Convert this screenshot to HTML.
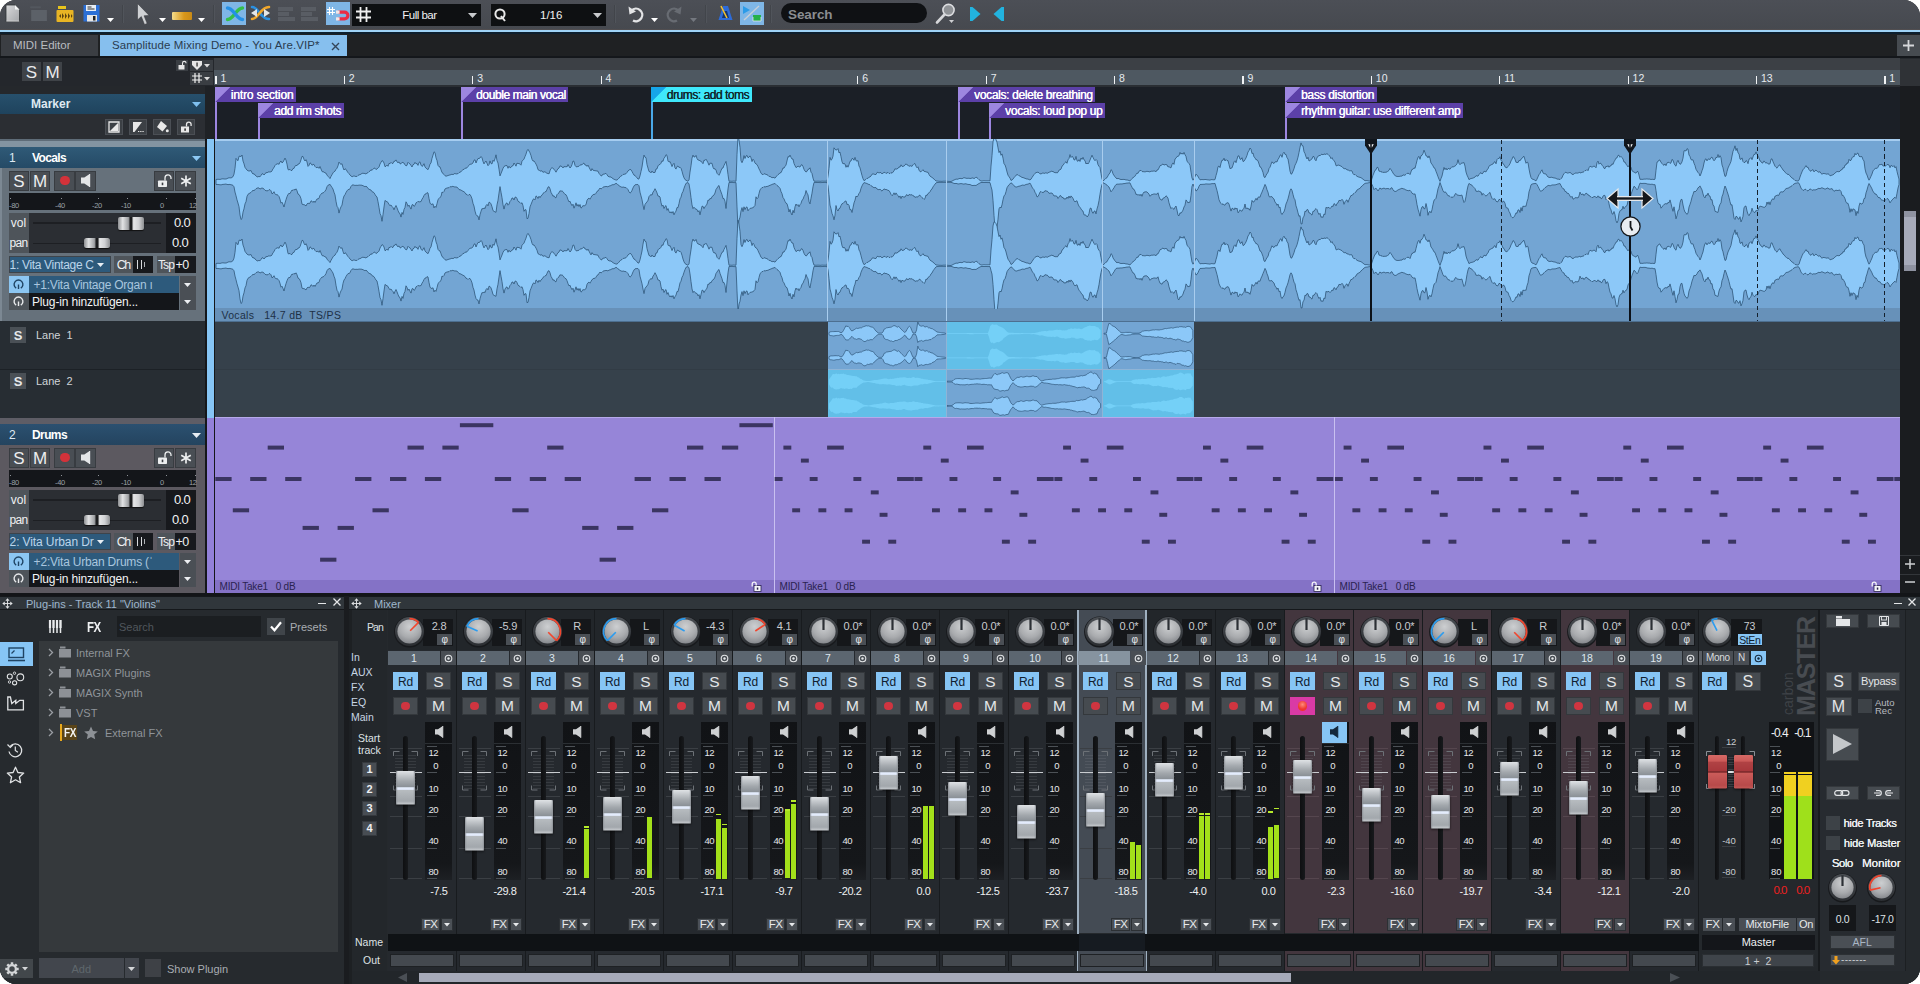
<!DOCTYPE html>
<html lang="en"><head><meta charset="utf-8"><title>Samplitude Mixing Demo - You Are.VIP</title>
<style>
html,body{margin:0;padding:0;background:#fff;}
body{width:1920px;height:984px;overflow:hidden;font-family:"Liberation Sans",sans-serif;}
#app{position:absolute;left:0;top:0;width:1920px;height:984px;overflow:hidden;background:#25292d;border-radius:16px;}
#app div,#app svg{position:absolute;box-sizing:border-box;}
#app svg{overflow:visible;}
.t{white-space:nowrap;line-height:1;}
.b{font-weight:bold;}
.btn{background:#464b51;box-shadow:inset 0 0 0 1px #33373c;}
.mk{font-size:12px;color:#fff;white-space:nowrap;line-height:15px;height:15px;padding:0 4px 0 16px;}

</style></head>
<body>
<div id="app">
<div style="left:0px;top:0px;width:1920px;height:30px;background:linear-gradient(#4c4f56,#46494f);"></div>
<div style="left:0px;top:28.8px;width:1920px;height:1.2px;background:#514e50;"></div>
<div style="left:0px;top:30px;width:1920px;height:2px;background:#9fd3f6;"></div>
<div style="left:0px;top:32px;width:1920px;height:2px;background:#0d1f2e;"></div>
<div style="left:0px;top:34px;width:1920px;height:23px;background:#1f2123;"></div>
<div style="left:0px;top:55.8px;width:1920px;height:2.4px;background:#14171b;"></div>
<svg style="left:6px;top:5px;" width="13.5" height="16.5" viewBox="0 0 13.5 16.5"><defs><linearGradient id="dg" x1="0" y1="0" x2="1" y2="1"><stop offset="0" stop-color="#d9dadc"/><stop offset="1" stop-color="#a4a6a9"/></linearGradient></defs><path d="M0 0h9l4.500 4.500v12H0z" fill="url(#dg)" stroke="#2f3236" stroke-width="0.8"/><path d="M9 0v4.500h4.500z" fill="#f4f5f6"/><path d="M0.300 16.200h12.900" stroke="#e8e9ea" stroke-width="0.700"/></svg>
<svg style="left:30px;top:5px;" width="18" height="17" viewBox="0 0 18 17"><rect x="0" y="1.300" width="11" height="2" rx="1" fill="#53575e"/><rect x="1.200" y="5" width="15.700" height="11" fill="#5c6168"/></svg>
<svg style="left:56px;top:5px;" width="19" height="18" viewBox="0 0 19 18"><rect x="2" y="1" width="8" height="3" fill="#e8c41c"/><rect x="0.5" y="5" width="17" height="12" rx="1" fill="#e9b524"/><path d="M3 11l2-2v4zM6 8v6l2-3zM9 8l2 3-2 3zM12 8v6l2-3zM15 9v4l1.5-2z" fill="#5a4310"/></svg>
<svg style="left:83px;top:4px;" width="17" height="18" viewBox="0 0 17 18"><path d="M0.5 1h16v16.5h-16z" fill="#2b6fd6"/><rect x="3" y="1" width="10" height="6" fill="#e8eef5"/><rect x="4.5" y="2.5" width="4" height="1" fill="#333"/><rect x="4.5" y="4.5" width="7" height="1" fill="#333"/><rect x="4" y="11" width="10" height="6.5" fill="#e6e6e6"/><rect x="10" y="12" width="2.5" height="4.5" fill="#222"/></svg>
<svg style="left:106.5px;top:18px;" width="7" height="4" viewBox="0 0 7 4"><path d="M0 0h7l-3.5 4z" fill="#fff"/></svg>
<div style="left:122px;top:5px;width:2px;height:18px;background:linear-gradient(90deg,#3a3d42,#585c63);"></div>
<svg style="left:136.5px;top:2.5px;" width="13" height="22" viewBox="0 0 13 22"><path d="M0.500 0.500v16.500l3.800-3.400 3.200 8 2.700-1.100-3.100-7.700 5-.400z" fill="#cfd1d4" stroke="#3a3d42" stroke-width="0.600"/></svg>
<svg style="left:158.5px;top:18px;" width="7" height="4" viewBox="0 0 7 4"><path d="M0 0h7l-3.5 4z" fill="#fff"/></svg>
<div style="left:172px;top:12px;width:20px;height:7.5px;background:linear-gradient(90deg,#f5dc8a,#d8971b 60%,#c98a15);border-radius:1px;"></div>
<svg style="left:197.5px;top:18px;" width="7" height="4" viewBox="0 0 7 4"><path d="M0 0h7l-3.5 4z" fill="#fff"/></svg>
<div style="left:213px;top:5px;width:2px;height:18px;background:linear-gradient(90deg,#3a3d42,#585c63);"></div>
<div style="left:222px;top:2px;width:24px;height:23px;background:#7fb6e6;"></div>
<svg style="left:225.5px;top:5.5px;" width="18" height="16" viewBox="0 0 18 16"><path d="M1.500 13.500C7.500 13.500 10.500 2 16.500 2" fill="none" stroke="#35c04a" stroke-width="3.400" stroke-linecap="round"/><path d="M1.500 2C7.500 2 10.500 13.500 16.500 13.500" fill="none" stroke="#2490e6" stroke-width="3.400" stroke-linecap="round"/></svg>
<svg style="left:251px;top:5px;" width="20" height="17" viewBox="0 0 20 17"><path d="M1 2C8 2 9 14 18 14" fill="none" stroke="#2a8fe0" stroke-width="2.6" stroke-linecap="round"/><path d="M1 14C8 14 9 2 18 2" fill="none" stroke="#f0a62a" stroke-width="2.6" stroke-linecap="round"/><path d="M0 8l6-4v8zM19 8l-6-4v8z" fill="#e4e6e8"/></svg>
<div style="left:278px;top:7px;width:15px;height:3.5px;background:#595d64;"></div>
<div style="left:278px;top:12px;width:10.5px;height:3.5px;background:#595d64;"></div>
<div style="left:278px;top:17px;width:16.5px;height:3.5px;background:#595d64;"></div>
<div style="left:301px;top:7px;width:15px;height:3.5px;background:#595d64;"></div>
<div style="left:301px;top:12px;width:10.5px;height:3.5px;background:#595d64;"></div>
<div style="left:301px;top:17px;width:16.5px;height:3.5px;background:#595d64;"></div>
<div style="left:326px;top:2px;width:24px;height:23px;background:#7fb6e6;"></div>
<svg style="left:327px;top:6px;" width="23" height="16" viewBox="0 0 23 16"><path d="M0 3.500h8M0 6.500h8M2.500 1v8M5.500 1v8" stroke="#ffffff" stroke-width="1.100" fill="none"/><path d="M11 4.500h6.500a5 5 0 0 1 0 10H11v-3.200h6.500a1.800 1.800 0 0 0 0-3.600H11z" fill="#ea2d45"/><rect x="9" y="4.500" width="3.600" height="3.200" fill="#f0e6e8"/><rect x="9" y="11.300" width="3.600" height="3.200" fill="#f0e6e8"/></svg>
<div style="left:352px;top:4px;width:129px;height:22px;background:#0e1012;"></div>
<svg style="left:356px;top:7px;" width="15" height="15" viewBox="0 0 15 15"><path d="M0 4.5h15M0 10.5h15M4.5 0v15M10.5 0v15" stroke="#f0f0f0" stroke-width="1.8"/></svg>
<div class="t" style="left:402.3px;top:9.5px;font-size:11.5px;color:#f2f2f2;letter-spacing:-0.51px;">Full bar</div>
<svg style="left:468px;top:13px;" width="9" height="5" viewBox="0 0 9 5"><path d="M0 0h9l-4.5 5z" fill="#c9cbce"/></svg>
<div style="left:491px;top:4px;width:115px;height:22px;background:#0e1012;"></div>
<svg style="left:494px;top:8px;" width="13" height="14" viewBox="0 0 13 14"><circle cx="6" cy="6" r="4.6" fill="none" stroke="#e8e8e8" stroke-width="2"/><path d="M7 8l4 5" stroke="#e8e8e8" stroke-width="2"/></svg>
<div class="t" style="left:540px;top:9.5px;font-size:11.5px;color:#f2f2f2;">1/16</div>
<svg style="left:593px;top:13px;" width="9" height="5" viewBox="0 0 9 5"><path d="M0 0h9l-4.5 5z" fill="#c9cbce"/></svg>
<div style="left:614px;top:5px;width:2px;height:18px;background:linear-gradient(90deg,#3a3d42,#585c63);"></div>
<svg style="left:628px;top:5px;" width="17" height="18" viewBox="0 0 17 18"><path d="M3.5 5.5A6.3 6.3 0 1 1 5 15.5" fill="none" stroke="#e3e4e6" stroke-width="2.4"/><path d="M0.5 1.5l1 8 6.5-3z" fill="#e3e4e6"/></svg>
<svg style="left:650.5px;top:18px;" width="7" height="4" viewBox="0 0 7 4"><path d="M0 0h7l-3.5 4z" fill="#fff"/></svg>
<svg style="left:665px;top:5px;" width="17" height="18" viewBox="0 0 17 18"><path d="M13.5 5.5A6.3 6.3 0 1 0 12 15.5" fill="none" stroke="#686c73" stroke-width="2.4"/><path d="M16.5 1.5l-1 8-6.5-3z" fill="#686c73"/></svg>
<svg style="left:690px;top:18px;" width="7" height="4" viewBox="0 0 7 4"><path d="M0 0h7l-3.5 4z" fill="#74787f"/></svg>
<div style="left:705px;top:5px;width:2px;height:18px;background:linear-gradient(90deg,#3a3d42,#585c63);"></div>
<svg style="left:718px;top:5px;" width="15" height="16" viewBox="0 0 15 16"><path d="M5 1h5l4.5 14h-14z" fill="#2d6bd8"/><path d="M6 6h3l2 7h-7z" fill="#17366e"/><path d="M3 1l6 12" stroke="#f2c230" stroke-width="1.6"/></svg>
<div style="left:740px;top:2px;width:24px;height:23px;background:#7fb6e6;"></div>
<svg style="left:742px;top:5px;" width="21" height="17" viewBox="0 0 21 17"><path d="M1 1l7 4-7 4z" fill="#2b9be8"/><path d="M2 15L17 1" stroke="#c9cfd6" stroke-width="1.3"/><rect x="11" y="10" width="8" height="6" fill="#25b04a"/><path d="M11 12v4h8v-4" fill="none" stroke="#dfe4ea" stroke-width="0.8"/></svg>
<div style="left:770px;top:5px;width:2px;height:18px;background:linear-gradient(90deg,#3a3d42,#585c63);"></div>
<div style="left:781px;top:3px;width:146px;height:20px;background:#0f1114;border-radius:10px;"></div>
<div class="t b" style="left:788px;top:8.3px;font-size:13.5px;color:#8a8d90;letter-spacing:-0.09px;">Search</div>
<svg style="left:935px;top:3px;" width="22" height="22" viewBox="0 0 22 22"><circle cx="13.5" cy="7" r="5.6" fill="#8f9296" stroke="#dcdde0" stroke-width="1.6"/><path d="M9.5 11.5L2 19.5" stroke="#d6d7da" stroke-width="2.6" stroke-linecap="round"/><path d="M14 17h5l-2.5 3z" fill="#cfd0d3"/></svg>
<svg style="left:969px;top:7px;" width="12" height="14" viewBox="0 0 12 14"><path d="M1 0h2.5l8 7-8 7H1z" fill="#22b3df"/></svg>
<svg style="left:993px;top:7px;" width="12" height="14" viewBox="0 0 12 14"><path d="M11 0H8.5l-8 7 8 7H11z" fill="#22b3df"/></svg>
<div style="left:1px;top:35.3px;width:97px;height:20.5px;background:#3b3e43;"></div>
<div class="t" style="left:13px;top:40.3px;font-size:11.5px;color:#b9bcc0;">MIDI Editor</div>
<div style="left:100px;top:35.3px;width:247px;height:20.5px;background:#86bfee;"></div>
<div class="t" style="left:112px;top:40.3px;font-size:11.5px;color:#2a3c50;letter-spacing:0.10px;">Samplitude Mixing Demo - You Are.VIP*</div>
<svg style="left:331px;top:42px;" width="9" height="9" viewBox="0 0 9 9"><path d="M1 1l7 7M8 1l-7 7" stroke="#34465a" stroke-width="1.4"/></svg>
<div style="left:1897px;top:35px;width:23px;height:21px;background:#464b50;"></div>
<svg style="left:1903px;top:40px;" width="11" height="11" viewBox="0 0 11 11"><path d="M0 5.5h11M5.5 0v11" stroke="#d5d7da" stroke-width="1.8"/></svg>
<div style="left:0px;top:58px;width:214px;height:28px;background:#24272c;"></div>
<div style="left:214px;top:58px;width:1686px;height:12px;background:#3c4045;"></div>
<div style="left:214px;top:70px;width:1686px;height:15.5px;background:#4e5861;"></div>
<div style="left:214px;top:85px;width:1686px;height:1.5px;background:#2a2e33;"></div>
<div style="left:1900px;top:59px;width:20px;height:537px;background:#1a1c1f;"></div>
<div style="left:1900px;top:59px;width:20px;height:27px;background:#2f3236;"></div>
<div style="left:22px;top:62px;width:19px;height:19px;background:#3f4348;"></div>
<div class="t" style="left:22px;top:64px;font-size:17px;color:#e9eaec;width:19px;text-align:center;">S</div>
<div style="left:43px;top:62px;width:19px;height:19px;background:#3f4348;"></div>
<div class="t" style="left:43px;top:64px;font-size:17px;color:#e9eaec;width:19px;text-align:center;">M</div>
<div style="left:176px;top:60px;width:12px;height:11px;background:#3a3e43;"></div>
<svg style="left:178px;top:61px;" width="9" height="9" viewBox="0 0 9 9"><rect x="0.5" y="4" width="6" height="4.5" fill="#e6e6e6"/><path d="M4.5 4V2.2a1.8 1.8 0 0 1 3.6 0" fill="none" stroke="#e6e6e6" stroke-width="1.1"/></svg>
<div style="left:190px;top:60px;width:23px;height:11px;background:#3a3e43;"></div>
<svg style="left:192px;top:61px;" width="10" height="9" viewBox="0 0 10 9"><path d="M0 0h10v4l-5 5-5-5z" fill="#e6e6e6"/><rect x="4.4" y="1.5" width="1.3" height="4" fill="#333"/></svg>
<svg style="left:204px;top:64px;" width="6" height="3.5" viewBox="0 0 6 3.5"><path d="M0 0h6l-3.0 3.5z" fill="#dcdcdc"/></svg>
<div style="left:190px;top:72px;width:23px;height:13px;background:#3a3e43;"></div>
<svg style="left:192px;top:73px;" width="10" height="10" viewBox="0 0 10 10"><path d="M0 3h10M0 7h10M3 0v10M7 0v10" stroke="#f0f0f0" stroke-width="1.2"/></svg>
<svg style="left:204px;top:77px;" width="6" height="3.5" viewBox="0 0 6 3.5"><path d="M0 0h6l-3.0 3.5z" fill="#dcdcdc"/></svg>
<div style="left:215.4px;top:76px;width:1.2px;height:8px;background:#f0f2f4;"></div>
<div class="t" style="left:220.4px;top:73.3px;font-size:10.5px;color:#e6eaee;">1</div>
<div style="left:343.78px;top:76px;width:1.2px;height:8px;background:#f0f2f4;"></div>
<div class="t" style="left:348.78px;top:73.3px;font-size:10.5px;color:#e6eaee;">2</div>
<div style="left:472.16px;top:76px;width:1.2px;height:8px;background:#f0f2f4;"></div>
<div class="t" style="left:477.16px;top:73.3px;font-size:10.5px;color:#e6eaee;">3</div>
<div style="left:600.54px;top:76px;width:1.2px;height:8px;background:#f0f2f4;"></div>
<div class="t" style="left:605.54px;top:73.3px;font-size:10.5px;color:#e6eaee;">4</div>
<div style="left:728.92px;top:76px;width:1.2px;height:8px;background:#f0f2f4;"></div>
<div class="t" style="left:733.92px;top:73.3px;font-size:10.5px;color:#e6eaee;">5</div>
<div style="left:857.3px;top:76px;width:1.2px;height:8px;background:#f0f2f4;"></div>
<div class="t" style="left:862.3px;top:73.3px;font-size:10.5px;color:#e6eaee;">6</div>
<div style="left:985.68px;top:76px;width:1.2px;height:8px;background:#f0f2f4;"></div>
<div class="t" style="left:990.68px;top:73.3px;font-size:10.5px;color:#e6eaee;">7</div>
<div style="left:1114.06px;top:76px;width:1.2px;height:8px;background:#f0f2f4;"></div>
<div class="t" style="left:1119.06px;top:73.3px;font-size:10.5px;color:#e6eaee;">8</div>
<div style="left:1242.44px;top:76px;width:1.2px;height:8px;background:#f0f2f4;"></div>
<div class="t" style="left:1247.44px;top:73.3px;font-size:10.5px;color:#e6eaee;">9</div>
<div style="left:1370.82px;top:76px;width:1.2px;height:8px;background:#f0f2f4;"></div>
<div class="t" style="left:1375.82px;top:73.3px;font-size:10.5px;color:#e6eaee;">10</div>
<div style="left:1499.2px;top:76px;width:1.2px;height:8px;background:#f0f2f4;"></div>
<div class="t" style="left:1504.2px;top:73.3px;font-size:10.5px;color:#e6eaee;">11</div>
<div style="left:1627.58px;top:76px;width:1.2px;height:8px;background:#f0f2f4;"></div>
<div class="t" style="left:1632.58px;top:73.3px;font-size:10.5px;color:#e6eaee;">12</div>
<div style="left:1755.96px;top:76px;width:1.2px;height:8px;background:#f0f2f4;"></div>
<div class="t" style="left:1760.96px;top:73.3px;font-size:10.5px;color:#e6eaee;">13</div>
<div style="left:1884.34px;top:76px;width:1.2px;height:8px;background:#f0f2f4;"></div>
<div class="t" style="left:1889.34px;top:73.3px;font-size:10.5px;color:#e6eaee;">1</div>
<div style="left:214px;top:86.5px;width:1686px;height:52.5px;background:#1b1f26;"></div>
<div style="left:215px;top:87px;width:1.6px;height:52px;background:#9d86e0;"></div>
<div style="left:215px;top:87px;width:81px;height:15px;background:linear-gradient(135deg,#9d86e0 0,#9d86e0 10.5px,#5c40a8 11px);"></div>
<div class="t" style="left:230.7px;top:88.6px;font-size:12px;color:#fff;letter-spacing:-0.16px;text-shadow:0.35px 0 0 #fff;">intro section</div>
<div style="left:258px;top:103px;width:1.6px;height:36px;background:#9d86e0;"></div>
<div style="left:258px;top:103px;width:85.7px;height:15px;background:linear-gradient(135deg,#9d86e0 0,#9d86e0 10.5px,#5c40a8 11px);"></div>
<div class="t" style="left:274px;top:104.6px;font-size:12px;color:#fff;letter-spacing:-0.39px;text-shadow:0.35px 0 0 #fff;">add rim shots</div>
<div style="left:461px;top:87px;width:1.6px;height:52px;background:#9d86e0;"></div>
<div style="left:461px;top:87px;width:107.4px;height:15px;background:linear-gradient(135deg,#9d86e0 0,#9d86e0 10.5px,#5c40a8 11px);"></div>
<div class="t" style="left:476px;top:88.6px;font-size:12px;color:#fff;letter-spacing:-0.41px;text-shadow:0.35px 0 0 #fff;">double main vocal</div>
<div style="left:651px;top:87px;width:1.6px;height:52px;background:#4aa8e8;"></div>
<div style="left:651px;top:87px;width:100.7px;height:15px;background:linear-gradient(135deg,#16a5e8 0,#16a5e8 10.5px,#3fe8fb 11px);"></div>
<div class="t" style="left:666.7px;top:88.6px;font-size:12px;color:#10262c;letter-spacing:-0.47px;text-shadow:0.35px 0 0 #10262c;">drums: add toms</div>
<div style="left:958px;top:87px;width:1.6px;height:52px;background:#9d86e0;"></div>
<div style="left:958px;top:87px;width:137.4px;height:15px;background:linear-gradient(135deg,#9d86e0 0,#9d86e0 10.5px,#5c40a8 11px);"></div>
<div class="t" style="left:974px;top:88.6px;font-size:12px;color:#fff;letter-spacing:-0.34px;text-shadow:0.35px 0 0 #fff;">vocals: delete breathing</div>
<div style="left:989px;top:103px;width:1.6px;height:36px;background:#9d86e0;"></div>
<div style="left:989px;top:103px;width:116px;height:15px;background:linear-gradient(135deg,#9d86e0 0,#9d86e0 10.5px,#5c40a8 11px);"></div>
<div class="t" style="left:1005px;top:104.6px;font-size:12px;color:#fff;letter-spacing:-0.32px;text-shadow:0.35px 0 0 #fff;">vocals: loud pop up</div>
<div style="left:1285px;top:87px;width:1.6px;height:52px;background:#9d86e0;"></div>
<div style="left:1285px;top:87px;width:91.6px;height:15px;background:linear-gradient(135deg,#9d86e0 0,#9d86e0 10.5px,#5c40a8 11px);"></div>
<div class="t" style="left:1300.9px;top:88.6px;font-size:12px;color:#fff;letter-spacing:-0.29px;text-shadow:0.35px 0 0 #fff;">bass distortion</div>
<div style="left:1285px;top:103px;width:1.6px;height:36px;background:#9d86e0;"></div>
<div style="left:1285px;top:103px;width:178px;height:15px;background:linear-gradient(135deg,#9d86e0 0,#9d86e0 10.5px,#5c40a8 11px);"></div>
<div class="t" style="left:1300.9px;top:104.6px;font-size:12px;color:#fff;letter-spacing:-0.31px;text-shadow:0.35px 0 0 #fff;">rhythm guitar: use different amp</div>
<div style="left:0px;top:86px;width:205px;height:8px;background:#25282c;"></div>
<div style="left:205px;top:86px;width:9px;height:53px;background:#1f2226;"></div>
<div style="left:0px;top:94px;width:205px;height:20px;background:linear-gradient(#27506c,#1f435d);"></div>
<div class="t b" style="left:31px;top:98px;font-size:12px;color:#dfe9f2;">Marker</div>
<svg style="left:192px;top:102px;" width="9" height="5" viewBox="0 0 9 5"><path d="M0 0h9l-4.5 5z" fill="#7fc0ef"/></svg>
<div style="left:0px;top:114px;width:205px;height:25px;background:#2b2e33;"></div>
<div style="left:105px;top:119px;width:18px;height:16px;background:#3c4045;box-shadow:inset 0 0 0 1px #4b4f55;"></div>
<div style="left:129px;top:119px;width:18px;height:16px;background:#3c4045;box-shadow:inset 0 0 0 1px #4b4f55;"></div>
<div style="left:153px;top:119px;width:18px;height:16px;background:#3c4045;box-shadow:inset 0 0 0 1px #4b4f55;"></div>
<div style="left:177px;top:119px;width:18px;height:16px;background:#3c4045;box-shadow:inset 0 0 0 1px #4b4f55;"></div>
<svg style="left:108px;top:121px;" width="12" height="12" viewBox="0 0 12 12"><path d="M1 1h10v10H1z" fill="none" stroke="#e8e8e8" stroke-width="1.3"/><path d="M10 2v8H2z" fill="#e8e8e8"/></svg>
<svg style="left:132px;top:121px;" width="13" height="12" viewBox="0 0 13 12"><path d="M1 1h9L2.5 11H1z" fill="#e8e8e8"/><path d="M6 10.5h1.3M8.2 10.5h1.3M10.4 10.5h1.3" stroke="#e8e8e8" stroke-width="1.2"/></svg>
<svg style="left:156px;top:120px;" width="13" height="13" viewBox="0 0 13 13"><path d="M5 1l6 5-4.5 5.5L1 7z" fill="#e8e8e8"/><circle cx="11.3" cy="10.8" r="1.5" fill="#e8e8e8"/></svg>
<svg style="left:180px;top:121px;" width="12" height="12" viewBox="0 0 12 12"><rect x="1" y="5.5" width="8" height="6" fill="#e8e8e8"/><path d="M6.5 5.5V3.4a2.3 2.3 0 0 1 4.6 0V5" fill="none" stroke="#e8e8e8" stroke-width="1.3"/><rect x="4.3" y="7.4" width="1.6" height="2.4" fill="#333"/></svg>
<div style="left:0px;top:139px;width:205px;height:8.5px;background:#8394a1;"></div>
<div style="left:0px;top:139px;width:205px;height:1.5px;background:#5e6c78;"></div>
<div style="left:0px;top:168px;width:205px;height:153px;background:#66717b;"></div>
<div style="left:0px;top:147px;width:205px;height:21px;background:linear-gradient(#2f5a77,#254a66);"></div>
<div class="t" style="left:9px;top:152px;font-size:12px;color:#dfe9f2;">1</div>
<div class="t b" style="left:32px;top:152px;font-size:12px;color:#ffffff;letter-spacing:-0.63px;">Vocals</div>
<svg style="left:192px;top:156px;" width="9" height="5" viewBox="0 0 9 5"><path d="M0 0h9l-4.5 5z" fill="#8cc8f4"/></svg>
<div style="left:9px;top:170.5px;width:20.3px;height:20px;background:#494e54;box-shadow:inset 0 0 0 1px #383c41;"></div>
<div style="left:29.8px;top:170.5px;width:20.6px;height:20px;background:#494e54;box-shadow:inset 0 0 0 1px #383c41;"></div>
<div style="left:54.2px;top:170.5px;width:20.5px;height:20px;background:#494e54;box-shadow:inset 0 0 0 1px #383c41;"></div>
<div style="left:75.4px;top:170.5px;width:20.8px;height:20px;background:#494e54;box-shadow:inset 0 0 0 1px #383c41;"></div>
<div style="left:154px;top:170.5px;width:20.2px;height:20px;background:#494e54;box-shadow:inset 0 0 0 1px #383c41;"></div>
<div style="left:174.8px;top:170.5px;width:20.8px;height:20px;background:#494e54;box-shadow:inset 0 0 0 1px #383c41;"></div>
<div class="t" style="left:9px;top:172.5px;font-size:17px;color:#ecedef;width:20px;text-align:center;">S</div>
<div class="t" style="left:30px;top:172.5px;font-size:17px;color:#ecedef;width:20px;text-align:center;">M</div>
<div style="left:60px;top:175.7px;width:9.6px;height:9.6px;background:#d3323a;border-radius:50%;"></div>
<svg style="left:80.5px;top:174px;" width="10" height="13" viewBox="0 0 10 13"><path d="M0 3.5h3.3L8.6 0v13.0L3.3 9.5H0z" fill="#e4e6e8"/><path d="M8.6 0v13.0" stroke="#e4e6e8" stroke-width="1.2"/></svg>
<svg style="left:156.5px;top:174px;" width="16" height="14" viewBox="0 0 16 14"><rect x="1" y="6.5" width="9" height="6.5" rx="0.8" fill="#eceeef"/><path d="M8 6.5V4a3 3 0 0 1 6-.2V5" fill="none" stroke="#eceeef" stroke-width="1.3"/><rect x="4.7" y="8.6" width="1.6" height="2.6" fill="#3a3e43"/></svg>
<svg style="left:179.5px;top:175px;" width="12" height="12" viewBox="0 0 12 12"><path d="M6 0.5v11M1.2 3.2l9.6 5.6M10.8 3.2L1.2 8.8" stroke="#eceeef" stroke-width="1.7"/></svg>
<div style="left:9px;top:193px;width:187px;height:17px;background:#14161a;"></div>
<div style="left:10px;top:197.5px;width:1px;height:1.5px;background:#8e9297;"></div>
<div class="t" style="left:9px;top:201.5px;font-size:7.5px;color:#9ea2a8;letter-spacing:-0.3px;">-80</div>
<div style="left:61px;top:197.5px;width:1px;height:1.5px;background:#8e9297;"></div>
<div class="t" style="left:55px;top:201.5px;font-size:7.5px;color:#9ea2a8;letter-spacing:-0.3px;">-40</div>
<div style="left:98px;top:197.5px;width:1px;height:1.5px;background:#8e9297;"></div>
<div class="t" style="left:92px;top:201.5px;font-size:7.5px;color:#9ea2a8;letter-spacing:-0.3px;">-20</div>
<div style="left:127px;top:197.5px;width:1px;height:1.5px;background:#8e9297;"></div>
<div class="t" style="left:121px;top:201.5px;font-size:7.5px;color:#9ea2a8;letter-spacing:-0.3px;">-10</div>
<div style="left:166px;top:197.5px;width:1px;height:1.5px;background:#8e9297;"></div>
<div class="t" style="left:160px;top:201.5px;font-size:7.5px;color:#9ea2a8;letter-spacing:-0.3px;">0</div>
<div style="left:195px;top:197.5px;width:1px;height:1.5px;background:#8e9297;"></div>
<div class="t" style="left:189px;top:201.5px;font-size:7.5px;color:#9ea2a8;letter-spacing:-0.3px;">12</div>
<div style="left:9px;top:213px;width:187px;height:40px;background:#2b2e33;"></div>
<div style="left:9px;top:213px;width:19.5px;height:19.5px;background:#4e545a;"></div>
<div style="left:9px;top:233px;width:19.5px;height:20px;background:#4e545a;"></div>
<div style="left:166px;top:213px;width:30px;height:40px;background:#17191d;"></div>
<div class="t" style="left:10.8px;top:216.5px;font-size:12px;color:#f0f1f2;letter-spacing:0.02px;">vol</div>
<div class="t" style="left:9.4px;top:236.5px;font-size:12px;color:#f0f1f2;letter-spacing:-0.61px;">pan</div>
<div style="left:33px;top:222px;width:128px;height:1.5px;background:#1d1f23;"></div>
<div style="left:33px;top:242.5px;width:128px;height:1.5px;background:#1d1f23;"></div>
<div style="left:118px;top:217px;width:26px;height:12.5px;background:linear-gradient(90deg,#8d8f92,#e2e3e4 18%,#9fa1a4 40%,#1c1d1f 47%,#1c1d1f 52%,#e6e7e8 60%,#d0d1d3 80%,#8d8f92);border-radius:2px;box-shadow:0 1px 1px #111;"></div>
<div style="left:84px;top:238px;width:26px;height:9.5px;background:linear-gradient(90deg,#8d8f92,#e2e3e4 18%,#9fa1a4 40%,#1c1d1f 47%,#1c1d1f 53%,#e6e7e8 60%,#d0d1d3 80%,#8d8f92);border-radius:2.5px;box-shadow:0 1px 1px #111;"></div>
<div class="t" style="left:174px;top:215.5px;font-size:13px;color:#f2f3f4;letter-spacing:-0.69px;">0.0</div>
<div class="t" style="left:172px;top:235.5px;font-size:13px;color:#f2f3f4;letter-spacing:-0.69px;">0.0</div>
<div style="left:9px;top:256px;width:101.5px;height:17px;background:#2d5a7c;box-shadow:inset 0 0 0 1px #3d444b;"></div>
<div class="t" style="left:9.6px;top:259px;font-size:12px;color:#bcd5ea;letter-spacing:-0.33px;">1: Vita Vintage C</div>
<svg style="left:97px;top:263px;" width="7" height="4" viewBox="0 0 7 4"><path d="M0 0h7l-3.5 4z" fill="#e8eef4"/></svg>
<div style="left:114px;top:256px;width:19px;height:17px;background:#4e545a;"></div>
<div style="left:133px;top:256px;width:20px;height:17px;background:#17191d;"></div>
<div class="t" style="left:116.7px;top:258.5px;font-size:12.5px;color:#eef0f2;letter-spacing:-1.34px;">Ch</div>
<div style="left:137px;top:260px;width:1.3px;height:9px;background:#d8dadd;"></div>
<div style="left:140.5px;top:260px;width:1.3px;height:9px;background:#d8dadd;"></div>
<div style="left:144px;top:262px;width:1.2px;height:5px;background:#b0b3b7;"></div>
<div style="left:157px;top:256px;width:18px;height:17px;background:#4e545a;"></div>
<div style="left:175px;top:256px;width:21px;height:17px;background:#17191d;"></div>
<div class="t" style="left:158px;top:258.5px;font-size:12px;color:#eef0f2;letter-spacing:-0.89px;">Tsp</div>
<div class="t" style="left:175.6px;top:259px;font-size:12.5px;color:#eef0f2;letter-spacing:-0.73px;">+0</div>
<div style="left:9px;top:276px;width:19.5px;height:16.5px;background:#8cc6f2;"></div>
<div style="left:28.5px;top:276px;width:150px;height:16.5px;background:#2d5a7c;"></div>
<div style="left:180px;top:276px;width:16px;height:16.5px;background:#4a4f55;"></div>
<div style="left:9px;top:293px;width:19.5px;height:16.5px;background:#4e545a;"></div>
<div style="left:28.5px;top:293px;width:150px;height:16.5px;background:#14161a;"></div>
<div style="left:180px;top:293px;width:16px;height:16.5px;background:#4a4f55;"></div>
<svg style="left:13px;top:279px;" width="11" height="11" viewBox="0 0 11 11"><path d="M3.2 9.2A4.4 4.4 0 1 1 7.8 9.2" fill="none" stroke="#1f4464" stroke-width="1.4"/><path d="M5.5 5.5v4.5" stroke="#1f4464" stroke-width="1.4"/></svg>
<svg style="left:184px;top:282.5px;" width="7" height="4" viewBox="0 0 7 4"><path d="M0 0h7l-3.5 4z" fill="#eceff2"/></svg>
<svg style="left:13px;top:296px;" width="11" height="11" viewBox="0 0 11 11"><path d="M3.2 9.2A4.4 4.4 0 1 1 7.8 9.2" fill="none" stroke="#e8eaec" stroke-width="1.4"/><path d="M5.5 5.5v4.5" stroke="#e8eaec" stroke-width="1.4"/></svg>
<svg style="left:184px;top:299.5px;" width="7" height="4" viewBox="0 0 7 4"><path d="M0 0h7l-3.5 4z" fill="#eceff2"/></svg>
<div class="t" style="left:33.6px;top:278.5px;font-size:12px;color:#a9c6df;letter-spacing:-0.25px;">+1:Vita Vintage Organ ı</div>
<div class="t" style="left:32px;top:295.5px;font-size:12px;color:#f2f3f4;letter-spacing:-0.16px;">Plug-in hinzufügen...</div>
<div style="left:0px;top:168px;width:2px;height:153px;background:#7c8893;"></div>
<div style="left:0px;top:321px;width:205px;height:96.5px;background:#272d33;"></div>
<div style="left:0px;top:369px;width:205px;height:1px;background:#1c2126;"></div>
<div style="left:10px;top:327px;width:16px;height:15.5px;background:#4a5056;"></div>
<div class="t b" style="left:10px;top:329px;font-size:13px;color:#e6e8ea;width:16px;text-align:center;">S</div>
<div class="t" style="left:36px;top:330px;font-size:11px;color:#d0d4d8;">Lane&nbsp;&nbsp;1</div>
<div style="left:10px;top:373px;width:16px;height:15.5px;background:#4a5056;"></div>
<div class="t b" style="left:10px;top:375px;font-size:13px;color:#e6e8ea;width:16px;text-align:center;">S</div>
<div class="t" style="left:36px;top:376px;font-size:11px;color:#d0d4d8;">Lane&nbsp;&nbsp;2</div>
<div style="left:205px;top:139px;width:1.5px;height:457px;background:#15171a;"></div>
<div style="left:206.5px;top:139px;width:7px;height:278.5px;background:#86c5f5;"></div>
<div style="left:213.5px;top:139px;width:1.5px;height:457px;background:#15171a;"></div>
<div style="left:206.5px;top:417.5px;width:7px;height:176px;background:#9381d9;"></div>
<div style="left:0px;top:417.5px;width:205px;height:7px;background:#5e5d66;"></div>
<div style="left:0px;top:445px;width:205px;height:153px;background:#5c5960;"></div>
<div style="left:0px;top:424px;width:205px;height:21px;background:linear-gradient(#2b5070,#24445f);"></div>
<div class="t" style="left:9px;top:429px;font-size:12px;color:#dfe9f2;">2</div>
<div class="t b" style="left:32px;top:429px;font-size:12px;color:#ffffff;letter-spacing:-0.60px;">Drums</div>
<svg style="left:192px;top:433px;" width="9" height="5" viewBox="0 0 9 5"><path d="M0 0h9l-4.5 5z" fill="#e6ecf2"/></svg>
<div style="left:9px;top:447.5px;width:20.3px;height:20px;background:#494e54;box-shadow:inset 0 0 0 1px #383c41;"></div>
<div style="left:29.8px;top:447.5px;width:20.6px;height:20px;background:#494e54;box-shadow:inset 0 0 0 1px #383c41;"></div>
<div style="left:54.2px;top:447.5px;width:20.5px;height:20px;background:#494e54;box-shadow:inset 0 0 0 1px #383c41;"></div>
<div style="left:75.4px;top:447.5px;width:20.8px;height:20px;background:#494e54;box-shadow:inset 0 0 0 1px #383c41;"></div>
<div style="left:154px;top:447.5px;width:20.2px;height:20px;background:#494e54;box-shadow:inset 0 0 0 1px #383c41;"></div>
<div style="left:174.8px;top:447.5px;width:20.8px;height:20px;background:#494e54;box-shadow:inset 0 0 0 1px #383c41;"></div>
<div class="t" style="left:9px;top:449.5px;font-size:17px;color:#ecedef;width:20px;text-align:center;">S</div>
<div class="t" style="left:30px;top:449.5px;font-size:17px;color:#ecedef;width:20px;text-align:center;">M</div>
<div style="left:60px;top:452.7px;width:9.6px;height:9.6px;background:#d3323a;border-radius:50%;"></div>
<svg style="left:80.5px;top:451px;" width="10" height="13" viewBox="0 0 10 13"><path d="M0 3.5h3.3L8.6 0v13.0L3.3 9.5H0z" fill="#e4e6e8"/><path d="M8.6 0v13.0" stroke="#e4e6e8" stroke-width="1.2"/></svg>
<svg style="left:156.5px;top:451px;" width="16" height="14" viewBox="0 0 16 14"><rect x="1" y="6.5" width="9" height="6.5" rx="0.8" fill="#eceeef"/><path d="M8 6.5V4a3 3 0 0 1 6-.2V5" fill="none" stroke="#eceeef" stroke-width="1.3"/><rect x="4.7" y="8.6" width="1.6" height="2.6" fill="#3a3e43"/></svg>
<svg style="left:179.5px;top:452px;" width="12" height="12" viewBox="0 0 12 12"><path d="M6 0.5v11M1.2 3.2l9.6 5.6M10.8 3.2L1.2 8.8" stroke="#eceeef" stroke-width="1.7"/></svg>
<div style="left:9px;top:470px;width:187px;height:17px;background:#14161a;"></div>
<div style="left:10px;top:474.5px;width:1px;height:1.5px;background:#8e9297;"></div>
<div class="t" style="left:9px;top:478.5px;font-size:7.5px;color:#9ea2a8;letter-spacing:-0.3px;">-80</div>
<div style="left:61px;top:474.5px;width:1px;height:1.5px;background:#8e9297;"></div>
<div class="t" style="left:55px;top:478.5px;font-size:7.5px;color:#9ea2a8;letter-spacing:-0.3px;">-40</div>
<div style="left:98px;top:474.5px;width:1px;height:1.5px;background:#8e9297;"></div>
<div class="t" style="left:92px;top:478.5px;font-size:7.5px;color:#9ea2a8;letter-spacing:-0.3px;">-20</div>
<div style="left:127px;top:474.5px;width:1px;height:1.5px;background:#8e9297;"></div>
<div class="t" style="left:121px;top:478.5px;font-size:7.5px;color:#9ea2a8;letter-spacing:-0.3px;">-10</div>
<div style="left:166px;top:474.5px;width:1px;height:1.5px;background:#8e9297;"></div>
<div class="t" style="left:160px;top:478.5px;font-size:7.5px;color:#9ea2a8;letter-spacing:-0.3px;">0</div>
<div style="left:195px;top:474.5px;width:1px;height:1.5px;background:#8e9297;"></div>
<div class="t" style="left:189px;top:478.5px;font-size:7.5px;color:#9ea2a8;letter-spacing:-0.3px;">12</div>
<div style="left:9px;top:490px;width:187px;height:40px;background:#2b2e33;"></div>
<div style="left:9px;top:490px;width:19.5px;height:19.5px;background:#4e545a;"></div>
<div style="left:9px;top:510px;width:19.5px;height:20px;background:#4e545a;"></div>
<div style="left:166px;top:490px;width:30px;height:40px;background:#17191d;"></div>
<div class="t" style="left:10.8px;top:493.5px;font-size:12px;color:#f0f1f2;letter-spacing:0.02px;">vol</div>
<div class="t" style="left:9.4px;top:513.5px;font-size:12px;color:#f0f1f2;letter-spacing:-0.61px;">pan</div>
<div style="left:33px;top:499px;width:128px;height:1.5px;background:#1d1f23;"></div>
<div style="left:33px;top:519.5px;width:128px;height:1.5px;background:#1d1f23;"></div>
<div style="left:118px;top:494px;width:26px;height:12.5px;background:linear-gradient(90deg,#8d8f92,#e2e3e4 18%,#9fa1a4 40%,#1c1d1f 47%,#1c1d1f 52%,#e6e7e8 60%,#d0d1d3 80%,#8d8f92);border-radius:2px;box-shadow:0 1px 1px #111;"></div>
<div style="left:84px;top:515px;width:26px;height:9.5px;background:linear-gradient(90deg,#8d8f92,#e2e3e4 18%,#9fa1a4 40%,#1c1d1f 47%,#1c1d1f 53%,#e6e7e8 60%,#d0d1d3 80%,#8d8f92);border-radius:2.5px;box-shadow:0 1px 1px #111;"></div>
<div class="t" style="left:174px;top:492.5px;font-size:13px;color:#f2f3f4;letter-spacing:-0.69px;">0.0</div>
<div class="t" style="left:172px;top:512.5px;font-size:13px;color:#f2f3f4;letter-spacing:-0.69px;">0.0</div>
<div style="left:9px;top:533px;width:101.5px;height:17px;background:#2d5a7c;box-shadow:inset 0 0 0 1px #3d444b;"></div>
<div class="t" style="left:9.6px;top:536px;font-size:12px;color:#bcd5ea;letter-spacing:-0.11px;">2: Vita Urban Dr</div>
<svg style="left:97px;top:540px;" width="7" height="4" viewBox="0 0 7 4"><path d="M0 0h7l-3.5 4z" fill="#e8eef4"/></svg>
<div style="left:114px;top:533px;width:19px;height:17px;background:#4e545a;"></div>
<div style="left:133px;top:533px;width:20px;height:17px;background:#17191d;"></div>
<div class="t" style="left:116.7px;top:535.5px;font-size:12.5px;color:#eef0f2;letter-spacing:-1.34px;">Ch</div>
<div style="left:137px;top:537px;width:1.3px;height:9px;background:#d8dadd;"></div>
<div style="left:140.5px;top:537px;width:1.3px;height:9px;background:#d8dadd;"></div>
<div style="left:144px;top:539px;width:1.2px;height:5px;background:#b0b3b7;"></div>
<div style="left:157px;top:533px;width:18px;height:17px;background:#4e545a;"></div>
<div style="left:175px;top:533px;width:21px;height:17px;background:#17191d;"></div>
<div class="t" style="left:158px;top:535.5px;font-size:12px;color:#eef0f2;letter-spacing:-0.89px;">Tsp</div>
<div class="t" style="left:175.6px;top:536px;font-size:12.5px;color:#eef0f2;letter-spacing:-0.73px;">+0</div>
<div style="left:9px;top:553px;width:19.5px;height:16.5px;background:#8cc6f2;"></div>
<div style="left:28.5px;top:553px;width:150px;height:16.5px;background:#2d5a7c;"></div>
<div style="left:180px;top:553px;width:16px;height:16.5px;background:#4a4f55;"></div>
<div style="left:9px;top:570px;width:19.5px;height:16.5px;background:#4e545a;"></div>
<div style="left:28.5px;top:570px;width:150px;height:16.5px;background:#14161a;"></div>
<div style="left:180px;top:570px;width:16px;height:16.5px;background:#4a4f55;"></div>
<svg style="left:13px;top:556px;" width="11" height="11" viewBox="0 0 11 11"><path d="M3.2 9.2A4.4 4.4 0 1 1 7.8 9.2" fill="none" stroke="#1f4464" stroke-width="1.4"/><path d="M5.5 5.5v4.5" stroke="#1f4464" stroke-width="1.4"/></svg>
<svg style="left:184px;top:559.5px;" width="7" height="4" viewBox="0 0 7 4"><path d="M0 0h7l-3.5 4z" fill="#eceff2"/></svg>
<svg style="left:13px;top:573px;" width="11" height="11" viewBox="0 0 11 11"><path d="M3.2 9.2A4.4 4.4 0 1 1 7.8 9.2" fill="none" stroke="#e8eaec" stroke-width="1.4"/><path d="M5.5 5.5v4.5" stroke="#e8eaec" stroke-width="1.4"/></svg>
<svg style="left:184px;top:576.5px;" width="7" height="4" viewBox="0 0 7 4"><path d="M0 0h7l-3.5 4z" fill="#eceff2"/></svg>
<div class="t" style="left:33.6px;top:555.5px;font-size:12px;color:#a9c6df;letter-spacing:-0.20px;">+2:Vita Urban Drums (ˈ</div>
<div class="t" style="left:32px;top:572.5px;font-size:12px;color:#f2f3f4;letter-spacing:-0.16px;">Plug-in hinzufügen...</div>
<div style="left:0px;top:593px;width:1920px;height:3px;background:#131518;"></div>
<div style="left:215px;top:139px;width:1685px;height:182px;background:#73a5d3;"></div>
<div style="left:215px;top:139px;width:1685px;height:1.5px;background:#a6cdf0;"></div>
<div style="left:215px;top:308px;width:1685px;height:13px;background:#6791b9;"></div>
<div style="left:215px;top:320.5px;width:1685px;height:1px;background:#4d6f90;"></div>
<svg style="left:215px;top:139px;overflow:hidden;" width="1685" height="170" viewBox="0 0 1685 170"><path d="M1.0 40.5 2.0 40.3 3.0 40.3 4.0 40.3 5.0 40.4 6.0 40.2 7.0 39.8 8.0 39.9 9.0 39.9 10.0 40.1 11.0 39.9 12.0 39.8 13.0 38.9 14.0 39.0 15.0 38.6 16.0 39.1 17.0 38.3 18.0 37.7 19.0 35.1 20.0 29.4 21.0 19.4 22.0 20.8 23.0 21.7 24.0 17.3 25.0 17.2 26.0 17.6 27.0 16.0 28.0 22.0 29.0 24.8 30.0 28.4 31.0 29.8 32.0 31.1 33.0 31.8 34.0 32.0 35.0 31.9 36.0 31.5 37.0 33.8 38.0 35.1 39.0 34.6 40.0 36.2 41.0 36.6 42.0 38.0 43.0 37.8 44.0 37.4 45.0 37.8 46.0 36.4 47.0 34.8 48.0 34.8 49.0 36.0 50.0 35.0 51.0 33.4 52.0 34.0 53.0 32.9 54.0 33.1 55.0 32.8 56.0 33.0 57.0 31.9 58.0 29.6 59.0 28.7 60.0 26.5 61.0 25.3 62.0 25.1 63.0 24.5 64.0 25.4 65.0 22.9 66.0 22.0 67.0 23.9 68.0 23.1 69.0 21.2 70.0 19.1 71.0 21.1 72.0 25.2 73.0 30.6 74.0 30.9 75.0 30.3 76.0 31.6 77.0 31.4 78.0 29.5 79.0 29.4 80.0 27.1 81.0 26.3 82.0 26.7 83.0 25.0 84.0 25.1 85.0 23.6 86.0 20.7 87.0 17.4 88.0 17.5 89.0 20.4 90.0 22.0 91.0 20.7 92.0 23.0 93.0 27.4 94.0 26.4 95.0 23.9 96.0 24.5 97.0 26.3 98.0 25.4 99.0 25.5 100.0 27.5 101.0 28.5 102.0 28.6 103.0 28.1 104.0 29.4 105.0 27.5 106.0 30.0 107.0 32.5 108.0 32.9 109.0 32.9 110.0 34.0 111.0 34.1 112.0 36.1 113.0 37.3 114.0 38.3 115.0 39.6 116.0 37.4 117.0 35.7 118.0 33.9 119.0 32.7 120.0 32.2 121.0 30.3 122.0 29.2 123.0 26.8 124.0 23.1 125.0 24.6 126.0 25.4 127.0 24.7 128.0 28.6 129.0 31.0 130.0 29.8 131.0 30.3 132.0 32.1 133.0 33.6 134.0 34.6 135.0 36.0 136.0 37.0 137.0 37.7 138.0 37.5 139.0 36.6 140.0 37.5 141.0 37.3 142.0 37.5 143.0 36.5 144.0 35.8 145.0 35.7 146.0 35.1 147.0 34.4 148.0 34.2 149.0 34.5 150.0 34.4 151.0 35.1 152.0 34.0 153.0 33.7 154.0 32.7 155.0 32.1 156.0 30.7 157.0 31.4 158.0 30.2 159.0 29.1 160.0 29.2 161.0 30.6 162.0 29.8 163.0 29.1 164.0 28.1 165.0 25.0 166.0 23.3 167.0 21.6 168.0 22.1 169.0 24.0 170.0 27.7 171.0 27.2 172.0 26.1 173.0 27.3 174.0 24.4 175.0 24.7 176.0 23.4 177.0 24.4 178.0 24.4 179.0 22.2 180.0 22.3 181.0 20.9 182.0 22.9 183.0 23.8 184.0 22.9 185.0 24.8 186.0 24.8 187.0 23.3 188.0 23.6 189.0 24.0 190.0 25.9 191.0 26.9 192.0 26.4 193.0 23.3 194.0 24.3 195.0 24.9 196.0 26.4 197.0 28.0 198.0 25.7 199.0 25.3 200.0 23.3 201.0 24.8 202.0 24.5 203.0 26.4 204.0 23.5 205.0 22.8 206.0 26.1 207.0 27.4 208.0 26.7 209.0 24.7 210.0 27.9 211.0 29.2 212.0 29.9 213.0 30.7 214.0 28.5 215.0 25.2 216.0 23.9 217.0 19.4 218.0 16.1 219.0 12.8 220.0 13.6 221.0 18.8 222.0 21.5 223.0 26.4 224.0 27.7 225.0 27.9 226.0 30.7 227.0 33.6 228.0 34.2 229.0 35.7 230.0 36.7 231.0 37.2 232.0 36.9 233.0 36.5 234.0 36.2 235.0 35.9 236.0 35.7 237.0 35.1 238.0 35.8 239.0 34.9 240.0 34.4 241.0 35.1 242.0 34.7 243.0 34.7 244.0 33.7 245.0 33.1 246.0 32.8 247.0 31.7 248.0 30.4 249.0 30.5 250.0 29.2 251.0 29.2 252.0 28.8 253.0 27.6 254.0 26.2 255.0 25.1 256.0 25.3 257.0 24.8 258.0 23.9 259.0 21.2 260.0 20.8 261.0 24.0 262.0 21.6 263.0 19.5 264.0 19.5 265.0 19.0 266.0 17.5 267.0 18.8 268.0 22.5 269.0 24.9 270.0 23.2 271.0 22.0 272.0 24.3 273.0 26.7 274.0 25.6 275.0 21.9 276.0 24.5 277.0 24.9 278.0 21.2 279.0 22.4 280.0 19.7 281.0 15.8 282.0 21.6 283.0 24.1 284.0 30.2 285.0 36.9 286.0 34.5 287.0 32.0 288.0 29.4 289.0 27.5 290.0 26.9 291.0 26.5 292.0 26.6 293.0 29.3 294.0 27.2 295.0 28.8 296.0 28.4 297.0 26.9 298.0 26.8 299.0 24.0 300.0 25.4 301.0 27.2 302.0 24.0 303.0 24.7 304.0 24.3 305.0 25.2 306.0 26.2 307.0 22.2 308.0 21.1 309.0 20.1 310.0 17.5 311.0 15.1 312.0 11.8 313.0 10.4 314.0 12.0 315.0 13.8 316.0 16.6 317.0 20.3 318.0 22.1 319.0 21.9 320.0 23.4 321.0 25.1 322.0 27.2 323.0 30.7 324.0 31.1 325.0 32.2 326.0 31.8 327.0 31.9 328.0 33.4 329.0 32.8 330.0 32.9 331.0 33.5 332.0 34.4 333.0 34.4 334.0 34.9 335.0 31.7 336.0 29.5 337.0 28.6 338.0 29.3 339.0 30.2 340.0 31.6 341.0 33.2 342.0 31.3 343.0 29.7 344.0 29.1 345.0 26.8 346.0 27.3 347.0 27.5 348.0 29.0 349.0 27.4 350.0 28.0 351.0 27.5 352.0 27.9 353.0 25.5 354.0 27.3 355.0 29.0 356.0 27.9 357.0 25.6 358.0 22.0 359.0 22.3 360.0 26.4 361.0 27.7 362.0 27.9 363.0 27.4 364.0 27.3 365.0 26.2 366.0 25.7 367.0 25.9 368.0 24.5 369.0 24.1 370.0 26.1 371.0 26.0 372.0 27.4 373.0 26.1 374.0 28.2 375.0 30.2 376.0 31.9 377.0 29.6 378.0 31.2 379.0 31.5 380.0 31.7 381.0 31.8 382.0 32.0 383.0 32.2 384.0 34.4 385.0 35.6 386.0 36.9 387.0 36.7 388.0 35.0 389.0 35.3 390.0 34.7 391.0 34.4 392.0 35.7 393.0 37.3 394.0 37.7 395.0 38.1 396.0 37.9 397.0 39.0 398.0 39.6 399.0 40.3 400.0 40.6 401.0 41.1 402.0 41.0 403.0 40.2 404.0 39.1 405.0 37.9 406.0 36.9 407.0 36.6 408.0 35.5 409.0 35.3 410.0 35.1 411.0 34.7 412.0 33.5 413.0 31.9 414.0 31.2 415.0 30.3 416.0 30.8 417.0 32.5 418.0 34.4 419.0 36.2 420.0 36.4 421.0 37.8 422.0 38.8 423.0 40.1 424.0 39.9 425.0 36.8 426.0 32.5 427.0 28.0 428.0 21.2 429.0 16.1 430.0 18.2 431.0 18.7 432.0 25.6 433.0 29.1 434.0 32.5 435.0 32.8 436.0 33.9 437.0 32.0 438.0 33.5 439.0 33.5 440.0 33.5 441.0 30.0 442.0 29.9 443.0 26.9 444.0 25.7 445.0 25.5 446.0 24.2 447.0 21.8 448.0 22.4 449.0 19.2 450.0 18.0 451.0 15.7 452.0 16.4 453.0 22.1 454.0 23.1 455.0 22.5 456.0 24.9 457.0 27.6 458.0 25.4 459.0 24.3 460.0 28.9 461.0 30.1 462.0 27.5 463.0 27.0 464.0 28.5 465.0 28.2 466.0 29.3 467.0 32.3 468.0 36.0 469.0 38.8 470.0 40.6 471.0 41.2 472.0 41.8 473.0 42.3 474.0 41.0 475.0 33.1 476.0 26.8 477.0 19.2 478.0 16.1 479.0 18.0 480.0 17.9 481.0 16.4 482.0 19.5 483.0 21.1 484.0 21.0 485.0 22.0 486.0 22.1 487.0 23.5 488.0 24.7 489.0 21.2 490.0 21.4 491.0 20.2 492.0 21.9 493.0 23.8 494.0 26.2 495.0 24.1 496.0 24.3 497.0 24.3 498.0 28.3 499.0 30.1 500.0 29.6 501.0 31.1 502.0 34.3 503.0 35.3 504.0 36.3 505.0 34.2 506.0 31.6 507.0 29.3 508.0 29.0 509.0 26.4 510.0 24.4 511.0 22.4 512.0 27.8 513.0 35.6 514.0 42.3 515.0 42.2 516.0 42.2 517.0 42.3 518.0 42.1 519.0 42.1 520.0 42.2 521.0 42.2 522.0 15.4 523.0 -2.9 524.0 1.0 525.0 8.4 526.0 21.8 527.0 23.7 528.0 21.4 529.0 16.6 530.0 19.5 531.0 17.0 532.0 16.4 533.0 18.7 534.0 18.2 535.0 16.9 536.0 18.8 537.0 22.6 538.0 20.2 539.0 21.5 540.0 24.1 541.0 24.9 542.0 25.6 543.0 27.6 544.0 29.9 545.0 31.8 546.0 34.3 547.0 35.1 548.0 35.8 549.0 34.7 550.0 35.0 551.0 35.4 552.0 35.7 553.0 36.3 554.0 37.5 555.0 37.3 556.0 38.1 557.0 38.7 558.0 38.5 559.0 38.5 560.0 39.2 561.0 37.9 562.0 36.7 563.0 35.7 564.0 35.0 565.0 33.8 566.0 33.7 567.0 31.6 568.0 28.9 569.0 29.2 570.0 27.4 571.0 26.1 572.0 21.9 573.0 17.6 574.0 18.1 575.0 16.1 576.0 18.3 577.0 20.1 578.0 20.0 579.0 24.5 580.0 26.7 581.0 28.6 582.0 28.0 583.0 27.0 584.0 27.7 585.0 28.1 586.0 26.1 587.0 25.7 588.0 27.5 589.0 30.3 590.0 32.1 591.0 33.0 592.0 32.4 593.0 30.4 594.0 30.1 595.0 28.8 596.0 33.2 597.0 34.5 598.0 39.1 599.0 42.2 600.0 42.2 601.0 42.3 602.0 42.2 603.0 42.2 604.0 42.2 605.0 42.3 606.0 42.3 607.0 42.1 608.0 42.2 609.0 42.2 610.0 42.2 611.0 42.2 612.0 42.2 613.0 37.4 614.0 29.4 615.0 18.4 616.0 21.2 617.0 20.3 618.0 17.1 619.0 8.8 620.0 10.3 621.0 11.0 622.0 10.8 623.0 9.6 624.0 13.9 625.0 13.1 626.0 17.7 627.0 22.7 628.0 24.9 629.0 24.4 630.0 25.0 631.0 28.3 632.0 26.4 633.0 28.2 634.0 25.6 635.0 22.3 636.0 22.0 637.0 19.5 638.0 19.7 639.0 21.3 640.0 18.4 641.0 21.7 642.0 22.1 643.0 21.6 644.0 27.0 645.0 28.8 646.0 32.7 647.0 36.5 648.0 39.7 649.0 41.7 650.0 41.0 651.0 40.3 652.0 39.3 653.0 39.4 654.0 38.1 655.0 38.0 656.0 37.0 657.0 35.2 658.0 34.9 659.0 35.1 660.0 35.5 661.0 35.5 662.0 33.5 663.0 33.3 664.0 34.1 665.0 33.4 666.0 33.7 667.0 35.0 668.0 34.0 669.0 33.5 670.0 33.3 671.0 34.5 672.0 33.9 673.0 33.4 674.0 34.4 675.0 34.5 676.0 33.5 677.0 34.3 678.0 33.1 679.0 31.9 680.0 29.6 681.0 30.4 682.0 29.7 683.0 29.5 684.0 27.8 685.0 28.2 686.0 25.8 687.0 27.4 688.0 27.4 689.0 27.0 690.0 26.1 691.0 24.8 692.0 25.9 693.0 26.1 694.0 27.4 695.0 26.7 696.0 26.9 697.0 27.4 698.0 25.8 699.0 24.8 700.0 24.6 701.0 27.2 702.0 28.8 703.0 27.8 704.0 31.1 705.0 32.6 706.0 32.8 707.0 31.8 708.0 30.7 709.0 32.3 710.0 32.5 711.0 32.8 712.0 33.2 713.0 33.3 714.0 35.5 715.0 37.1 716.0 37.8 717.0 38.4 718.0 39.2 719.0 40.0 720.0 41.2 721.0 41.9 722.0 42.1 723.0 42.1 724.0 42.3 725.0 42.3 726.0 42.3 727.0 42.4 728.0 42.2 729.0 42.2 730.0 42.2 731.0 42.1 732.0 42.2 733.0 42.4 734.0 42.4 735.0 42.5 736.0 42.5 737.0 42.1 738.0 41.5 739.0 41.0 740.0 40.6 741.0 40.1 742.0 40.2 743.0 40.2 744.0 39.5 745.0 39.5 746.0 39.4 747.0 39.8 748.0 39.1 749.0 38.7 750.0 38.9 751.0 39.2 752.0 39.4 753.0 39.2 754.0 39.3 755.0 39.4 756.0 39.5 757.0 38.9 758.0 39.0 759.0 39.5 760.0 39.1 761.0 38.1 762.0 38.7 763.0 39.6 764.0 40.7 765.0 41.4 766.0 42.0 767.0 42.0 768.0 41.9 769.0 41.7 770.0 41.9 771.0 41.8 772.0 41.9 773.0 41.8 774.0 41.8 775.0 41.9 776.0 27.1 777.0 16.6 778.0 2.9 779.0 -1.2 780.0 -0.7 781.0 0.6 782.0 3.3 783.0 8.8 784.0 13.6 785.0 12.0 786.0 16.3 787.0 14.9 788.0 19.1 789.0 24.8 790.0 25.9 791.0 28.9 792.0 32.9 793.0 36.2 794.0 37.7 795.0 39.1 796.0 41.4 797.0 41.1 798.0 40.0 799.0 38.7 800.0 37.6 801.0 36.2 802.0 35.7 803.0 35.8 804.0 36.8 805.0 37.0 806.0 37.8 807.0 38.4 808.0 38.6 809.0 38.9 810.0 39.4 811.0 39.7 812.0 40.1 813.0 39.9 814.0 40.7 815.0 40.9 816.0 40.2 817.0 38.5 818.0 37.0 819.0 35.6 820.0 34.3 821.0 33.7 822.0 33.3 823.0 33.2 824.0 33.8 825.0 34.9 826.0 34.8 827.0 34.5 828.0 33.7 829.0 34.5 830.0 34.1 831.0 33.7 832.0 34.3 833.0 34.0 834.0 33.1 835.0 33.1 836.0 32.4 837.0 32.1 838.0 32.9 839.0 32.9 840.0 34.0 841.0 33.4 842.0 34.0 843.0 33.3 844.0 31.1 845.0 30.8 846.0 30.1 847.0 27.1 848.0 26.4 849.0 24.8 850.0 23.5 851.0 22.7 852.0 24.3 853.0 20.8 854.0 19.5 855.0 15.6 856.0 18.5 857.0 17.3 858.0 18.2 859.0 20.9 860.0 20.9 861.0 17.4 862.0 21.8 863.0 22.3 864.0 20.6 865.0 22.5 866.0 19.0 867.0 20.4 868.0 18.3 869.0 20.9 870.0 21.6 871.0 25.0 872.0 24.0 873.0 25.0 874.0 23.5 875.0 21.0 876.0 18.6 877.0 16.2 878.0 18.4 879.0 20.4 880.0 21.7 881.0 20.5 882.0 21.5 883.0 25.7 884.0 27.3 885.0 28.6 886.0 34.6 887.0 39.9 888.0 42.0 889.0 41.1 890.0 40.3 891.0 39.1 892.0 38.7 893.0 36.8 894.0 35.0 895.0 34.0 896.0 30.7 897.0 31.6 898.0 34.8 899.0 36.7 900.0 37.5 901.0 39.1 902.0 39.8 903.0 39.3 904.0 39.8 905.0 40.2 906.0 40.6 907.0 40.4 908.0 40.5 909.0 40.3 910.0 40.7 911.0 40.9 912.0 41.0 913.0 41.1 914.0 41.6 915.0 41.9 916.0 40.8 917.0 39.5 918.0 38.6 919.0 38.1 920.0 37.1 921.0 35.5 922.0 34.0 923.0 34.4 924.0 32.2 925.0 31.7 926.0 31.3 927.0 32.4 928.0 32.8 929.0 32.6 930.0 33.0 931.0 32.5 932.0 32.3 933.0 32.5 934.0 32.6 935.0 33.0 936.0 32.1 937.0 32.3 938.0 32.1 939.0 32.0 940.0 32.0 941.0 32.8 942.0 31.0 943.0 30.9 944.0 29.0 945.0 26.7 946.0 26.4 947.0 25.8 948.0 24.9 949.0 26.2 950.0 25.4 951.0 25.7 952.0 25.8 953.0 28.0 954.0 27.6 955.0 28.5 956.0 28.8 957.0 25.5 958.0 23.9 959.0 25.4 960.0 20.0 961.0 19.2 962.0 17.5 963.0 17.3 964.0 16.7 965.0 13.4 966.0 15.2 967.0 14.0 968.0 15.3 969.0 13.4 970.0 15.7 971.0 17.5 972.0 22.1 973.0 23.5 974.0 24.5 975.0 26.2 976.0 33.2 977.0 39.0 978.0 41.2 979.0 39.6 980.0 37.8 981.0 35.1 982.0 36.4 983.0 37.2 984.0 39.3 985.0 40.8 986.0 40.7 987.0 40.5 988.0 40.7 989.0 40.6 990.0 40.5 991.0 40.5 992.0 40.8 993.0 40.8 994.0 41.0 995.0 41.1 996.0 40.7 997.0 40.6 998.0 40.8 999.0 40.8 1000.0 40.6 1001.0 36.6 1002.0 33.1 1003.0 27.7 1004.0 27.0 1005.0 28.6 1006.0 24.2 1007.0 21.2 1008.0 21.3 1009.0 19.2 1010.0 22.0 1011.0 20.5 1012.0 21.6 1013.0 21.6 1014.0 25.6 1015.0 29.7 1016.0 29.2 1017.0 28.9 1018.0 26.1 1019.0 22.8 1020.0 21.8 1021.0 23.7 1022.0 20.2 1023.0 16.9 1024.0 16.9 1025.0 20.2 1026.0 20.3 1027.0 18.7 1028.0 22.5 1029.0 22.2 1030.0 20.7 1031.0 18.9 1032.0 16.4 1033.0 13.0 1034.0 11.6 1035.0 9.0 1036.0 10.2 1037.0 14.6 1038.0 14.0 1039.0 17.9 1040.0 18.9 1041.0 20.8 1042.0 20.7 1043.0 22.0 1044.0 24.9 1045.0 28.0 1046.0 28.4 1047.0 30.8 1048.0 33.5 1049.0 37.9 1050.0 38.6 1051.0 36.5 1052.0 34.4 1053.0 33.6 1054.0 29.5 1055.0 28.2 1056.0 25.4 1057.0 22.8 1058.0 24.0 1059.0 24.5 1060.0 22.9 1061.0 22.7 1062.0 22.9 1063.0 20.4 1064.0 18.9 1065.0 16.3 1066.0 15.8 1067.0 18.3 1068.0 14.5 1069.0 13.2 1070.0 15.4 1071.0 15.4 1072.0 18.7 1073.0 20.0 1074.0 25.8 1075.0 32.1 1076.0 35.2 1077.0 34.7 1078.0 32.2 1079.0 29.7 1080.0 26.2 1081.0 24.3 1082.0 21.8 1083.0 18.2 1084.0 13.5 1085.0 8.4 1086.0 3.9 1087.0 6.6 1088.0 6.8 1089.0 12.7 1090.0 14.6 1091.0 17.8 1092.0 20.0 1093.0 18.2 1094.0 22.0 1095.0 21.5 1096.0 20.6 1097.0 19.9 1098.0 17.4 1099.0 17.7 1100.0 20.8 1101.0 21.8 1102.0 18.3 1103.0 17.8 1104.0 16.2 1105.0 16.9 1106.0 15.6 1107.0 15.1 1108.0 16.0 1109.0 14.8 1110.0 15.5 1111.0 15.2 1112.0 14.6 1113.0 15.4 1114.0 16.6 1115.0 17.3 1116.0 19.7 1117.0 18.6 1118.0 20.7 1119.0 21.7 1120.0 23.1 1121.0 26.7 1122.0 26.8 1123.0 25.9 1124.0 26.3 1125.0 26.6 1126.0 27.2 1127.0 27.7 1128.0 28.9 1129.0 29.6 1130.0 29.8 1131.0 29.6 1132.0 31.1 1133.0 30.7 1134.0 31.6 1135.0 32.0 1136.0 31.5 1137.0 32.0 1138.0 34.7 1139.0 35.8 1140.0 35.4 1141.0 36.4 1142.0 37.3 1143.0 37.8 1144.0 38.1 1145.0 38.4 1146.0 38.7 1147.0 39.4 1148.0 40.2 1149.0 41.0 1150.0 41.7 1151.0 41.6 1152.0 41.6 1153.0 41.8 1154.0 42.0 1155.0 42.1 1156.0 42.2 1157.0 39.5 1158.0 36.2 1159.0 33.8 1160.0 31.3 1161.0 30.8 1162.0 28.3 1163.0 28.5 1164.0 32.2 1165.0 32.1 1166.0 33.2 1167.0 32.5 1168.0 33.8 1169.0 32.9 1170.0 33.7 1171.0 32.8 1172.0 33.2 1173.0 32.1 1174.0 31.3 1175.0 29.4 1176.0 30.7 1177.0 32.2 1178.0 34.0 1179.0 35.6 1180.0 36.4 1181.0 37.3 1182.0 37.3 1183.0 37.6 1184.0 37.3 1185.0 37.4 1186.0 36.9 1187.0 37.2 1188.0 35.8 1189.0 36.2 1190.0 36.2 1191.0 35.3 1192.0 34.3 1193.0 34.4 1194.0 34.4 1195.0 35.6 1196.0 32.8 1197.0 30.3 1198.0 30.3 1199.0 28.8 1200.0 29.4 1201.0 25.6 1202.0 21.5 1203.0 18.2 1204.0 17.4 1205.0 20.3 1206.0 16.7 1207.0 16.3 1208.0 14.5 1209.0 11.2 1210.0 13.7 1211.0 16.9 1212.0 17.0 1213.0 18.9 1214.0 16.9 1215.0 19.5 1216.0 24.2 1217.0 25.1 1218.0 26.9 1219.0 28.9 1220.0 29.4 1221.0 32.4 1222.0 34.9 1223.0 37.7 1224.0 40.2 1225.0 42.4 1226.0 39.5 1227.0 37.0 1228.0 32.6 1229.0 28.4 1230.0 30.7 1231.0 29.1 1232.0 31.0 1233.0 29.5 1234.0 29.5 1235.0 30.3 1236.0 28.8 1237.0 27.6 1238.0 28.2 1239.0 27.4 1240.0 27.1 1241.0 26.2 1242.0 24.7 1243.0 20.7 1244.0 24.4 1245.0 25.7 1246.0 24.4 1247.0 24.0 1248.0 24.0 1249.0 23.5 1250.0 27.1 1251.0 33.0 1252.0 36.1 1253.0 38.2 1254.0 40.7 1255.0 39.9 1256.0 39.5 1257.0 39.3 1258.0 39.1 1259.0 38.6 1260.0 38.1 1261.0 36.7 1262.0 36.9 1263.0 37.2 1264.0 35.6 1265.0 34.2 1266.0 33.7 1267.0 35.0 1268.0 34.1 1269.0 32.2 1270.0 32.6 1271.0 32.9 1272.0 30.9 1273.0 29.9 1274.0 27.2 1275.0 26.4 1276.0 26.0 1277.0 25.3 1278.0 25.1 1279.0 23.2 1280.0 22.7 1281.0 24.8 1282.0 20.6 1283.0 19.4 1284.0 19.7 1285.0 17.7 1286.0 21.2 1287.0 22.4 1288.0 25.0 1289.0 25.5 1290.0 27.9 1291.0 28.5 1292.0 28.8 1293.0 27.4 1294.0 26.3 1295.0 24.7 1296.0 21.9 1297.0 20.2 1298.0 17.6 1299.0 18.2 1300.0 20.3 1301.0 23.4 1302.0 23.3 1303.0 23.7 1304.0 21.4 1305.0 21.9 1306.0 20.0 1307.0 19.5 1308.0 17.9 1309.0 17.3 1310.0 20.9 1311.0 24.3 1312.0 23.0 1313.0 23.6 1314.0 29.9 1315.0 34.9 1316.0 38.6 1317.0 40.0 1318.0 40.3 1319.0 40.6 1320.0 41.3 1321.0 41.9 1322.0 40.1 1323.0 37.8 1324.0 35.6 1325.0 34.4 1326.0 32.1 1327.0 30.8 1328.0 33.9 1329.0 34.7 1330.0 34.8 1331.0 35.0 1332.0 36.8 1333.0 38.0 1334.0 38.3 1335.0 38.6 1336.0 38.2 1337.0 38.3 1338.0 38.8 1339.0 38.9 1340.0 39.1 1341.0 39.3 1342.0 40.1 1343.0 40.1 1344.0 40.2 1345.0 40.6 1346.0 39.5 1347.0 38.8 1348.0 36.2 1349.0 34.7 1350.0 33.5 1351.0 33.2 1352.0 34.1 1353.0 34.0 1354.0 33.8 1355.0 33.4 1356.0 34.0 1357.0 35.4 1358.0 35.4 1359.0 35.1 1360.0 34.1 1361.0 34.0 1362.0 34.1 1363.0 34.1 1364.0 33.5 1365.0 33.3 1366.0 34.2 1367.0 33.0 1368.0 33.4 1369.0 32.5 1370.0 31.5 1371.0 31.6 1372.0 30.6 1373.0 31.7 1374.0 28.8 1375.0 27.2 1376.0 27.7 1377.0 28.2 1378.0 27.6 1379.0 27.0 1380.0 27.6 1381.0 28.8 1382.0 23.7 1383.0 22.1 1384.0 25.2 1385.0 24.2 1386.0 24.4 1387.0 26.2 1388.0 27.2 1389.0 29.3 1390.0 29.6 1391.0 27.2 1392.0 27.9 1393.0 26.6 1394.0 28.3 1395.0 26.9 1396.0 26.9 1397.0 24.8 1398.0 25.5 1399.0 22.8 1400.0 21.1 1401.0 19.1 1402.0 18.9 1403.0 16.4 1404.0 16.3 1405.0 18.3 1406.0 17.3 1407.0 18.6 1408.0 20.0 1409.0 23.1 1410.0 23.0 1411.0 25.1 1412.0 26.4 1413.0 27.9 1414.0 26.4 1415.0 26.9 1416.0 28.2 1417.0 31.7 1418.0 32.5 1419.0 33.1 1420.0 33.6 1421.0 34.2 1422.0 32.5 1423.0 32.6 1424.0 36.0 1425.0 40.4 1426.0 40.2 1427.0 40.4 1428.0 40.3 1429.0 40.1 1430.0 40.1 1431.0 40.1 1432.0 39.8 1433.0 40.2 1434.0 40.0 1435.0 40.2 1436.0 40.5 1437.0 40.3 1438.0 40.3 1439.0 40.6 1440.0 40.2 1441.0 31.3 1442.0 23.1 1443.0 22.7 1444.0 21.0 1445.0 21.1 1446.0 23.5 1447.0 24.3 1448.0 25.7 1449.0 26.3 1450.0 24.9 1451.0 26.7 1452.0 23.8 1453.0 23.5 1454.0 23.2 1455.0 24.4 1456.0 23.9 1457.0 20.4 1458.0 21.2 1459.0 24.3 1460.0 26.3 1461.0 27.2 1462.0 23.0 1463.0 21.3 1464.0 23.9 1465.0 25.3 1466.0 24.8 1467.0 22.8 1468.0 19.1 1469.0 11.8 1470.0 11.6 1471.0 12.0 1472.0 9.7 1473.0 10.1 1474.0 16.0 1475.0 17.5 1476.0 20.6 1477.0 21.0 1478.0 20.8 1479.0 24.2 1480.0 26.6 1481.0 30.3 1482.0 31.9 1483.0 33.5 1484.0 34.5 1485.0 37.0 1486.0 34.8 1487.0 31.7 1488.0 28.9 1489.0 24.0 1490.0 20.5 1491.0 19.8 1492.0 21.9 1493.0 20.1 1494.0 19.9 1495.0 20.6 1496.0 18.6 1497.0 18.1 1498.0 20.2 1499.0 21.8 1500.0 20.8 1501.0 18.3 1502.0 18.8 1503.0 15.5 1504.0 18.6 1505.0 16.7 1506.0 18.7 1507.0 25.9 1508.0 28.8 1509.0 33.5 1510.0 37.5 1511.0 36.9 1512.0 32.5 1513.0 29.0 1514.0 26.8 1515.0 24.8 1516.0 22.3 1517.0 17.0 1518.0 12.3 1519.0 10.0 1520.0 6.8 1521.0 11.6 1522.0 9.3 1523.0 13.9 1524.0 14.8 1525.0 20.1 1526.0 20.4 1527.0 18.9 1528.0 22.6 1529.0 23.6 1530.0 23.4 1531.0 21.6 1532.0 22.1 1533.0 24.7 1534.0 20.1 1535.0 19.7 1536.0 18.5 1537.0 20.7 1538.0 17.9 1539.0 15.3 1540.0 15.5 1541.0 12.9 1542.0 15.3 1543.0 17.0 1544.0 19.0 1545.0 22.0 1546.0 22.4 1547.0 24.1 1548.0 23.8 1549.0 21.9 1550.0 23.4 1551.0 24.2 1552.0 23.5 1553.0 24.9 1554.0 25.1 1555.0 24.8 1556.0 20.2 1557.0 19.8 1558.0 22.7 1559.0 24.9 1560.0 27.2 1561.0 28.3 1562.0 29.2 1563.0 27.3 1564.0 26.4 1565.0 25.8 1566.0 28.3 1567.0 29.1 1568.0 31.1 1569.0 31.8 1570.0 33.1 1571.0 34.2 1572.0 35.2 1573.0 35.2 1574.0 35.7 1575.0 36.9 1576.0 38.1 1577.0 39.0 1578.0 39.6 1579.0 40.4 1580.0 41.5 1581.0 41.7 1582.0 41.9 1583.0 42.1 1584.0 41.3 1585.0 38.0 1586.0 35.3 1587.0 32.8 1588.0 30.7 1589.0 29.7 1590.0 28.1 1591.0 26.6 1592.0 28.4 1593.0 28.2 1594.0 30.7 1595.0 31.8 1596.0 32.3 1597.0 31.0 1598.0 30.6 1599.0 32.9 1600.0 31.8 1601.0 31.0 1602.0 32.1 1603.0 33.1 1604.0 33.1 1605.0 32.7 1606.0 34.4 1607.0 35.3 1608.0 34.4 1609.0 34.6 1610.0 34.6 1611.0 35.0 1612.0 35.2 1613.0 34.7 1614.0 35.4 1615.0 36.8 1616.0 36.5 1617.0 36.1 1618.0 35.8 1619.0 35.1 1620.0 34.0 1621.0 33.2 1622.0 32.5 1623.0 32.6 1624.0 32.8 1625.0 32.2 1626.0 30.8 1627.0 30.8 1628.0 28.6 1629.0 29.1 1630.0 26.0 1631.0 26.0 1632.0 23.9 1633.0 24.3 1634.0 20.3 1635.0 21.7 1636.0 21.3 1637.0 18.9 1638.0 17.5 1639.0 17.9 1640.0 14.4 1641.0 15.9 1642.0 14.4 1643.0 14.1 1644.0 17.1 1645.0 17.9 1646.0 17.5 1647.0 17.7 1648.0 20.6 1649.0 22.0 1650.0 29.8 1651.0 34.0 1652.0 36.0 1653.0 39.0 1654.0 41.2 1655.0 39.5 1656.0 37.2 1657.0 35.0 1658.0 31.9 1659.0 30.6 1660.0 29.7 1661.0 29.0 1662.0 29.5 1663.0 28.2 1664.0 25.8 1665.0 25.5 1666.0 25.7 1667.0 25.1 1668.0 27.1 1669.0 26.8 1670.0 27.1 1671.0 26.7 1672.0 25.6 1673.0 25.5 1674.0 26.0 1675.0 28.7 1676.0 26.4 1677.0 26.9 1678.0 27.7 1679.0 26.6 1680.0 28.9 1681.0 27.7 1682.0 32.5 1683.0 36.5 1684.0 40.0 L1684.0 45.5 1683.0 49.1 1682.0 54.3 1681.0 59.4 1680.0 58.3 1679.0 58.9 1678.0 60.0 1677.0 61.0 1676.0 62.3 1675.0 63.9 1674.0 61.5 1673.0 59.8 1672.0 59.5 1671.0 60.5 1670.0 61.3 1669.0 62.1 1668.0 61.2 1667.0 61.2 1666.0 60.6 1665.0 58.7 1664.0 58.8 1663.0 58.2 1662.0 56.4 1661.0 54.9 1660.0 55.2 1659.0 53.4 1658.0 52.6 1657.0 49.9 1656.0 48.0 1655.0 46.2 1654.0 44.5 1653.0 47.2 1652.0 51.0 1651.0 53.9 1650.0 59.3 1649.0 59.6 1648.0 63.8 1647.0 65.0 1646.0 65.0 1645.0 63.9 1644.0 67.2 1643.0 74.4 1642.0 72.3 1641.0 76.6 1640.0 70.8 1639.0 70.6 1638.0 69.7 1637.0 72.5 1636.0 69.7 1635.0 73.3 1634.0 67.7 1633.0 64.3 1632.0 64.2 1631.0 63.3 1630.0 59.7 1629.0 57.8 1628.0 56.2 1627.0 56.4 1626.0 52.4 1625.0 51.2 1624.0 51.0 1623.0 51.7 1622.0 51.3 1621.0 51.3 1620.0 51.5 1619.0 52.4 1618.0 51.1 1617.0 49.5 1616.0 50.0 1615.0 50.0 1614.0 50.2 1613.0 48.9 1612.0 49.2 1611.0 49.8 1610.0 50.2 1609.0 49.6 1608.0 49.3 1607.0 48.7 1606.0 49.1 1605.0 49.7 1604.0 49.3 1603.0 49.5 1602.0 50.4 1601.0 50.6 1600.0 51.1 1599.0 50.7 1598.0 51.0 1597.0 51.4 1596.0 50.2 1595.0 50.0 1594.0 50.8 1593.0 52.0 1592.0 51.5 1591.0 50.5 1590.0 50.1 1589.0 51.2 1588.0 51.4 1587.0 50.3 1586.0 49.1 1585.0 46.5 1584.0 44.2 1583.0 43.7 1582.0 44.0 1581.0 44.2 1580.0 44.3 1579.0 45.1 1578.0 45.7 1577.0 46.7 1576.0 47.6 1575.0 47.9 1574.0 48.6 1573.0 49.3 1572.0 49.2 1571.0 49.7 1570.0 50.6 1569.0 52.0 1568.0 53.1 1567.0 52.8 1566.0 52.9 1565.0 53.4 1564.0 56.1 1563.0 56.5 1562.0 55.9 1561.0 57.0 1560.0 57.1 1559.0 60.5 1558.0 59.8 1557.0 60.3 1556.0 62.4 1555.0 65.7 1554.0 62.8 1553.0 65.3 1552.0 63.0 1551.0 67.0 1550.0 68.0 1549.0 68.5 1548.0 67.9 1547.0 67.8 1546.0 67.3 1545.0 67.3 1544.0 68.2 1543.0 71.6 1542.0 71.9 1541.0 71.4 1540.0 73.4 1539.0 73.4 1538.0 72.2 1537.0 69.2 1536.0 73.7 1535.0 74.5 1534.0 76.7 1533.0 75.2 1532.0 72.0 1531.0 67.1 1530.0 67.2 1529.0 68.9 1528.0 77.4 1527.0 80.6 1526.0 82.9 1525.0 77.7 1524.0 80.2 1523.0 79.8 1522.0 77.7 1521.0 77.3 1520.0 80.5 1519.0 79.2 1518.0 72.1 1517.0 65.7 1516.0 66.1 1515.0 62.7 1514.0 58.5 1513.0 55.1 1512.0 52.2 1511.0 49.1 1510.0 47.0 1509.0 50.5 1508.0 55.1 1507.0 57.6 1506.0 63.9 1505.0 65.4 1504.0 68.1 1503.0 73.4 1502.0 73.2 1501.0 72.6 1500.0 72.3 1499.0 66.9 1498.0 66.2 1497.0 60.6 1496.0 61.0 1495.0 57.1 1494.0 56.8 1493.0 54.1 1492.0 56.6 1491.0 55.9 1490.0 58.9 1489.0 57.8 1488.0 54.9 1487.0 50.9 1486.0 49.0 1485.0 46.9 1484.0 48.2 1483.0 48.8 1482.0 50.9 1481.0 52.1 1480.0 52.9 1479.0 52.3 1478.0 55.4 1477.0 58.2 1476.0 62.3 1475.0 65.4 1474.0 68.1 1473.0 74.0 1472.0 75.4 1471.0 74.0 1470.0 73.2 1469.0 70.3 1468.0 66.0 1467.0 60.4 1466.0 60.5 1465.0 63.8 1464.0 71.0 1463.0 71.5 1462.0 76.6 1461.0 79.8 1460.0 73.5 1459.0 67.8 1458.0 72.3 1457.0 68.9 1456.0 64.5 1455.0 60.9 1454.0 63.9 1453.0 63.3 1452.0 65.2 1451.0 64.4 1450.0 65.0 1449.0 65.4 1448.0 66.6 1447.0 68.0 1446.0 69.2 1445.0 65.2 1444.0 65.4 1443.0 63.7 1442.0 59.1 1441.0 51.6 1440.0 45.6 1439.0 45.8 1438.0 45.5 1437.0 45.1 1436.0 45.4 1435.0 45.3 1434.0 45.1 1433.0 45.1 1432.0 44.9 1431.0 44.5 1430.0 44.4 1429.0 44.4 1428.0 44.4 1427.0 44.5 1426.0 44.4 1425.0 44.1 1424.0 46.7 1423.0 49.6 1422.0 50.8 1421.0 49.4 1420.0 48.0 1419.0 47.2 1418.0 49.9 1417.0 52.4 1416.0 55.7 1415.0 58.9 1414.0 60.4 1413.0 61.9 1412.0 66.5 1411.0 67.1 1410.0 68.2 1409.0 69.9 1408.0 67.2 1407.0 70.8 1406.0 70.8 1405.0 71.9 1404.0 74.5 1403.0 81.6 1402.0 83.9 1401.0 81.7 1400.0 75.8 1399.0 72.5 1398.0 75.2 1397.0 74.8 1396.0 70.8 1395.0 69.1 1394.0 64.8 1393.0 59.5 1392.0 58.7 1391.0 60.7 1390.0 56.5 1389.0 56.3 1388.0 57.1 1387.0 59.5 1386.0 59.7 1385.0 57.8 1384.0 58.6 1383.0 56.8 1382.0 58.6 1381.0 58.3 1380.0 57.5 1379.0 57.5 1378.0 58.3 1377.0 58.7 1376.0 57.7 1375.0 57.7 1374.0 56.0 1373.0 56.1 1372.0 54.5 1371.0 54.3 1370.0 55.1 1369.0 56.6 1368.0 54.8 1367.0 55.6 1366.0 55.4 1365.0 53.1 1364.0 57.0 1363.0 59.0 1362.0 58.6 1361.0 58.9 1360.0 58.6 1359.0 59.9 1358.0 60.1 1357.0 57.3 1356.0 58.3 1355.0 57.1 1354.0 55.2 1353.0 54.0 1352.0 54.4 1351.0 52.4 1350.0 52.5 1349.0 49.9 1348.0 49.8 1347.0 48.4 1346.0 46.6 1345.0 44.5 1344.0 44.8 1343.0 44.9 1342.0 45.3 1341.0 45.7 1340.0 45.9 1339.0 45.9 1338.0 46.0 1337.0 45.9 1336.0 46.5 1335.0 46.9 1334.0 46.4 1333.0 46.5 1332.0 47.3 1331.0 48.1 1330.0 48.7 1329.0 49.7 1328.0 51.2 1327.0 51.5 1326.0 52.4 1325.0 51.7 1324.0 49.4 1323.0 47.4 1322.0 45.6 1321.0 44.3 1320.0 44.6 1319.0 44.5 1318.0 44.9 1317.0 45.0 1316.0 45.8 1315.0 49.8 1314.0 52.8 1313.0 59.7 1312.0 62.7 1311.0 67.4 1310.0 66.9 1309.0 67.8 1308.0 66.9 1307.0 72.1 1306.0 68.5 1305.0 73.5 1304.0 70.9 1303.0 70.9 1302.0 74.3 1301.0 73.8 1300.0 76.2 1299.0 77.9 1298.0 78.9 1297.0 78.4 1296.0 77.3 1295.0 74.1 1294.0 72.4 1293.0 69.3 1292.0 68.9 1291.0 68.5 1290.0 64.3 1289.0 62.3 1288.0 62.2 1287.0 63.6 1286.0 61.8 1285.0 60.6 1284.0 60.4 1283.0 62.7 1282.0 62.8 1281.0 62.2 1280.0 59.9 1279.0 59.8 1278.0 60.5 1277.0 59.3 1276.0 56.9 1275.0 53.4 1274.0 54.2 1273.0 55.4 1272.0 56.2 1271.0 57.1 1270.0 56.4 1269.0 55.3 1268.0 54.3 1267.0 56.2 1266.0 52.9 1265.0 53.0 1264.0 51.7 1263.0 52.6 1262.0 52.1 1261.0 52.3 1260.0 49.6 1259.0 48.6 1258.0 47.6 1257.0 46.2 1256.0 45.8 1255.0 45.2 1254.0 44.4 1253.0 47.0 1252.0 51.6 1251.0 57.7 1250.0 62.3 1249.0 63.5 1248.0 60.4 1247.0 56.2 1246.0 56.2 1245.0 56.7 1244.0 56.2 1243.0 56.3 1242.0 55.9 1241.0 54.4 1240.0 55.2 1239.0 57.3 1238.0 58.5 1237.0 57.8 1236.0 58.5 1235.0 57.5 1234.0 56.7 1233.0 56.8 1232.0 55.1 1231.0 53.4 1230.0 52.9 1229.0 53.4 1228.0 51.8 1227.0 49.0 1226.0 46.2 1225.0 43.5 1224.0 47.1 1223.0 49.8 1222.0 54.9 1221.0 59.3 1220.0 60.5 1219.0 61.2 1218.0 65.5 1217.0 70.7 1216.0 73.9 1215.0 72.3 1214.0 73.1 1213.0 76.3 1212.0 68.8 1211.0 64.5 1210.0 69.6 1209.0 69.8 1208.0 67.5 1207.0 67.9 1206.0 70.6 1205.0 77.2 1204.0 73.5 1203.0 70.2 1202.0 65.6 1201.0 59.6 1200.0 54.8 1199.0 55.3 1198.0 54.8 1197.0 54.2 1196.0 52.4 1195.0 51.3 1194.0 51.6 1193.0 51.8 1192.0 51.2 1191.0 51.1 1190.0 50.4 1189.0 49.8 1188.0 49.9 1187.0 49.1 1186.0 49.7 1185.0 50.0 1184.0 50.5 1183.0 50.9 1182.0 51.6 1181.0 52.5 1180.0 52.3 1179.0 52.1 1178.0 50.8 1177.0 48.8 1176.0 48.9 1175.0 50.5 1174.0 49.5 1173.0 49.9 1172.0 49.2 1171.0 50.1 1170.0 49.6 1169.0 49.1 1168.0 49.4 1167.0 49.8 1166.0 50.1 1165.0 48.9 1164.0 50.4 1163.0 52.0 1162.0 50.3 1161.0 49.4 1160.0 49.5 1159.0 50.7 1158.0 47.7 1157.0 45.6 1156.0 43.5 1155.0 43.6 1154.0 43.7 1153.0 43.9 1152.0 44.1 1151.0 44.1 1150.0 44.4 1149.0 45.1 1148.0 46.0 1147.0 47.2 1146.0 47.8 1145.0 49.4 1144.0 49.7 1143.0 50.5 1142.0 50.9 1141.0 53.0 1140.0 53.5 1139.0 54.5 1138.0 55.1 1137.0 56.6 1136.0 56.4 1135.0 58.5 1134.0 60.6 1133.0 63.3 1132.0 60.9 1131.0 61.4 1130.0 62.9 1129.0 65.3 1128.0 61.6 1127.0 60.3 1126.0 61.6 1125.0 61.7 1124.0 61.3 1123.0 63.9 1122.0 64.4 1121.0 66.8 1120.0 65.2 1119.0 64.6 1118.0 67.6 1117.0 66.9 1116.0 68.5 1115.0 69.6 1114.0 68.4 1113.0 68.6 1112.0 69.0 1111.0 68.3 1110.0 75.7 1109.0 74.9 1108.0 78.5 1107.0 77.7 1106.0 78.3 1105.0 74.3 1104.0 75.5 1103.0 73.6 1102.0 70.6 1101.0 69.6 1100.0 70.5 1099.0 72.4 1098.0 72.2 1097.0 76.1 1096.0 75.3 1095.0 73.9 1094.0 74.0 1093.0 70.8 1092.0 70.5 1091.0 72.6 1090.0 72.1 1089.0 77.5 1088.0 78.4 1087.0 85.0 1086.0 84.8 1085.0 76.6 1084.0 77.4 1083.0 73.8 1082.0 69.8 1081.0 66.8 1080.0 60.8 1079.0 59.2 1078.0 55.4 1077.0 51.4 1076.0 49.8 1075.0 51.7 1074.0 55.9 1073.0 59.8 1072.0 62.7 1071.0 65.0 1070.0 69.4 1069.0 72.9 1068.0 73.7 1067.0 75.5 1066.0 74.0 1065.0 68.0 1064.0 68.7 1063.0 65.0 1062.0 66.3 1061.0 64.1 1060.0 63.1 1059.0 60.0 1058.0 59.2 1057.0 57.7 1056.0 57.6 1055.0 58.0 1054.0 57.5 1053.0 53.2 1052.0 50.8 1051.0 47.3 1050.0 45.4 1049.0 48.1 1048.0 50.5 1047.0 53.1 1046.0 55.2 1045.0 58.3 1044.0 57.9 1043.0 58.3 1042.0 61.1 1041.0 59.3 1040.0 61.1 1039.0 62.9 1038.0 63.0 1037.0 61.4 1036.0 67.4 1035.0 71.3 1034.0 69.6 1033.0 70.1 1032.0 68.8 1031.0 69.8 1030.0 65.0 1029.0 69.2 1028.0 70.2 1027.0 72.2 1026.0 71.9 1025.0 70.8 1024.0 72.9 1023.0 73.8 1022.0 69.1 1021.0 70.1 1020.0 68.8 1019.0 70.9 1018.0 69.4 1017.0 69.3 1016.0 72.1 1015.0 68.6 1014.0 65.1 1013.0 63.5 1012.0 64.2 1011.0 64.3 1010.0 66.2 1009.0 66.0 1008.0 64.7 1007.0 65.6 1006.0 64.5 1005.0 63.0 1004.0 60.7 1003.0 55.8 1002.0 51.5 1001.0 48.0 1000.0 44.4 999.0 44.6 998.0 44.7 997.0 44.6 996.0 44.9 995.0 45.0 994.0 45.1 993.0 45.0 992.0 45.0 991.0 44.9 990.0 45.1 989.0 45.4 988.0 45.2 987.0 45.5 986.0 45.3 985.0 45.6 984.0 47.3 983.0 49.7 982.0 51.3 981.0 52.0 980.0 49.7 979.0 47.4 978.0 45.0 977.0 47.3 976.0 56.3 975.0 63.3 974.0 63.1 973.0 64.0 972.0 62.2 971.0 60.9 970.0 66.2 969.0 68.0 968.0 71.1 967.0 72.9 966.0 74.3 965.0 73.7 964.0 76.8 963.0 76.2 962.0 71.1 961.0 67.0 960.0 68.2 959.0 70.4 958.0 69.6 957.0 68.6 956.0 69.6 955.0 67.0 954.0 63.8 953.0 59.3 952.0 57.6 951.0 56.8 950.0 58.3 949.0 58.9 948.0 59.2 947.0 61.3 946.0 60.5 945.0 60.2 944.0 57.5 943.0 53.8 942.0 55.4 941.0 54.9 940.0 55.3 939.0 54.7 938.0 55.5 937.0 55.4 936.0 56.1 935.0 57.3 934.0 55.2 933.0 53.9 932.0 53.1 931.0 52.6 930.0 53.1 929.0 53.0 928.0 54.5 927.0 57.3 926.0 55.2 925.0 56.8 924.0 55.3 923.0 56.4 922.0 55.1 921.0 55.5 920.0 52.3 919.0 50.3 918.0 50.0 917.0 48.2 916.0 46.2 915.0 43.9 914.0 43.9 913.0 44.0 912.0 44.1 911.0 44.2 910.0 44.5 909.0 44.6 908.0 44.7 907.0 45.0 906.0 44.9 905.0 45.0 904.0 45.1 903.0 45.2 902.0 45.1 901.0 45.6 900.0 46.9 899.0 48.8 898.0 50.2 897.0 51.7 896.0 52.8 895.0 50.3 894.0 48.0 893.0 47.3 892.0 46.1 891.0 45.4 890.0 44.7 889.0 44.3 888.0 43.7 887.0 45.5 886.0 49.5 885.0 55.2 884.0 61.7 883.0 66.6 882.0 69.9 881.0 74.9 880.0 71.9 879.0 72.3 878.0 74.3 877.0 72.6 876.0 69.0 875.0 69.4 874.0 74.6 873.0 77.1 872.0 77.9 871.0 76.2 870.0 75.9 869.0 75.9 868.0 72.1 867.0 71.5 866.0 69.9 865.0 68.3 864.0 67.2 863.0 65.0 862.0 61.8 861.0 62.1 860.0 63.0 859.0 61.7 858.0 59.4 857.0 58.0 856.0 56.9 855.0 59.0 854.0 57.0 853.0 59.4 852.0 58.0 851.0 60.1 850.0 59.5 849.0 60.2 848.0 58.3 847.0 58.6 846.0 56.9 845.0 56.5 844.0 58.1 843.0 59.5 842.0 57.3 841.0 57.0 840.0 56.8 839.0 57.0 838.0 55.3 837.0 54.0 836.0 54.1 835.0 54.1 834.0 54.4 833.0 52.8 832.0 52.0 831.0 52.1 830.0 51.6 829.0 53.2 828.0 53.3 827.0 53.5 826.0 52.4 825.0 53.1 824.0 55.6 823.0 57.5 822.0 57.9 821.0 54.9 820.0 53.3 819.0 50.7 818.0 49.6 817.0 48.1 816.0 45.9 815.0 44.1 814.0 44.7 813.0 45.1 812.0 45.3 811.0 45.4 810.0 46.0 809.0 46.4 808.0 46.0 807.0 46.2 806.0 46.6 805.0 47.1 804.0 47.1 803.0 47.5 802.0 47.9 801.0 48.1 800.0 47.6 799.0 46.8 798.0 45.6 797.0 44.3 796.0 43.9 795.0 44.8 794.0 45.7 793.0 47.1 792.0 48.7 791.0 52.7 790.0 55.8 789.0 56.9 788.0 60.7 787.0 65.8 786.0 69.0 785.0 68.1 784.0 69.8 783.0 80.2 782.0 88.5 781.0 96.7 780.0 89.2 779.0 76.6 778.0 61.4 777.0 51.1 776.0 47.5 775.0 43.6 774.0 43.5 773.0 43.6 772.0 43.5 771.0 43.5 770.0 43.5 769.0 43.5 768.0 43.5 767.0 43.5 766.0 43.5 765.0 44.0 764.0 44.5 763.0 45.1 762.0 45.8 761.0 46.5 760.0 46.4 759.0 46.4 758.0 46.5 757.0 46.5 756.0 46.0 755.0 45.5 754.0 45.5 753.0 45.4 752.0 45.2 751.0 44.8 750.0 44.8 749.0 45.1 748.0 45.0 747.0 44.7 746.0 44.6 745.0 44.7 744.0 44.9 743.0 45.0 742.0 44.6 741.0 44.4 740.0 44.6 739.0 44.4 738.0 44.0 737.0 43.6 736.0 43.4 735.0 43.4 734.0 43.4 733.0 43.4 732.0 43.4 731.0 43.4 730.0 43.4 729.0 43.4 728.0 43.4 727.0 43.4 726.0 43.4 725.0 43.4 724.0 43.4 723.0 43.5 722.0 43.5 721.0 43.9 720.0 45.1 719.0 46.5 718.0 47.9 717.0 50.0 716.0 50.8 715.0 52.9 714.0 53.9 713.0 54.5 712.0 56.5 711.0 56.0 710.0 59.6 709.0 60.4 708.0 59.3 707.0 58.7 706.0 57.6 705.0 56.2 704.0 56.4 703.0 57.9 702.0 58.0 701.0 57.8 700.0 58.5 699.0 56.9 698.0 56.9 697.0 55.6 696.0 56.1 695.0 55.7 694.0 55.5 693.0 57.0 692.0 55.6 691.0 56.2 690.0 58.1 689.0 57.9 688.0 58.0 687.0 57.1 686.0 59.6 685.0 56.9 684.0 58.4 683.0 56.7 682.0 55.4 681.0 53.9 680.0 55.8 679.0 53.8 678.0 55.8 677.0 56.7 676.0 55.4 675.0 53.1 674.0 51.6 673.0 51.4 672.0 50.8 671.0 50.4 670.0 50.6 669.0 49.8 668.0 51.0 667.0 52.1 666.0 51.3 665.0 50.0 664.0 50.9 663.0 50.3 662.0 50.1 661.0 48.6 660.0 48.5 659.0 48.7 658.0 48.1 657.0 47.3 656.0 46.7 655.0 45.7 654.0 45.5 653.0 45.1 652.0 44.5 651.0 44.2 650.0 43.9 649.0 43.6 648.0 45.0 647.0 46.9 646.0 49.3 645.0 53.1 644.0 54.4 643.0 56.7 642.0 58.0 641.0 57.0 640.0 61.2 639.0 63.9 638.0 68.7 637.0 73.5 636.0 70.5 635.0 70.8 634.0 66.3 633.0 65.1 632.0 65.6 631.0 61.9 630.0 62.4 629.0 63.2 628.0 64.5 627.0 64.7 626.0 66.5 625.0 69.2 624.0 69.6 623.0 72.0 622.0 70.6 621.0 66.5 620.0 76.3 619.0 80.8 618.0 76.9 617.0 74.4 616.0 69.7 615.0 66.1 614.0 55.5 613.0 46.8 612.0 43.4 611.0 43.5 610.0 43.4 609.0 43.5 608.0 43.5 607.0 43.5 606.0 43.6 605.0 43.6 604.0 43.5 603.0 43.5 602.0 43.5 601.0 43.5 600.0 43.4 599.0 43.5 598.0 47.8 597.0 54.2 596.0 59.3 595.0 64.9 594.0 62.7 593.0 55.9 592.0 54.1 591.0 51.5 590.0 56.0 589.0 57.5 588.0 60.4 587.0 61.2 586.0 64.4 585.0 65.7 584.0 67.8 583.0 65.6 582.0 66.6 581.0 65.0 580.0 67.8 579.0 73.8 578.0 71.3 577.0 76.0 576.0 74.0 575.0 70.3 574.0 73.0 573.0 68.2 572.0 64.7 571.0 64.2 570.0 62.4 569.0 59.9 568.0 58.6 567.0 54.7 566.0 52.6 565.0 49.3 564.0 48.2 563.0 47.1 562.0 46.5 561.0 45.5 560.0 44.4 559.0 44.8 558.0 45.1 557.0 45.4 556.0 46.0 555.0 46.2 554.0 46.8 553.0 47.2 552.0 47.5 551.0 47.5 550.0 48.2 549.0 47.5 548.0 48.5 547.0 48.5 546.0 49.6 545.0 50.9 544.0 54.5 543.0 58.8 542.0 59.8 541.0 57.8 540.0 66.4 539.0 67.8 538.0 68.6 537.0 69.0 536.0 69.2 535.0 69.4 534.0 70.4 533.0 71.8 532.0 67.9 531.0 68.4 530.0 70.6 529.0 67.8 528.0 72.6 527.0 68.6 526.0 72.0 525.0 78.2 524.0 81.2 523.0 89.0 522.0 67.9 521.0 43.6 520.0 43.6 519.0 43.6 518.0 43.5 517.0 43.4 516.0 43.5 515.0 43.5 514.0 43.5 513.0 49.9 512.0 59.1 511.0 69.5 510.0 62.4 509.0 59.5 508.0 59.6 507.0 55.7 506.0 53.0 505.0 50.3 504.0 46.5 503.0 47.3 502.0 49.1 501.0 50.4 500.0 54.0 499.0 56.0 498.0 56.9 497.0 57.6 496.0 59.9 495.0 59.4 494.0 61.4 493.0 61.0 492.0 65.1 491.0 66.5 490.0 67.8 489.0 69.6 488.0 67.3 487.0 67.2 486.0 71.5 485.0 75.8 484.0 71.6 483.0 72.9 482.0 70.5 481.0 70.2 480.0 69.6 479.0 68.2 478.0 69.6 477.0 65.9 476.0 58.6 475.0 50.9 474.0 45.0 473.0 43.5 472.0 43.9 471.0 44.3 470.0 46.6 469.0 49.3 468.0 52.5 467.0 54.3 466.0 58.2 465.0 59.9 464.0 64.6 463.0 68.6 462.0 68.5 461.0 72.1 460.0 73.7 459.0 75.8 458.0 72.5 457.0 74.2 456.0 72.7 455.0 74.0 454.0 72.3 453.0 69.5 452.0 71.3 451.0 66.6 450.0 67.4 449.0 69.5 448.0 66.1 447.0 67.2 446.0 63.5 445.0 58.0 444.0 57.0 443.0 57.1 442.0 53.9 441.0 51.6 440.0 49.7 439.0 51.8 438.0 53.1 437.0 56.1 436.0 55.6 435.0 56.3 434.0 57.6 433.0 61.3 432.0 62.9 431.0 64.0 430.0 65.5 429.0 70.6 428.0 66.1 427.0 60.7 426.0 56.9 425.0 53.2 424.0 46.8 423.0 45.6 422.0 45.5 421.0 45.7 420.0 45.8 419.0 47.0 418.0 48.9 417.0 51.4 416.0 53.3 415.0 54.1 414.0 52.8 413.0 50.6 412.0 49.5 411.0 48.5 410.0 48.7 409.0 48.1 408.0 48.1 407.0 48.3 406.0 47.9 405.0 47.4 404.0 46.6 403.0 45.9 402.0 44.8 401.0 44.4 400.0 44.9 399.0 45.7 398.0 45.7 397.0 45.8 396.0 46.5 395.0 46.9 394.0 47.0 393.0 47.9 392.0 47.6 391.0 47.4 390.0 47.7 389.0 47.8 388.0 48.2 387.0 49.3 386.0 50.0 385.0 49.0 384.0 50.4 383.0 52.0 382.0 52.4 381.0 54.2 380.0 55.5 379.0 55.0 378.0 56.0 377.0 56.6 376.0 58.4 375.0 60.2 374.0 59.1 373.0 59.8 372.0 61.3 371.0 65.7 370.0 66.3 369.0 67.2 368.0 66.4 367.0 68.3 366.0 69.1 365.0 65.5 364.0 67.6 363.0 65.4 362.0 67.1 361.0 63.8 360.0 66.8 359.0 69.2 358.0 65.2 357.0 66.6 356.0 64.9 355.0 62.2 354.0 62.9 353.0 60.6 352.0 57.7 351.0 55.7 350.0 55.4 349.0 54.1 348.0 52.7 347.0 51.8 346.0 52.3 345.0 51.7 344.0 53.9 343.0 54.6 342.0 55.6 341.0 58.8 340.0 58.5 339.0 56.7 338.0 57.3 337.0 55.1 336.0 53.4 335.0 49.8 334.0 47.7 333.0 48.1 332.0 50.4 331.0 52.7 330.0 52.7 329.0 53.8 328.0 54.4 327.0 56.2 326.0 56.9 325.0 58.7 324.0 57.2 323.0 59.5 322.0 57.7 321.0 56.9 320.0 60.9 319.0 59.9 318.0 60.4 317.0 62.9 316.0 65.4 315.0 67.9 314.0 74.6 313.0 79.3 312.0 79.7 311.0 70.8 310.0 70.7 309.0 72.3 308.0 66.7 307.0 63.7 306.0 64.6 305.0 63.5 304.0 62.9 303.0 62.2 302.0 59.6 301.0 58.1 300.0 58.2 299.0 61.0 298.0 59.1 297.0 59.0 296.0 61.3 295.0 62.4 294.0 65.2 293.0 66.2 292.0 63.9 291.0 64.4 290.0 66.1 289.0 70.1 288.0 65.8 287.0 58.7 286.0 53.2 285.0 47.6 284.0 54.1 283.0 61.3 282.0 65.8 281.0 73.3 280.0 72.9 279.0 72.3 278.0 71.6 277.0 67.8 276.0 64.9 275.0 63.5 274.0 63.2 273.0 66.9 272.0 65.4 271.0 66.6 270.0 69.7 269.0 68.8 268.0 70.0 267.0 69.5 266.0 72.3 265.0 75.7 264.0 80.9 263.0 77.1 262.0 76.9 261.0 75.5 260.0 72.1 259.0 67.1 258.0 64.4 257.0 59.8 256.0 57.2 255.0 55.5 254.0 55.5 253.0 56.5 252.0 55.4 251.0 55.3 250.0 53.6 249.0 52.8 248.0 52.2 247.0 51.8 246.0 51.0 245.0 50.8 244.0 50.5 243.0 49.1 242.0 48.1 241.0 48.0 240.0 47.9 239.0 47.9 238.0 47.3 237.0 47.5 236.0 48.0 235.0 47.6 234.0 48.6 233.0 48.9 232.0 48.9 231.0 49.5 230.0 49.9 229.0 52.5 228.0 53.6 227.0 53.0 226.0 57.5 225.0 58.3 224.0 59.3 223.0 60.8 222.0 64.7 221.0 68.4 220.0 67.2 219.0 68.9 218.0 64.8 217.0 65.3 216.0 65.4 215.0 64.0 214.0 59.4 213.0 54.0 212.0 53.6 211.0 54.9 210.0 55.1 209.0 56.5 208.0 58.7 207.0 60.2 206.0 62.6 205.0 62.7 204.0 63.0 203.0 62.3 202.0 63.4 201.0 63.8 200.0 66.5 199.0 67.4 198.0 65.6 197.0 65.8 196.0 70.1 195.0 68.2 194.0 66.1 193.0 67.3 192.0 64.5 191.0 62.8 190.0 68.4 189.0 70.4 188.0 75.4 187.0 73.4 186.0 78.1 185.0 74.6 184.0 73.9 183.0 71.5 182.0 68.8 181.0 66.5 180.0 68.3 179.0 70.8 178.0 68.6 177.0 67.5 176.0 66.0 175.0 66.5 174.0 65.7 173.0 63.4 172.0 62.8 171.0 62.2 170.0 61.4 169.0 68.0 168.0 75.6 167.0 82.3 166.0 76.7 165.0 74.5 164.0 68.3 163.0 62.7 162.0 58.0 161.0 57.1 160.0 55.4 159.0 53.7 158.0 53.0 157.0 52.7 156.0 51.0 155.0 50.7 154.0 50.2 153.0 49.5 152.0 47.9 151.0 47.2 150.0 47.7 149.0 47.2 148.0 46.7 147.0 46.3 146.0 46.1 145.0 46.2 144.0 46.0 143.0 46.4 142.0 46.3 141.0 46.3 140.0 46.4 139.0 46.2 138.0 45.8 137.0 46.2 136.0 47.4 135.0 49.8 134.0 50.5 133.0 50.6 132.0 51.9 131.0 53.5 130.0 55.7 129.0 57.0 128.0 60.4 127.0 66.1 126.0 67.8 125.0 70.2 124.0 74.1 123.0 68.7 122.0 67.3 121.0 62.3 120.0 55.9 119.0 53.3 118.0 50.1 117.0 48.4 116.0 47.0 115.0 45.3 114.0 45.9 113.0 46.2 112.0 47.7 111.0 50.6 110.0 52.2 109.0 53.2 108.0 54.0 107.0 54.0 106.0 55.2 105.0 56.3 104.0 59.3 103.0 59.9 102.0 59.9 101.0 61.7 100.0 63.5 99.0 62.0 98.0 63.5 97.0 62.2 96.0 61.8 95.0 64.2 94.0 64.5 93.0 64.2 92.0 64.9 91.0 67.0 90.0 66.1 89.0 65.6 88.0 65.6 87.0 65.1 86.0 59.7 85.0 57.1 84.0 55.5 83.0 55.1 82.0 51.8 81.0 49.8 80.0 51.1 79.0 50.3 78.0 51.5 77.0 51.0 76.0 52.7 75.0 54.6 74.0 54.4 73.0 55.3 72.0 57.7 71.0 60.7 70.0 64.0 69.0 68.0 68.0 65.4 67.0 63.2 66.0 64.2 65.0 60.3 64.0 57.5 63.0 56.3 62.0 55.5 61.0 55.9 60.0 54.9 59.0 52.7 58.0 54.2 57.0 54.8 56.0 51.8 55.0 50.7 54.0 50.7 53.0 51.8 52.0 51.7 51.0 51.8 50.0 51.2 49.0 50.1 48.0 49.2 47.0 49.1 46.0 49.3 45.0 50.1 44.0 49.0 43.0 48.8 42.0 49.2 41.0 49.7 40.0 50.8 39.0 51.7 38.0 51.3 37.0 52.2 36.0 53.4 35.0 54.0 34.0 54.6 33.0 55.3 32.0 57.4 31.0 62.7 30.0 64.9 29.0 69.8 28.0 73.2 27.0 79.6 26.0 80.5 25.0 75.9 24.0 67.7 23.0 64.1 22.0 60.8 21.0 56.7 20.0 53.1 19.0 47.8 18.0 46.4 17.0 45.9 16.0 45.8 15.0 45.4 14.0 45.5 13.0 45.6 12.0 45.4 11.0 45.1 10.0 45.1 9.0 45.4 8.0 45.3 7.0 45.6 6.0 45.9 5.0 45.7 4.0 45.7 3.0 45.4 2.0 45.5 1.0 45.5Z" fill="#8cc8f8" stroke="#2e5578" stroke-width="0.8" stroke-linejoin="round"/><path d="M1.0 124.5 2.0 124.3 3.0 124.3 4.0 124.3 5.0 124.4 6.0 124.2 7.0 123.8 8.0 123.9 9.0 123.9 10.0 124.1 11.0 123.9 12.0 123.8 13.0 122.9 14.0 123.0 15.0 122.6 16.0 123.1 17.0 122.3 18.0 121.7 19.0 119.1 20.0 113.4 21.0 103.4 22.0 104.8 23.0 105.7 24.0 101.3 25.0 101.2 26.0 101.6 27.0 100.0 28.0 106.0 29.0 108.8 30.0 112.4 31.0 113.8 32.0 115.1 33.0 115.8 34.0 116.0 35.0 115.9 36.0 115.5 37.0 117.8 38.0 119.1 39.0 118.6 40.0 120.2 41.0 120.6 42.0 122.0 43.0 121.8 44.0 121.4 45.0 121.8 46.0 120.4 47.0 118.8 48.0 118.8 49.0 120.0 50.0 119.0 51.0 117.4 52.0 118.0 53.0 116.9 54.0 117.1 55.0 116.8 56.0 117.0 57.0 115.9 58.0 113.6 59.0 112.7 60.0 110.5 61.0 109.3 62.0 109.1 63.0 108.5 64.0 109.4 65.0 106.9 66.0 106.0 67.0 107.9 68.0 107.1 69.0 105.2 70.0 103.1 71.0 105.1 72.0 109.2 73.0 114.6 74.0 114.9 75.0 114.3 76.0 115.6 77.0 115.4 78.0 113.5 79.0 113.4 80.0 111.1 81.0 110.3 82.0 110.7 83.0 109.0 84.0 109.1 85.0 107.6 86.0 104.7 87.0 101.4 88.0 101.5 89.0 104.4 90.0 106.0 91.0 104.7 92.0 107.0 93.0 111.4 94.0 110.4 95.0 107.9 96.0 108.5 97.0 110.3 98.0 109.4 99.0 109.5 100.0 111.5 101.0 112.5 102.0 112.6 103.0 112.1 104.0 113.4 105.0 111.5 106.0 114.0 107.0 116.5 108.0 116.9 109.0 116.9 110.0 118.0 111.0 118.1 112.0 120.1 113.0 121.3 114.0 122.3 115.0 123.6 116.0 121.4 117.0 119.7 118.0 117.9 119.0 116.7 120.0 116.2 121.0 114.3 122.0 113.2 123.0 110.8 124.0 107.1 125.0 108.6 126.0 109.4 127.0 108.7 128.0 112.6 129.0 115.0 130.0 113.8 131.0 114.3 132.0 116.1 133.0 117.6 134.0 118.6 135.0 120.0 136.0 121.0 137.0 121.7 138.0 121.5 139.0 120.6 140.0 121.5 141.0 121.3 142.0 121.5 143.0 120.5 144.0 119.8 145.0 119.7 146.0 119.1 147.0 118.4 148.0 118.2 149.0 118.5 150.0 118.4 151.0 119.1 152.0 118.0 153.0 117.7 154.0 116.7 155.0 116.1 156.0 114.7 157.0 115.4 158.0 114.2 159.0 113.1 160.0 113.2 161.0 114.6 162.0 113.8 163.0 113.1 164.0 112.1 165.0 109.0 166.0 107.3 167.0 105.6 168.0 106.1 169.0 108.0 170.0 111.7 171.0 111.2 172.0 110.1 173.0 111.3 174.0 108.4 175.0 108.7 176.0 107.4 177.0 108.4 178.0 108.4 179.0 106.2 180.0 106.3 181.0 104.9 182.0 106.9 183.0 107.8 184.0 106.9 185.0 108.8 186.0 108.8 187.0 107.3 188.0 107.6 189.0 108.0 190.0 109.9 191.0 110.9 192.0 110.4 193.0 107.3 194.0 108.3 195.0 108.9 196.0 110.4 197.0 112.0 198.0 109.7 199.0 109.3 200.0 107.3 201.0 108.8 202.0 108.5 203.0 110.4 204.0 107.5 205.0 106.8 206.0 110.1 207.0 111.4 208.0 110.7 209.0 108.7 210.0 111.9 211.0 113.2 212.0 113.9 213.0 114.7 214.0 112.5 215.0 109.2 216.0 107.9 217.0 103.4 218.0 100.1 219.0 96.8 220.0 97.6 221.0 102.8 222.0 105.5 223.0 110.4 224.0 111.7 225.0 111.9 226.0 114.7 227.0 117.6 228.0 118.2 229.0 119.7 230.0 120.7 231.0 121.2 232.0 120.9 233.0 120.5 234.0 120.2 235.0 119.9 236.0 119.7 237.0 119.1 238.0 119.8 239.0 118.9 240.0 118.4 241.0 119.1 242.0 118.7 243.0 118.7 244.0 117.7 245.0 117.1 246.0 116.8 247.0 115.7 248.0 114.4 249.0 114.5 250.0 113.2 251.0 113.2 252.0 112.8 253.0 111.6 254.0 110.2 255.0 109.1 256.0 109.3 257.0 108.8 258.0 107.9 259.0 105.2 260.0 104.8 261.0 108.0 262.0 105.6 263.0 103.5 264.0 103.5 265.0 103.0 266.0 101.5 267.0 102.8 268.0 106.5 269.0 108.9 270.0 107.2 271.0 106.0 272.0 108.3 273.0 110.7 274.0 109.6 275.0 105.9 276.0 108.5 277.0 108.9 278.0 105.2 279.0 106.4 280.0 103.7 281.0 99.8 282.0 105.6 283.0 108.1 284.0 114.2 285.0 120.9 286.0 118.5 287.0 116.0 288.0 113.4 289.0 111.5 290.0 110.9 291.0 110.5 292.0 110.6 293.0 113.3 294.0 111.2 295.0 112.8 296.0 112.4 297.0 110.9 298.0 110.8 299.0 108.0 300.0 109.4 301.0 111.2 302.0 108.0 303.0 108.7 304.0 108.3 305.0 109.2 306.0 110.2 307.0 106.2 308.0 105.1 309.0 104.1 310.0 101.5 311.0 99.1 312.0 95.8 313.0 94.4 314.0 96.0 315.0 97.8 316.0 100.6 317.0 104.3 318.0 106.1 319.0 105.9 320.0 107.4 321.0 109.1 322.0 111.2 323.0 114.7 324.0 115.1 325.0 116.2 326.0 115.8 327.0 115.9 328.0 117.4 329.0 116.8 330.0 116.9 331.0 117.5 332.0 118.4 333.0 118.4 334.0 118.9 335.0 115.7 336.0 113.5 337.0 112.6 338.0 113.3 339.0 114.2 340.0 115.6 341.0 117.2 342.0 115.3 343.0 113.7 344.0 113.1 345.0 110.8 346.0 111.3 347.0 111.5 348.0 113.0 349.0 111.4 350.0 112.0 351.0 111.5 352.0 111.9 353.0 109.5 354.0 111.3 355.0 113.0 356.0 111.9 357.0 109.6 358.0 106.0 359.0 106.3 360.0 110.4 361.0 111.7 362.0 111.9 363.0 111.4 364.0 111.3 365.0 110.2 366.0 109.7 367.0 109.9 368.0 108.5 369.0 108.1 370.0 110.1 371.0 110.0 372.0 111.4 373.0 110.1 374.0 112.2 375.0 114.2 376.0 115.9 377.0 113.6 378.0 115.2 379.0 115.5 380.0 115.7 381.0 115.8 382.0 116.0 383.0 116.2 384.0 118.4 385.0 119.6 386.0 120.9 387.0 120.7 388.0 119.0 389.0 119.3 390.0 118.7 391.0 118.4 392.0 119.7 393.0 121.3 394.0 121.7 395.0 122.1 396.0 121.9 397.0 123.0 398.0 123.6 399.0 124.3 400.0 124.6 401.0 125.1 402.0 125.0 403.0 124.2 404.0 123.1 405.0 121.9 406.0 120.9 407.0 120.6 408.0 119.5 409.0 119.3 410.0 119.1 411.0 118.7 412.0 117.5 413.0 115.9 414.0 115.2 415.0 114.3 416.0 114.8 417.0 116.5 418.0 118.4 419.0 120.2 420.0 120.4 421.0 121.8 422.0 122.8 423.0 124.1 424.0 123.9 425.0 120.8 426.0 116.5 427.0 112.0 428.0 105.2 429.0 100.1 430.0 102.2 431.0 102.7 432.0 109.6 433.0 113.1 434.0 116.5 435.0 116.8 436.0 117.9 437.0 116.0 438.0 117.5 439.0 117.5 440.0 117.5 441.0 114.0 442.0 113.9 443.0 110.9 444.0 109.7 445.0 109.5 446.0 108.2 447.0 105.8 448.0 106.4 449.0 103.2 450.0 102.0 451.0 99.7 452.0 100.4 453.0 106.1 454.0 107.1 455.0 106.5 456.0 108.9 457.0 111.6 458.0 109.4 459.0 108.3 460.0 112.9 461.0 114.1 462.0 111.5 463.0 111.0 464.0 112.5 465.0 112.2 466.0 113.3 467.0 116.3 468.0 120.0 469.0 122.8 470.0 124.6 471.0 125.2 472.0 125.8 473.0 126.3 474.0 125.0 475.0 117.1 476.0 110.8 477.0 103.2 478.0 100.1 479.0 102.0 480.0 101.9 481.0 100.4 482.0 103.5 483.0 105.1 484.0 105.0 485.0 106.0 486.0 106.1 487.0 107.5 488.0 108.7 489.0 105.2 490.0 105.4 491.0 104.2 492.0 105.9 493.0 107.8 494.0 110.2 495.0 108.1 496.0 108.3 497.0 108.3 498.0 112.3 499.0 114.1 500.0 113.6 501.0 115.1 502.0 118.3 503.0 119.3 504.0 120.3 505.0 118.2 506.0 115.6 507.0 113.3 508.0 113.0 509.0 110.4 510.0 108.4 511.0 106.4 512.0 111.8 513.0 119.6 514.0 126.3 515.0 126.2 516.0 126.2 517.0 126.3 518.0 126.1 519.0 126.1 520.0 126.2 521.0 126.2 522.0 99.4 523.0 81.1 524.0 85.0 525.0 92.4 526.0 105.8 527.0 107.7 528.0 105.4 529.0 100.6 530.0 103.5 531.0 101.0 532.0 100.4 533.0 102.7 534.0 102.2 535.0 100.9 536.0 102.8 537.0 106.6 538.0 104.2 539.0 105.5 540.0 108.1 541.0 108.9 542.0 109.6 543.0 111.6 544.0 113.9 545.0 115.8 546.0 118.3 547.0 119.1 548.0 119.8 549.0 118.7 550.0 119.0 551.0 119.4 552.0 119.7 553.0 120.3 554.0 121.5 555.0 121.3 556.0 122.1 557.0 122.7 558.0 122.5 559.0 122.5 560.0 123.2 561.0 121.9 562.0 120.7 563.0 119.7 564.0 119.0 565.0 117.8 566.0 117.7 567.0 115.6 568.0 112.9 569.0 113.2 570.0 111.4 571.0 110.1 572.0 105.9 573.0 101.6 574.0 102.1 575.0 100.1 576.0 102.3 577.0 104.1 578.0 104.0 579.0 108.5 580.0 110.7 581.0 112.6 582.0 112.0 583.0 111.0 584.0 111.7 585.0 112.1 586.0 110.1 587.0 109.7 588.0 111.5 589.0 114.3 590.0 116.1 591.0 117.0 592.0 116.4 593.0 114.4 594.0 114.1 595.0 112.8 596.0 117.2 597.0 118.5 598.0 123.1 599.0 126.2 600.0 126.2 601.0 126.3 602.0 126.2 603.0 126.2 604.0 126.2 605.0 126.3 606.0 126.3 607.0 126.1 608.0 126.2 609.0 126.2 610.0 126.2 611.0 126.2 612.0 126.2 613.0 121.4 614.0 113.4 615.0 102.4 616.0 105.2 617.0 104.3 618.0 101.1 619.0 92.8 620.0 94.3 621.0 95.0 622.0 94.8 623.0 93.6 624.0 97.9 625.0 97.1 626.0 101.7 627.0 106.7 628.0 108.9 629.0 108.4 630.0 109.0 631.0 112.3 632.0 110.4 633.0 112.2 634.0 109.6 635.0 106.3 636.0 106.0 637.0 103.5 638.0 103.7 639.0 105.3 640.0 102.4 641.0 105.7 642.0 106.1 643.0 105.6 644.0 111.0 645.0 112.8 646.0 116.7 647.0 120.5 648.0 123.7 649.0 125.7 650.0 125.0 651.0 124.3 652.0 123.3 653.0 123.4 654.0 122.1 655.0 122.0 656.0 121.0 657.0 119.2 658.0 118.9 659.0 119.1 660.0 119.5 661.0 119.5 662.0 117.5 663.0 117.3 664.0 118.1 665.0 117.4 666.0 117.7 667.0 119.0 668.0 118.0 669.0 117.5 670.0 117.3 671.0 118.5 672.0 117.9 673.0 117.4 674.0 118.4 675.0 118.5 676.0 117.5 677.0 118.3 678.0 117.1 679.0 115.9 680.0 113.6 681.0 114.4 682.0 113.7 683.0 113.5 684.0 111.8 685.0 112.2 686.0 109.8 687.0 111.4 688.0 111.4 689.0 111.0 690.0 110.1 691.0 108.8 692.0 109.9 693.0 110.1 694.0 111.4 695.0 110.7 696.0 110.9 697.0 111.4 698.0 109.8 699.0 108.8 700.0 108.6 701.0 111.2 702.0 112.8 703.0 111.8 704.0 115.1 705.0 116.6 706.0 116.8 707.0 115.8 708.0 114.7 709.0 116.3 710.0 116.5 711.0 116.8 712.0 117.2 713.0 117.3 714.0 119.5 715.0 121.1 716.0 121.8 717.0 122.4 718.0 123.2 719.0 124.0 720.0 125.2 721.0 125.9 722.0 126.1 723.0 126.1 724.0 126.3 725.0 126.3 726.0 126.3 727.0 126.4 728.0 126.2 729.0 126.2 730.0 126.2 731.0 126.1 732.0 126.2 733.0 126.4 734.0 126.4 735.0 126.5 736.0 126.5 737.0 126.1 738.0 125.5 739.0 125.0 740.0 124.6 741.0 124.1 742.0 124.2 743.0 124.2 744.0 123.5 745.0 123.5 746.0 123.4 747.0 123.8 748.0 123.1 749.0 122.7 750.0 122.9 751.0 123.2 752.0 123.4 753.0 123.2 754.0 123.3 755.0 123.4 756.0 123.5 757.0 122.9 758.0 123.0 759.0 123.5 760.0 123.1 761.0 122.1 762.0 122.7 763.0 123.6 764.0 124.7 765.0 125.4 766.0 126.0 767.0 126.0 768.0 125.9 769.0 125.7 770.0 125.9 771.0 125.8 772.0 125.9 773.0 125.8 774.0 125.8 775.0 125.9 776.0 111.1 777.0 100.6 778.0 86.9 779.0 82.8 780.0 83.3 781.0 84.6 782.0 87.3 783.0 92.8 784.0 97.6 785.0 96.0 786.0 100.3 787.0 98.9 788.0 103.1 789.0 108.8 790.0 109.9 791.0 112.9 792.0 116.9 793.0 120.2 794.0 121.7 795.0 123.1 796.0 125.4 797.0 125.1 798.0 124.0 799.0 122.7 800.0 121.6 801.0 120.2 802.0 119.7 803.0 119.8 804.0 120.8 805.0 121.0 806.0 121.8 807.0 122.4 808.0 122.6 809.0 122.9 810.0 123.4 811.0 123.7 812.0 124.1 813.0 123.9 814.0 124.7 815.0 124.9 816.0 124.2 817.0 122.5 818.0 121.0 819.0 119.6 820.0 118.3 821.0 117.7 822.0 117.3 823.0 117.2 824.0 117.8 825.0 118.9 826.0 118.8 827.0 118.5 828.0 117.7 829.0 118.5 830.0 118.1 831.0 117.7 832.0 118.3 833.0 118.0 834.0 117.1 835.0 117.1 836.0 116.4 837.0 116.1 838.0 116.9 839.0 116.9 840.0 118.0 841.0 117.4 842.0 118.0 843.0 117.3 844.0 115.1 845.0 114.8 846.0 114.1 847.0 111.1 848.0 110.4 849.0 108.8 850.0 107.5 851.0 106.7 852.0 108.3 853.0 104.8 854.0 103.5 855.0 99.6 856.0 102.5 857.0 101.3 858.0 102.2 859.0 104.9 860.0 104.9 861.0 101.4 862.0 105.8 863.0 106.3 864.0 104.6 865.0 106.5 866.0 103.0 867.0 104.4 868.0 102.3 869.0 104.9 870.0 105.6 871.0 109.0 872.0 108.0 873.0 109.0 874.0 107.5 875.0 105.0 876.0 102.6 877.0 100.2 878.0 102.4 879.0 104.4 880.0 105.7 881.0 104.5 882.0 105.5 883.0 109.7 884.0 111.3 885.0 112.6 886.0 118.6 887.0 123.9 888.0 126.0 889.0 125.1 890.0 124.3 891.0 123.1 892.0 122.7 893.0 120.8 894.0 119.0 895.0 118.0 896.0 114.7 897.0 115.6 898.0 118.8 899.0 120.7 900.0 121.5 901.0 123.1 902.0 123.8 903.0 123.3 904.0 123.8 905.0 124.2 906.0 124.6 907.0 124.4 908.0 124.5 909.0 124.3 910.0 124.7 911.0 124.9 912.0 125.0 913.0 125.1 914.0 125.6 915.0 125.9 916.0 124.8 917.0 123.5 918.0 122.6 919.0 122.1 920.0 121.1 921.0 119.5 922.0 118.0 923.0 118.4 924.0 116.2 925.0 115.7 926.0 115.3 927.0 116.4 928.0 116.8 929.0 116.6 930.0 117.0 931.0 116.5 932.0 116.3 933.0 116.5 934.0 116.6 935.0 117.0 936.0 116.1 937.0 116.3 938.0 116.1 939.0 116.0 940.0 116.0 941.0 116.8 942.0 115.0 943.0 114.9 944.0 113.0 945.0 110.7 946.0 110.4 947.0 109.8 948.0 108.9 949.0 110.2 950.0 109.4 951.0 109.7 952.0 109.8 953.0 112.0 954.0 111.6 955.0 112.5 956.0 112.8 957.0 109.5 958.0 107.9 959.0 109.4 960.0 104.0 961.0 103.2 962.0 101.5 963.0 101.3 964.0 100.7 965.0 97.4 966.0 99.2 967.0 98.0 968.0 99.3 969.0 97.4 970.0 99.7 971.0 101.5 972.0 106.1 973.0 107.5 974.0 108.5 975.0 110.2 976.0 117.2 977.0 123.0 978.0 125.2 979.0 123.6 980.0 121.8 981.0 119.1 982.0 120.4 983.0 121.2 984.0 123.3 985.0 124.8 986.0 124.7 987.0 124.5 988.0 124.7 989.0 124.6 990.0 124.5 991.0 124.5 992.0 124.8 993.0 124.8 994.0 125.0 995.0 125.1 996.0 124.7 997.0 124.6 998.0 124.8 999.0 124.8 1000.0 124.6 1001.0 120.6 1002.0 117.1 1003.0 111.7 1004.0 111.0 1005.0 112.6 1006.0 108.2 1007.0 105.2 1008.0 105.3 1009.0 103.2 1010.0 106.0 1011.0 104.5 1012.0 105.6 1013.0 105.6 1014.0 109.6 1015.0 113.7 1016.0 113.2 1017.0 112.9 1018.0 110.1 1019.0 106.8 1020.0 105.8 1021.0 107.7 1022.0 104.2 1023.0 100.9 1024.0 100.9 1025.0 104.2 1026.0 104.3 1027.0 102.7 1028.0 106.5 1029.0 106.2 1030.0 104.7 1031.0 102.9 1032.0 100.4 1033.0 97.0 1034.0 95.6 1035.0 93.0 1036.0 94.2 1037.0 98.6 1038.0 98.0 1039.0 101.9 1040.0 102.9 1041.0 104.8 1042.0 104.7 1043.0 106.0 1044.0 108.9 1045.0 112.0 1046.0 112.4 1047.0 114.8 1048.0 117.5 1049.0 121.9 1050.0 122.6 1051.0 120.5 1052.0 118.4 1053.0 117.6 1054.0 113.5 1055.0 112.2 1056.0 109.4 1057.0 106.8 1058.0 108.0 1059.0 108.5 1060.0 106.9 1061.0 106.7 1062.0 106.9 1063.0 104.4 1064.0 102.9 1065.0 100.3 1066.0 99.8 1067.0 102.3 1068.0 98.5 1069.0 97.2 1070.0 99.4 1071.0 99.4 1072.0 102.7 1073.0 104.0 1074.0 109.8 1075.0 116.1 1076.0 119.2 1077.0 118.7 1078.0 116.2 1079.0 113.7 1080.0 110.2 1081.0 108.3 1082.0 105.8 1083.0 102.2 1084.0 97.5 1085.0 92.4 1086.0 87.9 1087.0 90.6 1088.0 90.8 1089.0 96.7 1090.0 98.6 1091.0 101.8 1092.0 104.0 1093.0 102.2 1094.0 106.0 1095.0 105.5 1096.0 104.6 1097.0 103.9 1098.0 101.4 1099.0 101.7 1100.0 104.8 1101.0 105.8 1102.0 102.3 1103.0 101.8 1104.0 100.2 1105.0 100.9 1106.0 99.6 1107.0 99.1 1108.0 100.0 1109.0 98.8 1110.0 99.5 1111.0 99.2 1112.0 98.6 1113.0 99.4 1114.0 100.6 1115.0 101.3 1116.0 103.7 1117.0 102.6 1118.0 104.7 1119.0 105.7 1120.0 107.1 1121.0 110.7 1122.0 110.8 1123.0 109.9 1124.0 110.3 1125.0 110.6 1126.0 111.2 1127.0 111.7 1128.0 112.9 1129.0 113.6 1130.0 113.8 1131.0 113.6 1132.0 115.1 1133.0 114.7 1134.0 115.6 1135.0 116.0 1136.0 115.5 1137.0 116.0 1138.0 118.7 1139.0 119.8 1140.0 119.4 1141.0 120.4 1142.0 121.3 1143.0 121.8 1144.0 122.1 1145.0 122.4 1146.0 122.7 1147.0 123.4 1148.0 124.2 1149.0 125.0 1150.0 125.7 1151.0 125.6 1152.0 125.6 1153.0 125.8 1154.0 126.0 1155.0 126.1 1156.0 126.2 1157.0 123.5 1158.0 120.2 1159.0 117.8 1160.0 115.3 1161.0 114.8 1162.0 112.3 1163.0 112.5 1164.0 116.2 1165.0 116.1 1166.0 117.2 1167.0 116.5 1168.0 117.8 1169.0 116.9 1170.0 117.7 1171.0 116.8 1172.0 117.2 1173.0 116.1 1174.0 115.3 1175.0 113.4 1176.0 114.7 1177.0 116.2 1178.0 118.0 1179.0 119.6 1180.0 120.4 1181.0 121.3 1182.0 121.3 1183.0 121.6 1184.0 121.3 1185.0 121.4 1186.0 120.9 1187.0 121.2 1188.0 119.8 1189.0 120.2 1190.0 120.2 1191.0 119.3 1192.0 118.3 1193.0 118.4 1194.0 118.4 1195.0 119.6 1196.0 116.8 1197.0 114.3 1198.0 114.3 1199.0 112.8 1200.0 113.4 1201.0 109.6 1202.0 105.5 1203.0 102.2 1204.0 101.4 1205.0 104.3 1206.0 100.7 1207.0 100.3 1208.0 98.5 1209.0 95.2 1210.0 97.7 1211.0 100.9 1212.0 101.0 1213.0 102.9 1214.0 100.9 1215.0 103.5 1216.0 108.2 1217.0 109.1 1218.0 110.9 1219.0 112.9 1220.0 113.4 1221.0 116.4 1222.0 118.9 1223.0 121.7 1224.0 124.2 1225.0 126.4 1226.0 123.5 1227.0 121.0 1228.0 116.6 1229.0 112.4 1230.0 114.7 1231.0 113.1 1232.0 115.0 1233.0 113.5 1234.0 113.5 1235.0 114.3 1236.0 112.8 1237.0 111.6 1238.0 112.2 1239.0 111.4 1240.0 111.1 1241.0 110.2 1242.0 108.7 1243.0 104.7 1244.0 108.4 1245.0 109.7 1246.0 108.4 1247.0 108.0 1248.0 108.0 1249.0 107.5 1250.0 111.1 1251.0 117.0 1252.0 120.1 1253.0 122.2 1254.0 124.7 1255.0 123.9 1256.0 123.5 1257.0 123.3 1258.0 123.1 1259.0 122.6 1260.0 122.1 1261.0 120.7 1262.0 120.9 1263.0 121.2 1264.0 119.6 1265.0 118.2 1266.0 117.7 1267.0 119.0 1268.0 118.1 1269.0 116.2 1270.0 116.6 1271.0 116.9 1272.0 114.9 1273.0 113.9 1274.0 111.2 1275.0 110.4 1276.0 110.0 1277.0 109.3 1278.0 109.1 1279.0 107.2 1280.0 106.7 1281.0 108.8 1282.0 104.6 1283.0 103.4 1284.0 103.7 1285.0 101.7 1286.0 105.2 1287.0 106.4 1288.0 109.0 1289.0 109.5 1290.0 111.9 1291.0 112.5 1292.0 112.8 1293.0 111.4 1294.0 110.3 1295.0 108.7 1296.0 105.9 1297.0 104.2 1298.0 101.6 1299.0 102.2 1300.0 104.3 1301.0 107.4 1302.0 107.3 1303.0 107.7 1304.0 105.4 1305.0 105.9 1306.0 104.0 1307.0 103.5 1308.0 101.9 1309.0 101.3 1310.0 104.9 1311.0 108.3 1312.0 107.0 1313.0 107.6 1314.0 113.9 1315.0 118.9 1316.0 122.6 1317.0 124.0 1318.0 124.3 1319.0 124.6 1320.0 125.3 1321.0 125.9 1322.0 124.1 1323.0 121.8 1324.0 119.6 1325.0 118.4 1326.0 116.1 1327.0 114.8 1328.0 117.9 1329.0 118.7 1330.0 118.8 1331.0 119.0 1332.0 120.8 1333.0 122.0 1334.0 122.3 1335.0 122.6 1336.0 122.2 1337.0 122.3 1338.0 122.8 1339.0 122.9 1340.0 123.1 1341.0 123.3 1342.0 124.1 1343.0 124.1 1344.0 124.2 1345.0 124.6 1346.0 123.5 1347.0 122.8 1348.0 120.2 1349.0 118.7 1350.0 117.5 1351.0 117.2 1352.0 118.1 1353.0 118.0 1354.0 117.8 1355.0 117.4 1356.0 118.0 1357.0 119.4 1358.0 119.4 1359.0 119.1 1360.0 118.1 1361.0 118.0 1362.0 118.1 1363.0 118.1 1364.0 117.5 1365.0 117.3 1366.0 118.2 1367.0 117.0 1368.0 117.4 1369.0 116.5 1370.0 115.5 1371.0 115.6 1372.0 114.6 1373.0 115.7 1374.0 112.8 1375.0 111.2 1376.0 111.7 1377.0 112.2 1378.0 111.6 1379.0 111.0 1380.0 111.6 1381.0 112.8 1382.0 107.7 1383.0 106.1 1384.0 109.2 1385.0 108.2 1386.0 108.4 1387.0 110.2 1388.0 111.2 1389.0 113.3 1390.0 113.6 1391.0 111.2 1392.0 111.9 1393.0 110.6 1394.0 112.3 1395.0 110.9 1396.0 110.9 1397.0 108.8 1398.0 109.5 1399.0 106.8 1400.0 105.1 1401.0 103.1 1402.0 102.9 1403.0 100.4 1404.0 100.3 1405.0 102.3 1406.0 101.3 1407.0 102.6 1408.0 104.0 1409.0 107.1 1410.0 107.0 1411.0 109.1 1412.0 110.4 1413.0 111.9 1414.0 110.4 1415.0 110.9 1416.0 112.2 1417.0 115.7 1418.0 116.5 1419.0 117.1 1420.0 117.6 1421.0 118.2 1422.0 116.5 1423.0 116.6 1424.0 120.0 1425.0 124.4 1426.0 124.2 1427.0 124.4 1428.0 124.3 1429.0 124.1 1430.0 124.1 1431.0 124.1 1432.0 123.8 1433.0 124.2 1434.0 124.0 1435.0 124.2 1436.0 124.5 1437.0 124.3 1438.0 124.3 1439.0 124.6 1440.0 124.2 1441.0 115.3 1442.0 107.1 1443.0 106.7 1444.0 105.0 1445.0 105.1 1446.0 107.5 1447.0 108.3 1448.0 109.7 1449.0 110.3 1450.0 108.9 1451.0 110.7 1452.0 107.8 1453.0 107.5 1454.0 107.2 1455.0 108.4 1456.0 107.9 1457.0 104.4 1458.0 105.2 1459.0 108.3 1460.0 110.3 1461.0 111.2 1462.0 107.0 1463.0 105.3 1464.0 107.9 1465.0 109.3 1466.0 108.8 1467.0 106.8 1468.0 103.1 1469.0 95.8 1470.0 95.6 1471.0 96.0 1472.0 93.7 1473.0 94.1 1474.0 100.0 1475.0 101.5 1476.0 104.6 1477.0 105.0 1478.0 104.8 1479.0 108.2 1480.0 110.6 1481.0 114.3 1482.0 115.9 1483.0 117.5 1484.0 118.5 1485.0 121.0 1486.0 118.8 1487.0 115.7 1488.0 112.9 1489.0 108.0 1490.0 104.5 1491.0 103.8 1492.0 105.9 1493.0 104.1 1494.0 103.9 1495.0 104.6 1496.0 102.6 1497.0 102.1 1498.0 104.2 1499.0 105.8 1500.0 104.8 1501.0 102.3 1502.0 102.8 1503.0 99.5 1504.0 102.6 1505.0 100.7 1506.0 102.7 1507.0 109.9 1508.0 112.8 1509.0 117.5 1510.0 121.5 1511.0 120.9 1512.0 116.5 1513.0 113.0 1514.0 110.8 1515.0 108.8 1516.0 106.3 1517.0 101.0 1518.0 96.3 1519.0 94.0 1520.0 90.8 1521.0 95.6 1522.0 93.3 1523.0 97.9 1524.0 98.8 1525.0 104.1 1526.0 104.4 1527.0 102.9 1528.0 106.6 1529.0 107.6 1530.0 107.4 1531.0 105.6 1532.0 106.1 1533.0 108.7 1534.0 104.1 1535.0 103.7 1536.0 102.5 1537.0 104.7 1538.0 101.9 1539.0 99.3 1540.0 99.5 1541.0 96.9 1542.0 99.3 1543.0 101.0 1544.0 103.0 1545.0 106.0 1546.0 106.4 1547.0 108.1 1548.0 107.8 1549.0 105.9 1550.0 107.4 1551.0 108.2 1552.0 107.5 1553.0 108.9 1554.0 109.1 1555.0 108.8 1556.0 104.2 1557.0 103.8 1558.0 106.7 1559.0 108.9 1560.0 111.2 1561.0 112.3 1562.0 113.2 1563.0 111.3 1564.0 110.4 1565.0 109.8 1566.0 112.3 1567.0 113.1 1568.0 115.1 1569.0 115.8 1570.0 117.1 1571.0 118.2 1572.0 119.2 1573.0 119.2 1574.0 119.7 1575.0 120.9 1576.0 122.1 1577.0 123.0 1578.0 123.6 1579.0 124.4 1580.0 125.5 1581.0 125.7 1582.0 125.9 1583.0 126.1 1584.0 125.3 1585.0 122.0 1586.0 119.3 1587.0 116.8 1588.0 114.7 1589.0 113.7 1590.0 112.1 1591.0 110.6 1592.0 112.4 1593.0 112.2 1594.0 114.7 1595.0 115.8 1596.0 116.3 1597.0 115.0 1598.0 114.6 1599.0 116.9 1600.0 115.8 1601.0 115.0 1602.0 116.1 1603.0 117.1 1604.0 117.1 1605.0 116.7 1606.0 118.4 1607.0 119.3 1608.0 118.4 1609.0 118.6 1610.0 118.6 1611.0 119.0 1612.0 119.2 1613.0 118.7 1614.0 119.4 1615.0 120.8 1616.0 120.5 1617.0 120.1 1618.0 119.8 1619.0 119.1 1620.0 118.0 1621.0 117.2 1622.0 116.5 1623.0 116.6 1624.0 116.8 1625.0 116.2 1626.0 114.8 1627.0 114.8 1628.0 112.6 1629.0 113.1 1630.0 110.0 1631.0 110.0 1632.0 107.9 1633.0 108.3 1634.0 104.3 1635.0 105.7 1636.0 105.3 1637.0 102.9 1638.0 101.5 1639.0 101.9 1640.0 98.4 1641.0 99.9 1642.0 98.4 1643.0 98.1 1644.0 101.1 1645.0 101.9 1646.0 101.5 1647.0 101.7 1648.0 104.6 1649.0 106.0 1650.0 113.8 1651.0 118.0 1652.0 120.0 1653.0 123.0 1654.0 125.2 1655.0 123.5 1656.0 121.2 1657.0 119.0 1658.0 115.9 1659.0 114.6 1660.0 113.7 1661.0 113.0 1662.0 113.5 1663.0 112.2 1664.0 109.8 1665.0 109.5 1666.0 109.7 1667.0 109.1 1668.0 111.1 1669.0 110.8 1670.0 111.1 1671.0 110.7 1672.0 109.6 1673.0 109.5 1674.0 110.0 1675.0 112.7 1676.0 110.4 1677.0 110.9 1678.0 111.7 1679.0 110.6 1680.0 112.9 1681.0 111.7 1682.0 116.5 1683.0 120.5 1684.0 124.0 L1684.0 129.5 1683.0 133.1 1682.0 138.3 1681.0 143.4 1680.0 142.3 1679.0 142.9 1678.0 144.0 1677.0 145.0 1676.0 146.3 1675.0 147.9 1674.0 145.5 1673.0 143.8 1672.0 143.5 1671.0 144.5 1670.0 145.3 1669.0 146.1 1668.0 145.2 1667.0 145.2 1666.0 144.6 1665.0 142.7 1664.0 142.8 1663.0 142.2 1662.0 140.4 1661.0 138.9 1660.0 139.2 1659.0 137.4 1658.0 136.6 1657.0 133.9 1656.0 132.0 1655.0 130.2 1654.0 128.5 1653.0 131.2 1652.0 135.0 1651.0 137.9 1650.0 143.3 1649.0 143.6 1648.0 147.8 1647.0 149.0 1646.0 149.0 1645.0 147.9 1644.0 151.2 1643.0 158.4 1642.0 156.3 1641.0 160.6 1640.0 154.8 1639.0 154.6 1638.0 153.7 1637.0 156.5 1636.0 153.7 1635.0 157.3 1634.0 151.7 1633.0 148.3 1632.0 148.2 1631.0 147.3 1630.0 143.7 1629.0 141.8 1628.0 140.2 1627.0 140.4 1626.0 136.4 1625.0 135.2 1624.0 135.0 1623.0 135.7 1622.0 135.3 1621.0 135.3 1620.0 135.5 1619.0 136.4 1618.0 135.1 1617.0 133.5 1616.0 134.0 1615.0 134.0 1614.0 134.2 1613.0 132.9 1612.0 133.2 1611.0 133.8 1610.0 134.2 1609.0 133.6 1608.0 133.3 1607.0 132.7 1606.0 133.1 1605.0 133.7 1604.0 133.3 1603.0 133.5 1602.0 134.4 1601.0 134.6 1600.0 135.1 1599.0 134.7 1598.0 135.0 1597.0 135.4 1596.0 134.2 1595.0 134.0 1594.0 134.8 1593.0 136.0 1592.0 135.5 1591.0 134.5 1590.0 134.1 1589.0 135.2 1588.0 135.4 1587.0 134.3 1586.0 133.1 1585.0 130.5 1584.0 128.2 1583.0 127.7 1582.0 128.0 1581.0 128.2 1580.0 128.3 1579.0 129.1 1578.0 129.7 1577.0 130.7 1576.0 131.6 1575.0 131.9 1574.0 132.6 1573.0 133.3 1572.0 133.2 1571.0 133.7 1570.0 134.6 1569.0 136.0 1568.0 137.1 1567.0 136.8 1566.0 136.9 1565.0 137.4 1564.0 140.1 1563.0 140.5 1562.0 139.9 1561.0 141.0 1560.0 141.1 1559.0 144.5 1558.0 143.8 1557.0 144.3 1556.0 146.4 1555.0 149.7 1554.0 146.8 1553.0 149.3 1552.0 147.0 1551.0 151.0 1550.0 152.0 1549.0 152.5 1548.0 151.9 1547.0 151.8 1546.0 151.3 1545.0 151.3 1544.0 152.2 1543.0 155.6 1542.0 155.9 1541.0 155.4 1540.0 157.4 1539.0 157.4 1538.0 156.2 1537.0 153.2 1536.0 157.7 1535.0 158.5 1534.0 160.7 1533.0 159.2 1532.0 156.0 1531.0 151.1 1530.0 151.2 1529.0 152.9 1528.0 161.4 1527.0 164.6 1526.0 166.9 1525.0 161.7 1524.0 164.2 1523.0 163.8 1522.0 161.7 1521.0 161.3 1520.0 164.5 1519.0 163.2 1518.0 156.1 1517.0 149.7 1516.0 150.1 1515.0 146.7 1514.0 142.5 1513.0 139.1 1512.0 136.2 1511.0 133.1 1510.0 131.0 1509.0 134.5 1508.0 139.1 1507.0 141.6 1506.0 147.9 1505.0 149.4 1504.0 152.1 1503.0 157.4 1502.0 157.2 1501.0 156.6 1500.0 156.3 1499.0 150.9 1498.0 150.2 1497.0 144.6 1496.0 145.0 1495.0 141.1 1494.0 140.8 1493.0 138.1 1492.0 140.6 1491.0 139.9 1490.0 142.9 1489.0 141.8 1488.0 138.9 1487.0 134.9 1486.0 133.0 1485.0 130.9 1484.0 132.2 1483.0 132.8 1482.0 134.9 1481.0 136.1 1480.0 136.9 1479.0 136.3 1478.0 139.4 1477.0 142.2 1476.0 146.3 1475.0 149.4 1474.0 152.1 1473.0 158.0 1472.0 159.4 1471.0 158.0 1470.0 157.2 1469.0 154.3 1468.0 150.0 1467.0 144.4 1466.0 144.5 1465.0 147.8 1464.0 155.0 1463.0 155.5 1462.0 160.6 1461.0 163.8 1460.0 157.5 1459.0 151.8 1458.0 156.3 1457.0 152.9 1456.0 148.5 1455.0 144.9 1454.0 147.9 1453.0 147.3 1452.0 149.2 1451.0 148.4 1450.0 149.0 1449.0 149.4 1448.0 150.6 1447.0 152.0 1446.0 153.2 1445.0 149.2 1444.0 149.4 1443.0 147.7 1442.0 143.1 1441.0 135.6 1440.0 129.6 1439.0 129.8 1438.0 129.5 1437.0 129.1 1436.0 129.4 1435.0 129.3 1434.0 129.1 1433.0 129.1 1432.0 128.9 1431.0 128.5 1430.0 128.4 1429.0 128.4 1428.0 128.4 1427.0 128.5 1426.0 128.4 1425.0 128.1 1424.0 130.7 1423.0 133.6 1422.0 134.8 1421.0 133.4 1420.0 132.0 1419.0 131.2 1418.0 133.9 1417.0 136.4 1416.0 139.7 1415.0 142.9 1414.0 144.4 1413.0 145.9 1412.0 150.5 1411.0 151.1 1410.0 152.2 1409.0 153.9 1408.0 151.2 1407.0 154.8 1406.0 154.8 1405.0 155.9 1404.0 158.5 1403.0 165.6 1402.0 167.9 1401.0 165.7 1400.0 159.8 1399.0 156.5 1398.0 159.2 1397.0 158.8 1396.0 154.8 1395.0 153.1 1394.0 148.8 1393.0 143.5 1392.0 142.7 1391.0 144.7 1390.0 140.5 1389.0 140.3 1388.0 141.1 1387.0 143.5 1386.0 143.7 1385.0 141.8 1384.0 142.6 1383.0 140.8 1382.0 142.6 1381.0 142.3 1380.0 141.5 1379.0 141.5 1378.0 142.3 1377.0 142.7 1376.0 141.7 1375.0 141.7 1374.0 140.0 1373.0 140.1 1372.0 138.5 1371.0 138.3 1370.0 139.1 1369.0 140.6 1368.0 138.8 1367.0 139.6 1366.0 139.4 1365.0 137.1 1364.0 141.0 1363.0 143.0 1362.0 142.6 1361.0 142.9 1360.0 142.6 1359.0 143.9 1358.0 144.1 1357.0 141.3 1356.0 142.3 1355.0 141.1 1354.0 139.2 1353.0 138.0 1352.0 138.4 1351.0 136.4 1350.0 136.5 1349.0 133.9 1348.0 133.8 1347.0 132.4 1346.0 130.6 1345.0 128.5 1344.0 128.8 1343.0 128.9 1342.0 129.3 1341.0 129.7 1340.0 129.9 1339.0 129.9 1338.0 130.0 1337.0 129.9 1336.0 130.5 1335.0 130.9 1334.0 130.4 1333.0 130.5 1332.0 131.3 1331.0 132.1 1330.0 132.7 1329.0 133.7 1328.0 135.2 1327.0 135.5 1326.0 136.4 1325.0 135.7 1324.0 133.4 1323.0 131.4 1322.0 129.6 1321.0 128.3 1320.0 128.6 1319.0 128.5 1318.0 128.9 1317.0 129.0 1316.0 129.8 1315.0 133.8 1314.0 136.8 1313.0 143.7 1312.0 146.7 1311.0 151.4 1310.0 150.9 1309.0 151.8 1308.0 150.9 1307.0 156.1 1306.0 152.5 1305.0 157.5 1304.0 154.9 1303.0 154.9 1302.0 158.3 1301.0 157.8 1300.0 160.2 1299.0 161.9 1298.0 162.9 1297.0 162.4 1296.0 161.3 1295.0 158.1 1294.0 156.4 1293.0 153.3 1292.0 152.9 1291.0 152.5 1290.0 148.3 1289.0 146.3 1288.0 146.2 1287.0 147.6 1286.0 145.8 1285.0 144.6 1284.0 144.4 1283.0 146.7 1282.0 146.8 1281.0 146.2 1280.0 143.9 1279.0 143.8 1278.0 144.5 1277.0 143.3 1276.0 140.9 1275.0 137.4 1274.0 138.2 1273.0 139.4 1272.0 140.2 1271.0 141.1 1270.0 140.4 1269.0 139.3 1268.0 138.3 1267.0 140.2 1266.0 136.9 1265.0 137.0 1264.0 135.7 1263.0 136.6 1262.0 136.1 1261.0 136.3 1260.0 133.6 1259.0 132.6 1258.0 131.6 1257.0 130.2 1256.0 129.8 1255.0 129.2 1254.0 128.4 1253.0 131.0 1252.0 135.6 1251.0 141.7 1250.0 146.3 1249.0 147.5 1248.0 144.4 1247.0 140.2 1246.0 140.2 1245.0 140.7 1244.0 140.2 1243.0 140.3 1242.0 139.9 1241.0 138.4 1240.0 139.2 1239.0 141.3 1238.0 142.5 1237.0 141.8 1236.0 142.5 1235.0 141.5 1234.0 140.7 1233.0 140.8 1232.0 139.1 1231.0 137.4 1230.0 136.9 1229.0 137.4 1228.0 135.8 1227.0 133.0 1226.0 130.2 1225.0 127.5 1224.0 131.1 1223.0 133.8 1222.0 138.9 1221.0 143.3 1220.0 144.5 1219.0 145.2 1218.0 149.5 1217.0 154.7 1216.0 157.9 1215.0 156.3 1214.0 157.1 1213.0 160.3 1212.0 152.8 1211.0 148.5 1210.0 153.6 1209.0 153.8 1208.0 151.5 1207.0 151.9 1206.0 154.6 1205.0 161.2 1204.0 157.5 1203.0 154.2 1202.0 149.6 1201.0 143.6 1200.0 138.8 1199.0 139.3 1198.0 138.8 1197.0 138.2 1196.0 136.4 1195.0 135.3 1194.0 135.6 1193.0 135.8 1192.0 135.2 1191.0 135.1 1190.0 134.4 1189.0 133.8 1188.0 133.9 1187.0 133.1 1186.0 133.7 1185.0 134.0 1184.0 134.5 1183.0 134.9 1182.0 135.6 1181.0 136.5 1180.0 136.3 1179.0 136.1 1178.0 134.8 1177.0 132.8 1176.0 132.9 1175.0 134.5 1174.0 133.5 1173.0 133.9 1172.0 133.2 1171.0 134.1 1170.0 133.6 1169.0 133.1 1168.0 133.4 1167.0 133.8 1166.0 134.1 1165.0 132.9 1164.0 134.4 1163.0 136.0 1162.0 134.3 1161.0 133.4 1160.0 133.5 1159.0 134.7 1158.0 131.7 1157.0 129.6 1156.0 127.5 1155.0 127.6 1154.0 127.7 1153.0 127.9 1152.0 128.1 1151.0 128.1 1150.0 128.4 1149.0 129.1 1148.0 130.0 1147.0 131.2 1146.0 131.8 1145.0 133.4 1144.0 133.7 1143.0 134.5 1142.0 134.9 1141.0 137.0 1140.0 137.5 1139.0 138.5 1138.0 139.1 1137.0 140.6 1136.0 140.4 1135.0 142.5 1134.0 144.6 1133.0 147.3 1132.0 144.9 1131.0 145.4 1130.0 146.9 1129.0 149.3 1128.0 145.6 1127.0 144.3 1126.0 145.6 1125.0 145.7 1124.0 145.3 1123.0 147.9 1122.0 148.4 1121.0 150.8 1120.0 149.2 1119.0 148.6 1118.0 151.6 1117.0 150.9 1116.0 152.5 1115.0 153.6 1114.0 152.4 1113.0 152.6 1112.0 153.0 1111.0 152.3 1110.0 159.7 1109.0 158.9 1108.0 162.5 1107.0 161.7 1106.0 162.3 1105.0 158.3 1104.0 159.5 1103.0 157.6 1102.0 154.6 1101.0 153.6 1100.0 154.5 1099.0 156.4 1098.0 156.2 1097.0 160.1 1096.0 159.3 1095.0 157.9 1094.0 158.0 1093.0 154.8 1092.0 154.5 1091.0 156.6 1090.0 156.1 1089.0 161.5 1088.0 162.4 1087.0 169.0 1086.0 168.8 1085.0 160.6 1084.0 161.4 1083.0 157.8 1082.0 153.8 1081.0 150.8 1080.0 144.8 1079.0 143.2 1078.0 139.4 1077.0 135.4 1076.0 133.8 1075.0 135.7 1074.0 139.9 1073.0 143.8 1072.0 146.7 1071.0 149.0 1070.0 153.4 1069.0 156.9 1068.0 157.7 1067.0 159.5 1066.0 158.0 1065.0 152.0 1064.0 152.7 1063.0 149.0 1062.0 150.3 1061.0 148.1 1060.0 147.1 1059.0 144.0 1058.0 143.2 1057.0 141.7 1056.0 141.6 1055.0 142.0 1054.0 141.5 1053.0 137.2 1052.0 134.8 1051.0 131.3 1050.0 129.4 1049.0 132.1 1048.0 134.5 1047.0 137.1 1046.0 139.2 1045.0 142.3 1044.0 141.9 1043.0 142.3 1042.0 145.1 1041.0 143.3 1040.0 145.1 1039.0 146.9 1038.0 147.0 1037.0 145.4 1036.0 151.4 1035.0 155.3 1034.0 153.6 1033.0 154.1 1032.0 152.8 1031.0 153.8 1030.0 149.0 1029.0 153.2 1028.0 154.2 1027.0 156.2 1026.0 155.9 1025.0 154.8 1024.0 156.9 1023.0 157.8 1022.0 153.1 1021.0 154.1 1020.0 152.8 1019.0 154.9 1018.0 153.4 1017.0 153.3 1016.0 156.1 1015.0 152.6 1014.0 149.1 1013.0 147.5 1012.0 148.2 1011.0 148.3 1010.0 150.2 1009.0 150.0 1008.0 148.7 1007.0 149.6 1006.0 148.5 1005.0 147.0 1004.0 144.7 1003.0 139.8 1002.0 135.5 1001.0 132.0 1000.0 128.4 999.0 128.6 998.0 128.7 997.0 128.6 996.0 128.9 995.0 129.0 994.0 129.1 993.0 129.0 992.0 129.0 991.0 128.9 990.0 129.1 989.0 129.4 988.0 129.2 987.0 129.5 986.0 129.3 985.0 129.6 984.0 131.3 983.0 133.7 982.0 135.3 981.0 136.0 980.0 133.7 979.0 131.4 978.0 129.0 977.0 131.3 976.0 140.3 975.0 147.3 974.0 147.1 973.0 148.0 972.0 146.2 971.0 144.9 970.0 150.2 969.0 152.0 968.0 155.1 967.0 156.9 966.0 158.3 965.0 157.7 964.0 160.8 963.0 160.2 962.0 155.1 961.0 151.0 960.0 152.2 959.0 154.4 958.0 153.6 957.0 152.6 956.0 153.6 955.0 151.0 954.0 147.8 953.0 143.3 952.0 141.6 951.0 140.8 950.0 142.3 949.0 142.9 948.0 143.2 947.0 145.3 946.0 144.5 945.0 144.2 944.0 141.5 943.0 137.8 942.0 139.4 941.0 138.9 940.0 139.3 939.0 138.7 938.0 139.5 937.0 139.4 936.0 140.1 935.0 141.3 934.0 139.2 933.0 137.9 932.0 137.1 931.0 136.6 930.0 137.1 929.0 137.0 928.0 138.5 927.0 141.3 926.0 139.2 925.0 140.8 924.0 139.3 923.0 140.4 922.0 139.1 921.0 139.5 920.0 136.3 919.0 134.3 918.0 134.0 917.0 132.2 916.0 130.2 915.0 127.9 914.0 127.9 913.0 128.0 912.0 128.1 911.0 128.2 910.0 128.5 909.0 128.6 908.0 128.7 907.0 129.0 906.0 128.9 905.0 129.0 904.0 129.1 903.0 129.2 902.0 129.1 901.0 129.6 900.0 130.9 899.0 132.8 898.0 134.2 897.0 135.7 896.0 136.8 895.0 134.3 894.0 132.0 893.0 131.3 892.0 130.1 891.0 129.4 890.0 128.7 889.0 128.3 888.0 127.7 887.0 129.5 886.0 133.5 885.0 139.2 884.0 145.7 883.0 150.6 882.0 153.9 881.0 158.9 880.0 155.9 879.0 156.3 878.0 158.3 877.0 156.6 876.0 153.0 875.0 153.4 874.0 158.6 873.0 161.1 872.0 161.9 871.0 160.2 870.0 159.9 869.0 159.9 868.0 156.1 867.0 155.5 866.0 153.9 865.0 152.3 864.0 151.2 863.0 149.0 862.0 145.8 861.0 146.1 860.0 147.0 859.0 145.7 858.0 143.4 857.0 142.0 856.0 140.9 855.0 143.0 854.0 141.0 853.0 143.4 852.0 142.0 851.0 144.1 850.0 143.5 849.0 144.2 848.0 142.3 847.0 142.6 846.0 140.9 845.0 140.5 844.0 142.1 843.0 143.5 842.0 141.3 841.0 141.0 840.0 140.8 839.0 141.0 838.0 139.3 837.0 138.0 836.0 138.1 835.0 138.1 834.0 138.4 833.0 136.8 832.0 136.0 831.0 136.1 830.0 135.6 829.0 137.2 828.0 137.3 827.0 137.5 826.0 136.4 825.0 137.1 824.0 139.6 823.0 141.5 822.0 141.9 821.0 138.9 820.0 137.3 819.0 134.7 818.0 133.6 817.0 132.1 816.0 129.9 815.0 128.1 814.0 128.7 813.0 129.1 812.0 129.3 811.0 129.4 810.0 130.0 809.0 130.4 808.0 130.0 807.0 130.2 806.0 130.6 805.0 131.1 804.0 131.1 803.0 131.5 802.0 131.9 801.0 132.1 800.0 131.6 799.0 130.8 798.0 129.6 797.0 128.3 796.0 127.9 795.0 128.8 794.0 129.7 793.0 131.1 792.0 132.7 791.0 136.7 790.0 139.8 789.0 140.9 788.0 144.7 787.0 149.8 786.0 153.0 785.0 152.1 784.0 153.8 783.0 164.2 782.0 172.5 781.0 180.7 780.0 173.2 779.0 160.6 778.0 145.4 777.0 135.1 776.0 131.5 775.0 127.6 774.0 127.5 773.0 127.6 772.0 127.5 771.0 127.5 770.0 127.5 769.0 127.5 768.0 127.5 767.0 127.5 766.0 127.5 765.0 128.0 764.0 128.5 763.0 129.1 762.0 129.8 761.0 130.5 760.0 130.4 759.0 130.4 758.0 130.5 757.0 130.5 756.0 130.0 755.0 129.5 754.0 129.5 753.0 129.4 752.0 129.2 751.0 128.8 750.0 128.8 749.0 129.1 748.0 129.0 747.0 128.7 746.0 128.6 745.0 128.7 744.0 128.9 743.0 129.0 742.0 128.6 741.0 128.4 740.0 128.6 739.0 128.4 738.0 128.0 737.0 127.6 736.0 127.4 735.0 127.4 734.0 127.4 733.0 127.4 732.0 127.4 731.0 127.4 730.0 127.4 729.0 127.4 728.0 127.4 727.0 127.4 726.0 127.4 725.0 127.4 724.0 127.4 723.0 127.5 722.0 127.5 721.0 127.9 720.0 129.1 719.0 130.5 718.0 131.9 717.0 134.0 716.0 134.8 715.0 136.9 714.0 137.9 713.0 138.5 712.0 140.5 711.0 140.0 710.0 143.6 709.0 144.4 708.0 143.3 707.0 142.7 706.0 141.6 705.0 140.2 704.0 140.4 703.0 141.9 702.0 142.0 701.0 141.8 700.0 142.5 699.0 140.9 698.0 140.9 697.0 139.6 696.0 140.1 695.0 139.7 694.0 139.5 693.0 141.0 692.0 139.6 691.0 140.2 690.0 142.1 689.0 141.9 688.0 142.0 687.0 141.1 686.0 143.6 685.0 140.9 684.0 142.4 683.0 140.7 682.0 139.4 681.0 137.9 680.0 139.8 679.0 137.8 678.0 139.8 677.0 140.7 676.0 139.4 675.0 137.1 674.0 135.6 673.0 135.4 672.0 134.8 671.0 134.4 670.0 134.6 669.0 133.8 668.0 135.0 667.0 136.1 666.0 135.3 665.0 134.0 664.0 134.9 663.0 134.3 662.0 134.1 661.0 132.6 660.0 132.5 659.0 132.7 658.0 132.1 657.0 131.3 656.0 130.7 655.0 129.7 654.0 129.5 653.0 129.1 652.0 128.5 651.0 128.2 650.0 127.9 649.0 127.6 648.0 129.0 647.0 130.9 646.0 133.3 645.0 137.1 644.0 138.4 643.0 140.7 642.0 142.0 641.0 141.0 640.0 145.2 639.0 147.9 638.0 152.7 637.0 157.5 636.0 154.5 635.0 154.8 634.0 150.3 633.0 149.1 632.0 149.6 631.0 145.9 630.0 146.4 629.0 147.2 628.0 148.5 627.0 148.7 626.0 150.5 625.0 153.2 624.0 153.6 623.0 156.0 622.0 154.6 621.0 150.5 620.0 160.3 619.0 164.8 618.0 160.9 617.0 158.4 616.0 153.7 615.0 150.1 614.0 139.5 613.0 130.8 612.0 127.4 611.0 127.5 610.0 127.4 609.0 127.5 608.0 127.5 607.0 127.5 606.0 127.6 605.0 127.6 604.0 127.5 603.0 127.5 602.0 127.5 601.0 127.5 600.0 127.4 599.0 127.5 598.0 131.8 597.0 138.2 596.0 143.3 595.0 148.9 594.0 146.7 593.0 139.9 592.0 138.1 591.0 135.5 590.0 140.0 589.0 141.5 588.0 144.4 587.0 145.2 586.0 148.4 585.0 149.7 584.0 151.8 583.0 149.6 582.0 150.6 581.0 149.0 580.0 151.8 579.0 157.8 578.0 155.3 577.0 160.0 576.0 158.0 575.0 154.3 574.0 157.0 573.0 152.2 572.0 148.7 571.0 148.2 570.0 146.4 569.0 143.9 568.0 142.6 567.0 138.7 566.0 136.6 565.0 133.3 564.0 132.2 563.0 131.1 562.0 130.5 561.0 129.5 560.0 128.4 559.0 128.8 558.0 129.1 557.0 129.4 556.0 130.0 555.0 130.2 554.0 130.8 553.0 131.2 552.0 131.5 551.0 131.5 550.0 132.2 549.0 131.5 548.0 132.5 547.0 132.5 546.0 133.6 545.0 134.9 544.0 138.5 543.0 142.8 542.0 143.8 541.0 141.8 540.0 150.4 539.0 151.8 538.0 152.6 537.0 153.0 536.0 153.2 535.0 153.4 534.0 154.4 533.0 155.8 532.0 151.9 531.0 152.4 530.0 154.6 529.0 151.8 528.0 156.6 527.0 152.6 526.0 156.0 525.0 162.2 524.0 165.2 523.0 173.0 522.0 151.9 521.0 127.6 520.0 127.6 519.0 127.6 518.0 127.5 517.0 127.4 516.0 127.5 515.0 127.5 514.0 127.5 513.0 133.9 512.0 143.1 511.0 153.5 510.0 146.4 509.0 143.5 508.0 143.6 507.0 139.7 506.0 137.0 505.0 134.3 504.0 130.5 503.0 131.3 502.0 133.1 501.0 134.4 500.0 138.0 499.0 140.0 498.0 140.9 497.0 141.6 496.0 143.9 495.0 143.4 494.0 145.4 493.0 145.0 492.0 149.1 491.0 150.5 490.0 151.8 489.0 153.6 488.0 151.3 487.0 151.2 486.0 155.5 485.0 159.8 484.0 155.6 483.0 156.9 482.0 154.5 481.0 154.2 480.0 153.6 479.0 152.2 478.0 153.6 477.0 149.9 476.0 142.6 475.0 134.9 474.0 129.0 473.0 127.5 472.0 127.9 471.0 128.3 470.0 130.6 469.0 133.3 468.0 136.5 467.0 138.3 466.0 142.2 465.0 143.9 464.0 148.6 463.0 152.6 462.0 152.5 461.0 156.1 460.0 157.7 459.0 159.8 458.0 156.5 457.0 158.2 456.0 156.7 455.0 158.0 454.0 156.3 453.0 153.5 452.0 155.3 451.0 150.6 450.0 151.4 449.0 153.5 448.0 150.1 447.0 151.2 446.0 147.5 445.0 142.0 444.0 141.0 443.0 141.1 442.0 137.9 441.0 135.6 440.0 133.7 439.0 135.8 438.0 137.1 437.0 140.1 436.0 139.6 435.0 140.3 434.0 141.6 433.0 145.3 432.0 146.9 431.0 148.0 430.0 149.5 429.0 154.6 428.0 150.1 427.0 144.7 426.0 140.9 425.0 137.2 424.0 130.8 423.0 129.6 422.0 129.5 421.0 129.7 420.0 129.8 419.0 131.0 418.0 132.9 417.0 135.4 416.0 137.3 415.0 138.1 414.0 136.8 413.0 134.6 412.0 133.5 411.0 132.5 410.0 132.7 409.0 132.1 408.0 132.1 407.0 132.3 406.0 131.9 405.0 131.4 404.0 130.6 403.0 129.9 402.0 128.8 401.0 128.4 400.0 128.9 399.0 129.7 398.0 129.7 397.0 129.8 396.0 130.5 395.0 130.9 394.0 131.0 393.0 131.9 392.0 131.6 391.0 131.4 390.0 131.7 389.0 131.8 388.0 132.2 387.0 133.3 386.0 134.0 385.0 133.0 384.0 134.4 383.0 136.0 382.0 136.4 381.0 138.2 380.0 139.5 379.0 139.0 378.0 140.0 377.0 140.6 376.0 142.4 375.0 144.2 374.0 143.1 373.0 143.8 372.0 145.3 371.0 149.7 370.0 150.3 369.0 151.2 368.0 150.4 367.0 152.3 366.0 153.1 365.0 149.5 364.0 151.6 363.0 149.4 362.0 151.1 361.0 147.8 360.0 150.8 359.0 153.2 358.0 149.2 357.0 150.6 356.0 148.9 355.0 146.2 354.0 146.9 353.0 144.6 352.0 141.7 351.0 139.7 350.0 139.4 349.0 138.1 348.0 136.7 347.0 135.8 346.0 136.3 345.0 135.7 344.0 137.9 343.0 138.6 342.0 139.6 341.0 142.8 340.0 142.5 339.0 140.7 338.0 141.3 337.0 139.1 336.0 137.4 335.0 133.8 334.0 131.7 333.0 132.1 332.0 134.4 331.0 136.7 330.0 136.7 329.0 137.8 328.0 138.4 327.0 140.2 326.0 140.9 325.0 142.7 324.0 141.2 323.0 143.5 322.0 141.7 321.0 140.9 320.0 144.9 319.0 143.9 318.0 144.4 317.0 146.9 316.0 149.4 315.0 151.9 314.0 158.6 313.0 163.3 312.0 163.7 311.0 154.8 310.0 154.7 309.0 156.3 308.0 150.7 307.0 147.7 306.0 148.6 305.0 147.5 304.0 146.9 303.0 146.2 302.0 143.6 301.0 142.1 300.0 142.2 299.0 145.0 298.0 143.1 297.0 143.0 296.0 145.3 295.0 146.4 294.0 149.2 293.0 150.2 292.0 147.9 291.0 148.4 290.0 150.1 289.0 154.1 288.0 149.8 287.0 142.7 286.0 137.2 285.0 131.6 284.0 138.1 283.0 145.3 282.0 149.8 281.0 157.3 280.0 156.9 279.0 156.3 278.0 155.6 277.0 151.8 276.0 148.9 275.0 147.5 274.0 147.2 273.0 150.9 272.0 149.4 271.0 150.6 270.0 153.7 269.0 152.8 268.0 154.0 267.0 153.5 266.0 156.3 265.0 159.7 264.0 164.9 263.0 161.1 262.0 160.9 261.0 159.5 260.0 156.1 259.0 151.1 258.0 148.4 257.0 143.8 256.0 141.2 255.0 139.5 254.0 139.5 253.0 140.5 252.0 139.4 251.0 139.3 250.0 137.6 249.0 136.8 248.0 136.2 247.0 135.8 246.0 135.0 245.0 134.8 244.0 134.5 243.0 133.1 242.0 132.1 241.0 132.0 240.0 131.9 239.0 131.9 238.0 131.3 237.0 131.5 236.0 132.0 235.0 131.6 234.0 132.6 233.0 132.9 232.0 132.9 231.0 133.5 230.0 133.9 229.0 136.5 228.0 137.6 227.0 137.0 226.0 141.5 225.0 142.3 224.0 143.3 223.0 144.8 222.0 148.7 221.0 152.4 220.0 151.2 219.0 152.9 218.0 148.8 217.0 149.3 216.0 149.4 215.0 148.0 214.0 143.4 213.0 138.0 212.0 137.6 211.0 138.9 210.0 139.1 209.0 140.5 208.0 142.7 207.0 144.2 206.0 146.6 205.0 146.7 204.0 147.0 203.0 146.3 202.0 147.4 201.0 147.8 200.0 150.5 199.0 151.4 198.0 149.6 197.0 149.8 196.0 154.1 195.0 152.2 194.0 150.1 193.0 151.3 192.0 148.5 191.0 146.8 190.0 152.4 189.0 154.4 188.0 159.4 187.0 157.4 186.0 162.1 185.0 158.6 184.0 157.9 183.0 155.5 182.0 152.8 181.0 150.5 180.0 152.3 179.0 154.8 178.0 152.6 177.0 151.5 176.0 150.0 175.0 150.5 174.0 149.7 173.0 147.4 172.0 146.8 171.0 146.2 170.0 145.4 169.0 152.0 168.0 159.6 167.0 166.3 166.0 160.7 165.0 158.5 164.0 152.3 163.0 146.7 162.0 142.0 161.0 141.1 160.0 139.4 159.0 137.7 158.0 137.0 157.0 136.7 156.0 135.0 155.0 134.7 154.0 134.2 153.0 133.5 152.0 131.9 151.0 131.2 150.0 131.7 149.0 131.2 148.0 130.7 147.0 130.3 146.0 130.1 145.0 130.2 144.0 130.0 143.0 130.4 142.0 130.3 141.0 130.3 140.0 130.4 139.0 130.2 138.0 129.8 137.0 130.2 136.0 131.4 135.0 133.8 134.0 134.5 133.0 134.6 132.0 135.9 131.0 137.5 130.0 139.7 129.0 141.0 128.0 144.4 127.0 150.1 126.0 151.8 125.0 154.2 124.0 158.1 123.0 152.7 122.0 151.3 121.0 146.3 120.0 139.9 119.0 137.3 118.0 134.1 117.0 132.4 116.0 131.0 115.0 129.3 114.0 129.9 113.0 130.2 112.0 131.7 111.0 134.6 110.0 136.2 109.0 137.2 108.0 138.0 107.0 138.0 106.0 139.2 105.0 140.3 104.0 143.3 103.0 143.9 102.0 143.9 101.0 145.7 100.0 147.5 99.0 146.0 98.0 147.5 97.0 146.2 96.0 145.8 95.0 148.2 94.0 148.5 93.0 148.2 92.0 148.9 91.0 151.0 90.0 150.1 89.0 149.6 88.0 149.6 87.0 149.1 86.0 143.7 85.0 141.1 84.0 139.5 83.0 139.1 82.0 135.8 81.0 133.8 80.0 135.1 79.0 134.3 78.0 135.5 77.0 135.0 76.0 136.7 75.0 138.6 74.0 138.4 73.0 139.3 72.0 141.7 71.0 144.7 70.0 148.0 69.0 152.0 68.0 149.4 67.0 147.2 66.0 148.2 65.0 144.3 64.0 141.5 63.0 140.3 62.0 139.5 61.0 139.9 60.0 138.9 59.0 136.7 58.0 138.2 57.0 138.8 56.0 135.8 55.0 134.7 54.0 134.7 53.0 135.8 52.0 135.7 51.0 135.8 50.0 135.2 49.0 134.1 48.0 133.2 47.0 133.1 46.0 133.3 45.0 134.1 44.0 133.0 43.0 132.8 42.0 133.2 41.0 133.7 40.0 134.8 39.0 135.7 38.0 135.3 37.0 136.2 36.0 137.4 35.0 138.0 34.0 138.6 33.0 139.3 32.0 141.4 31.0 146.7 30.0 148.9 29.0 153.8 28.0 157.2 27.0 163.6 26.0 164.5 25.0 159.9 24.0 151.7 23.0 148.1 22.0 144.8 21.0 140.7 20.0 137.1 19.0 131.8 18.0 130.4 17.0 129.9 16.0 129.8 15.0 129.4 14.0 129.5 13.0 129.6 12.0 129.4 11.0 129.1 10.0 129.1 9.0 129.4 8.0 129.3 7.0 129.6 6.0 129.9 5.0 129.7 4.0 129.7 3.0 129.4 2.0 129.5 1.0 129.5Z" fill="#8cc8f8" stroke="#2e5578" stroke-width="0.8" stroke-linejoin="round"/></svg>
<div class="t" style="left:221.4px;top:309.5px;font-size:10.5px;color:#1d3046;letter-spacing:0.34px;">Vocals&nbsp;&nbsp;&nbsp;14.7 dB&nbsp;&nbsp;TS/PS</div>
<div style="left:827px;top:139px;width:1.2px;height:182px;background:#a9cdee;"></div>
<div style="left:945.5px;top:139px;width:1.2px;height:182px;background:#a9cdee;"></div>
<div style="left:1102px;top:139px;width:1.2px;height:182px;background:#a9cdee;"></div>
<div style="left:1193.5px;top:139px;width:1.2px;height:182px;background:#a9cdee;"></div>
<div style="left:215px;top:321.5px;width:1685px;height:96px;background:#36414b;"></div>
<div style="left:215px;top:369px;width:1685px;height:1px;background:#323c45;"></div>
<div style="left:827.5px;top:321.5px;width:118.5px;height:47.5px;background:#73a5d3;"></div>
<svg style="left:827.5px;top:321.5px;overflow:hidden;" width="118.5" height="47.5" viewBox="0 0 118.5 47.5"><path d="M1.0 10.5 2.2 9.9 3.4 9.7 4.6 9.6 5.8 9.6 7.0 9.5 8.2 9.5 9.4 9.5 10.6 9.5 11.8 10.2 13.0 10.8 14.2 10.3 15.4 8.6 16.6 6.3 17.8 3.9 19.0 4.4 20.2 4.4 21.4 5.6 22.6 7.7 23.8 9.0 25.0 8.4 26.2 7.7 27.4 6.9 28.6 6.2 29.8 6.5 31.0 6.1 32.2 5.8 33.4 5.9 34.6 5.0 35.8 4.6 37.0 4.2 38.2 3.7 39.4 4.0 40.6 3.9 41.8 4.4 43.0 5.0 44.2 5.1 45.4 5.6 46.6 7.4 47.8 8.9 49.0 9.9 50.2 11.0 51.4 11.1 52.6 11.1 53.8 11.1 55.0 9.9 56.2 7.1 57.4 6.7 58.6 5.8 59.8 5.7 61.0 5.4 62.2 5.3 63.4 5.1 64.6 4.3 65.8 3.7 67.0 3.7 68.2 4.5 69.4 5.2 70.6 4.5 71.8 5.6 73.0 7.1 74.2 8.2 75.4 9.4 76.6 10.4 77.8 9.7 79.0 7.5 80.2 5.4 81.4 4.3 82.6 5.3 83.8 8.5 85.0 11.1 86.2 11.0 87.4 11.0 88.6 7.9 89.8 -0.2 91.0 2.9 92.2 3.8 93.4 4.2 94.6 3.9 95.8 4.0 97.0 5.2 98.2 4.5 99.4 4.8 100.6 5.9 101.8 5.8 103.0 6.6 104.2 6.6 105.4 7.5 106.6 8.2 107.8 9.1 109.0 10.0 110.2 10.2 111.4 10.4 112.6 10.6 113.8 10.8 115.0 10.9 116.2 11.0 117.4 11.2 L117.4 12.2 116.2 12.4 115.0 12.5 113.8 12.6 112.6 12.7 111.4 12.7 110.2 12.8 109.0 12.9 107.8 14.1 106.6 15.3 105.4 15.8 104.2 16.4 103.0 17.6 101.8 17.6 100.6 18.0 99.4 18.3 98.2 18.2 97.0 18.4 95.8 19.1 94.6 19.1 93.4 18.4 92.2 19.0 91.0 19.0 89.8 20.5 88.6 14.8 87.4 12.1 86.2 12.2 85.0 12.1 83.8 14.6 82.6 16.7 81.4 17.3 80.2 16.9 79.0 16.0 77.8 14.0 76.6 13.1 75.4 14.5 74.2 15.6 73.0 16.5 71.8 17.3 70.6 17.5 69.4 18.3 68.2 18.5 67.0 18.5 65.8 19.5 64.6 19.5 63.4 18.9 62.2 19.0 61.0 18.4 59.8 17.7 58.6 17.6 57.4 17.2 56.2 16.3 55.0 13.4 53.8 12.2 52.6 12.3 51.4 12.3 50.2 12.4 49.0 13.3 47.8 14.4 46.6 15.4 45.4 16.9 44.2 17.9 43.0 17.5 41.8 17.9 40.6 18.3 39.4 18.1 38.2 19.0 37.0 19.6 35.8 19.4 34.6 18.5 33.4 17.3 32.2 17.0 31.0 16.6 29.8 16.8 28.6 17.4 27.4 16.9 26.2 16.7 25.0 15.6 23.8 14.3 22.6 15.8 21.4 17.1 20.2 18.0 19.0 17.9 17.8 17.9 16.6 16.2 15.4 14.4 14.2 12.8 13.0 12.4 11.8 13.0 10.6 13.4 9.4 13.4 8.2 13.5 7.0 13.7 5.8 14.0 4.6 13.8 3.4 13.6 2.2 13.5 1.0 12.7Z" fill="#8cc8f8" stroke="#2e5578" stroke-width="0.7"/><path d="M1.0 34.7 2.2 34.1 3.4 33.9 4.6 33.9 5.8 33.8 7.0 33.7 8.2 33.7 9.4 33.8 10.6 33.7 11.8 34.4 13.0 35.0 14.2 34.5 15.4 32.8 16.6 30.5 17.8 28.1 19.0 28.6 20.2 28.6 21.4 29.8 22.6 31.9 23.8 33.2 25.0 32.6 26.2 31.9 27.4 31.1 28.6 30.4 29.8 30.8 31.0 30.3 32.2 30.1 33.4 30.1 34.6 29.2 35.8 28.8 37.0 28.4 38.2 27.9 39.4 28.2 40.6 28.1 41.8 28.6 43.0 29.2 44.2 29.4 45.4 29.8 46.6 31.6 47.8 33.1 49.0 34.1 50.2 35.2 51.4 35.4 52.6 35.4 53.8 35.3 55.0 34.2 56.2 31.3 57.4 30.9 58.6 30.0 59.8 29.9 61.0 29.6 62.2 29.5 63.4 29.3 64.6 28.5 65.8 27.9 67.0 27.9 68.2 28.7 69.4 29.4 70.6 28.8 71.8 29.8 73.0 31.3 74.2 32.5 75.4 33.7 76.6 34.6 77.8 33.9 79.0 31.7 80.2 29.7 81.4 28.5 82.6 29.5 83.8 32.7 85.0 35.3 86.2 35.3 87.4 35.3 88.6 32.1 89.8 24.1 91.0 27.1 92.2 28.0 93.4 28.4 94.6 28.1 95.8 28.3 97.0 29.4 98.2 28.7 99.4 29.0 100.6 30.1 101.8 30.0 103.0 30.8 104.2 30.9 105.4 31.7 106.6 32.4 107.8 33.3 109.0 34.3 110.2 34.5 111.4 34.6 112.6 34.8 113.8 35.0 115.0 35.1 116.2 35.2 117.4 35.4 L117.4 36.5 116.2 36.6 115.0 36.7 113.8 36.8 112.6 36.9 111.4 36.9 110.2 37.0 109.0 37.1 107.8 38.4 106.6 39.5 105.4 40.1 104.2 40.6 103.0 41.8 101.8 41.8 100.6 42.3 99.4 42.6 98.2 42.4 97.0 42.7 95.8 43.3 94.6 43.3 93.4 42.7 92.2 43.2 91.0 43.3 89.8 44.7 88.6 39.1 87.4 36.4 86.2 36.4 85.0 36.4 83.8 38.9 82.6 40.9 81.4 41.5 80.2 41.1 79.0 40.2 77.8 38.3 76.6 37.3 75.4 38.7 74.2 39.9 73.0 40.7 71.8 41.6 70.6 41.7 69.4 42.5 68.2 42.8 67.0 42.7 65.8 43.7 64.6 43.7 63.4 43.2 62.2 43.2 61.0 42.6 59.8 42.0 58.6 41.8 57.4 41.4 56.2 40.6 55.0 37.6 53.8 36.4 52.6 36.5 51.4 36.5 50.2 36.7 49.0 37.5 47.8 38.6 46.6 39.6 45.4 41.1 44.2 42.1 43.0 41.7 41.8 42.1 40.6 42.5 39.4 42.3 38.2 43.2 37.0 43.9 35.8 43.6 34.6 42.7 33.4 41.5 32.2 41.2 31.0 40.9 29.8 41.0 28.6 41.6 27.4 41.1 26.2 40.9 25.0 39.9 23.8 38.5 22.6 40.0 21.4 41.3 20.2 42.2 19.0 42.1 17.8 42.1 16.6 40.4 15.4 38.6 14.2 37.1 13.0 36.6 11.8 37.2 10.6 37.6 9.4 37.6 8.2 37.7 7.0 38.0 5.8 38.2 4.6 38.0 3.4 37.8 2.2 37.7 1.0 36.9Z" fill="#8cc8f8" stroke="#2e5578" stroke-width="0.7"/></svg>
<div style="left:946px;top:321.5px;width:156.5px;height:47.5px;background:#62bfe8;"></div>
<svg style="left:946px;top:321.5px;overflow:hidden;" width="156.5" height="47.5" viewBox="0 0 156.5 47.5"><path d="M1.0 11.2 2.2 11.2 3.4 11.2 4.6 11.2 5.8 11.2 7.0 11.2 8.2 11.2 9.4 11.2 10.6 11.2 11.8 11.2 13.0 11.2 14.2 11.2 15.4 11.2 16.6 11.2 17.8 11.2 19.0 11.2 20.2 11.2 21.4 11.1 22.6 11.1 23.8 11.1 25.0 11.1 26.2 11.1 27.4 11.2 28.6 11.2 29.8 11.2 31.0 11.2 32.2 11.2 33.4 11.2 34.6 11.2 35.8 11.2 37.0 11.2 38.2 11.2 39.4 11.2 40.6 11.2 41.8 11.2 43.0 8.3 44.2 4.1 45.4 2.7 46.6 2.2 47.8 2.7 49.0 2.7 50.2 2.4 51.4 3.0 52.6 3.9 53.8 4.6 55.0 5.0 56.2 5.5 57.4 6.3 58.6 7.3 59.8 8.6 61.0 9.8 62.2 10.5 63.4 10.8 64.6 10.8 65.8 10.8 67.0 10.8 68.2 10.9 69.4 11.0 70.6 11.1 71.8 11.1 73.0 11.1 74.2 11.2 75.4 11.1 76.6 11.1 77.8 11.2 79.0 11.2 80.2 11.2 81.4 11.2 82.6 11.2 83.8 11.2 85.0 11.2 86.2 11.1 87.4 11.1 88.6 10.9 89.8 10.7 91.0 10.4 92.2 10.3 93.4 9.8 94.6 9.7 95.8 9.2 97.0 9.2 98.2 9.1 99.4 9.0 100.6 9.2 101.8 8.9 103.0 8.6 104.2 8.4 105.4 8.6 106.6 8.4 107.8 8.2 109.0 8.0 110.2 7.8 111.4 7.8 112.6 8.0 113.8 7.8 115.0 8.1 116.2 8.4 117.4 8.2 118.6 8.6 119.8 8.2 121.0 8.3 122.2 7.3 123.4 7.2 124.6 6.6 125.8 6.6 127.0 7.0 128.2 6.4 129.4 6.6 130.6 6.7 131.8 6.7 133.0 6.4 134.2 7.1 135.4 7.3 136.6 6.8 137.8 6.0 139.0 5.2 140.2 4.9 141.4 4.3 142.6 3.9 143.8 3.5 145.0 4.0 146.2 4.0 147.4 4.0 148.6 3.9 149.8 4.6 151.0 5.3 152.2 5.2 153.4 7.1 154.6 8.1 L154.6 15.2 153.4 16.5 152.2 17.7 151.0 18.3 149.8 18.1 148.6 17.8 147.4 18.2 146.2 18.2 145.0 19.1 143.8 18.6 142.6 18.5 141.4 18.5 140.2 18.0 139.0 17.9 137.8 17.0 136.6 16.3 135.4 16.3 134.2 16.1 133.0 16.6 131.8 16.7 130.6 16.7 129.4 16.5 128.2 15.7 127.0 15.7 125.8 15.6 124.6 15.9 123.4 16.2 122.2 16.3 121.0 16.6 119.8 16.7 118.6 16.6 117.4 16.1 116.2 16.2 115.0 16.0 113.8 15.8 112.6 14.9 111.4 14.5 110.2 14.6 109.0 15.2 107.8 14.7 106.6 14.7 105.4 15.0 104.2 14.7 103.0 14.8 101.8 14.7 100.6 14.5 99.4 14.2 98.2 13.9 97.0 13.6 95.8 13.3 94.6 13.5 93.4 13.4 92.2 13.0 91.0 12.8 89.8 12.6 88.6 12.3 87.4 12.1 86.2 12.2 85.0 12.2 83.8 12.1 82.6 12.1 81.4 12.1 80.2 12.1 79.0 12.1 77.8 12.1 76.6 12.1 75.4 12.1 74.2 12.2 73.0 12.2 71.8 12.2 70.6 12.3 69.4 12.3 68.2 12.3 67.0 12.4 65.8 12.3 64.6 12.4 63.4 12.5 62.2 12.9 61.0 13.8 59.8 14.8 58.6 15.6 57.4 16.4 56.2 18.2 55.0 18.8 53.8 19.8 52.6 20.2 51.4 20.0 50.2 20.2 49.0 21.1 47.8 21.5 46.6 20.6 45.4 20.9 44.2 19.4 43.0 15.0 41.8 12.0 40.6 12.0 39.4 12.1 38.2 12.1 37.0 12.1 35.8 12.1 34.6 12.1 33.4 12.0 32.2 12.0 31.0 12.0 29.8 12.1 28.6 12.1 27.4 12.2 26.2 12.3 25.0 12.2 23.8 12.2 22.6 12.1 21.4 12.1 20.2 12.1 19.0 12.0 17.8 12.0 16.6 12.0 15.4 12.0 14.2 12.0 13.0 12.0 11.8 12.0 10.6 12.0 9.4 12.0 8.2 12.0 7.0 12.0 5.8 12.0 4.6 12.0 3.4 12.0 2.2 12.0 1.0 12.0Z" fill="#74d0f7"/><path d="M1.0 35.5 2.2 35.5 3.4 35.5 4.6 35.5 5.8 35.5 7.0 35.5 8.2 35.5 9.4 35.5 10.6 35.5 11.8 35.5 13.0 35.5 14.2 35.5 15.4 35.5 16.6 35.5 17.8 35.5 19.0 35.5 20.2 35.4 21.4 35.3 22.6 35.3 23.8 35.3 25.0 35.4 26.2 35.4 27.4 35.4 28.6 35.4 29.8 35.4 31.0 35.5 32.2 35.5 33.4 35.5 34.6 35.4 35.8 35.4 37.0 35.4 38.2 35.4 39.4 35.4 40.6 35.4 41.8 35.4 43.0 32.5 44.2 28.3 45.4 27.0 46.6 26.5 47.8 26.9 49.0 26.9 50.2 26.6 51.4 27.3 52.6 28.1 53.8 28.8 55.0 29.2 56.2 29.7 57.4 30.5 58.6 31.5 59.8 32.8 61.0 34.1 62.2 34.7 63.4 35.0 64.6 35.0 65.8 35.0 67.0 35.1 68.2 35.1 69.4 35.2 70.6 35.3 71.8 35.3 73.0 35.3 74.2 35.4 75.4 35.3 76.6 35.4 77.8 35.4 79.0 35.5 80.2 35.5 81.4 35.5 82.6 35.4 83.8 35.4 85.0 35.4 86.2 35.3 87.4 35.3 88.6 35.2 89.8 34.9 91.0 34.6 92.2 34.5 93.4 34.0 94.6 33.9 95.8 33.4 97.0 33.4 98.2 33.3 99.4 33.2 100.6 33.4 101.8 33.2 103.0 32.8 104.2 32.7 105.4 32.8 106.6 32.6 107.8 32.4 109.0 32.2 110.2 32.0 111.4 32.1 112.6 32.2 113.8 32.0 115.0 32.3 116.2 32.6 117.4 32.4 118.6 32.8 119.8 32.4 121.0 32.5 122.2 31.5 123.4 31.4 124.6 30.8 125.8 30.8 127.0 31.3 128.2 30.6 129.4 30.8 130.6 30.9 131.8 30.9 133.0 30.6 134.2 31.3 135.4 31.5 136.6 31.0 137.8 30.3 139.0 29.5 140.2 29.1 141.4 28.6 142.6 28.2 143.8 27.7 145.0 28.2 146.2 28.2 147.4 28.2 148.6 28.1 149.8 28.9 151.0 29.6 152.2 29.5 153.4 31.3 154.6 32.3 L154.6 39.4 153.4 40.8 152.2 41.9 151.0 42.5 149.8 42.4 148.6 42.0 147.4 42.4 146.2 42.4 145.0 43.3 143.8 42.8 142.6 42.7 141.4 42.7 140.2 42.2 139.0 42.1 137.8 41.3 136.6 40.5 135.4 40.6 134.2 40.3 133.0 40.8 131.8 40.9 130.6 40.9 129.4 40.7 128.2 39.9 127.0 40.0 125.8 39.9 124.6 40.1 123.4 40.4 122.2 40.5 121.0 40.8 119.8 40.9 118.6 40.8 117.4 40.3 116.2 40.4 115.0 40.2 113.8 40.0 112.6 39.1 111.4 38.7 110.2 38.8 109.0 39.4 107.8 38.9 106.6 38.9 105.4 39.3 104.2 39.0 103.0 39.0 101.8 38.9 100.6 38.7 99.4 38.5 98.2 38.1 97.0 37.8 95.8 37.5 94.6 37.7 93.4 37.6 92.2 37.2 91.0 37.0 89.8 36.8 88.6 36.6 87.4 36.4 86.2 36.4 85.0 36.4 83.8 36.4 82.6 36.3 81.4 36.3 80.2 36.3 79.0 36.3 77.8 36.3 76.6 36.3 75.4 36.3 74.2 36.4 73.0 36.4 71.8 36.5 70.6 36.5 69.4 36.5 68.2 36.5 67.0 36.6 65.8 36.6 64.6 36.7 63.4 36.8 62.2 37.2 61.0 38.0 59.8 39.0 58.6 39.9 57.4 40.6 56.2 42.5 55.0 43.0 53.8 44.0 52.6 44.4 51.4 44.2 50.2 44.4 49.0 45.3 47.8 45.8 46.6 44.8 45.4 45.1 44.2 43.6 43.0 39.2 41.8 36.3 40.6 36.3 39.4 36.3 38.2 36.3 37.0 36.3 35.8 36.3 34.6 36.3 33.4 36.3 32.2 36.3 31.0 36.3 29.8 36.3 28.6 36.3 27.4 36.4 26.2 36.5 25.0 36.5 23.8 36.4 22.6 36.4 21.4 36.4 20.2 36.3 19.0 36.3 17.8 36.3 16.6 36.3 15.4 36.3 14.2 36.3 13.0 36.3 11.8 36.3 10.6 36.3 9.4 36.3 8.2 36.3 7.0 36.3 5.8 36.3 4.6 36.3 3.4 36.3 2.2 36.3 1.0 36.3Z" fill="#74d0f7"/></svg>
<div style="left:1102.5px;top:321.5px;width:91.5px;height:47.5px;background:#73a5d3;"></div>
<svg style="left:1102.5px;top:321.5px;overflow:hidden;" width="91.5" height="47.5" viewBox="0 0 91.5 47.5"><path d="M1.0 11.2 2.2 11.2 3.4 11.1 4.6 6.0 5.8 1.5 7.0 1.6 8.2 2.5 9.4 3.9 10.6 4.4 11.8 4.9 13.0 5.9 14.2 7.2 15.4 8.2 16.6 9.4 17.8 10.5 19.0 10.8 20.2 10.7 21.4 10.6 22.6 10.4 23.8 10.4 25.0 10.4 26.2 10.4 27.4 10.4 28.6 10.9 29.8 11.2 31.0 11.2 32.2 11.2 33.4 11.2 34.6 11.2 35.8 11.2 37.0 10.9 38.2 10.2 39.4 9.2 40.6 9.1 41.8 8.7 43.0 8.7 44.2 8.6 45.4 8.8 46.6 8.7 47.8 8.3 49.0 8.1 50.2 7.9 51.4 8.0 52.6 7.7 53.8 7.8 55.0 7.9 56.2 8.0 57.4 7.7 58.6 7.6 59.8 7.3 61.0 6.9 62.2 6.5 63.4 6.7 64.6 6.4 65.8 6.2 67.0 6.1 68.2 5.7 69.4 6.1 70.6 6.0 71.8 5.5 73.0 5.3 74.2 5.1 75.4 5.3 76.6 4.7 77.8 4.7 79.0 4.7 80.2 5.1 81.4 5.0 82.6 5.4 83.8 4.7 85.0 4.3 86.2 4.5 87.4 4.8 88.6 6.6 89.8 8.4 L89.8 15.6 88.6 17.8 87.4 19.5 86.2 19.9 85.0 20.4 83.8 20.0 82.6 19.5 81.4 19.6 80.2 18.9 79.0 19.1 77.8 18.0 76.6 17.5 75.4 17.2 74.2 17.1 73.0 18.2 71.8 17.5 70.6 17.5 69.4 16.9 68.2 16.5 67.0 16.1 65.8 16.6 64.6 16.5 63.4 15.8 62.2 16.0 61.0 16.5 59.8 15.7 58.6 15.5 57.4 15.3 56.2 15.3 55.0 14.7 53.8 15.4 52.6 15.3 51.4 15.2 50.2 14.8 49.0 15.0 47.8 14.6 46.6 14.4 45.4 14.5 44.2 14.5 43.0 14.4 41.8 14.3 40.6 14.1 39.4 14.0 38.2 13.2 37.0 12.3 35.8 12.0 34.6 12.0 33.4 12.0 32.2 12.0 31.0 12.1 29.8 12.2 28.6 12.5 27.4 12.8 26.2 12.9 25.0 13.0 23.8 13.2 22.6 13.3 21.4 13.1 20.2 12.8 19.0 12.5 17.8 12.7 16.6 13.7 15.4 14.4 14.2 15.9 13.0 16.7 11.8 18.0 10.6 19.0 9.4 19.8 8.2 21.1 7.0 21.8 5.8 22.6 4.6 17.2 3.4 12.2 2.2 12.1 1.0 12.1Z" fill="#8cc8f8" stroke="#2e5578" stroke-width="0.7"/><path d="M1.0 35.5 2.2 35.4 3.4 35.3 4.6 30.2 5.8 25.7 7.0 25.9 8.2 26.7 9.4 28.1 10.6 28.6 11.8 29.1 13.0 30.1 14.2 31.4 15.4 32.4 16.6 33.6 17.8 34.8 19.0 35.1 20.2 34.9 21.4 34.8 22.6 34.6 23.8 34.7 25.0 34.6 26.2 34.6 27.4 34.7 28.6 35.1 29.8 35.4 31.0 35.5 32.2 35.5 33.4 35.5 34.6 35.5 35.8 35.5 37.0 35.1 38.2 34.4 39.4 33.4 40.6 33.3 41.8 32.9 43.0 32.9 44.2 32.8 45.4 33.1 46.6 32.9 47.8 32.6 49.0 32.3 50.2 32.1 51.4 32.2 52.6 31.9 53.8 32.0 55.0 32.1 56.2 32.3 57.4 31.9 58.6 31.8 59.8 31.5 61.0 31.1 62.2 30.8 63.4 30.9 64.6 30.6 65.8 30.4 67.0 30.3 68.2 29.9 69.4 30.3 70.6 30.2 71.8 29.7 73.0 29.6 74.2 29.4 75.4 29.5 76.6 28.9 77.8 28.9 79.0 28.9 80.2 29.3 81.4 29.3 82.6 29.7 83.8 28.9 85.0 28.5 86.2 28.7 87.4 29.0 88.6 30.8 89.8 32.6 L89.8 39.8 88.6 42.1 87.4 43.7 86.2 44.1 85.0 44.6 83.8 44.2 82.6 43.7 81.4 43.9 80.2 43.1 79.0 43.3 77.8 42.2 76.6 41.7 75.4 41.5 74.2 41.3 73.0 42.5 71.8 41.8 70.6 41.7 69.4 41.1 68.2 40.7 67.0 40.3 65.8 40.8 64.6 40.7 63.4 40.0 62.2 40.2 61.0 40.7 59.8 39.9 58.6 39.8 57.4 39.5 56.2 39.6 55.0 38.9 53.8 39.6 52.6 39.5 51.4 39.5 50.2 39.0 49.0 39.2 47.8 38.8 46.6 38.6 45.4 38.7 44.2 38.7 43.0 38.6 41.8 38.6 40.6 38.3 39.4 38.2 38.2 37.4 37.0 36.5 35.8 36.3 34.6 36.3 33.4 36.3 32.2 36.3 31.0 36.3 29.8 36.4 28.6 36.7 27.4 37.0 26.2 37.1 25.0 37.2 23.8 37.5 22.6 37.6 21.4 37.4 20.2 37.0 19.0 36.7 17.8 36.9 16.6 38.0 15.4 38.7 14.2 40.1 13.0 41.0 11.8 42.3 10.6 43.2 9.4 44.0 8.2 45.3 7.0 46.0 5.8 46.8 4.6 41.4 3.4 36.4 2.2 36.4 1.0 36.4Z" fill="#8cc8f8" stroke="#2e5578" stroke-width="0.7"/></svg>
<div style="left:827.5px;top:369.5px;width:118.5px;height:47.5px;background:#62bfe8;"></div>
<svg style="left:827.5px;top:369.5px;overflow:hidden;" width="118.5" height="47.5" viewBox="0 0 118.5 47.5"><path d="M1.0 9.4 2.2 7.8 3.4 6.3 4.6 4.2 5.8 4.1 7.0 4.2 8.2 3.3 9.4 4.2 10.6 3.8 11.8 4.2 13.0 3.8 14.2 3.9 15.4 3.5 16.6 4.2 17.8 4.2 19.0 5.0 20.2 4.9 21.4 5.2 22.6 5.5 23.8 5.7 25.0 5.9 26.2 6.0 27.4 6.2 28.6 6.3 29.8 7.2 31.0 7.5 32.2 8.7 33.4 9.1 34.6 10.0 35.8 10.6 37.0 10.8 38.2 10.9 39.4 11.0 40.6 11.1 41.8 11.0 43.0 10.7 44.2 10.4 45.4 10.2 46.6 10.0 47.8 10.0 49.0 9.9 50.2 9.8 51.4 9.5 52.6 9.3 53.8 9.1 55.0 8.7 56.2 8.5 57.4 8.4 58.6 8.6 59.8 9.0 61.0 9.2 62.2 8.8 63.4 8.9 64.6 8.8 65.8 8.8 67.0 8.3 68.2 8.2 69.4 7.8 70.6 7.9 71.8 7.6 73.0 7.5 74.2 7.6 75.4 7.3 76.6 7.3 77.8 7.5 79.0 7.9 80.2 8.1 81.4 7.8 82.6 7.9 83.8 7.8 85.0 7.1 86.2 7.3 87.4 7.9 88.6 7.7 89.8 7.8 91.0 8.1 92.2 8.3 93.4 8.7 94.6 8.8 95.8 9.2 97.0 9.2 98.2 9.5 99.4 9.5 100.6 9.9 101.8 9.9 103.0 10.3 104.2 10.5 105.4 10.8 106.6 11.1 107.8 11.2 109.0 11.2 110.2 11.2 111.4 11.2 112.6 11.2 113.8 11.2 115.0 11.2 116.2 11.2 117.4 11.2 L117.4 12.0 116.2 12.0 115.0 12.0 113.8 12.0 112.6 12.0 111.4 12.1 110.2 12.1 109.0 12.1 107.8 12.1 106.6 12.1 105.4 12.3 104.2 12.6 103.0 13.0 101.8 13.3 100.6 13.6 99.4 14.0 98.2 13.9 97.0 13.7 95.8 14.1 94.6 14.5 93.4 14.3 92.2 14.5 91.0 14.9 89.8 15.5 88.6 15.4 87.4 15.6 86.2 15.6 85.0 15.7 83.8 16.2 82.6 16.3 81.4 16.1 80.2 16.0 79.0 15.7 77.8 15.6 76.6 14.8 75.4 14.9 74.2 15.3 73.0 15.9 71.8 15.6 70.6 15.7 69.4 15.7 68.2 15.9 67.0 15.3 65.8 15.1 64.6 15.1 63.4 14.8 62.2 14.4 61.0 14.2 59.8 14.6 58.6 14.6 57.4 14.2 56.2 14.3 55.0 14.1 53.8 14.3 52.6 14.3 51.4 14.2 50.2 13.8 49.0 13.7 47.8 13.4 46.6 13.1 45.4 12.9 44.2 12.8 43.0 12.6 41.8 12.3 40.6 12.1 39.4 12.1 38.2 12.2 37.0 12.4 35.8 12.5 34.6 13.0 33.4 13.8 32.2 14.6 31.0 15.6 29.8 16.2 28.6 17.7 27.4 17.8 26.2 17.8 25.0 17.8 23.8 19.1 22.6 18.8 21.4 19.0 20.2 19.0 19.0 18.6 17.8 18.6 16.6 19.1 15.4 18.5 14.2 18.5 13.0 18.0 11.8 18.7 10.6 19.2 9.4 19.3 8.2 19.5 7.0 19.3 5.8 18.7 4.6 17.6 3.4 17.7 2.2 16.5 1.0 14.2Z" fill="#74d0f7"/><path d="M1.0 33.6 2.2 32.0 3.4 30.5 4.6 28.5 5.8 28.3 7.0 28.5 8.2 27.5 9.4 28.4 10.6 28.0 11.8 28.4 13.0 28.0 14.2 28.1 15.4 27.8 16.6 28.4 17.8 28.4 19.0 29.2 20.2 29.2 21.4 29.5 22.6 29.7 23.8 29.9 25.0 30.1 26.2 30.3 27.4 30.4 28.6 30.5 29.8 31.4 31.0 31.7 32.2 32.9 33.4 33.3 34.6 34.2 35.8 34.8 37.0 35.0 38.2 35.1 39.4 35.2 40.6 35.4 41.8 35.2 43.0 35.0 44.2 34.7 45.4 34.4 46.6 34.2 47.8 34.2 49.0 34.1 50.2 34.0 51.4 33.8 52.6 33.5 53.8 33.4 55.0 32.9 56.2 32.7 57.4 32.6 58.6 32.9 59.8 33.2 61.0 33.4 62.2 33.0 63.4 33.1 64.6 33.0 65.8 33.0 67.0 32.5 68.2 32.4 69.4 32.0 70.6 32.1 71.8 31.8 73.0 31.7 74.2 31.8 75.4 31.5 76.6 31.6 77.8 31.7 79.0 32.2 80.2 32.3 81.4 32.1 82.6 32.1 83.8 32.1 85.0 31.3 86.2 31.6 87.4 32.1 88.6 31.9 89.8 32.1 91.0 32.4 92.2 32.5 93.4 32.9 94.6 33.0 95.8 33.4 97.0 33.5 98.2 33.7 99.4 33.8 100.6 34.1 101.8 34.2 103.0 34.6 104.2 34.7 105.4 35.0 106.6 35.3 107.8 35.4 109.0 35.4 110.2 35.5 111.4 35.5 112.6 35.5 113.8 35.5 115.0 35.5 116.2 35.5 117.4 35.5 L117.4 36.3 116.2 36.3 115.0 36.3 113.8 36.3 112.6 36.3 111.4 36.3 110.2 36.4 109.0 36.3 107.8 36.4 106.6 36.3 105.4 36.6 104.2 36.8 103.0 37.2 101.8 37.6 100.6 37.8 99.4 38.2 98.2 38.1 97.0 37.9 95.8 38.4 94.6 38.7 93.4 38.5 92.2 38.7 91.0 39.1 89.8 39.7 88.6 39.7 87.4 39.8 86.2 39.9 85.0 39.9 83.8 40.4 82.6 40.5 81.4 40.3 80.2 40.2 79.0 39.9 77.8 39.8 76.6 39.0 75.4 39.1 74.2 39.5 73.0 40.1 71.8 39.8 70.6 39.9 69.4 39.9 68.2 40.1 67.0 39.5 65.8 39.3 64.6 39.3 63.4 39.0 62.2 38.7 61.0 38.4 59.8 38.8 58.6 38.8 57.4 38.4 56.2 38.5 55.0 38.3 53.8 38.5 52.6 38.5 51.4 38.4 50.2 38.1 49.0 37.9 47.8 37.6 46.6 37.3 45.4 37.2 44.2 37.0 43.0 36.8 41.8 36.5 40.6 36.3 39.4 36.4 38.2 36.5 37.0 36.6 35.8 36.7 34.6 37.2 33.4 38.0 32.2 38.8 31.0 39.8 29.8 40.5 28.6 41.9 27.4 42.0 26.2 42.0 25.0 42.0 23.8 43.3 22.6 43.0 21.4 43.2 20.2 43.2 19.0 42.8 17.8 42.9 16.6 43.3 15.4 42.7 14.2 42.7 13.0 42.2 11.8 42.9 10.6 43.4 9.4 43.6 8.2 43.7 7.0 43.5 5.8 43.0 4.6 41.8 3.4 41.9 2.2 40.7 1.0 38.4Z" fill="#74d0f7"/></svg>
<div style="left:946px;top:369.5px;width:156.5px;height:47.5px;background:#73a5d3;"></div>
<svg style="left:946px;top:369.5px;overflow:hidden;" width="156.5" height="47.5" viewBox="0 0 156.5 47.5"><path d="M1.0 11.2 2.2 11.2 3.4 11.2 4.6 11.2 5.8 11.2 7.0 10.7 8.2 9.5 9.4 8.9 10.6 8.7 11.8 8.6 13.0 8.6 14.2 8.6 15.4 8.8 16.6 9.0 17.8 8.8 19.0 8.5 20.2 8.5 21.4 8.7 22.6 8.8 23.8 9.2 25.0 9.3 26.2 9.3 27.4 9.2 28.6 9.1 29.8 8.9 31.0 8.9 32.2 8.9 33.4 9.1 34.6 9.1 35.8 8.8 37.0 8.7 38.2 8.6 39.4 8.5 40.6 8.5 41.8 8.3 43.0 8.1 44.2 8.1 45.4 8.3 46.6 6.2 47.8 4.5 49.0 3.3 50.2 4.3 51.4 4.7 52.6 4.1 53.8 3.9 55.0 3.3 56.2 2.6 57.4 3.2 58.6 3.3 59.8 2.8 61.0 2.6 62.2 3.1 63.4 5.5 64.6 8.1 65.8 9.8 67.0 10.9 68.2 9.9 69.4 8.8 70.6 7.9 71.8 7.2 73.0 7.5 74.2 6.8 75.4 6.6 76.6 7.1 77.8 7.1 79.0 6.8 80.2 6.3 81.4 6.3 82.6 6.7 83.8 6.7 85.0 6.6 86.2 6.0 87.4 5.9 88.6 6.4 89.8 6.5 91.0 6.5 92.2 7.9 93.4 9.4 94.6 10.4 95.8 11.0 97.0 10.6 98.2 10.2 99.4 9.9 100.6 9.7 101.8 9.6 103.0 9.4 104.2 9.4 105.4 9.4 106.6 9.1 107.8 9.1 109.0 9.1 110.2 8.9 111.4 8.7 112.6 8.6 113.8 8.2 115.0 7.9 116.2 7.8 117.4 7.9 118.6 7.8 119.8 8.1 121.0 7.9 122.2 7.7 123.4 7.6 124.6 7.3 125.8 7.2 127.0 7.1 128.2 7.2 129.4 6.9 130.6 6.2 131.8 6.4 133.0 6.3 134.2 5.9 135.4 5.6 136.6 5.9 137.8 5.5 139.0 5.3 140.2 4.9 141.4 3.8 142.6 3.3 143.8 2.4 145.0 1.9 146.2 2.6 147.4 3.9 148.6 3.1 149.8 3.8 151.0 4.3 152.2 6.6 153.4 8.3 154.6 9.6 L154.6 13.5 153.4 14.3 152.2 16.5 151.0 19.6 149.8 19.8 148.6 20.2 147.4 20.4 146.2 20.2 145.0 20.0 143.8 18.8 142.6 18.2 141.4 18.2 140.2 18.1 139.0 17.2 137.8 16.9 136.6 17.1 135.4 17.2 134.2 17.5 133.0 17.3 131.8 17.8 130.6 17.5 129.4 17.0 128.2 16.6 127.0 16.5 125.8 16.0 124.6 15.8 123.4 15.3 122.2 15.4 121.0 15.1 119.8 15.0 118.6 14.6 117.4 14.8 116.2 15.0 115.0 14.8 113.8 14.7 112.6 14.8 111.4 14.5 110.2 14.6 109.0 14.7 107.8 14.4 106.6 14.3 105.4 14.1 104.2 13.8 103.0 13.6 101.8 13.3 100.6 13.2 99.4 13.0 98.2 13.0 97.0 12.7 95.8 12.3 94.6 13.0 93.4 14.3 92.2 15.3 91.0 16.4 89.8 17.0 88.6 17.0 87.4 16.3 86.2 16.3 85.0 16.1 83.8 16.3 82.6 16.6 81.4 16.7 80.2 16.7 79.0 16.4 77.8 16.7 76.6 16.9 75.4 17.0 74.2 17.0 73.0 16.7 71.8 16.6 70.6 15.5 69.4 15.2 68.2 13.8 67.0 12.6 65.8 14.1 64.6 15.4 63.4 17.9 62.2 20.3 61.0 20.2 59.8 20.5 58.6 20.9 57.4 20.5 56.2 20.6 55.0 21.0 53.8 21.1 52.6 20.1 51.4 19.6 50.2 19.5 49.0 19.2 47.8 18.8 46.6 17.0 45.4 14.7 44.2 14.9 43.0 14.7 41.8 14.9 40.6 14.5 39.4 14.5 38.2 14.3 37.0 14.3 35.8 14.5 34.6 14.2 33.4 14.0 32.2 14.0 31.0 13.8 29.8 14.0 28.6 14.0 27.4 14.3 26.2 14.3 25.0 14.4 23.8 14.6 22.6 14.8 21.4 14.4 20.2 14.6 19.0 14.9 17.8 14.8 16.6 14.8 15.4 14.7 14.2 14.8 13.0 14.6 11.8 14.3 10.6 14.1 9.4 14.3 8.2 13.8 7.0 12.6 5.8 12.0 4.6 12.0 3.4 12.0 2.2 12.0 1.0 12.0Z" fill="#8cc8f8" stroke="#2e5578" stroke-width="0.7"/><path d="M1.0 35.5 2.2 35.5 3.4 35.5 4.6 35.5 5.8 35.5 7.0 34.9 8.2 33.7 9.4 33.1 10.6 32.9 11.8 32.8 13.0 32.8 14.2 32.8 15.4 33.0 16.6 33.2 17.8 33.0 19.0 32.7 20.2 32.8 21.4 32.9 22.6 33.0 23.8 33.4 25.0 33.5 26.2 33.5 27.4 33.4 28.6 33.3 29.8 33.1 31.0 33.1 32.2 33.1 33.4 33.3 34.6 33.3 35.8 33.1 37.0 32.9 38.2 32.9 39.4 32.7 40.6 32.7 41.8 32.5 43.0 32.4 44.2 32.4 45.4 32.5 46.6 30.5 47.8 28.7 49.0 27.5 50.2 28.5 51.4 28.9 52.6 28.3 53.8 28.1 55.0 27.5 56.2 26.8 57.4 27.5 58.6 27.5 59.8 27.1 61.0 26.8 62.2 27.3 63.4 29.7 64.6 32.4 65.8 34.0 67.0 35.1 68.2 34.2 69.4 33.0 70.6 32.1 71.8 31.5 73.0 31.7 74.2 31.0 75.4 30.8 76.6 31.3 77.8 31.4 79.0 31.0 80.2 30.5 81.4 30.6 82.6 30.9 83.8 30.9 85.0 30.8 86.2 30.2 87.4 30.1 88.6 30.6 89.8 30.7 91.0 30.8 92.2 32.2 93.4 33.6 94.6 34.6 95.8 35.3 97.0 34.8 98.2 34.5 99.4 34.2 100.6 34.0 101.8 33.8 103.0 33.6 104.2 33.6 105.4 33.6 106.6 33.3 107.8 33.3 109.0 33.3 110.2 33.2 111.4 32.9 112.6 32.8 113.8 32.5 115.0 32.1 116.2 32.0 117.4 32.1 118.6 32.0 119.8 32.3 121.0 32.1 122.2 31.9 123.4 31.8 124.6 31.5 125.8 31.4 127.0 31.3 128.2 31.4 129.4 31.2 130.6 30.4 131.8 30.7 133.0 30.5 134.2 30.2 135.4 29.8 136.6 30.1 137.8 29.7 139.0 29.5 140.2 29.1 141.4 28.0 142.6 27.5 143.8 26.7 145.0 26.1 146.2 26.9 147.4 28.1 148.6 27.3 149.8 28.0 151.0 28.5 152.2 30.8 153.4 32.5 154.6 33.8 L154.6 37.7 153.4 38.5 152.2 40.7 151.0 43.8 149.8 44.0 148.6 44.4 147.4 44.6 146.2 44.4 145.0 44.3 143.8 43.0 142.6 42.4 141.4 42.5 140.2 42.3 139.0 41.5 137.8 41.1 136.6 41.3 135.4 41.5 134.2 41.7 133.0 41.5 131.8 42.0 130.6 41.7 129.4 41.2 128.2 40.9 127.0 40.8 125.8 40.2 124.6 40.1 123.4 39.6 122.2 39.6 121.0 39.4 119.8 39.2 118.6 38.9 117.4 39.0 116.2 39.2 115.0 39.0 113.8 38.9 112.6 39.0 111.4 38.7 110.2 38.8 109.0 39.0 107.8 38.6 106.6 38.5 105.4 38.4 104.2 38.0 103.0 37.8 101.8 37.6 100.6 37.4 99.4 37.2 98.2 37.3 97.0 37.0 95.8 36.5 94.6 37.3 93.4 38.5 92.2 39.5 91.0 40.6 89.8 41.2 88.6 41.2 87.4 40.5 86.2 40.5 85.0 40.3 83.8 40.5 82.6 40.9 81.4 41.0 80.2 40.9 79.0 40.7 77.8 40.9 76.6 41.2 75.4 41.3 74.2 41.2 73.0 41.0 71.8 40.8 70.6 39.7 69.4 39.4 68.2 38.0 67.0 36.8 65.8 38.3 64.6 39.7 63.4 42.1 62.2 44.5 61.0 44.4 59.8 44.7 58.6 45.2 57.4 44.8 56.2 44.9 55.0 45.3 53.8 45.3 52.6 44.3 51.4 43.8 50.2 43.8 49.0 43.5 47.8 43.0 46.6 41.2 45.4 38.9 44.2 39.1 43.0 38.9 41.8 39.1 40.6 38.7 39.4 38.7 38.2 38.6 37.0 38.5 35.8 38.7 34.6 38.4 33.4 38.2 32.2 38.3 31.0 38.1 29.8 38.2 28.6 38.2 27.4 38.6 26.2 38.5 25.0 38.6 23.8 38.8 22.6 39.0 21.4 38.7 20.2 38.9 19.0 39.1 17.8 39.0 16.6 39.0 15.4 38.9 14.2 39.1 13.0 38.8 11.8 38.6 10.6 38.3 9.4 38.5 8.2 38.0 7.0 36.9 5.8 36.3 4.6 36.3 3.4 36.3 2.2 36.3 1.0 36.3Z" fill="#8cc8f8" stroke="#2e5578" stroke-width="0.7"/></svg>
<div style="left:1102.5px;top:369.5px;width:91.5px;height:47.5px;background:#62bfe8;"></div>
<svg style="left:1102.5px;top:369.5px;overflow:hidden;" width="91.5" height="47.5" viewBox="0 0 91.5 47.5"><path d="M1.0 11.2 2.2 11.1 3.4 10.5 4.6 9.7 5.8 9.2 7.0 9.4 8.2 9.7 9.4 10.2 10.6 10.7 11.8 11.0 13.0 11.2 14.2 11.2 15.4 11.2 16.6 11.2 17.8 11.2 19.0 11.2 20.2 11.2 21.4 11.2 22.6 11.2 23.8 11.2 25.0 11.2 26.2 11.2 27.4 11.2 28.6 10.7 29.8 10.1 31.0 9.7 32.2 9.4 33.4 9.3 34.6 9.4 35.8 9.1 37.0 9.2 38.2 9.0 39.4 8.8 40.6 9.0 41.8 9.0 43.0 8.9 44.2 8.4 45.4 8.3 46.6 8.3 47.8 8.3 49.0 7.8 50.2 7.9 51.4 7.9 52.6 7.9 53.8 7.8 55.0 7.3 56.2 7.3 57.4 7.7 58.6 7.1 59.8 6.6 61.0 6.2 62.2 6.7 63.4 6.7 64.6 6.3 65.8 6.2 67.0 5.8 68.2 5.6 69.4 5.6 70.6 4.9 71.8 4.6 73.0 4.5 74.2 4.1 75.4 3.7 76.6 2.7 77.8 2.6 79.0 2.9 80.2 3.8 81.4 4.5 82.6 3.6 83.8 3.6 85.0 3.2 86.2 3.5 87.4 3.2 88.6 5.7 89.8 7.3 L89.8 15.6 88.6 17.0 87.4 18.5 86.2 19.0 85.0 19.0 83.8 19.0 82.6 20.2 81.4 19.8 80.2 19.5 79.0 19.7 77.8 20.2 76.6 20.0 75.4 19.3 74.2 19.9 73.0 19.7 71.8 19.5 70.6 18.6 69.4 17.7 68.2 18.1 67.0 17.8 65.8 17.9 64.6 17.2 63.4 17.3 62.2 16.9 61.0 17.0 59.8 17.2 58.6 16.6 57.4 16.2 56.2 15.9 55.0 15.5 53.8 16.0 52.6 16.0 51.4 16.0 50.2 16.2 49.0 15.7 47.8 15.2 46.6 14.8 45.4 14.3 44.2 14.6 43.0 14.5 41.8 14.5 40.6 14.1 39.4 14.1 38.2 14.2 37.0 14.4 35.8 14.1 34.6 13.9 33.4 13.7 32.2 14.0 31.0 14.1 29.8 13.5 28.6 12.6 27.4 12.0 26.2 12.0 25.0 12.0 23.8 12.0 22.6 12.0 21.4 12.0 20.2 12.0 19.0 12.0 17.8 12.0 16.6 12.0 15.4 12.0 14.2 12.0 13.0 12.2 11.8 12.5 10.6 13.0 9.4 13.5 8.2 14.1 7.0 14.4 5.8 14.2 4.6 13.4 3.4 12.9 2.2 12.2 1.0 12.0Z" fill="#74d0f7"/><path d="M1.0 35.5 2.2 35.3 3.4 34.7 4.6 33.9 5.8 33.4 7.0 33.6 8.2 33.9 9.4 34.4 10.6 34.9 11.8 35.2 13.0 35.4 14.2 35.5 15.4 35.5 16.6 35.5 17.8 35.5 19.0 35.5 20.2 35.5 21.4 35.5 22.6 35.5 23.8 35.5 25.0 35.5 26.2 35.5 27.4 35.5 28.6 34.9 29.8 34.3 31.0 33.9 32.2 33.7 33.4 33.5 34.6 33.6 35.8 33.3 37.0 33.4 38.2 33.2 39.4 33.0 40.6 33.2 41.8 33.2 43.0 33.1 44.2 32.6 45.4 32.5 46.6 32.6 47.8 32.5 49.0 32.0 50.2 32.1 51.4 32.1 52.6 32.1 53.8 32.1 55.0 31.5 56.2 31.6 57.4 31.9 58.6 31.3 59.8 30.8 61.0 30.4 62.2 30.9 63.4 30.9 64.6 30.5 65.8 30.5 67.0 30.0 68.2 29.8 69.4 29.8 70.6 29.2 71.8 28.8 73.0 28.7 74.2 28.3 75.4 28.0 76.6 26.9 77.8 26.9 79.0 27.1 80.2 28.1 81.4 28.7 82.6 27.8 83.8 27.9 85.0 27.4 86.2 27.7 87.4 27.4 88.6 29.9 89.8 31.5 L89.8 39.9 88.6 41.2 87.4 42.7 86.2 43.3 85.0 43.2 83.8 43.3 82.6 44.4 81.4 44.1 80.2 43.7 79.0 44.0 77.8 44.4 76.6 44.2 75.4 43.6 74.2 44.1 73.0 43.9 71.8 43.7 70.6 42.8 69.4 41.9 68.2 42.3 67.0 42.1 65.8 42.1 64.6 41.5 63.4 41.5 62.2 41.1 61.0 41.2 59.8 41.4 58.6 40.8 57.4 40.4 56.2 40.1 55.0 39.7 53.8 40.2 52.6 40.2 51.4 40.3 50.2 40.5 49.0 39.9 47.8 39.4 46.6 39.0 45.4 38.6 44.2 38.8 43.0 38.7 41.8 38.7 40.6 38.3 39.4 38.3 38.2 38.4 37.0 38.6 35.8 38.3 34.6 38.2 33.4 37.9 32.2 38.2 31.0 38.3 29.8 37.7 28.6 36.9 27.4 36.3 26.2 36.3 25.0 36.3 23.8 36.3 22.6 36.3 21.4 36.3 20.2 36.3 19.0 36.3 17.8 36.3 16.6 36.3 15.4 36.3 14.2 36.3 13.0 36.4 11.8 36.7 10.6 37.2 9.4 37.7 8.2 38.3 7.0 38.6 5.8 38.4 4.6 37.7 3.4 37.1 2.2 36.4 1.0 36.3Z" fill="#74d0f7"/></svg>
<div style="left:827.5px;top:369px;width:366.5px;height:1px;background:#8fb4d6;"></div>
<div style="left:945.5px;top:321.5px;width:1px;height:95.5px;background:#8fb4d6;"></div>
<div style="left:1102px;top:321.5px;width:1px;height:95.5px;background:#8fb4d6;"></div>
<div style="left:1370.1px;top:146px;width:1.8px;height:175px;background:#0c1118;"></div>
<svg style="left:1364px;top:139px;" width="14" height="16" viewBox="0 0 14 16"><path d="M1 0h12v6.5L7 15.5 1 6.5z" fill="#11161d"/><path d="M4.2 5.2h2v3.6zM7.8 5.2h2l-2 3.6z" fill="#f2f4f6"/></svg>
<div style="left:1629.1px;top:146px;width:1.8px;height:175px;background:#0c1118;"></div>
<svg style="left:1623px;top:139px;" width="14" height="16" viewBox="0 0 14 16"><path d="M1 0h12v6.5L7 15.5 1 6.5z" fill="#11161d"/><path d="M4.2 5.2h2v3.6zM7.8 5.2h2l-2 3.6z" fill="#f2f4f6"/></svg>
<div style="left:1500.5px;top:140px;width:1.1px;height:181px;background:repeating-linear-gradient(#14202c 0,#14202c 4.2px,transparent 4.2px,transparent 7.2px);"></div>
<div style="left:1757px;top:140px;width:1.1px;height:181px;background:repeating-linear-gradient(#14202c 0,#14202c 4.2px,transparent 4.2px,transparent 7.2px);"></div>
<div style="left:1884px;top:140px;width:1.1px;height:181px;background:repeating-linear-gradient(#14202c 0,#14202c 4.2px,transparent 4.2px,transparent 7.2px);"></div>
<svg style="left:1606px;top:188px;" width="48" height="21" viewBox="0 0 48 21"><path d="M1 10.5L12 1v19zM47 10.5L36 1v19z" fill="#15181c" stroke="#e6e8ea" stroke-width="1.2"/><path d="M11 10.5h26" stroke="#e6e8ea" stroke-width="5"/><path d="M10 10.5h28" stroke="#15181c" stroke-width="2.4"/></svg>
<svg style="left:1619.5px;top:215.5px;" width="21" height="21" viewBox="0 0 21 21"><circle cx="10.5" cy="10.5" r="9.6" fill="#e9edf2" stroke="#15181c" stroke-width="1.3"/><path d="M10.5 5v6l2 3.5" fill="none" stroke="#15181c" stroke-width="1.8"/></svg>
<div style="left:215px;top:417px;width:1685px;height:176px;background:#9685d8;"></div>
<div style="left:215px;top:417px;width:1685px;height:1.2px;background:#b6a9ea;"></div>
<div style="left:215px;top:580px;width:1685px;height:13px;background:#8472c6;"></div>
<div style="left:774px;top:417px;width:1.2px;height:176px;background:#c9c0f0;"></div>
<div style="left:1334px;top:417px;width:1.2px;height:176px;background:#c9c0f0;"></div>
<svg style="left:215px;top:417px;" width="1685" height="176" viewBox="0 0 1685 176"><g fill="#3b3562"><rect x="0.3" y="60.0" width="16.3" height="4"/><rect x="35.2" y="60.0" width="16.3" height="4"/><rect x="70.2" y="60.0" width="16.3" height="4"/><rect x="140.1" y="60.0" width="16.3" height="4"/><rect x="175.0" y="60.0" width="16.3" height="4"/><rect x="209.9" y="60.0" width="16.3" height="4"/><rect x="279.8" y="60.0" width="16.3" height="4"/><rect x="314.8" y="60.0" width="16.3" height="4"/><rect x="349.7" y="60.0" width="16.3" height="4"/><rect x="419.6" y="60.0" width="16.3" height="4"/><rect x="454.5" y="60.0" width="16.3" height="4"/><rect x="489.5" y="60.0" width="16.3" height="4"/><rect x="52.7" y="28.6" width="16.3" height="4"/><rect x="192.5" y="28.6" width="16.3" height="4"/><rect x="227.4" y="28.6" width="16.3" height="4"/><rect x="332.2" y="28.6" width="16.3" height="4"/><rect x="472.0" y="28.6" width="16.3" height="4"/><rect x="506.9" y="28.6" width="16.3" height="4"/><rect x="17.8" y="91.3" width="16.3" height="4"/><rect x="157.5" y="91.3" width="16.3" height="4"/><rect x="297.3" y="91.3" width="16.3" height="4"/><rect x="437.0" y="91.3" width="16.3" height="4"/><rect x="87.6" y="108.9" width="16.3" height="4"/><rect x="122.6" y="108.9" width="16.3" height="4"/><rect x="367.2" y="108.9" width="16.3" height="4"/><rect x="402.1" y="108.9" width="16.3" height="4"/><rect x="105.1" y="140.7" width="16.3" height="4"/><rect x="384.6" y="140.7" width="16.3" height="4"/><rect x="244.9" y="6.2" width="33.4" height="4"/><rect x="524.4" y="6.2" width="33.4" height="4"/><rect x="568.4" y="28.6" width="7.9" height="4"/><rect x="612.1" y="28.6" width="16.7" height="4"/><rect x="585.9" y="41.6" width="7.9" height="4"/><rect x="559.7" y="60.0" width="7.9" height="4"/><rect x="594.7" y="60.0" width="7.9" height="4"/><rect x="638.4" y="60.0" width="7.9" height="4"/><rect x="682.1" y="60.0" width="16.7" height="4"/><rect x="655.8" y="73.4" width="7.9" height="4"/><rect x="577.2" y="91.3" width="7.9" height="4"/><rect x="603.4" y="91.3" width="7.9" height="4"/><rect x="629.6" y="91.3" width="7.9" height="4"/><rect x="664.6" y="95.8" width="7.9" height="4"/><rect x="647.1" y="122.7" width="7.9" height="4"/><rect x="673.3" y="122.7" width="7.9" height="4"/><rect x="708.3" y="28.6" width="7.9" height="4"/><rect x="752.0" y="28.6" width="16.7" height="4"/><rect x="725.8" y="41.6" width="7.9" height="4"/><rect x="699.5" y="60.0" width="7.9" height="4"/><rect x="734.5" y="60.0" width="7.9" height="4"/><rect x="778.2" y="60.0" width="7.9" height="4"/><rect x="821.9" y="60.0" width="16.7" height="4"/><rect x="795.7" y="73.4" width="7.9" height="4"/><rect x="717.0" y="91.3" width="7.9" height="4"/><rect x="743.2" y="91.3" width="7.9" height="4"/><rect x="769.5" y="91.3" width="7.9" height="4"/><rect x="804.4" y="95.8" width="7.9" height="4"/><rect x="786.9" y="122.7" width="7.9" height="4"/><rect x="813.2" y="122.7" width="7.9" height="4"/><rect x="848.1" y="28.6" width="7.9" height="4"/><rect x="891.8" y="28.6" width="16.7" height="4"/><rect x="865.6" y="41.6" width="7.9" height="4"/><rect x="839.4" y="60.0" width="7.9" height="4"/><rect x="874.3" y="60.0" width="7.9" height="4"/><rect x="918.0" y="60.0" width="7.9" height="4"/><rect x="961.7" y="60.0" width="16.7" height="4"/><rect x="935.5" y="73.4" width="7.9" height="4"/><rect x="856.9" y="91.3" width="7.9" height="4"/><rect x="883.1" y="91.3" width="7.9" height="4"/><rect x="909.3" y="91.3" width="7.9" height="4"/><rect x="944.3" y="95.8" width="7.9" height="4"/><rect x="926.8" y="122.7" width="7.9" height="4"/><rect x="953.0" y="122.7" width="7.9" height="4"/><rect x="988.0" y="28.6" width="7.9" height="4"/><rect x="1031.7" y="28.6" width="16.7" height="4"/><rect x="1005.4" y="41.6" width="7.9" height="4"/><rect x="979.2" y="60.0" width="7.9" height="4"/><rect x="1014.2" y="60.0" width="7.9" height="4"/><rect x="1057.9" y="60.0" width="7.9" height="4"/><rect x="1101.6" y="60.0" width="16.7" height="4"/><rect x="1075.4" y="73.4" width="7.9" height="4"/><rect x="996.7" y="91.3" width="7.9" height="4"/><rect x="1022.9" y="91.3" width="7.9" height="4"/><rect x="1049.1" y="91.3" width="7.9" height="4"/><rect x="1084.1" y="95.8" width="7.9" height="4"/><rect x="1066.6" y="122.7" width="7.9" height="4"/><rect x="1092.8" y="122.7" width="7.9" height="4"/><rect x="1128.6" y="28.6" width="7.9" height="4"/><rect x="1172.3" y="28.6" width="16.7" height="4"/><rect x="1146.1" y="41.6" width="7.9" height="4"/><rect x="1119.9" y="60.0" width="7.9" height="4"/><rect x="1154.9" y="60.0" width="7.9" height="4"/><rect x="1198.6" y="60.0" width="7.9" height="4"/><rect x="1242.3" y="60.0" width="16.7" height="4"/><rect x="1216.0" y="73.4" width="7.9" height="4"/><rect x="1137.4" y="91.3" width="7.9" height="4"/><rect x="1163.6" y="91.3" width="7.9" height="4"/><rect x="1189.8" y="91.3" width="7.9" height="4"/><rect x="1224.8" y="95.8" width="7.9" height="4"/><rect x="1207.3" y="122.7" width="7.9" height="4"/><rect x="1233.5" y="122.7" width="7.9" height="4"/><rect x="1268.5" y="28.6" width="7.9" height="4"/><rect x="1312.2" y="28.6" width="16.7" height="4"/><rect x="1286.0" y="41.6" width="7.9" height="4"/><rect x="1259.7" y="60.0" width="7.9" height="4"/><rect x="1294.7" y="60.0" width="7.9" height="4"/><rect x="1338.4" y="60.0" width="7.9" height="4"/><rect x="1382.1" y="60.0" width="16.7" height="4"/><rect x="1355.9" y="73.4" width="7.9" height="4"/><rect x="1277.2" y="91.3" width="7.9" height="4"/><rect x="1303.4" y="91.3" width="7.9" height="4"/><rect x="1329.7" y="91.3" width="7.9" height="4"/><rect x="1364.6" y="95.8" width="7.9" height="4"/><rect x="1347.1" y="122.7" width="7.9" height="4"/><rect x="1373.4" y="122.7" width="7.9" height="4"/><rect x="1408.3" y="28.6" width="7.9" height="4"/><rect x="1452.0" y="28.6" width="16.7" height="4"/><rect x="1425.8" y="41.6" width="7.9" height="4"/><rect x="1399.6" y="60.0" width="7.9" height="4"/><rect x="1434.5" y="60.0" width="7.9" height="4"/><rect x="1478.2" y="60.0" width="7.9" height="4"/><rect x="1521.9" y="60.0" width="16.7" height="4"/><rect x="1495.7" y="73.4" width="7.9" height="4"/><rect x="1417.1" y="91.3" width="7.9" height="4"/><rect x="1443.3" y="91.3" width="7.9" height="4"/><rect x="1469.5" y="91.3" width="7.9" height="4"/><rect x="1504.5" y="95.8" width="7.9" height="4"/><rect x="1487.0" y="122.7" width="7.9" height="4"/><rect x="1513.2" y="122.7" width="7.9" height="4"/><rect x="1548.2" y="28.6" width="7.9" height="4"/><rect x="1591.9" y="28.6" width="16.7" height="4"/><rect x="1565.6" y="41.6" width="7.9" height="4"/><rect x="1539.4" y="60.0" width="7.9" height="4"/><rect x="1574.4" y="60.0" width="7.9" height="4"/><rect x="1618.1" y="60.0" width="7.9" height="4"/><rect x="1661.8" y="60.0" width="16.7" height="4"/><rect x="1635.6" y="73.4" width="7.9" height="4"/><rect x="1556.9" y="91.3" width="7.9" height="4"/><rect x="1583.1" y="91.3" width="7.9" height="4"/><rect x="1609.3" y="91.3" width="7.9" height="4"/><rect x="1644.3" y="95.8" width="7.9" height="4"/><rect x="1626.8" y="122.7" width="7.9" height="4"/><rect x="1653.0" y="122.7" width="7.9" height="4"/><rect x="1679.3" y="60.0" width="5.7" height="4"/></g></svg>
<div class="t" style="left:219.5px;top:581.5px;font-size:10px;color:#2a2350;letter-spacing:-0.2px;">MIDI Take1&nbsp;&nbsp;&nbsp;0 dB</div>
<div class="t" style="left:779.5px;top:581.5px;font-size:10px;color:#2a2350;letter-spacing:-0.2px;">MIDI Take1&nbsp;&nbsp;&nbsp;0 dB</div>
<div class="t" style="left:1339.5px;top:581.5px;font-size:10px;color:#2a2350;letter-spacing:-0.2px;">MIDI Take1&nbsp;&nbsp;&nbsp;0 dB</div>
<svg style="left:750.5px;top:581px;" width="11" height="11" viewBox="0 0 11 11"><rect x="3" y="4.5" width="7" height="6" fill="#f4f4f8" stroke="#2a2350" stroke-width="0.8"/><path d="M1.2 5.5V3.2a2 2 0 0 1 4 0v1.3" fill="none" stroke="#f4f4f8" stroke-width="1.3"/><rect x="5.8" y="6.5" width="1.5" height="2.2" fill="#2a2350"/></svg>
<svg style="left:1310.5px;top:581px;" width="11" height="11" viewBox="0 0 11 11"><rect x="3" y="4.5" width="7" height="6" fill="#f4f4f8" stroke="#2a2350" stroke-width="0.8"/><path d="M1.2 5.5V3.2a2 2 0 0 1 4 0v1.3" fill="none" stroke="#f4f4f8" stroke-width="1.3"/><rect x="5.8" y="6.5" width="1.5" height="2.2" fill="#2a2350"/></svg>
<svg style="left:1871px;top:581px;" width="11" height="11" viewBox="0 0 11 11"><rect x="3" y="4.5" width="7" height="6" fill="#f4f4f8" stroke="#2a2350" stroke-width="0.8"/><path d="M1.2 5.5V3.2a2 2 0 0 1 4 0v1.3" fill="none" stroke="#f4f4f8" stroke-width="1.3"/><rect x="5.8" y="6.5" width="1.5" height="2.2" fill="#2a2350"/></svg>
<div style="left:1904px;top:211px;width:12px;height:60px;background:#a6aab9;border-radius:1.5px;"></div>
<div style="left:1904px;top:211px;width:12px;height:6px;background:#8e92a0;"></div>
<div style="left:1904px;top:265px;width:12px;height:6px;background:#8e92a0;"></div>
<div style="left:1900px;top:555px;width:20px;height:1px;background:#33363a;"></div>
<div style="left:1900px;top:574px;width:20px;height:1px;background:#33363a;"></div>
<svg style="left:1905px;top:559px;" width="10" height="10" viewBox="0 0 10 10"><path d="M0 5h10M5 0v10" stroke="#cfd1d4" stroke-width="1.5"/></svg>
<svg style="left:1905px;top:577px;" width="10" height="10" viewBox="0 0 10 10"><path d="M0 5h10" stroke="#cfd1d4" stroke-width="1.5"/></svg>
<div style="left:0px;top:596px;width:1920px;height:388px;background:#24282c;"></div>
<div style="left:0px;top:596px;width:343.5px;height:13.5px;background:#30363b;box-shadow:inset 0 -1px 0 #15181b, inset 0 1px 0 #15181b;"></div>
<div style="left:343.5px;top:596px;width:5.5px;height:388px;background:#1a1c1f;"></div>
<svg style="left:2px;top:597.5px;" width="11" height="11" viewBox="0 0 11 11"><path d="M5.5 0.3L7.6 2.8H3.4zM5.5 10.7L7.6 8.2H3.4zM0.3 5.5L2.8 3.4v4.2zM10.7 5.5L8.2 3.4v4.2z" fill="#e4e6e8"/><path d="M5.5 2.5v6M2.5 5.5h6" stroke="#e4e6e8" stroke-width="0.9"/></svg>
<div class="t" style="left:26px;top:598.5px;font-size:11px;color:#9fb6cd;">Plug-ins - Track 11 "Violins"</div>
<div style="left:318px;top:602.5px;width:8px;height:1.8px;background:#e4e6e8;"></div>
<svg style="left:333px;top:598px;" width="8" height="8" viewBox="0 0 8 8"><path d="M0.5 0.5l7 7M7.5 0.5l-7 7" stroke="#e4e6e8" stroke-width="1.3"/></svg>
<div style="left:0px;top:610px;width:343.5px;height:374px;background:#262a2e;"></div>
<svg style="left:49px;top:620px;" width="14" height="13" viewBox="0 0 14 13"><path d="M1 0v13M4.5 0v13M8 0v13M11.5 0v13" stroke="#e8eaec" stroke-width="1.5"/><path d="M1 0v8M4.5 0v8M8 0v8M11.5 0v8" stroke="#e8eaec" stroke-width="2.2"/></svg>
<div class="t b" style="left:87px;top:619.5px;font-size:14px;color:#eef0f2;letter-spacing:-0.5px;transform:scaleX(0.82);transform-origin:0 0;">FX</div>
<div style="left:117px;top:616px;width:143.5px;height:20.5px;background:#1b1e21;"></div>
<div class="t" style="left:119px;top:621.5px;font-size:11px;color:#50565c;">Search</div>
<div style="left:267px;top:618px;width:17.5px;height:16.5px;background:#40454a;"></div>
<svg style="left:270px;top:621px;" width="12" height="11" viewBox="0 0 12 11"><path d="M1 5.5l3.5 3.8L11 1.2" fill="none" stroke="#fff" stroke-width="2.2"/></svg>
<div class="t" style="left:290px;top:621.5px;font-size:11px;color:#a9adb2;">Presets</div>
<div style="left:0px;top:642px;width:33px;height:23.8px;background:#86c5f5;"></div>
<svg style="left:8px;top:647px;" width="18" height="15" viewBox="0 0 18 15"><rect x="1" y="1" width="14.5" height="9.5" fill="none" stroke="#1f4464" stroke-width="1.4"/><path d="M0 13.5h17" stroke="#1f4464" stroke-width="1.6"/><path d="M3.5 6.5l3-3" stroke="#1f4464" stroke-width="1.2"/></svg>
<svg style="left:6px;top:671px;" width="20" height="17" viewBox="0 0 20 17"><circle cx="3.800" cy="5.500" r="2.500" fill="none" stroke="#e0e2e4" stroke-width="1.100"/><circle cx="14.300" cy="6.300" r="3.400" fill="none" stroke="#e0e2e4" stroke-width="1.100"/><circle cx="8.500" cy="2.200" r="1.200" fill="none" stroke="#e0e2e4" stroke-width="0.900"/><circle cx="3.500" cy="11" r="1.200" fill="none" stroke="#e0e2e4" stroke-width="0.900"/><circle cx="8.600" cy="11.800" r="2.100" fill="none" stroke="#e0e2e4" stroke-width="1.100"/></svg>
<svg style="left:7px;top:695.5px;" width="18" height="15" viewBox="0 0 18 15"><path d="M0.800 13.800V1l2.600 0 1.400 6.500 4-3.200v3.200l4-3.200 3.600 0v9.500z" fill="none" stroke="#e0e2e4" stroke-width="1.300" stroke-linejoin="miter"/></svg>
<svg style="left:7px;top:742px;" width="17" height="16" viewBox="0 0 17 16"><path d="M3.2 4.5A6.4 6.4 0 1 1 2 9.5" fill="none" stroke="#e0e2e4" stroke-width="1.3"/><path d="M0.5 2.5l2.8 3 2.7-2.6" fill="none" stroke="#e0e2e4" stroke-width="1.2"/><path d="M8.3 4.5v4l2.6 1.8" fill="none" stroke="#e0e2e4" stroke-width="1.2"/></svg>
<svg style="left:6px;top:766px;" width="19" height="18" viewBox="0 0 19 18"><path d="M9.5 1.2l2.4 5.3 5.8.6-4.3 3.9 1.2 5.7-5.1-2.9-5.1 2.9 1.2-5.7L1.3 7.1l5.8-.6z" fill="none" stroke="#e0e2e4" stroke-width="1.3" stroke-linejoin="round"/></svg>
<div style="left:39px;top:641px;width:299px;height:311px;background:#35393c;"></div>
<svg style="left:47.5px;top:647.5px;" width="6" height="9" viewBox="0 0 6 9"><path d="M1 1l3.5 3.5L1 8" fill="none" stroke="#9a9ea3" stroke-width="1.3"/></svg>
<svg style="left:58.5px;top:645.5px;" width="12" height="12" viewBox="0 0 12 12"><rect x="1" y="0.5" width="5.5" height="2" fill="#8d9196"/><rect x="0" y="3" width="12" height="8.5" fill="#8d9196"/></svg>
<div class="t" style="left:76px;top:648px;font-size:11px;color:#8f9499;">Internal FX</div>
<svg style="left:47.5px;top:667.5px;" width="6" height="9" viewBox="0 0 6 9"><path d="M1 1l3.5 3.5L1 8" fill="none" stroke="#9a9ea3" stroke-width="1.3"/></svg>
<svg style="left:58.5px;top:665.5px;" width="12" height="12" viewBox="0 0 12 12"><rect x="1" y="0.5" width="5.5" height="2" fill="#8d9196"/><rect x="0" y="3" width="12" height="8.5" fill="#8d9196"/></svg>
<div class="t" style="left:76px;top:668px;font-size:11px;color:#8f9499;">MAGIX Plugins</div>
<svg style="left:47.5px;top:687.5px;" width="6" height="9" viewBox="0 0 6 9"><path d="M1 1l3.5 3.5L1 8" fill="none" stroke="#9a9ea3" stroke-width="1.3"/></svg>
<svg style="left:58.5px;top:685.5px;" width="12" height="12" viewBox="0 0 12 12"><rect x="1" y="0.5" width="5.5" height="2" fill="#8d9196"/><rect x="0" y="3" width="12" height="8.5" fill="#8d9196"/></svg>
<div class="t" style="left:76px;top:688px;font-size:11px;color:#8f9499;">MAGIX Synth</div>
<svg style="left:47.5px;top:707.5px;" width="6" height="9" viewBox="0 0 6 9"><path d="M1 1l3.5 3.5L1 8" fill="none" stroke="#9a9ea3" stroke-width="1.3"/></svg>
<svg style="left:58.5px;top:705.5px;" width="12" height="12" viewBox="0 0 12 12"><rect x="1" y="0.5" width="5.5" height="2" fill="#8d9196"/><rect x="0" y="3" width="12" height="8.5" fill="#8d9196"/></svg>
<div class="t" style="left:76px;top:708px;font-size:11px;color:#8f9499;">VST</div>
<svg style="left:47.5px;top:727.5px;" width="6" height="9" viewBox="0 0 6 9"><path d="M1 1l3.5 3.5L1 8" fill="none" stroke="#9a9ea3" stroke-width="1.3"/></svg>
<div style="left:60px;top:724px;width:2px;height:16.5px;background:#e9a91c;"></div>
<div style="left:62px;top:724.5px;width:15px;height:15.5px;background:#5a4418;"></div>
<div class="t b" style="left:63.5px;top:726.5px;font-size:12.5px;color:#f4f4f4;letter-spacing:-0.6px;transform:scaleX(0.8);transform-origin:0 0;">FX</div>
<svg style="left:83.5px;top:725.5px;" width="14" height="14" viewBox="0 0 14 14"><path d="M7 0.5l2 4.4 4.8.5-3.6 3.2 1 4.7L7 10.9l-4.2 2.4 1-4.7L.2 5.4 5 4.9z" fill="#8d9196"/></svg>
<div class="t" style="left:105px;top:728px;font-size:11px;color:#8f9499;">External FX</div>
<div style="left:0px;top:958.5px;width:32.5px;height:19.5px;background:#42474b;"></div>
<svg style="left:4.9px;top:961.6px;" width="14" height="14" viewBox="0 0 14 14"><path d="M11.40 7.00L13.70 7.00M10.11 10.11L11.74 11.74M7.00 11.40L7.00 13.70M3.89 10.11L2.26 11.74M2.60 7.00L0.30 7.00M3.89 3.89L2.26 2.26M7.00 2.60L7.00 0.30M10.11 3.89L11.74 2.26" stroke="#d4d6d8" stroke-width="2.5"/><circle cx="7" cy="7" r="3.9" fill="none" stroke="#d4d6d8" stroke-width="2.3"/></svg>
<svg style="left:22px;top:967px;" width="6" height="3.5" viewBox="0 0 6 3.5"><path d="M0 0h6l-3.0 3.5z" fill="#d4d6d8"/></svg>
<div style="left:39px;top:958px;width:84.5px;height:20px;background:#42464d;"></div>
<div class="t" style="left:39px;top:963.5px;font-size:11px;color:#5f666c;width:84.5px;text-align:center;">Add</div>
<div style="left:125px;top:958px;width:13.5px;height:20px;background:#42464d;"></div>
<svg style="left:128px;top:967px;" width="7" height="4" viewBox="0 0 7 4"><path d="M0 0h7l-3.5 4z" fill="#d4d6d8"/></svg>
<div style="left:145px;top:958.8px;width:15.5px;height:18.2px;background:#3e4146;"></div>
<div class="t" style="left:167px;top:963.5px;font-size:11px;color:#a9adb2;">Show Plugin</div>
<div style="left:349px;top:596px;width:1571px;height:13.5px;background:#30363b;box-shadow:inset 0 -1px 0 #15181b, inset 0 1px 0 #15181b;"></div>
<svg style="left:351px;top:597.5px;" width="11" height="11" viewBox="0 0 11 11"><path d="M5.5 0.3L7.6 2.8H3.4zM5.5 10.7L7.6 8.2H3.4zM0.3 5.5L2.8 3.4v4.2zM10.7 5.5L8.2 3.4v4.2z" fill="#e4e6e8"/><path d="M5.5 2.5v6M2.5 5.5h6" stroke="#e4e6e8" stroke-width="0.9"/></svg>
<div class="t" style="left:374px;top:598.5px;font-size:11px;color:#9fb6cd;">Mixer</div>
<div style="left:1894px;top:602.5px;width:8px;height:1.8px;background:#e4e6e8;"></div>
<svg style="left:1908px;top:598px;" width="8" height="8" viewBox="0 0 8 8"><path d="M0.5 0.5l7 7M7.5 0.5l-7 7" stroke="#e4e6e8" stroke-width="1.3"/></svg>
<div style="left:349px;top:610px;width:1571px;height:374px;background:#25292d;"></div>
<div style="left:349px;top:610px;width:3px;height:374px;background:#1d2023;"></div>
<div style="left:352px;top:610px;width:35px;height:361px;background:#23272b;"></div>
<div class="t" style="left:367px;top:622px;font-size:10.5px;color:#dfe2e5;letter-spacing:-0.89px;">Pan</div>
<div class="t" style="left:351px;top:651.8px;font-size:10.5px;color:#c8d6e4;">In</div>
<div class="t" style="left:351px;top:666.8px;font-size:10.5px;color:#c8d6e4;">AUX</div>
<div class="t" style="left:351px;top:681.8px;font-size:10.5px;color:#c8d6e4;">FX</div>
<div class="t" style="left:351px;top:697px;font-size:10.5px;color:#c8d6e4;">EQ</div>
<div class="t" style="left:351px;top:712px;font-size:10.5px;color:#c8d6e4;">Main</div>
<div class="t" style="left:358px;top:733px;font-size:10.5px;color:#dfe2e5;">Start</div>
<div class="t" style="left:358px;top:745px;font-size:10.5px;color:#dfe2e5;">track</div>
<div style="left:362px;top:762px;width:15px;height:14.5px;background:#484d53;box-shadow:inset 0 0 0 1px #35393e;"></div>
<div class="t b" style="left:362px;top:764px;font-size:11px;color:#eef0f2;width:15px;text-align:center;">1</div>
<div style="left:362px;top:782px;width:15px;height:14.5px;background:#484d53;box-shadow:inset 0 0 0 1px #35393e;"></div>
<div class="t b" style="left:362px;top:784px;font-size:11px;color:#eef0f2;width:15px;text-align:center;">2</div>
<div style="left:362px;top:801px;width:15px;height:14.5px;background:#484d53;box-shadow:inset 0 0 0 1px #35393e;"></div>
<div class="t b" style="left:362px;top:803px;font-size:11px;color:#eef0f2;width:15px;text-align:center;">3</div>
<div style="left:362px;top:821px;width:15px;height:14.5px;background:#484d53;box-shadow:inset 0 0 0 1px #35393e;"></div>
<div class="t b" style="left:362px;top:823px;font-size:11px;color:#eef0f2;width:15px;text-align:center;">4</div>
<div class="t" style="left:355px;top:937px;font-size:10.5px;color:#dfe2e5;">Name</div>
<div class="t" style="left:363px;top:955px;font-size:10.5px;color:#dfe2e5;">Out</div>
<svg width="0" height="0" style="left:0;top:0"><defs><radialGradient id="kg" cx="50%" cy="30%" r="80%"><stop offset="0" stop-color="#cdcfd1"/><stop offset="0.55" stop-color="#a9abae"/><stop offset="1" stop-color="#787b80"/></radialGradient><linearGradient id="kb" x1="0" y1="0" x2="0" y2="1"><stop offset="0" stop-color="#4a4e53"/><stop offset="1" stop-color="#2b2e32"/></linearGradient><linearGradient id="fh" x1="0" y1="0" x2="0" y2="1"><stop offset="0" stop-color="#dfe2e5"/><stop offset="0.12" stop-color="#c6cace"/><stop offset="0.3" stop-color="#a3a8ad"/><stop offset="0.47" stop-color="#8b9197"/><stop offset="0.5" stop-color="#e6efff"/><stop offset="0.55" stop-color="#e0e8f8"/><stop offset="0.58" stop-color="#b6bbbf"/><stop offset="0.9" stop-color="#a2a7ac"/><stop offset="1" stop-color="#c8ccd0"/></linearGradient><linearGradient id="fr" x1="0" y1="0" x2="0" y2="1"><stop offset="0" stop-color="#d66a66"/><stop offset="0.18" stop-color="#cc5a58"/><stop offset="0.22" stop-color="#b04244"/><stop offset="0.47" stop-color="#a8383c"/><stop offset="0.53" stop-color="#cc5c5a"/><stop offset="0.9" stop-color="#b84a4a"/><stop offset="1" stop-color="#c45856"/></linearGradient></defs></svg>
<div style="left:388px;top:610px;width:69px;height:323px;background:#25292e;"></div>
<div style="left:456px;top:610px;width:1.2px;height:361px;background:#181b1e;"></div>
<div style="left:388px;top:610px;width:68px;height:40px;background:#22262a;"></div>
<div style="left:423px;top:619px;width:29.5px;height:26.5px;background:#15171a;"></div>
<svg style="left:393.3px;top:614.5px;" width="33" height="33" viewBox="0 0 33 33"><circle cx="16.5" cy="17.0" r="15.4" fill="#17191c"/><circle cx="16.5" cy="16.5" r="14.5" fill="url(#kb)"/><circle cx="16.5" cy="16.5" r="12.1" fill="url(#kg)"/><path d="M16.5 3.7A12.8 12.8 0 0 1 25.5 7.4" fill="none" stroke="#f2462e" stroke-width="1.7"/><path d="M17.2 15.8L25.5 7.4" stroke="#f2462e" stroke-width="1.6"/></svg>
<div class="t" style="left:425px;top:621px;font-size:11px;color:#c9ccd0;width:28px;text-align:center;letter-spacing:-0.2px;">2.8</div>
<div style="left:437px;top:634.3px;width:15px;height:10.8px;background:#4a4f55;"></div>
<div class="t" style="left:437px;top:634.5px;font-size:10px;color:#e6e8ea;width:15.5px;text-align:center;">φ</div>
<div style="left:388px;top:651px;width:51.8px;height:14px;background:#5c6670;"></div>
<div class="t" style="left:388px;top:653px;font-size:10.5px;color:#dfe6ee;width:52px;text-align:center;">1</div>
<div style="left:440.8px;top:651px;width:15.2px;height:14px;background:#494e54;"></div>
<svg style="left:443.8px;top:653.5px;" width="9" height="9" viewBox="0 0 9 9"><circle cx="4.5" cy="4.5" r="3.3" fill="none" stroke="#e4e6e8" stroke-width="1.1"/><circle cx="4.500" cy="4.500" r="1.2" fill="#e4e6e8"/></svg>
<div style="left:392.8px;top:672px;width:25.2px;height:18.2px;background:#86c5f5;"></div>
<div class="t" style="left:392.8px;top:676px;font-size:12px;color:#10202e;width:25.2px;text-align:center;letter-spacing:-0.3px;">Rd</div>
<div style="left:425.7px;top:672px;width:25.5px;height:18.2px;background:#464b50;box-shadow:inset 0 0 0 1px #34383c;"></div>
<div class="t" style="left:425.7px;top:673.6px;font-size:15.5px;color:#e4e6e8;width:25.5px;text-align:center;">S</div>
<div style="left:392.8px;top:696.8px;width:25.2px;height:18.4px;background:#464b50;box-shadow:inset 0 0 0 1px #34383c;"></div>
<div style="left:401px;top:701.6px;width:8.8px;height:8.8px;background:#d03540;border-radius:50%;filter:blur(0.3px);"></div>
<div style="left:425.7px;top:696.8px;width:25.5px;height:18.4px;background:#464b50;box-shadow:inset 0 0 0 1px #34383c;"></div>
<div class="t" style="left:425.7px;top:698.4px;font-size:15.5px;color:#e4e6e8;width:25.5px;text-align:center;">M</div>
<div style="left:425px;top:722px;width:27.3px;height:158px;background:linear-gradient(#111316,#15171a 90%,#1d2024);"></div>
<div style="left:425px;top:742.5px;width:27.3px;height:1px;background:#2b2f33;"></div>
<svg style="left:434.5px;top:726px;" width="9" height="11.7" viewBox="0 0 9 11.7"><path d="M0 3.15h2.9699999999999998L7.74 0v11.700000000000001L2.9699999999999998 8.55H0z" fill="#cfd1d3"/><path d="M7.74 0v11.700000000000001" stroke="#cfd1d3" stroke-width="1.08"/></svg>
<div class="t" style="left:424px;top:747.5px;font-size:9.5px;color:#e6e8ea;width:14px;text-align:right;letter-spacing:-0.5px;">12</div>
<div class="t" style="left:424px;top:760.5px;font-size:9.5px;color:#e6e8ea;width:14px;text-align:right;letter-spacing:-0.5px;">0</div>
<div class="t" style="left:424px;top:783.5px;font-size:9.5px;color:#e6e8ea;width:14px;text-align:right;letter-spacing:-0.5px;">10</div>
<div class="t" style="left:424px;top:804.5px;font-size:9.5px;color:#e6e8ea;width:14px;text-align:right;letter-spacing:-0.5px;">20</div>
<div class="t" style="left:424px;top:835.5px;font-size:9.5px;color:#e6e8ea;width:14px;text-align:right;letter-spacing:-0.5px;">40</div>
<div class="t" style="left:424px;top:866.5px;font-size:9.5px;color:#e6e8ea;width:14px;text-align:right;letter-spacing:-0.5px;">80</div>
<div style="left:427px;top:746px;width:9.8px;height:1px;background:#4c5156;"></div>
<div style="left:427px;top:771.5px;width:9.8px;height:1px;background:#4c5156;"></div>
<div style="left:427px;top:794.8px;width:9.8px;height:1px;background:#4c5156;"></div>
<div style="left:427px;top:815.5px;width:9.8px;height:1px;background:#4c5156;"></div>
<div style="left:427px;top:847.5px;width:9.8px;height:1px;background:#4c5156;"></div>
<div style="left:427px;top:877.8px;width:9.8px;height:1px;background:#4c5156;"></div>
<div style="left:390px;top:747.5px;width:31.5px;height:1px;background:#3b3f44;"></div>
<div style="left:390px;top:772px;width:31.5px;height:1px;background:#3b3f44;"></div>
<div style="left:390px;top:795.5px;width:31.5px;height:1px;background:#3b3f44;"></div>
<div style="left:390px;top:816px;width:31.5px;height:1px;background:#3b3f44;"></div>
<div style="left:390px;top:848px;width:31.5px;height:1px;background:#3b3f44;"></div>
<div style="left:390px;top:878px;width:31.5px;height:1px;background:#3b3f44;"></div>
<div style="left:390px;top:772px;width:31.5px;height:1.2px;background:#c9ccd0;"></div>
<div style="left:395px;top:755px;width:21px;height:1px;background:rgba(150,155,160,0.16);"></div>
<div style="left:395px;top:758px;width:21px;height:1px;background:rgba(150,155,160,0.16);"></div>
<div style="left:395px;top:761px;width:21px;height:1px;background:rgba(150,155,160,0.16);"></div>
<div style="left:395px;top:764px;width:21px;height:1px;background:rgba(150,155,160,0.16);"></div>
<div style="left:395px;top:767px;width:21px;height:1px;background:rgba(150,155,160,0.16);"></div>
<div style="left:395px;top:770px;width:21px;height:1px;background:rgba(150,155,160,0.16);"></div>
<div style="left:395px;top:773px;width:21px;height:1px;background:rgba(150,155,160,0.16);"></div>
<div style="left:395px;top:776px;width:21px;height:1px;background:rgba(150,155,160,0.16);"></div>
<div style="left:395px;top:779px;width:21px;height:1px;background:rgba(150,155,160,0.16);"></div>
<div style="left:395px;top:782px;width:21px;height:1px;background:rgba(150,155,160,0.16);"></div>
<div style="left:395px;top:785px;width:21px;height:1px;background:rgba(150,155,160,0.16);"></div>
<div style="left:395px;top:788px;width:21px;height:1px;background:rgba(150,155,160,0.16);"></div>
<svg style="left:393px;top:751px;" width="25" height="40" viewBox="0 0 25 40"><path d="M0.5 5V0.5h6M24.500 5V0.5h-6M0.5 34.5v4.500h6M24.5 34.5v4.500h-6" fill="none" stroke="#6c7176" stroke-width="1"/></svg>
<div style="left:403px;top:736px;width:5px;height:144px;background:linear-gradient(90deg,#0e0f11,#17191c);border-radius:2.5px;"></div>
<svg style="left:395.5px;top:771px;filter:drop-shadow(0 1px 1px rgba(0,0,0,.6));" width="19" height="33.5" viewBox="0 0 19 33.5"><rect x="0" y="0" width="19" height="33.5" rx="1.5" fill="url(#fh)"/><rect x="0" y="0" width="1.2" height="33.5" fill="#8b9096" opacity="0.7"/><rect x="17.8" y="0" width="1.2" height="33.5" fill="#8b9096" opacity="0.7"/></svg>
<div class="t" style="left:418px;top:885.5px;font-size:11px;color:#eef0f2;width:29.5px;text-align:right;letter-spacing:-0.4px;">-7.5</div>
<div style="left:421.2px;top:917.8px;width:19px;height:13px;background:#4b5056;box-shadow:inset 0 0 0 1px #2c3034;"></div>
<div class="t" style="left:421.2px;top:919px;font-size:11.5px;color:#e8eaec;width:19px;text-align:center;letter-spacing:-0.4px;">FX</div>
<div style="left:441.2px;top:917.8px;width:12px;height:13px;background:#4b5056;box-shadow:inset 0 0 0 1px #2c3034;"></div>
<svg style="left:444.2px;top:923px;" width="6" height="3.5" viewBox="0 0 6 3.5"><path d="M0 0h6l-3.0 3.5z" fill="#e8eaec"/></svg>
<div style="left:388px;top:951px;width:68px;height:20px;background:#25292e;"></div>
<div style="left:390.2px;top:953.5px;width:63.8px;height:13px;background:#44494f;box-shadow:inset 0 0 0 1px #1e2124;"></div>
<div style="left:457px;top:610px;width:69px;height:323px;background:#25292e;"></div>
<div style="left:525px;top:610px;width:1.2px;height:361px;background:#181b1e;"></div>
<div style="left:457px;top:610px;width:68px;height:40px;background:#22262a;"></div>
<div style="left:492px;top:619px;width:29.5px;height:26.5px;background:#15171a;"></div>
<svg style="left:462.3px;top:614.5px;" width="33" height="33" viewBox="0 0 33 33"><circle cx="16.5" cy="17.0" r="15.4" fill="#17191c"/><circle cx="16.5" cy="16.5" r="14.5" fill="url(#kb)"/><circle cx="16.5" cy="16.5" r="12.1" fill="url(#kg)"/><path d="M16.5 3.7A12.8 12.8 0 0 0 4.8 11.3" fill="none" stroke="#2a9cf0" stroke-width="1.7"/><path d="M15.6 16.1L4.8 11.3" stroke="#2a9cf0" stroke-width="1.6"/></svg>
<div class="t" style="left:494px;top:621px;font-size:11px;color:#c9ccd0;width:28px;text-align:center;letter-spacing:-0.2px;">-5.9</div>
<div style="left:506px;top:634.3px;width:15px;height:10.8px;background:#4a4f55;"></div>
<div class="t" style="left:506px;top:634.5px;font-size:10px;color:#e6e8ea;width:15.5px;text-align:center;">φ</div>
<div style="left:457px;top:651px;width:51.8px;height:14px;background:#5c6670;"></div>
<div class="t" style="left:457px;top:653px;font-size:10.5px;color:#dfe6ee;width:52px;text-align:center;">2</div>
<div style="left:509.8px;top:651px;width:15.2px;height:14px;background:#494e54;"></div>
<svg style="left:512.8px;top:653.5px;" width="9" height="9" viewBox="0 0 9 9"><circle cx="4.5" cy="4.5" r="3.3" fill="none" stroke="#e4e6e8" stroke-width="1.1"/><circle cx="4.500" cy="4.500" r="1.2" fill="#e4e6e8"/></svg>
<div style="left:461.8px;top:672px;width:25.2px;height:18.2px;background:#86c5f5;"></div>
<div class="t" style="left:461.8px;top:676px;font-size:12px;color:#10202e;width:25.2px;text-align:center;letter-spacing:-0.3px;">Rd</div>
<div style="left:494.7px;top:672px;width:25.5px;height:18.2px;background:#464b50;box-shadow:inset 0 0 0 1px #34383c;"></div>
<div class="t" style="left:494.7px;top:673.6px;font-size:15.5px;color:#e4e6e8;width:25.5px;text-align:center;">S</div>
<div style="left:461.8px;top:696.8px;width:25.2px;height:18.4px;background:#464b50;box-shadow:inset 0 0 0 1px #34383c;"></div>
<div style="left:470px;top:701.6px;width:8.8px;height:8.8px;background:#d03540;border-radius:50%;filter:blur(0.3px);"></div>
<div style="left:494.7px;top:696.8px;width:25.5px;height:18.4px;background:#464b50;box-shadow:inset 0 0 0 1px #34383c;"></div>
<div class="t" style="left:494.7px;top:698.4px;font-size:15.5px;color:#e4e6e8;width:25.5px;text-align:center;">M</div>
<div style="left:494px;top:722px;width:27.3px;height:158px;background:linear-gradient(#111316,#15171a 90%,#1d2024);"></div>
<div style="left:494px;top:742.5px;width:27.3px;height:1px;background:#2b2f33;"></div>
<svg style="left:503.5px;top:726px;" width="9" height="11.7" viewBox="0 0 9 11.7"><path d="M0 3.15h2.9699999999999998L7.74 0v11.700000000000001L2.9699999999999998 8.55H0z" fill="#cfd1d3"/><path d="M7.74 0v11.700000000000001" stroke="#cfd1d3" stroke-width="1.08"/></svg>
<div class="t" style="left:493px;top:747.5px;font-size:9.5px;color:#e6e8ea;width:14px;text-align:right;letter-spacing:-0.5px;">12</div>
<div class="t" style="left:493px;top:760.5px;font-size:9.5px;color:#e6e8ea;width:14px;text-align:right;letter-spacing:-0.5px;">0</div>
<div class="t" style="left:493px;top:783.5px;font-size:9.5px;color:#e6e8ea;width:14px;text-align:right;letter-spacing:-0.5px;">10</div>
<div class="t" style="left:493px;top:804.5px;font-size:9.5px;color:#e6e8ea;width:14px;text-align:right;letter-spacing:-0.5px;">20</div>
<div class="t" style="left:493px;top:835.5px;font-size:9.5px;color:#e6e8ea;width:14px;text-align:right;letter-spacing:-0.5px;">40</div>
<div class="t" style="left:493px;top:866.5px;font-size:9.5px;color:#e6e8ea;width:14px;text-align:right;letter-spacing:-0.5px;">80</div>
<div style="left:496px;top:746px;width:9.8px;height:1px;background:#4c5156;"></div>
<div style="left:496px;top:771.5px;width:9.8px;height:1px;background:#4c5156;"></div>
<div style="left:496px;top:794.8px;width:9.8px;height:1px;background:#4c5156;"></div>
<div style="left:496px;top:815.5px;width:9.8px;height:1px;background:#4c5156;"></div>
<div style="left:496px;top:847.5px;width:9.8px;height:1px;background:#4c5156;"></div>
<div style="left:496px;top:877.8px;width:9.8px;height:1px;background:#4c5156;"></div>
<div style="left:459px;top:747.5px;width:31.5px;height:1px;background:#3b3f44;"></div>
<div style="left:459px;top:772px;width:31.5px;height:1px;background:#3b3f44;"></div>
<div style="left:459px;top:795.5px;width:31.5px;height:1px;background:#3b3f44;"></div>
<div style="left:459px;top:816px;width:31.5px;height:1px;background:#3b3f44;"></div>
<div style="left:459px;top:848px;width:31.5px;height:1px;background:#3b3f44;"></div>
<div style="left:459px;top:878px;width:31.5px;height:1px;background:#3b3f44;"></div>
<div style="left:459px;top:772px;width:31.5px;height:1.2px;background:#c9ccd0;"></div>
<div style="left:464px;top:755px;width:21px;height:1px;background:rgba(150,155,160,0.16);"></div>
<div style="left:464px;top:758px;width:21px;height:1px;background:rgba(150,155,160,0.16);"></div>
<div style="left:464px;top:761px;width:21px;height:1px;background:rgba(150,155,160,0.16);"></div>
<div style="left:464px;top:764px;width:21px;height:1px;background:rgba(150,155,160,0.16);"></div>
<div style="left:464px;top:767px;width:21px;height:1px;background:rgba(150,155,160,0.16);"></div>
<div style="left:464px;top:770px;width:21px;height:1px;background:rgba(150,155,160,0.16);"></div>
<div style="left:464px;top:773px;width:21px;height:1px;background:rgba(150,155,160,0.16);"></div>
<div style="left:464px;top:776px;width:21px;height:1px;background:rgba(150,155,160,0.16);"></div>
<div style="left:464px;top:779px;width:21px;height:1px;background:rgba(150,155,160,0.16);"></div>
<div style="left:464px;top:782px;width:21px;height:1px;background:rgba(150,155,160,0.16);"></div>
<div style="left:464px;top:785px;width:21px;height:1px;background:rgba(150,155,160,0.16);"></div>
<div style="left:464px;top:788px;width:21px;height:1px;background:rgba(150,155,160,0.16);"></div>
<svg style="left:462px;top:751px;" width="25" height="40" viewBox="0 0 25 40"><path d="M0.5 5V0.5h6M24.500 5V0.5h-6M0.5 34.5v4.500h6M24.5 34.5v4.500h-6" fill="none" stroke="#6c7176" stroke-width="1"/></svg>
<div style="left:472px;top:736px;width:5px;height:144px;background:linear-gradient(90deg,#0e0f11,#17191c);border-radius:2.5px;"></div>
<svg style="left:464.5px;top:816.6px;filter:drop-shadow(0 1px 1px rgba(0,0,0,.6));" width="19" height="33.5" viewBox="0 0 19 33.5"><rect x="0" y="0" width="19" height="33.5" rx="1.5" fill="url(#fh)"/><rect x="0" y="0" width="1.2" height="33.5" fill="#8b9096" opacity="0.7"/><rect x="17.8" y="0" width="1.2" height="33.5" fill="#8b9096" opacity="0.7"/></svg>
<div class="t" style="left:487px;top:885.5px;font-size:11px;color:#eef0f2;width:29.5px;text-align:right;letter-spacing:-0.4px;">-29.8</div>
<div style="left:490.2px;top:917.8px;width:19px;height:13px;background:#4b5056;box-shadow:inset 0 0 0 1px #2c3034;"></div>
<div class="t" style="left:490.2px;top:919px;font-size:11.5px;color:#e8eaec;width:19px;text-align:center;letter-spacing:-0.4px;">FX</div>
<div style="left:510.2px;top:917.8px;width:12px;height:13px;background:#4b5056;box-shadow:inset 0 0 0 1px #2c3034;"></div>
<svg style="left:513.2px;top:923px;" width="6" height="3.5" viewBox="0 0 6 3.5"><path d="M0 0h6l-3.0 3.5z" fill="#e8eaec"/></svg>
<div style="left:457px;top:951px;width:68px;height:20px;background:#25292e;"></div>
<div style="left:459.2px;top:953.5px;width:63.8px;height:13px;background:#44494f;box-shadow:inset 0 0 0 1px #1e2124;"></div>
<div style="left:526px;top:610px;width:69px;height:323px;background:#25292e;"></div>
<div style="left:594px;top:610px;width:1.2px;height:361px;background:#181b1e;"></div>
<div style="left:526px;top:610px;width:68px;height:40px;background:#22262a;"></div>
<div style="left:561px;top:619px;width:29.5px;height:26.5px;background:#15171a;"></div>
<svg style="left:531.3px;top:614.5px;" width="33" height="33" viewBox="0 0 33 33"><circle cx="16.5" cy="17.0" r="15.4" fill="#17191c"/><circle cx="16.5" cy="16.5" r="14.5" fill="url(#kb)"/><circle cx="16.5" cy="16.5" r="12.1" fill="url(#kg)"/><path d="M16.5 3.7A12.8 12.8 0 0 1 25.6 25.6" fill="none" stroke="#f2462e" stroke-width="1.7"/><path d="M17.2 17.2L25.6 25.6" stroke="#f2462e" stroke-width="1.6"/></svg>
<div class="t" style="left:563px;top:621px;font-size:11px;color:#c9ccd0;width:28px;text-align:center;letter-spacing:-0.2px;">R</div>
<div style="left:575px;top:634.3px;width:15px;height:10.8px;background:#4a4f55;"></div>
<div class="t" style="left:575px;top:634.5px;font-size:10px;color:#e6e8ea;width:15.5px;text-align:center;">φ</div>
<div style="left:526px;top:651px;width:51.8px;height:14px;background:#5c6670;"></div>
<div class="t" style="left:526px;top:653px;font-size:10.5px;color:#dfe6ee;width:52px;text-align:center;">3</div>
<div style="left:578.8px;top:651px;width:15.2px;height:14px;background:#494e54;"></div>
<svg style="left:581.8px;top:653.5px;" width="9" height="9" viewBox="0 0 9 9"><circle cx="4.5" cy="4.5" r="3.3" fill="none" stroke="#e4e6e8" stroke-width="1.1"/><circle cx="4.500" cy="4.500" r="1.2" fill="#e4e6e8"/></svg>
<div style="left:530.8px;top:672px;width:25.2px;height:18.2px;background:#86c5f5;"></div>
<div class="t" style="left:530.8px;top:676px;font-size:12px;color:#10202e;width:25.2px;text-align:center;letter-spacing:-0.3px;">Rd</div>
<div style="left:563.7px;top:672px;width:25.5px;height:18.2px;background:#464b50;box-shadow:inset 0 0 0 1px #34383c;"></div>
<div class="t" style="left:563.7px;top:673.6px;font-size:15.5px;color:#e4e6e8;width:25.5px;text-align:center;">S</div>
<div style="left:530.8px;top:696.8px;width:25.2px;height:18.4px;background:#464b50;box-shadow:inset 0 0 0 1px #34383c;"></div>
<div style="left:539px;top:701.6px;width:8.8px;height:8.8px;background:#d03540;border-radius:50%;filter:blur(0.3px);"></div>
<div style="left:563.7px;top:696.8px;width:25.5px;height:18.4px;background:#464b50;box-shadow:inset 0 0 0 1px #34383c;"></div>
<div class="t" style="left:563.7px;top:698.4px;font-size:15.5px;color:#e4e6e8;width:25.5px;text-align:center;">M</div>
<div style="left:563px;top:722px;width:27.3px;height:158px;background:linear-gradient(#111316,#15171a 90%,#1d2024);"></div>
<div style="left:563px;top:742.5px;width:27.3px;height:1px;background:#2b2f33;"></div>
<svg style="left:572.5px;top:726px;" width="9" height="11.7" viewBox="0 0 9 11.7"><path d="M0 3.15h2.9699999999999998L7.74 0v11.700000000000001L2.9699999999999998 8.55H0z" fill="#cfd1d3"/><path d="M7.74 0v11.700000000000001" stroke="#cfd1d3" stroke-width="1.08"/></svg>
<div class="t" style="left:562px;top:747.5px;font-size:9.5px;color:#e6e8ea;width:14px;text-align:right;letter-spacing:-0.5px;">12</div>
<div class="t" style="left:562px;top:760.5px;font-size:9.5px;color:#e6e8ea;width:14px;text-align:right;letter-spacing:-0.5px;">0</div>
<div class="t" style="left:562px;top:783.5px;font-size:9.5px;color:#e6e8ea;width:14px;text-align:right;letter-spacing:-0.5px;">10</div>
<div class="t" style="left:562px;top:804.5px;font-size:9.5px;color:#e6e8ea;width:14px;text-align:right;letter-spacing:-0.5px;">20</div>
<div class="t" style="left:562px;top:835.5px;font-size:9.5px;color:#e6e8ea;width:14px;text-align:right;letter-spacing:-0.5px;">40</div>
<div class="t" style="left:562px;top:866.5px;font-size:9.5px;color:#e6e8ea;width:14px;text-align:right;letter-spacing:-0.5px;">80</div>
<div style="left:565px;top:746px;width:9.8px;height:1px;background:#4c5156;"></div>
<div style="left:565px;top:771.5px;width:9.8px;height:1px;background:#4c5156;"></div>
<div style="left:565px;top:794.8px;width:9.8px;height:1px;background:#4c5156;"></div>
<div style="left:565px;top:815.5px;width:9.8px;height:1px;background:#4c5156;"></div>
<div style="left:565px;top:847.5px;width:9.8px;height:1px;background:#4c5156;"></div>
<div style="left:565px;top:877.8px;width:9.8px;height:1px;background:#4c5156;"></div>
<div style="left:528px;top:747.5px;width:31.5px;height:1px;background:#3b3f44;"></div>
<div style="left:528px;top:772px;width:31.5px;height:1px;background:#3b3f44;"></div>
<div style="left:528px;top:795.5px;width:31.5px;height:1px;background:#3b3f44;"></div>
<div style="left:528px;top:816px;width:31.5px;height:1px;background:#3b3f44;"></div>
<div style="left:528px;top:848px;width:31.5px;height:1px;background:#3b3f44;"></div>
<div style="left:528px;top:878px;width:31.5px;height:1px;background:#3b3f44;"></div>
<div style="left:528px;top:772px;width:31.5px;height:1.2px;background:#c9ccd0;"></div>
<div style="left:533px;top:755px;width:21px;height:1px;background:rgba(150,155,160,0.16);"></div>
<div style="left:533px;top:758px;width:21px;height:1px;background:rgba(150,155,160,0.16);"></div>
<div style="left:533px;top:761px;width:21px;height:1px;background:rgba(150,155,160,0.16);"></div>
<div style="left:533px;top:764px;width:21px;height:1px;background:rgba(150,155,160,0.16);"></div>
<div style="left:533px;top:767px;width:21px;height:1px;background:rgba(150,155,160,0.16);"></div>
<div style="left:533px;top:770px;width:21px;height:1px;background:rgba(150,155,160,0.16);"></div>
<div style="left:533px;top:773px;width:21px;height:1px;background:rgba(150,155,160,0.16);"></div>
<div style="left:533px;top:776px;width:21px;height:1px;background:rgba(150,155,160,0.16);"></div>
<div style="left:533px;top:779px;width:21px;height:1px;background:rgba(150,155,160,0.16);"></div>
<div style="left:533px;top:782px;width:21px;height:1px;background:rgba(150,155,160,0.16);"></div>
<div style="left:533px;top:785px;width:21px;height:1px;background:rgba(150,155,160,0.16);"></div>
<div style="left:533px;top:788px;width:21px;height:1px;background:rgba(150,155,160,0.16);"></div>
<svg style="left:531px;top:751px;" width="25" height="40" viewBox="0 0 25 40"><path d="M0.5 5V0.5h6M24.500 5V0.5h-6M0.5 34.5v4.500h6M24.5 34.5v4.500h-6" fill="none" stroke="#6c7176" stroke-width="1"/></svg>
<div style="left:541px;top:736px;width:5px;height:144px;background:linear-gradient(90deg,#0e0f11,#17191c);border-radius:2.5px;"></div>
<svg style="left:533.5px;top:799.8px;filter:drop-shadow(0 1px 1px rgba(0,0,0,.6));" width="19" height="33.5" viewBox="0 0 19 33.5"><rect x="0" y="0" width="19" height="33.5" rx="1.5" fill="url(#fh)"/><rect x="0" y="0" width="1.2" height="33.5" fill="#8b9096" opacity="0.7"/><rect x="17.8" y="0" width="1.2" height="33.5" fill="#8b9096" opacity="0.7"/></svg>
<div style="left:584px;top:829.4px;width:4.5px;height:49.1px;background:#a3e01a;"></div>
<div style="left:584px;top:826px;width:4.5px;height:1.6px;background:#b6ea2a;"></div>
<div class="t" style="left:556px;top:885.5px;font-size:11px;color:#eef0f2;width:29.5px;text-align:right;letter-spacing:-0.4px;">-21.4</div>
<div style="left:559.2px;top:917.8px;width:19px;height:13px;background:#4b5056;box-shadow:inset 0 0 0 1px #2c3034;"></div>
<div class="t" style="left:559.2px;top:919px;font-size:11.5px;color:#e8eaec;width:19px;text-align:center;letter-spacing:-0.4px;">FX</div>
<div style="left:579.2px;top:917.8px;width:12px;height:13px;background:#4b5056;box-shadow:inset 0 0 0 1px #2c3034;"></div>
<svg style="left:582.2px;top:923px;" width="6" height="3.5" viewBox="0 0 6 3.5"><path d="M0 0h6l-3.0 3.5z" fill="#e8eaec"/></svg>
<div style="left:526px;top:951px;width:68px;height:20px;background:#25292e;"></div>
<div style="left:528.2px;top:953.5px;width:63.8px;height:13px;background:#44494f;box-shadow:inset 0 0 0 1px #1e2124;"></div>
<div style="left:595px;top:610px;width:69px;height:323px;background:#25292e;"></div>
<div style="left:663px;top:610px;width:1.2px;height:361px;background:#181b1e;"></div>
<div style="left:595px;top:610px;width:68px;height:40px;background:#22262a;"></div>
<div style="left:630px;top:619px;width:29.5px;height:26.5px;background:#15171a;"></div>
<svg style="left:600.3px;top:614.5px;" width="33" height="33" viewBox="0 0 33 33"><circle cx="16.5" cy="17.0" r="15.4" fill="#17191c"/><circle cx="16.5" cy="16.5" r="14.5" fill="url(#kb)"/><circle cx="16.5" cy="16.5" r="12.1" fill="url(#kg)"/><path d="M16.5 3.7A12.8 12.8 0 0 0 7.4 25.6" fill="none" stroke="#2a9cf0" stroke-width="1.7"/><path d="M15.8 17.2L7.4 25.6" stroke="#2a9cf0" stroke-width="1.6"/></svg>
<div class="t" style="left:632px;top:621px;font-size:11px;color:#c9ccd0;width:28px;text-align:center;letter-spacing:-0.2px;">L</div>
<div style="left:644px;top:634.3px;width:15px;height:10.8px;background:#4a4f55;"></div>
<div class="t" style="left:644px;top:634.5px;font-size:10px;color:#e6e8ea;width:15.5px;text-align:center;">φ</div>
<div style="left:595px;top:651px;width:51.8px;height:14px;background:#5c6670;"></div>
<div class="t" style="left:595px;top:653px;font-size:10.5px;color:#dfe6ee;width:52px;text-align:center;">4</div>
<div style="left:647.8px;top:651px;width:15.2px;height:14px;background:#494e54;"></div>
<svg style="left:650.8px;top:653.5px;" width="9" height="9" viewBox="0 0 9 9"><circle cx="4.5" cy="4.5" r="3.3" fill="none" stroke="#e4e6e8" stroke-width="1.1"/><circle cx="4.500" cy="4.500" r="1.2" fill="#e4e6e8"/></svg>
<div style="left:599.8px;top:672px;width:25.2px;height:18.2px;background:#86c5f5;"></div>
<div class="t" style="left:599.8px;top:676px;font-size:12px;color:#10202e;width:25.2px;text-align:center;letter-spacing:-0.3px;">Rd</div>
<div style="left:632.7px;top:672px;width:25.5px;height:18.2px;background:#464b50;box-shadow:inset 0 0 0 1px #34383c;"></div>
<div class="t" style="left:632.7px;top:673.6px;font-size:15.5px;color:#e4e6e8;width:25.5px;text-align:center;">S</div>
<div style="left:599.8px;top:696.8px;width:25.2px;height:18.4px;background:#464b50;box-shadow:inset 0 0 0 1px #34383c;"></div>
<div style="left:608px;top:701.6px;width:8.8px;height:8.8px;background:#d03540;border-radius:50%;filter:blur(0.3px);"></div>
<div style="left:632.7px;top:696.8px;width:25.5px;height:18.4px;background:#464b50;box-shadow:inset 0 0 0 1px #34383c;"></div>
<div class="t" style="left:632.7px;top:698.4px;font-size:15.5px;color:#e4e6e8;width:25.5px;text-align:center;">M</div>
<div style="left:632px;top:722px;width:27.3px;height:158px;background:linear-gradient(#111316,#15171a 90%,#1d2024);"></div>
<div style="left:632px;top:742.5px;width:27.3px;height:1px;background:#2b2f33;"></div>
<svg style="left:641.5px;top:726px;" width="9" height="11.7" viewBox="0 0 9 11.7"><path d="M0 3.15h2.9699999999999998L7.74 0v11.700000000000001L2.9699999999999998 8.55H0z" fill="#cfd1d3"/><path d="M7.74 0v11.700000000000001" stroke="#cfd1d3" stroke-width="1.08"/></svg>
<div class="t" style="left:631px;top:747.5px;font-size:9.5px;color:#e6e8ea;width:14px;text-align:right;letter-spacing:-0.5px;">12</div>
<div class="t" style="left:631px;top:760.5px;font-size:9.5px;color:#e6e8ea;width:14px;text-align:right;letter-spacing:-0.5px;">0</div>
<div class="t" style="left:631px;top:783.5px;font-size:9.5px;color:#e6e8ea;width:14px;text-align:right;letter-spacing:-0.5px;">10</div>
<div class="t" style="left:631px;top:804.5px;font-size:9.5px;color:#e6e8ea;width:14px;text-align:right;letter-spacing:-0.5px;">20</div>
<div class="t" style="left:631px;top:835.5px;font-size:9.5px;color:#e6e8ea;width:14px;text-align:right;letter-spacing:-0.5px;">40</div>
<div class="t" style="left:631px;top:866.5px;font-size:9.5px;color:#e6e8ea;width:14px;text-align:right;letter-spacing:-0.5px;">80</div>
<div style="left:634px;top:746px;width:9.8px;height:1px;background:#4c5156;"></div>
<div style="left:634px;top:771.5px;width:9.8px;height:1px;background:#4c5156;"></div>
<div style="left:634px;top:794.8px;width:9.8px;height:1px;background:#4c5156;"></div>
<div style="left:634px;top:815.5px;width:9.8px;height:1px;background:#4c5156;"></div>
<div style="left:634px;top:847.5px;width:9.8px;height:1px;background:#4c5156;"></div>
<div style="left:634px;top:877.8px;width:9.8px;height:1px;background:#4c5156;"></div>
<div style="left:597px;top:747.5px;width:31.5px;height:1px;background:#3b3f44;"></div>
<div style="left:597px;top:772px;width:31.5px;height:1px;background:#3b3f44;"></div>
<div style="left:597px;top:795.5px;width:31.5px;height:1px;background:#3b3f44;"></div>
<div style="left:597px;top:816px;width:31.5px;height:1px;background:#3b3f44;"></div>
<div style="left:597px;top:848px;width:31.5px;height:1px;background:#3b3f44;"></div>
<div style="left:597px;top:878px;width:31.5px;height:1px;background:#3b3f44;"></div>
<div style="left:597px;top:772px;width:31.5px;height:1.2px;background:#c9ccd0;"></div>
<div style="left:602px;top:755px;width:21px;height:1px;background:rgba(150,155,160,0.16);"></div>
<div style="left:602px;top:758px;width:21px;height:1px;background:rgba(150,155,160,0.16);"></div>
<div style="left:602px;top:761px;width:21px;height:1px;background:rgba(150,155,160,0.16);"></div>
<div style="left:602px;top:764px;width:21px;height:1px;background:rgba(150,155,160,0.16);"></div>
<div style="left:602px;top:767px;width:21px;height:1px;background:rgba(150,155,160,0.16);"></div>
<div style="left:602px;top:770px;width:21px;height:1px;background:rgba(150,155,160,0.16);"></div>
<div style="left:602px;top:773px;width:21px;height:1px;background:rgba(150,155,160,0.16);"></div>
<div style="left:602px;top:776px;width:21px;height:1px;background:rgba(150,155,160,0.16);"></div>
<div style="left:602px;top:779px;width:21px;height:1px;background:rgba(150,155,160,0.16);"></div>
<div style="left:602px;top:782px;width:21px;height:1px;background:rgba(150,155,160,0.16);"></div>
<div style="left:602px;top:785px;width:21px;height:1px;background:rgba(150,155,160,0.16);"></div>
<div style="left:602px;top:788px;width:21px;height:1px;background:rgba(150,155,160,0.16);"></div>
<svg style="left:600px;top:751px;" width="25" height="40" viewBox="0 0 25 40"><path d="M0.5 5V0.5h6M24.500 5V0.5h-6M0.5 34.5v4.500h6M24.5 34.5v4.500h-6" fill="none" stroke="#6c7176" stroke-width="1"/></svg>
<div style="left:610px;top:736px;width:5px;height:144px;background:linear-gradient(90deg,#0e0f11,#17191c);border-radius:2.5px;"></div>
<svg style="left:602.5px;top:797.4px;filter:drop-shadow(0 1px 1px rgba(0,0,0,.6));" width="19" height="33.5" viewBox="0 0 19 33.5"><rect x="0" y="0" width="19" height="33.5" rx="1.5" fill="url(#fh)"/><rect x="0" y="0" width="1.2" height="33.5" fill="#8b9096" opacity="0.7"/><rect x="17.8" y="0" width="1.2" height="33.5" fill="#8b9096" opacity="0.7"/></svg>
<div style="left:647px;top:816.6px;width:4.5px;height:61.9px;background:#a3e01a;"></div>
<div class="t" style="left:625px;top:885.5px;font-size:11px;color:#eef0f2;width:29.5px;text-align:right;letter-spacing:-0.4px;">-20.5</div>
<div style="left:628.2px;top:917.8px;width:19px;height:13px;background:#4b5056;box-shadow:inset 0 0 0 1px #2c3034;"></div>
<div class="t" style="left:628.2px;top:919px;font-size:11.5px;color:#e8eaec;width:19px;text-align:center;letter-spacing:-0.4px;">FX</div>
<div style="left:648.2px;top:917.8px;width:12px;height:13px;background:#4b5056;box-shadow:inset 0 0 0 1px #2c3034;"></div>
<svg style="left:651.2px;top:923px;" width="6" height="3.5" viewBox="0 0 6 3.5"><path d="M0 0h6l-3.0 3.5z" fill="#e8eaec"/></svg>
<div style="left:595px;top:951px;width:68px;height:20px;background:#25292e;"></div>
<div style="left:597.2px;top:953.5px;width:63.8px;height:13px;background:#44494f;box-shadow:inset 0 0 0 1px #1e2124;"></div>
<div style="left:664px;top:610px;width:69px;height:323px;background:#25292e;"></div>
<div style="left:732px;top:610px;width:1.2px;height:361px;background:#181b1e;"></div>
<div style="left:664px;top:610px;width:68px;height:40px;background:#22262a;"></div>
<div style="left:699px;top:619px;width:29.5px;height:26.5px;background:#15171a;"></div>
<svg style="left:669.3px;top:614.5px;" width="33" height="33" viewBox="0 0 33 33"><circle cx="16.5" cy="17.0" r="15.4" fill="#17191c"/><circle cx="16.5" cy="16.5" r="14.5" fill="url(#kb)"/><circle cx="16.5" cy="16.5" r="12.1" fill="url(#kg)"/><path d="M16.5 3.7A12.8 12.8 0 0 0 5.3 10.2" fill="none" stroke="#2a9cf0" stroke-width="1.7"/><path d="M15.6 16.0L5.3 10.2" stroke="#2a9cf0" stroke-width="1.6"/></svg>
<div class="t" style="left:701px;top:621px;font-size:11px;color:#c9ccd0;width:28px;text-align:center;letter-spacing:-0.2px;">-4.3</div>
<div style="left:713px;top:634.3px;width:15px;height:10.8px;background:#4a4f55;"></div>
<div class="t" style="left:713px;top:634.5px;font-size:10px;color:#e6e8ea;width:15.5px;text-align:center;">φ</div>
<div style="left:664px;top:651px;width:51.8px;height:14px;background:#5c6670;"></div>
<div class="t" style="left:664px;top:653px;font-size:10.5px;color:#dfe6ee;width:52px;text-align:center;">5</div>
<div style="left:716.8px;top:651px;width:15.2px;height:14px;background:#494e54;"></div>
<svg style="left:719.8px;top:653.5px;" width="9" height="9" viewBox="0 0 9 9"><circle cx="4.5" cy="4.5" r="3.3" fill="none" stroke="#e4e6e8" stroke-width="1.1"/><circle cx="4.500" cy="4.500" r="1.2" fill="#e4e6e8"/></svg>
<div style="left:668.8px;top:672px;width:25.2px;height:18.2px;background:#86c5f5;"></div>
<div class="t" style="left:668.8px;top:676px;font-size:12px;color:#10202e;width:25.2px;text-align:center;letter-spacing:-0.3px;">Rd</div>
<div style="left:701.7px;top:672px;width:25.5px;height:18.2px;background:#464b50;box-shadow:inset 0 0 0 1px #34383c;"></div>
<div class="t" style="left:701.7px;top:673.6px;font-size:15.5px;color:#e4e6e8;width:25.5px;text-align:center;">S</div>
<div style="left:668.8px;top:696.8px;width:25.2px;height:18.4px;background:#464b50;box-shadow:inset 0 0 0 1px #34383c;"></div>
<div style="left:677px;top:701.6px;width:8.8px;height:8.8px;background:#d03540;border-radius:50%;filter:blur(0.3px);"></div>
<div style="left:701.7px;top:696.8px;width:25.5px;height:18.4px;background:#464b50;box-shadow:inset 0 0 0 1px #34383c;"></div>
<div class="t" style="left:701.7px;top:698.4px;font-size:15.5px;color:#e4e6e8;width:25.5px;text-align:center;">M</div>
<div style="left:701px;top:722px;width:27.3px;height:158px;background:linear-gradient(#111316,#15171a 90%,#1d2024);"></div>
<div style="left:701px;top:742.5px;width:27.3px;height:1px;background:#2b2f33;"></div>
<svg style="left:710.5px;top:726px;" width="9" height="11.7" viewBox="0 0 9 11.7"><path d="M0 3.15h2.9699999999999998L7.74 0v11.700000000000001L2.9699999999999998 8.55H0z" fill="#cfd1d3"/><path d="M7.74 0v11.700000000000001" stroke="#cfd1d3" stroke-width="1.08"/></svg>
<div class="t" style="left:700px;top:747.5px;font-size:9.5px;color:#e6e8ea;width:14px;text-align:right;letter-spacing:-0.5px;">12</div>
<div class="t" style="left:700px;top:760.5px;font-size:9.5px;color:#e6e8ea;width:14px;text-align:right;letter-spacing:-0.5px;">0</div>
<div class="t" style="left:700px;top:783.5px;font-size:9.5px;color:#e6e8ea;width:14px;text-align:right;letter-spacing:-0.5px;">10</div>
<div class="t" style="left:700px;top:804.5px;font-size:9.5px;color:#e6e8ea;width:14px;text-align:right;letter-spacing:-0.5px;">20</div>
<div class="t" style="left:700px;top:835.5px;font-size:9.5px;color:#e6e8ea;width:14px;text-align:right;letter-spacing:-0.5px;">40</div>
<div class="t" style="left:700px;top:866.5px;font-size:9.5px;color:#e6e8ea;width:14px;text-align:right;letter-spacing:-0.5px;">80</div>
<div style="left:703px;top:746px;width:9.8px;height:1px;background:#4c5156;"></div>
<div style="left:703px;top:771.5px;width:9.8px;height:1px;background:#4c5156;"></div>
<div style="left:703px;top:794.8px;width:9.8px;height:1px;background:#4c5156;"></div>
<div style="left:703px;top:815.5px;width:9.8px;height:1px;background:#4c5156;"></div>
<div style="left:703px;top:847.5px;width:9.8px;height:1px;background:#4c5156;"></div>
<div style="left:703px;top:877.8px;width:9.8px;height:1px;background:#4c5156;"></div>
<div style="left:666px;top:747.5px;width:31.5px;height:1px;background:#3b3f44;"></div>
<div style="left:666px;top:772px;width:31.5px;height:1px;background:#3b3f44;"></div>
<div style="left:666px;top:795.5px;width:31.5px;height:1px;background:#3b3f44;"></div>
<div style="left:666px;top:816px;width:31.5px;height:1px;background:#3b3f44;"></div>
<div style="left:666px;top:848px;width:31.5px;height:1px;background:#3b3f44;"></div>
<div style="left:666px;top:878px;width:31.5px;height:1px;background:#3b3f44;"></div>
<div style="left:666px;top:772px;width:31.5px;height:1.2px;background:#c9ccd0;"></div>
<div style="left:671px;top:755px;width:21px;height:1px;background:rgba(150,155,160,0.16);"></div>
<div style="left:671px;top:758px;width:21px;height:1px;background:rgba(150,155,160,0.16);"></div>
<div style="left:671px;top:761px;width:21px;height:1px;background:rgba(150,155,160,0.16);"></div>
<div style="left:671px;top:764px;width:21px;height:1px;background:rgba(150,155,160,0.16);"></div>
<div style="left:671px;top:767px;width:21px;height:1px;background:rgba(150,155,160,0.16);"></div>
<div style="left:671px;top:770px;width:21px;height:1px;background:rgba(150,155,160,0.16);"></div>
<div style="left:671px;top:773px;width:21px;height:1px;background:rgba(150,155,160,0.16);"></div>
<div style="left:671px;top:776px;width:21px;height:1px;background:rgba(150,155,160,0.16);"></div>
<div style="left:671px;top:779px;width:21px;height:1px;background:rgba(150,155,160,0.16);"></div>
<div style="left:671px;top:782px;width:21px;height:1px;background:rgba(150,155,160,0.16);"></div>
<div style="left:671px;top:785px;width:21px;height:1px;background:rgba(150,155,160,0.16);"></div>
<div style="left:671px;top:788px;width:21px;height:1px;background:rgba(150,155,160,0.16);"></div>
<svg style="left:669px;top:751px;" width="25" height="40" viewBox="0 0 25 40"><path d="M0.5 5V0.5h6M24.500 5V0.5h-6M0.5 34.5v4.500h6M24.5 34.5v4.500h-6" fill="none" stroke="#6c7176" stroke-width="1"/></svg>
<div style="left:679px;top:736px;width:5px;height:144px;background:linear-gradient(90deg,#0e0f11,#17191c);border-radius:2.5px;"></div>
<svg style="left:671.5px;top:790px;filter:drop-shadow(0 1px 1px rgba(0,0,0,.6));" width="19" height="33.5" viewBox="0 0 19 33.5"><rect x="0" y="0" width="19" height="33.5" rx="1.5" fill="url(#fh)"/><rect x="0" y="0" width="1.2" height="33.5" fill="#8b9096" opacity="0.7"/><rect x="17.8" y="0" width="1.2" height="33.5" fill="#8b9096" opacity="0.7"/></svg>
<div style="left:716px;top:819px;width:4.5px;height:59.5px;background:#a3e01a;"></div>
<div style="left:722px;top:828px;width:4.5px;height:50.5px;background:#a3e01a;"></div>
<div style="left:716px;top:813.5px;width:4.5px;height:1.6px;background:#b6ea2a;"></div>
<div style="left:722px;top:823.5px;width:4.5px;height:1.6px;background:#b6ea2a;"></div>
<div class="t" style="left:694px;top:885.5px;font-size:11px;color:#eef0f2;width:29.5px;text-align:right;letter-spacing:-0.4px;">-17.1</div>
<div style="left:697.2px;top:917.8px;width:19px;height:13px;background:#4b5056;box-shadow:inset 0 0 0 1px #2c3034;"></div>
<div class="t" style="left:697.2px;top:919px;font-size:11.5px;color:#e8eaec;width:19px;text-align:center;letter-spacing:-0.4px;">FX</div>
<div style="left:717.2px;top:917.8px;width:12px;height:13px;background:#4b5056;box-shadow:inset 0 0 0 1px #2c3034;"></div>
<svg style="left:720.2px;top:923px;" width="6" height="3.5" viewBox="0 0 6 3.5"><path d="M0 0h6l-3.0 3.5z" fill="#e8eaec"/></svg>
<div style="left:664px;top:951px;width:68px;height:20px;background:#25292e;"></div>
<div style="left:666.2px;top:953.5px;width:63.8px;height:13px;background:#44494f;box-shadow:inset 0 0 0 1px #1e2124;"></div>
<div style="left:733px;top:610px;width:69px;height:323px;background:#25292e;"></div>
<div style="left:801px;top:610px;width:1.2px;height:361px;background:#181b1e;"></div>
<div style="left:733px;top:610px;width:68px;height:40px;background:#22262a;"></div>
<div style="left:768px;top:619px;width:29.5px;height:26.5px;background:#15171a;"></div>
<svg style="left:738.3px;top:614.5px;" width="33" height="33" viewBox="0 0 33 33"><circle cx="16.5" cy="17.0" r="15.4" fill="#17191c"/><circle cx="16.5" cy="16.5" r="14.5" fill="url(#kb)"/><circle cx="16.5" cy="16.5" r="12.1" fill="url(#kg)"/><path d="M16.5 3.7A12.8 12.8 0 0 1 27.2 9.5" fill="none" stroke="#f2462e" stroke-width="1.7"/><path d="M17.3 16.0L27.2 9.5" stroke="#f2462e" stroke-width="1.6"/></svg>
<div class="t" style="left:770px;top:621px;font-size:11px;color:#c9ccd0;width:28px;text-align:center;letter-spacing:-0.2px;">4.1</div>
<div style="left:782px;top:634.3px;width:15px;height:10.8px;background:#4a4f55;"></div>
<div class="t" style="left:782px;top:634.5px;font-size:10px;color:#e6e8ea;width:15.5px;text-align:center;">φ</div>
<div style="left:733px;top:651px;width:51.8px;height:14px;background:#5c6670;"></div>
<div class="t" style="left:733px;top:653px;font-size:10.5px;color:#dfe6ee;width:52px;text-align:center;">6</div>
<div style="left:785.8px;top:651px;width:15.2px;height:14px;background:#494e54;"></div>
<svg style="left:788.8px;top:653.5px;" width="9" height="9" viewBox="0 0 9 9"><circle cx="4.5" cy="4.5" r="3.3" fill="none" stroke="#e4e6e8" stroke-width="1.1"/><circle cx="4.500" cy="4.500" r="1.2" fill="#e4e6e8"/></svg>
<div style="left:737.8px;top:672px;width:25.2px;height:18.2px;background:#86c5f5;"></div>
<div class="t" style="left:737.8px;top:676px;font-size:12px;color:#10202e;width:25.2px;text-align:center;letter-spacing:-0.3px;">Rd</div>
<div style="left:770.7px;top:672px;width:25.5px;height:18.2px;background:#464b50;box-shadow:inset 0 0 0 1px #34383c;"></div>
<div class="t" style="left:770.7px;top:673.6px;font-size:15.5px;color:#e4e6e8;width:25.5px;text-align:center;">S</div>
<div style="left:737.8px;top:696.8px;width:25.2px;height:18.4px;background:#464b50;box-shadow:inset 0 0 0 1px #34383c;"></div>
<div style="left:746px;top:701.6px;width:8.8px;height:8.8px;background:#d03540;border-radius:50%;filter:blur(0.3px);"></div>
<div style="left:770.7px;top:696.8px;width:25.5px;height:18.4px;background:#464b50;box-shadow:inset 0 0 0 1px #34383c;"></div>
<div class="t" style="left:770.7px;top:698.4px;font-size:15.5px;color:#e4e6e8;width:25.5px;text-align:center;">M</div>
<div style="left:770px;top:722px;width:27.3px;height:158px;background:linear-gradient(#111316,#15171a 90%,#1d2024);"></div>
<div style="left:770px;top:742.5px;width:27.3px;height:1px;background:#2b2f33;"></div>
<svg style="left:779.5px;top:726px;" width="9" height="11.7" viewBox="0 0 9 11.7"><path d="M0 3.15h2.9699999999999998L7.74 0v11.700000000000001L2.9699999999999998 8.55H0z" fill="#cfd1d3"/><path d="M7.74 0v11.700000000000001" stroke="#cfd1d3" stroke-width="1.08"/></svg>
<div class="t" style="left:769px;top:747.5px;font-size:9.5px;color:#e6e8ea;width:14px;text-align:right;letter-spacing:-0.5px;">12</div>
<div class="t" style="left:769px;top:760.5px;font-size:9.5px;color:#e6e8ea;width:14px;text-align:right;letter-spacing:-0.5px;">0</div>
<div class="t" style="left:769px;top:783.5px;font-size:9.5px;color:#e6e8ea;width:14px;text-align:right;letter-spacing:-0.5px;">10</div>
<div class="t" style="left:769px;top:804.5px;font-size:9.5px;color:#e6e8ea;width:14px;text-align:right;letter-spacing:-0.5px;">20</div>
<div class="t" style="left:769px;top:835.5px;font-size:9.5px;color:#e6e8ea;width:14px;text-align:right;letter-spacing:-0.5px;">40</div>
<div class="t" style="left:769px;top:866.5px;font-size:9.5px;color:#e6e8ea;width:14px;text-align:right;letter-spacing:-0.5px;">80</div>
<div style="left:772px;top:746px;width:9.8px;height:1px;background:#4c5156;"></div>
<div style="left:772px;top:771.5px;width:9.8px;height:1px;background:#4c5156;"></div>
<div style="left:772px;top:794.8px;width:9.8px;height:1px;background:#4c5156;"></div>
<div style="left:772px;top:815.5px;width:9.8px;height:1px;background:#4c5156;"></div>
<div style="left:772px;top:847.5px;width:9.8px;height:1px;background:#4c5156;"></div>
<div style="left:772px;top:877.8px;width:9.8px;height:1px;background:#4c5156;"></div>
<div style="left:735px;top:747.5px;width:31.5px;height:1px;background:#3b3f44;"></div>
<div style="left:735px;top:772px;width:31.5px;height:1px;background:#3b3f44;"></div>
<div style="left:735px;top:795.5px;width:31.5px;height:1px;background:#3b3f44;"></div>
<div style="left:735px;top:816px;width:31.5px;height:1px;background:#3b3f44;"></div>
<div style="left:735px;top:848px;width:31.5px;height:1px;background:#3b3f44;"></div>
<div style="left:735px;top:878px;width:31.5px;height:1px;background:#3b3f44;"></div>
<div style="left:735px;top:772px;width:31.5px;height:1.2px;background:#c9ccd0;"></div>
<div style="left:740px;top:755px;width:21px;height:1px;background:rgba(150,155,160,0.16);"></div>
<div style="left:740px;top:758px;width:21px;height:1px;background:rgba(150,155,160,0.16);"></div>
<div style="left:740px;top:761px;width:21px;height:1px;background:rgba(150,155,160,0.16);"></div>
<div style="left:740px;top:764px;width:21px;height:1px;background:rgba(150,155,160,0.16);"></div>
<div style="left:740px;top:767px;width:21px;height:1px;background:rgba(150,155,160,0.16);"></div>
<div style="left:740px;top:770px;width:21px;height:1px;background:rgba(150,155,160,0.16);"></div>
<div style="left:740px;top:773px;width:21px;height:1px;background:rgba(150,155,160,0.16);"></div>
<div style="left:740px;top:776px;width:21px;height:1px;background:rgba(150,155,160,0.16);"></div>
<div style="left:740px;top:779px;width:21px;height:1px;background:rgba(150,155,160,0.16);"></div>
<div style="left:740px;top:782px;width:21px;height:1px;background:rgba(150,155,160,0.16);"></div>
<div style="left:740px;top:785px;width:21px;height:1px;background:rgba(150,155,160,0.16);"></div>
<div style="left:740px;top:788px;width:21px;height:1px;background:rgba(150,155,160,0.16);"></div>
<svg style="left:738px;top:751px;" width="25" height="40" viewBox="0 0 25 40"><path d="M0.5 5V0.5h6M24.500 5V0.5h-6M0.5 34.5v4.500h6M24.5 34.5v4.500h-6" fill="none" stroke="#6c7176" stroke-width="1"/></svg>
<div style="left:748px;top:736px;width:5px;height:144px;background:linear-gradient(90deg,#0e0f11,#17191c);border-radius:2.5px;"></div>
<svg style="left:740.5px;top:775.8px;filter:drop-shadow(0 1px 1px rgba(0,0,0,.6));" width="19" height="33.5" viewBox="0 0 19 33.5"><rect x="0" y="0" width="19" height="33.5" rx="1.5" fill="url(#fh)"/><rect x="0" y="0" width="1.2" height="33.5" fill="#8b9096" opacity="0.7"/><rect x="17.8" y="0" width="1.2" height="33.5" fill="#8b9096" opacity="0.7"/></svg>
<div style="left:785px;top:809.4px;width:4.5px;height:69.1px;background:#a3e01a;"></div>
<div style="left:791px;top:804px;width:4.5px;height:74.5px;background:#a3e01a;"></div>
<div style="left:785px;top:809px;width:4.5px;height:1.6px;background:#b6ea2a;"></div>
<div style="left:791px;top:800px;width:4.5px;height:1.6px;background:#b6ea2a;"></div>
<div class="t" style="left:763px;top:885.5px;font-size:11px;color:#eef0f2;width:29.5px;text-align:right;letter-spacing:-0.4px;">-9.7</div>
<div style="left:766.2px;top:917.8px;width:19px;height:13px;background:#4b5056;box-shadow:inset 0 0 0 1px #2c3034;"></div>
<div class="t" style="left:766.2px;top:919px;font-size:11.5px;color:#e8eaec;width:19px;text-align:center;letter-spacing:-0.4px;">FX</div>
<div style="left:786.2px;top:917.8px;width:12px;height:13px;background:#4b5056;box-shadow:inset 0 0 0 1px #2c3034;"></div>
<svg style="left:789.2px;top:923px;" width="6" height="3.5" viewBox="0 0 6 3.5"><path d="M0 0h6l-3.0 3.5z" fill="#e8eaec"/></svg>
<div style="left:733px;top:951px;width:68px;height:20px;background:#25292e;"></div>
<div style="left:735.2px;top:953.5px;width:63.8px;height:13px;background:#44494f;box-shadow:inset 0 0 0 1px #1e2124;"></div>
<div style="left:802px;top:610px;width:69px;height:323px;background:#25292e;"></div>
<div style="left:870px;top:610px;width:1.2px;height:361px;background:#181b1e;"></div>
<div style="left:802px;top:610px;width:68px;height:40px;background:#22262a;"></div>
<div style="left:837px;top:619px;width:29.5px;height:26.5px;background:#15171a;"></div>
<svg style="left:807.3px;top:614.5px;" width="33" height="33" viewBox="0 0 33 33"><circle cx="16.5" cy="17.0" r="15.4" fill="#17191c"/><circle cx="16.5" cy="16.5" r="14.5" fill="url(#kb)"/><circle cx="16.5" cy="16.5" r="12.1" fill="url(#kg)"/><path d="M16.5 15.0L16.5 3.1999999999999993" stroke="#2c3035" stroke-width="2.2"/></svg>
<div class="t" style="left:839px;top:621px;font-size:11px;color:#c9ccd0;width:28px;text-align:center;letter-spacing:-0.2px;">0.0*</div>
<div style="left:851px;top:634.3px;width:15px;height:10.8px;background:#4a4f55;"></div>
<div class="t" style="left:851px;top:634.5px;font-size:10px;color:#e6e8ea;width:15.5px;text-align:center;">φ</div>
<div style="left:802px;top:651px;width:51.8px;height:14px;background:#5c6670;"></div>
<div class="t" style="left:802px;top:653px;font-size:10.5px;color:#dfe6ee;width:52px;text-align:center;">7</div>
<div style="left:854.8px;top:651px;width:15.2px;height:14px;background:#494e54;"></div>
<svg style="left:857.8px;top:653.5px;" width="9" height="9" viewBox="0 0 9 9"><circle cx="4.5" cy="4.5" r="3.3" fill="none" stroke="#e4e6e8" stroke-width="1.1"/><circle cx="4.500" cy="4.500" r="1.2" fill="#e4e6e8"/></svg>
<div style="left:806.8px;top:672px;width:25.2px;height:18.2px;background:#86c5f5;"></div>
<div class="t" style="left:806.8px;top:676px;font-size:12px;color:#10202e;width:25.2px;text-align:center;letter-spacing:-0.3px;">Rd</div>
<div style="left:839.7px;top:672px;width:25.5px;height:18.2px;background:#464b50;box-shadow:inset 0 0 0 1px #34383c;"></div>
<div class="t" style="left:839.7px;top:673.6px;font-size:15.5px;color:#e4e6e8;width:25.5px;text-align:center;">S</div>
<div style="left:806.8px;top:696.8px;width:25.2px;height:18.4px;background:#464b50;box-shadow:inset 0 0 0 1px #34383c;"></div>
<div style="left:815px;top:701.6px;width:8.8px;height:8.8px;background:#d03540;border-radius:50%;filter:blur(0.3px);"></div>
<div style="left:839.7px;top:696.8px;width:25.5px;height:18.4px;background:#464b50;box-shadow:inset 0 0 0 1px #34383c;"></div>
<div class="t" style="left:839.7px;top:698.4px;font-size:15.5px;color:#e4e6e8;width:25.5px;text-align:center;">M</div>
<div style="left:839px;top:722px;width:27.3px;height:158px;background:linear-gradient(#111316,#15171a 90%,#1d2024);"></div>
<div style="left:839px;top:742.5px;width:27.3px;height:1px;background:#2b2f33;"></div>
<svg style="left:848.5px;top:726px;" width="9" height="11.7" viewBox="0 0 9 11.7"><path d="M0 3.15h2.9699999999999998L7.74 0v11.700000000000001L2.9699999999999998 8.55H0z" fill="#cfd1d3"/><path d="M7.74 0v11.700000000000001" stroke="#cfd1d3" stroke-width="1.08"/></svg>
<div class="t" style="left:838px;top:747.5px;font-size:9.5px;color:#e6e8ea;width:14px;text-align:right;letter-spacing:-0.5px;">12</div>
<div class="t" style="left:838px;top:760.5px;font-size:9.5px;color:#e6e8ea;width:14px;text-align:right;letter-spacing:-0.5px;">0</div>
<div class="t" style="left:838px;top:783.5px;font-size:9.5px;color:#e6e8ea;width:14px;text-align:right;letter-spacing:-0.5px;">10</div>
<div class="t" style="left:838px;top:804.5px;font-size:9.5px;color:#e6e8ea;width:14px;text-align:right;letter-spacing:-0.5px;">20</div>
<div class="t" style="left:838px;top:835.5px;font-size:9.5px;color:#e6e8ea;width:14px;text-align:right;letter-spacing:-0.5px;">40</div>
<div class="t" style="left:838px;top:866.5px;font-size:9.5px;color:#e6e8ea;width:14px;text-align:right;letter-spacing:-0.5px;">80</div>
<div style="left:841px;top:746px;width:9.8px;height:1px;background:#4c5156;"></div>
<div style="left:841px;top:771.5px;width:9.8px;height:1px;background:#4c5156;"></div>
<div style="left:841px;top:794.8px;width:9.8px;height:1px;background:#4c5156;"></div>
<div style="left:841px;top:815.5px;width:9.8px;height:1px;background:#4c5156;"></div>
<div style="left:841px;top:847.5px;width:9.8px;height:1px;background:#4c5156;"></div>
<div style="left:841px;top:877.8px;width:9.8px;height:1px;background:#4c5156;"></div>
<div style="left:804px;top:747.5px;width:31.5px;height:1px;background:#3b3f44;"></div>
<div style="left:804px;top:772px;width:31.5px;height:1px;background:#3b3f44;"></div>
<div style="left:804px;top:795.5px;width:31.5px;height:1px;background:#3b3f44;"></div>
<div style="left:804px;top:816px;width:31.5px;height:1px;background:#3b3f44;"></div>
<div style="left:804px;top:848px;width:31.5px;height:1px;background:#3b3f44;"></div>
<div style="left:804px;top:878px;width:31.5px;height:1px;background:#3b3f44;"></div>
<div style="left:804px;top:772px;width:31.5px;height:1.2px;background:#c9ccd0;"></div>
<div style="left:809px;top:755px;width:21px;height:1px;background:rgba(150,155,160,0.16);"></div>
<div style="left:809px;top:758px;width:21px;height:1px;background:rgba(150,155,160,0.16);"></div>
<div style="left:809px;top:761px;width:21px;height:1px;background:rgba(150,155,160,0.16);"></div>
<div style="left:809px;top:764px;width:21px;height:1px;background:rgba(150,155,160,0.16);"></div>
<div style="left:809px;top:767px;width:21px;height:1px;background:rgba(150,155,160,0.16);"></div>
<div style="left:809px;top:770px;width:21px;height:1px;background:rgba(150,155,160,0.16);"></div>
<div style="left:809px;top:773px;width:21px;height:1px;background:rgba(150,155,160,0.16);"></div>
<div style="left:809px;top:776px;width:21px;height:1px;background:rgba(150,155,160,0.16);"></div>
<div style="left:809px;top:779px;width:21px;height:1px;background:rgba(150,155,160,0.16);"></div>
<div style="left:809px;top:782px;width:21px;height:1px;background:rgba(150,155,160,0.16);"></div>
<div style="left:809px;top:785px;width:21px;height:1px;background:rgba(150,155,160,0.16);"></div>
<div style="left:809px;top:788px;width:21px;height:1px;background:rgba(150,155,160,0.16);"></div>
<svg style="left:807px;top:751px;" width="25" height="40" viewBox="0 0 25 40"><path d="M0.5 5V0.5h6M24.500 5V0.5h-6M0.5 34.5v4.500h6M24.5 34.5v4.500h-6" fill="none" stroke="#6c7176" stroke-width="1"/></svg>
<div style="left:817px;top:736px;width:5px;height:144px;background:linear-gradient(90deg,#0e0f11,#17191c);border-radius:2.5px;"></div>
<svg style="left:809.5px;top:796.6px;filter:drop-shadow(0 1px 1px rgba(0,0,0,.6));" width="19" height="33.5" viewBox="0 0 19 33.5"><rect x="0" y="0" width="19" height="33.5" rx="1.5" fill="url(#fh)"/><rect x="0" y="0" width="1.2" height="33.5" fill="#8b9096" opacity="0.7"/><rect x="17.8" y="0" width="1.2" height="33.5" fill="#8b9096" opacity="0.7"/></svg>
<div class="t" style="left:832px;top:885.5px;font-size:11px;color:#eef0f2;width:29.5px;text-align:right;letter-spacing:-0.4px;">-20.2</div>
<div style="left:835.2px;top:917.8px;width:19px;height:13px;background:#4b5056;box-shadow:inset 0 0 0 1px #2c3034;"></div>
<div class="t" style="left:835.2px;top:919px;font-size:11.5px;color:#e8eaec;width:19px;text-align:center;letter-spacing:-0.4px;">FX</div>
<div style="left:855.2px;top:917.8px;width:12px;height:13px;background:#4b5056;box-shadow:inset 0 0 0 1px #2c3034;"></div>
<svg style="left:858.2px;top:923px;" width="6" height="3.5" viewBox="0 0 6 3.5"><path d="M0 0h6l-3.0 3.5z" fill="#e8eaec"/></svg>
<div style="left:802px;top:951px;width:68px;height:20px;background:#25292e;"></div>
<div style="left:804.2px;top:953.5px;width:63.8px;height:13px;background:#44494f;box-shadow:inset 0 0 0 1px #1e2124;"></div>
<div style="left:871px;top:610px;width:69px;height:323px;background:#25292e;"></div>
<div style="left:939px;top:610px;width:1.2px;height:361px;background:#181b1e;"></div>
<div style="left:871px;top:610px;width:68px;height:40px;background:#22262a;"></div>
<div style="left:906px;top:619px;width:29.5px;height:26.5px;background:#15171a;"></div>
<svg style="left:876.3px;top:614.5px;" width="33" height="33" viewBox="0 0 33 33"><circle cx="16.5" cy="17.0" r="15.4" fill="#17191c"/><circle cx="16.5" cy="16.5" r="14.5" fill="url(#kb)"/><circle cx="16.5" cy="16.5" r="12.1" fill="url(#kg)"/><path d="M16.5 15.0L16.5 3.1999999999999993" stroke="#2c3035" stroke-width="2.2"/></svg>
<div class="t" style="left:908px;top:621px;font-size:11px;color:#c9ccd0;width:28px;text-align:center;letter-spacing:-0.2px;">0.0*</div>
<div style="left:920px;top:634.3px;width:15px;height:10.8px;background:#4a4f55;"></div>
<div class="t" style="left:920px;top:634.5px;font-size:10px;color:#e6e8ea;width:15.5px;text-align:center;">φ</div>
<div style="left:871px;top:651px;width:51.8px;height:14px;background:#5c6670;"></div>
<div class="t" style="left:871px;top:653px;font-size:10.5px;color:#dfe6ee;width:52px;text-align:center;">8</div>
<div style="left:923.8px;top:651px;width:15.2px;height:14px;background:#494e54;"></div>
<svg style="left:926.8px;top:653.5px;" width="9" height="9" viewBox="0 0 9 9"><circle cx="4.5" cy="4.5" r="3.3" fill="none" stroke="#e4e6e8" stroke-width="1.1"/><circle cx="4.500" cy="4.500" r="1.2" fill="#e4e6e8"/></svg>
<div style="left:875.8px;top:672px;width:25.2px;height:18.2px;background:#86c5f5;"></div>
<div class="t" style="left:875.8px;top:676px;font-size:12px;color:#10202e;width:25.2px;text-align:center;letter-spacing:-0.3px;">Rd</div>
<div style="left:908.7px;top:672px;width:25.5px;height:18.2px;background:#464b50;box-shadow:inset 0 0 0 1px #34383c;"></div>
<div class="t" style="left:908.7px;top:673.6px;font-size:15.5px;color:#e4e6e8;width:25.5px;text-align:center;">S</div>
<div style="left:875.8px;top:696.8px;width:25.2px;height:18.4px;background:#464b50;box-shadow:inset 0 0 0 1px #34383c;"></div>
<div style="left:884px;top:701.6px;width:8.8px;height:8.8px;background:#d03540;border-radius:50%;filter:blur(0.3px);"></div>
<div style="left:908.7px;top:696.8px;width:25.5px;height:18.4px;background:#464b50;box-shadow:inset 0 0 0 1px #34383c;"></div>
<div class="t" style="left:908.7px;top:698.4px;font-size:15.5px;color:#e4e6e8;width:25.5px;text-align:center;">M</div>
<div style="left:908px;top:722px;width:27.3px;height:158px;background:linear-gradient(#111316,#15171a 90%,#1d2024);"></div>
<div style="left:908px;top:742.5px;width:27.3px;height:1px;background:#2b2f33;"></div>
<svg style="left:917.5px;top:726px;" width="9" height="11.7" viewBox="0 0 9 11.7"><path d="M0 3.15h2.9699999999999998L7.74 0v11.700000000000001L2.9699999999999998 8.55H0z" fill="#cfd1d3"/><path d="M7.74 0v11.700000000000001" stroke="#cfd1d3" stroke-width="1.08"/></svg>
<div class="t" style="left:907px;top:747.5px;font-size:9.5px;color:#e6e8ea;width:14px;text-align:right;letter-spacing:-0.5px;">12</div>
<div class="t" style="left:907px;top:760.5px;font-size:9.5px;color:#e6e8ea;width:14px;text-align:right;letter-spacing:-0.5px;">0</div>
<div class="t" style="left:907px;top:783.5px;font-size:9.5px;color:#e6e8ea;width:14px;text-align:right;letter-spacing:-0.5px;">10</div>
<div class="t" style="left:907px;top:804.5px;font-size:9.5px;color:#e6e8ea;width:14px;text-align:right;letter-spacing:-0.5px;">20</div>
<div class="t" style="left:907px;top:835.5px;font-size:9.5px;color:#e6e8ea;width:14px;text-align:right;letter-spacing:-0.5px;">40</div>
<div class="t" style="left:907px;top:866.5px;font-size:9.5px;color:#e6e8ea;width:14px;text-align:right;letter-spacing:-0.5px;">80</div>
<div style="left:910px;top:746px;width:9.8px;height:1px;background:#4c5156;"></div>
<div style="left:910px;top:771.5px;width:9.8px;height:1px;background:#4c5156;"></div>
<div style="left:910px;top:794.8px;width:9.8px;height:1px;background:#4c5156;"></div>
<div style="left:910px;top:815.5px;width:9.8px;height:1px;background:#4c5156;"></div>
<div style="left:910px;top:847.5px;width:9.8px;height:1px;background:#4c5156;"></div>
<div style="left:910px;top:877.8px;width:9.8px;height:1px;background:#4c5156;"></div>
<div style="left:873px;top:747.5px;width:31.5px;height:1px;background:#3b3f44;"></div>
<div style="left:873px;top:772px;width:31.5px;height:1px;background:#3b3f44;"></div>
<div style="left:873px;top:795.5px;width:31.5px;height:1px;background:#3b3f44;"></div>
<div style="left:873px;top:816px;width:31.5px;height:1px;background:#3b3f44;"></div>
<div style="left:873px;top:848px;width:31.5px;height:1px;background:#3b3f44;"></div>
<div style="left:873px;top:878px;width:31.5px;height:1px;background:#3b3f44;"></div>
<div style="left:873px;top:772px;width:31.5px;height:1.2px;background:#c9ccd0;"></div>
<div style="left:878px;top:755px;width:21px;height:1px;background:rgba(150,155,160,0.16);"></div>
<div style="left:878px;top:758px;width:21px;height:1px;background:rgba(150,155,160,0.16);"></div>
<div style="left:878px;top:761px;width:21px;height:1px;background:rgba(150,155,160,0.16);"></div>
<div style="left:878px;top:764px;width:21px;height:1px;background:rgba(150,155,160,0.16);"></div>
<div style="left:878px;top:767px;width:21px;height:1px;background:rgba(150,155,160,0.16);"></div>
<div style="left:878px;top:770px;width:21px;height:1px;background:rgba(150,155,160,0.16);"></div>
<div style="left:878px;top:773px;width:21px;height:1px;background:rgba(150,155,160,0.16);"></div>
<div style="left:878px;top:776px;width:21px;height:1px;background:rgba(150,155,160,0.16);"></div>
<div style="left:878px;top:779px;width:21px;height:1px;background:rgba(150,155,160,0.16);"></div>
<div style="left:878px;top:782px;width:21px;height:1px;background:rgba(150,155,160,0.16);"></div>
<div style="left:878px;top:785px;width:21px;height:1px;background:rgba(150,155,160,0.16);"></div>
<div style="left:878px;top:788px;width:21px;height:1px;background:rgba(150,155,160,0.16);"></div>
<svg style="left:876px;top:751px;" width="25" height="40" viewBox="0 0 25 40"><path d="M0.5 5V0.5h6M24.500 5V0.5h-6M0.5 34.5v4.500h6M24.5 34.5v4.500h-6" fill="none" stroke="#6c7176" stroke-width="1"/></svg>
<div style="left:886px;top:736px;width:5px;height:144px;background:linear-gradient(90deg,#0e0f11,#17191c);border-radius:2.5px;"></div>
<svg style="left:878.5px;top:755.7px;filter:drop-shadow(0 1px 1px rgba(0,0,0,.6));" width="19" height="33.5" viewBox="0 0 19 33.5"><rect x="0" y="0" width="19" height="33.5" rx="1.5" fill="url(#fh)"/><rect x="0" y="0" width="1.2" height="33.5" fill="#8b9096" opacity="0.7"/><rect x="17.8" y="0" width="1.2" height="33.5" fill="#8b9096" opacity="0.7"/></svg>
<div style="left:923px;top:806px;width:4.5px;height:72.5px;background:#a3e01a;"></div>
<div style="left:929px;top:806px;width:4.5px;height:72.5px;background:#a3e01a;"></div>
<div class="t" style="left:901px;top:885.5px;font-size:11px;color:#eef0f2;width:29.5px;text-align:right;letter-spacing:-0.4px;">0.0</div>
<div style="left:904.2px;top:917.8px;width:19px;height:13px;background:#4b5056;box-shadow:inset 0 0 0 1px #2c3034;"></div>
<div class="t" style="left:904.2px;top:919px;font-size:11.5px;color:#e8eaec;width:19px;text-align:center;letter-spacing:-0.4px;">FX</div>
<div style="left:924.2px;top:917.8px;width:12px;height:13px;background:#4b5056;box-shadow:inset 0 0 0 1px #2c3034;"></div>
<svg style="left:927.2px;top:923px;" width="6" height="3.5" viewBox="0 0 6 3.5"><path d="M0 0h6l-3.0 3.5z" fill="#e8eaec"/></svg>
<div style="left:871px;top:951px;width:68px;height:20px;background:#25292e;"></div>
<div style="left:873.2px;top:953.5px;width:63.8px;height:13px;background:#44494f;box-shadow:inset 0 0 0 1px #1e2124;"></div>
<div style="left:940px;top:610px;width:69px;height:323px;background:#25292e;"></div>
<div style="left:1008px;top:610px;width:1.2px;height:361px;background:#181b1e;"></div>
<div style="left:940px;top:610px;width:68px;height:40px;background:#22262a;"></div>
<div style="left:975px;top:619px;width:29.5px;height:26.5px;background:#15171a;"></div>
<svg style="left:945.3px;top:614.5px;" width="33" height="33" viewBox="0 0 33 33"><circle cx="16.5" cy="17.0" r="15.4" fill="#17191c"/><circle cx="16.5" cy="16.5" r="14.5" fill="url(#kb)"/><circle cx="16.5" cy="16.5" r="12.1" fill="url(#kg)"/><path d="M16.5 15.0L16.5 3.1999999999999993" stroke="#2c3035" stroke-width="2.2"/></svg>
<div class="t" style="left:977px;top:621px;font-size:11px;color:#c9ccd0;width:28px;text-align:center;letter-spacing:-0.2px;">0.0*</div>
<div style="left:989px;top:634.3px;width:15px;height:10.8px;background:#4a4f55;"></div>
<div class="t" style="left:989px;top:634.5px;font-size:10px;color:#e6e8ea;width:15.5px;text-align:center;">φ</div>
<div style="left:940px;top:651px;width:51.8px;height:14px;background:#5c6670;"></div>
<div class="t" style="left:940px;top:653px;font-size:10.5px;color:#dfe6ee;width:52px;text-align:center;">9</div>
<div style="left:992.8px;top:651px;width:15.2px;height:14px;background:#494e54;"></div>
<svg style="left:995.8px;top:653.5px;" width="9" height="9" viewBox="0 0 9 9"><circle cx="4.5" cy="4.5" r="3.3" fill="none" stroke="#e4e6e8" stroke-width="1.1"/><circle cx="4.500" cy="4.500" r="1.2" fill="#e4e6e8"/></svg>
<div style="left:944.8px;top:672px;width:25.2px;height:18.2px;background:#86c5f5;"></div>
<div class="t" style="left:944.8px;top:676px;font-size:12px;color:#10202e;width:25.2px;text-align:center;letter-spacing:-0.3px;">Rd</div>
<div style="left:977.7px;top:672px;width:25.5px;height:18.2px;background:#464b50;box-shadow:inset 0 0 0 1px #34383c;"></div>
<div class="t" style="left:977.7px;top:673.6px;font-size:15.5px;color:#e4e6e8;width:25.5px;text-align:center;">S</div>
<div style="left:944.8px;top:696.8px;width:25.2px;height:18.4px;background:#464b50;box-shadow:inset 0 0 0 1px #34383c;"></div>
<div style="left:953px;top:701.6px;width:8.8px;height:8.8px;background:#d03540;border-radius:50%;filter:blur(0.3px);"></div>
<div style="left:977.7px;top:696.8px;width:25.5px;height:18.4px;background:#464b50;box-shadow:inset 0 0 0 1px #34383c;"></div>
<div class="t" style="left:977.7px;top:698.4px;font-size:15.5px;color:#e4e6e8;width:25.5px;text-align:center;">M</div>
<div style="left:977px;top:722px;width:27.3px;height:158px;background:linear-gradient(#111316,#15171a 90%,#1d2024);"></div>
<div style="left:977px;top:742.5px;width:27.3px;height:1px;background:#2b2f33;"></div>
<svg style="left:986.5px;top:726px;" width="9" height="11.7" viewBox="0 0 9 11.7"><path d="M0 3.15h2.9699999999999998L7.74 0v11.700000000000001L2.9699999999999998 8.55H0z" fill="#cfd1d3"/><path d="M7.74 0v11.700000000000001" stroke="#cfd1d3" stroke-width="1.08"/></svg>
<div class="t" style="left:976px;top:747.5px;font-size:9.5px;color:#e6e8ea;width:14px;text-align:right;letter-spacing:-0.5px;">12</div>
<div class="t" style="left:976px;top:760.5px;font-size:9.5px;color:#e6e8ea;width:14px;text-align:right;letter-spacing:-0.5px;">0</div>
<div class="t" style="left:976px;top:783.5px;font-size:9.5px;color:#e6e8ea;width:14px;text-align:right;letter-spacing:-0.5px;">10</div>
<div class="t" style="left:976px;top:804.5px;font-size:9.5px;color:#e6e8ea;width:14px;text-align:right;letter-spacing:-0.5px;">20</div>
<div class="t" style="left:976px;top:835.5px;font-size:9.5px;color:#e6e8ea;width:14px;text-align:right;letter-spacing:-0.5px;">40</div>
<div class="t" style="left:976px;top:866.5px;font-size:9.5px;color:#e6e8ea;width:14px;text-align:right;letter-spacing:-0.5px;">80</div>
<div style="left:979px;top:746px;width:9.8px;height:1px;background:#4c5156;"></div>
<div style="left:979px;top:771.5px;width:9.8px;height:1px;background:#4c5156;"></div>
<div style="left:979px;top:794.8px;width:9.8px;height:1px;background:#4c5156;"></div>
<div style="left:979px;top:815.5px;width:9.8px;height:1px;background:#4c5156;"></div>
<div style="left:979px;top:847.5px;width:9.8px;height:1px;background:#4c5156;"></div>
<div style="left:979px;top:877.8px;width:9.8px;height:1px;background:#4c5156;"></div>
<div style="left:942px;top:747.5px;width:31.5px;height:1px;background:#3b3f44;"></div>
<div style="left:942px;top:772px;width:31.5px;height:1px;background:#3b3f44;"></div>
<div style="left:942px;top:795.5px;width:31.5px;height:1px;background:#3b3f44;"></div>
<div style="left:942px;top:816px;width:31.5px;height:1px;background:#3b3f44;"></div>
<div style="left:942px;top:848px;width:31.5px;height:1px;background:#3b3f44;"></div>
<div style="left:942px;top:878px;width:31.5px;height:1px;background:#3b3f44;"></div>
<div style="left:942px;top:772px;width:31.5px;height:1.2px;background:#c9ccd0;"></div>
<div style="left:947px;top:755px;width:21px;height:1px;background:rgba(150,155,160,0.16);"></div>
<div style="left:947px;top:758px;width:21px;height:1px;background:rgba(150,155,160,0.16);"></div>
<div style="left:947px;top:761px;width:21px;height:1px;background:rgba(150,155,160,0.16);"></div>
<div style="left:947px;top:764px;width:21px;height:1px;background:rgba(150,155,160,0.16);"></div>
<div style="left:947px;top:767px;width:21px;height:1px;background:rgba(150,155,160,0.16);"></div>
<div style="left:947px;top:770px;width:21px;height:1px;background:rgba(150,155,160,0.16);"></div>
<div style="left:947px;top:773px;width:21px;height:1px;background:rgba(150,155,160,0.16);"></div>
<div style="left:947px;top:776px;width:21px;height:1px;background:rgba(150,155,160,0.16);"></div>
<div style="left:947px;top:779px;width:21px;height:1px;background:rgba(150,155,160,0.16);"></div>
<div style="left:947px;top:782px;width:21px;height:1px;background:rgba(150,155,160,0.16);"></div>
<div style="left:947px;top:785px;width:21px;height:1px;background:rgba(150,155,160,0.16);"></div>
<div style="left:947px;top:788px;width:21px;height:1px;background:rgba(150,155,160,0.16);"></div>
<svg style="left:945px;top:751px;" width="25" height="40" viewBox="0 0 25 40"><path d="M0.5 5V0.5h6M24.500 5V0.5h-6M0.5 34.5v4.500h6M24.5 34.5v4.500h-6" fill="none" stroke="#6c7176" stroke-width="1"/></svg>
<div style="left:955px;top:736px;width:5px;height:144px;background:linear-gradient(90deg,#0e0f11,#17191c);border-radius:2.5px;"></div>
<svg style="left:947.5px;top:782px;filter:drop-shadow(0 1px 1px rgba(0,0,0,.6));" width="19" height="33.5" viewBox="0 0 19 33.5"><rect x="0" y="0" width="19" height="33.5" rx="1.5" fill="url(#fh)"/><rect x="0" y="0" width="1.2" height="33.5" fill="#8b9096" opacity="0.7"/><rect x="17.8" y="0" width="1.2" height="33.5" fill="#8b9096" opacity="0.7"/></svg>
<div class="t" style="left:970px;top:885.5px;font-size:11px;color:#eef0f2;width:29.5px;text-align:right;letter-spacing:-0.4px;">-12.5</div>
<div style="left:973.2px;top:917.8px;width:19px;height:13px;background:#4b5056;box-shadow:inset 0 0 0 1px #2c3034;"></div>
<div class="t" style="left:973.2px;top:919px;font-size:11.5px;color:#e8eaec;width:19px;text-align:center;letter-spacing:-0.4px;">FX</div>
<div style="left:993.2px;top:917.8px;width:12px;height:13px;background:#4b5056;box-shadow:inset 0 0 0 1px #2c3034;"></div>
<svg style="left:996.2px;top:923px;" width="6" height="3.5" viewBox="0 0 6 3.5"><path d="M0 0h6l-3.0 3.5z" fill="#e8eaec"/></svg>
<div style="left:940px;top:951px;width:68px;height:20px;background:#25292e;"></div>
<div style="left:942.2px;top:953.5px;width:63.8px;height:13px;background:#44494f;box-shadow:inset 0 0 0 1px #1e2124;"></div>
<div style="left:1009px;top:610px;width:69px;height:323px;background:#25292e;"></div>
<div style="left:1077px;top:610px;width:1.2px;height:361px;background:#181b1e;"></div>
<div style="left:1009px;top:610px;width:68px;height:40px;background:#22262a;"></div>
<div style="left:1044px;top:619px;width:29.5px;height:26.5px;background:#15171a;"></div>
<svg style="left:1014.3px;top:614.5px;" width="33" height="33" viewBox="0 0 33 33"><circle cx="16.5" cy="17.0" r="15.4" fill="#17191c"/><circle cx="16.5" cy="16.5" r="14.5" fill="url(#kb)"/><circle cx="16.5" cy="16.5" r="12.1" fill="url(#kg)"/><path d="M16.5 15.0L16.5 3.1999999999999993" stroke="#2c3035" stroke-width="2.2"/></svg>
<div class="t" style="left:1046px;top:621px;font-size:11px;color:#c9ccd0;width:28px;text-align:center;letter-spacing:-0.2px;">0.0*</div>
<div style="left:1058px;top:634.3px;width:15px;height:10.8px;background:#4a4f55;"></div>
<div class="t" style="left:1058px;top:634.5px;font-size:10px;color:#e6e8ea;width:15.5px;text-align:center;">φ</div>
<div style="left:1009px;top:651px;width:51.8px;height:14px;background:#5c6670;"></div>
<div class="t" style="left:1009px;top:653px;font-size:10.5px;color:#dfe6ee;width:52px;text-align:center;">10</div>
<div style="left:1061.8px;top:651px;width:15.2px;height:14px;background:#494e54;"></div>
<svg style="left:1064.8px;top:653.5px;" width="9" height="9" viewBox="0 0 9 9"><circle cx="4.5" cy="4.5" r="3.3" fill="none" stroke="#e4e6e8" stroke-width="1.1"/><circle cx="4.500" cy="4.500" r="1.2" fill="#e4e6e8"/></svg>
<div style="left:1013.8px;top:672px;width:25.2px;height:18.2px;background:#86c5f5;"></div>
<div class="t" style="left:1013.8px;top:676px;font-size:12px;color:#10202e;width:25.2px;text-align:center;letter-spacing:-0.3px;">Rd</div>
<div style="left:1046.7px;top:672px;width:25.5px;height:18.2px;background:#464b50;box-shadow:inset 0 0 0 1px #34383c;"></div>
<div class="t" style="left:1046.7px;top:673.6px;font-size:15.5px;color:#e4e6e8;width:25.5px;text-align:center;">S</div>
<div style="left:1013.8px;top:696.8px;width:25.2px;height:18.4px;background:#464b50;box-shadow:inset 0 0 0 1px #34383c;"></div>
<div style="left:1022px;top:701.6px;width:8.8px;height:8.8px;background:#d03540;border-radius:50%;filter:blur(0.3px);"></div>
<div style="left:1046.7px;top:696.8px;width:25.5px;height:18.4px;background:#464b50;box-shadow:inset 0 0 0 1px #34383c;"></div>
<div class="t" style="left:1046.7px;top:698.4px;font-size:15.5px;color:#e4e6e8;width:25.5px;text-align:center;">M</div>
<div style="left:1046px;top:722px;width:27.3px;height:158px;background:linear-gradient(#111316,#15171a 90%,#1d2024);"></div>
<div style="left:1046px;top:742.5px;width:27.3px;height:1px;background:#2b2f33;"></div>
<svg style="left:1055.5px;top:726px;" width="9" height="11.7" viewBox="0 0 9 11.7"><path d="M0 3.15h2.9699999999999998L7.74 0v11.700000000000001L2.9699999999999998 8.55H0z" fill="#cfd1d3"/><path d="M7.74 0v11.700000000000001" stroke="#cfd1d3" stroke-width="1.08"/></svg>
<div class="t" style="left:1045px;top:747.5px;font-size:9.5px;color:#e6e8ea;width:14px;text-align:right;letter-spacing:-0.5px;">12</div>
<div class="t" style="left:1045px;top:760.5px;font-size:9.5px;color:#e6e8ea;width:14px;text-align:right;letter-spacing:-0.5px;">0</div>
<div class="t" style="left:1045px;top:783.5px;font-size:9.5px;color:#e6e8ea;width:14px;text-align:right;letter-spacing:-0.5px;">10</div>
<div class="t" style="left:1045px;top:804.5px;font-size:9.5px;color:#e6e8ea;width:14px;text-align:right;letter-spacing:-0.5px;">20</div>
<div class="t" style="left:1045px;top:835.5px;font-size:9.5px;color:#e6e8ea;width:14px;text-align:right;letter-spacing:-0.5px;">40</div>
<div class="t" style="left:1045px;top:866.5px;font-size:9.5px;color:#e6e8ea;width:14px;text-align:right;letter-spacing:-0.5px;">80</div>
<div style="left:1048px;top:746px;width:9.8px;height:1px;background:#4c5156;"></div>
<div style="left:1048px;top:771.5px;width:9.8px;height:1px;background:#4c5156;"></div>
<div style="left:1048px;top:794.8px;width:9.8px;height:1px;background:#4c5156;"></div>
<div style="left:1048px;top:815.5px;width:9.8px;height:1px;background:#4c5156;"></div>
<div style="left:1048px;top:847.5px;width:9.8px;height:1px;background:#4c5156;"></div>
<div style="left:1048px;top:877.8px;width:9.8px;height:1px;background:#4c5156;"></div>
<div style="left:1011px;top:747.5px;width:31.5px;height:1px;background:#3b3f44;"></div>
<div style="left:1011px;top:772px;width:31.5px;height:1px;background:#3b3f44;"></div>
<div style="left:1011px;top:795.5px;width:31.5px;height:1px;background:#3b3f44;"></div>
<div style="left:1011px;top:816px;width:31.5px;height:1px;background:#3b3f44;"></div>
<div style="left:1011px;top:848px;width:31.5px;height:1px;background:#3b3f44;"></div>
<div style="left:1011px;top:878px;width:31.5px;height:1px;background:#3b3f44;"></div>
<div style="left:1011px;top:772px;width:31.5px;height:1.2px;background:#c9ccd0;"></div>
<div style="left:1016px;top:755px;width:21px;height:1px;background:rgba(150,155,160,0.16);"></div>
<div style="left:1016px;top:758px;width:21px;height:1px;background:rgba(150,155,160,0.16);"></div>
<div style="left:1016px;top:761px;width:21px;height:1px;background:rgba(150,155,160,0.16);"></div>
<div style="left:1016px;top:764px;width:21px;height:1px;background:rgba(150,155,160,0.16);"></div>
<div style="left:1016px;top:767px;width:21px;height:1px;background:rgba(150,155,160,0.16);"></div>
<div style="left:1016px;top:770px;width:21px;height:1px;background:rgba(150,155,160,0.16);"></div>
<div style="left:1016px;top:773px;width:21px;height:1px;background:rgba(150,155,160,0.16);"></div>
<div style="left:1016px;top:776px;width:21px;height:1px;background:rgba(150,155,160,0.16);"></div>
<div style="left:1016px;top:779px;width:21px;height:1px;background:rgba(150,155,160,0.16);"></div>
<div style="left:1016px;top:782px;width:21px;height:1px;background:rgba(150,155,160,0.16);"></div>
<div style="left:1016px;top:785px;width:21px;height:1px;background:rgba(150,155,160,0.16);"></div>
<div style="left:1016px;top:788px;width:21px;height:1px;background:rgba(150,155,160,0.16);"></div>
<svg style="left:1014px;top:751px;" width="25" height="40" viewBox="0 0 25 40"><path d="M0.5 5V0.5h6M24.500 5V0.5h-6M0.5 34.5v4.500h6M24.5 34.5v4.500h-6" fill="none" stroke="#6c7176" stroke-width="1"/></svg>
<div style="left:1024px;top:736px;width:5px;height:144px;background:linear-gradient(90deg,#0e0f11,#17191c);border-radius:2.5px;"></div>
<svg style="left:1016.5px;top:804.6px;filter:drop-shadow(0 1px 1px rgba(0,0,0,.6));" width="19" height="33.5" viewBox="0 0 19 33.5"><rect x="0" y="0" width="19" height="33.5" rx="1.5" fill="url(#fh)"/><rect x="0" y="0" width="1.2" height="33.5" fill="#8b9096" opacity="0.7"/><rect x="17.8" y="0" width="1.2" height="33.5" fill="#8b9096" opacity="0.7"/></svg>
<div class="t" style="left:1039px;top:885.5px;font-size:11px;color:#eef0f2;width:29.5px;text-align:right;letter-spacing:-0.4px;">-23.7</div>
<div style="left:1042.2px;top:917.8px;width:19px;height:13px;background:#4b5056;box-shadow:inset 0 0 0 1px #2c3034;"></div>
<div class="t" style="left:1042.2px;top:919px;font-size:11.5px;color:#e8eaec;width:19px;text-align:center;letter-spacing:-0.4px;">FX</div>
<div style="left:1062.2px;top:917.8px;width:12px;height:13px;background:#4b5056;box-shadow:inset 0 0 0 1px #2c3034;"></div>
<svg style="left:1065.2px;top:923px;" width="6" height="3.5" viewBox="0 0 6 3.5"><path d="M0 0h6l-3.0 3.5z" fill="#e8eaec"/></svg>
<div style="left:1009px;top:951px;width:68px;height:20px;background:#25292e;"></div>
<div style="left:1011.2px;top:953.5px;width:63.8px;height:13px;background:#44494f;box-shadow:inset 0 0 0 1px #1e2124;"></div>
<div style="left:1078px;top:610px;width:69px;height:323px;background:#444b54;"></div>
<div style="left:1146px;top:610px;width:1.2px;height:361px;background:#181b1e;"></div>
<div style="left:1077px;top:610px;width:2px;height:361px;background:#9fb0c0;"></div>
<div style="left:1145px;top:610px;width:2px;height:361px;background:#9fb0c0;"></div>
<div style="left:1078px;top:610px;width:68px;height:40px;"></div>
<div style="left:1113px;top:619px;width:29.5px;height:26.5px;background:#15171a;"></div>
<svg style="left:1083.3px;top:614.5px;" width="33" height="33" viewBox="0 0 33 33"><circle cx="16.5" cy="17.0" r="15.4" fill="#17191c"/><circle cx="16.5" cy="16.5" r="14.5" fill="url(#kb)"/><circle cx="16.5" cy="16.5" r="12.1" fill="url(#kg)"/><path d="M16.5 15.0L16.5 3.1999999999999993" stroke="#2c3035" stroke-width="2.2"/></svg>
<div class="t" style="left:1115px;top:621px;font-size:11px;color:#c9ccd0;width:28px;text-align:center;letter-spacing:-0.2px;">0.0*</div>
<div style="left:1127px;top:634.3px;width:15px;height:10.8px;background:#4a4f55;"></div>
<div class="t" style="left:1127px;top:634.5px;font-size:10px;color:#e6e8ea;width:15.5px;text-align:center;">φ</div>
<div style="left:1078px;top:651px;width:51.8px;height:14px;background:#86939f;"></div>
<div class="t" style="left:1078px;top:653px;font-size:10.5px;color:#dfe6ee;width:52px;text-align:center;">11</div>
<div style="left:1130.8px;top:651px;width:15.2px;height:14px;background:#494e54;"></div>
<svg style="left:1133.8px;top:653.5px;" width="9" height="9" viewBox="0 0 9 9"><circle cx="4.5" cy="4.5" r="3.3" fill="none" stroke="#e4e6e8" stroke-width="1.1"/><circle cx="4.500" cy="4.500" r="1.2" fill="#e4e6e8"/></svg>
<div style="left:1082.8px;top:672px;width:25.2px;height:18.2px;background:#86c5f5;"></div>
<div class="t" style="left:1082.8px;top:676px;font-size:12px;color:#10202e;width:25.2px;text-align:center;letter-spacing:-0.3px;">Rd</div>
<div style="left:1115.7px;top:672px;width:25.5px;height:18.2px;background:#464b50;box-shadow:inset 0 0 0 1px #34383c;"></div>
<div class="t" style="left:1115.7px;top:673.6px;font-size:15.5px;color:#e4e6e8;width:25.5px;text-align:center;">S</div>
<div style="left:1082.8px;top:696.8px;width:25.2px;height:18.4px;background:#464b50;box-shadow:inset 0 0 0 1px #34383c;"></div>
<div style="left:1091px;top:701.6px;width:8.8px;height:8.8px;background:#d03540;border-radius:50%;filter:blur(0.3px);"></div>
<div style="left:1115.7px;top:696.8px;width:25.5px;height:18.4px;background:#464b50;box-shadow:inset 0 0 0 1px #34383c;"></div>
<div class="t" style="left:1115.7px;top:698.4px;font-size:15.5px;color:#e4e6e8;width:25.5px;text-align:center;">M</div>
<div style="left:1115px;top:722px;width:27.3px;height:158px;background:linear-gradient(#111316,#15171a 90%,#1d2024);"></div>
<div style="left:1115px;top:742.5px;width:27.3px;height:1px;background:#2b2f33;"></div>
<svg style="left:1124.5px;top:726px;" width="9" height="11.7" viewBox="0 0 9 11.7"><path d="M0 3.15h2.9699999999999998L7.74 0v11.700000000000001L2.9699999999999998 8.55H0z" fill="#cfd1d3"/><path d="M7.74 0v11.700000000000001" stroke="#cfd1d3" stroke-width="1.08"/></svg>
<div class="t" style="left:1114px;top:747.5px;font-size:9.5px;color:#e6e8ea;width:14px;text-align:right;letter-spacing:-0.5px;">12</div>
<div class="t" style="left:1114px;top:760.5px;font-size:9.5px;color:#e6e8ea;width:14px;text-align:right;letter-spacing:-0.5px;">0</div>
<div class="t" style="left:1114px;top:783.5px;font-size:9.5px;color:#e6e8ea;width:14px;text-align:right;letter-spacing:-0.5px;">10</div>
<div class="t" style="left:1114px;top:804.5px;font-size:9.5px;color:#e6e8ea;width:14px;text-align:right;letter-spacing:-0.5px;">20</div>
<div class="t" style="left:1114px;top:835.5px;font-size:9.5px;color:#e6e8ea;width:14px;text-align:right;letter-spacing:-0.5px;">40</div>
<div class="t" style="left:1114px;top:866.5px;font-size:9.5px;color:#e6e8ea;width:14px;text-align:right;letter-spacing:-0.5px;">80</div>
<div style="left:1117px;top:746px;width:9.8px;height:1px;background:#4c5156;"></div>
<div style="left:1117px;top:771.5px;width:9.8px;height:1px;background:#4c5156;"></div>
<div style="left:1117px;top:794.8px;width:9.8px;height:1px;background:#4c5156;"></div>
<div style="left:1117px;top:815.5px;width:9.8px;height:1px;background:#4c5156;"></div>
<div style="left:1117px;top:847.5px;width:9.8px;height:1px;background:#4c5156;"></div>
<div style="left:1117px;top:877.8px;width:9.8px;height:1px;background:#4c5156;"></div>
<div style="left:1080px;top:747.5px;width:31.5px;height:1px;background:#3b3f44;"></div>
<div style="left:1080px;top:772px;width:31.5px;height:1px;background:#3b3f44;"></div>
<div style="left:1080px;top:795.5px;width:31.5px;height:1px;background:#3b3f44;"></div>
<div style="left:1080px;top:816px;width:31.5px;height:1px;background:#3b3f44;"></div>
<div style="left:1080px;top:848px;width:31.5px;height:1px;background:#3b3f44;"></div>
<div style="left:1080px;top:878px;width:31.5px;height:1px;background:#3b3f44;"></div>
<div style="left:1080px;top:772px;width:31.5px;height:1.2px;background:#c9ccd0;"></div>
<div style="left:1085px;top:755px;width:21px;height:1px;background:rgba(150,155,160,0.16);"></div>
<div style="left:1085px;top:758px;width:21px;height:1px;background:rgba(150,155,160,0.16);"></div>
<div style="left:1085px;top:761px;width:21px;height:1px;background:rgba(150,155,160,0.16);"></div>
<div style="left:1085px;top:764px;width:21px;height:1px;background:rgba(150,155,160,0.16);"></div>
<div style="left:1085px;top:767px;width:21px;height:1px;background:rgba(150,155,160,0.16);"></div>
<div style="left:1085px;top:770px;width:21px;height:1px;background:rgba(150,155,160,0.16);"></div>
<div style="left:1085px;top:773px;width:21px;height:1px;background:rgba(150,155,160,0.16);"></div>
<div style="left:1085px;top:776px;width:21px;height:1px;background:rgba(150,155,160,0.16);"></div>
<div style="left:1085px;top:779px;width:21px;height:1px;background:rgba(150,155,160,0.16);"></div>
<div style="left:1085px;top:782px;width:21px;height:1px;background:rgba(150,155,160,0.16);"></div>
<div style="left:1085px;top:785px;width:21px;height:1px;background:rgba(150,155,160,0.16);"></div>
<div style="left:1085px;top:788px;width:21px;height:1px;background:rgba(150,155,160,0.16);"></div>
<svg style="left:1083px;top:751px;" width="25" height="40" viewBox="0 0 25 40"><path d="M0.5 5V0.5h6M24.500 5V0.5h-6M0.5 34.5v4.500h6M24.5 34.5v4.500h-6" fill="none" stroke="#6c7176" stroke-width="1"/></svg>
<div style="left:1093px;top:736px;width:5px;height:144px;background:linear-gradient(90deg,#0e0f11,#17191c);border-radius:2.5px;"></div>
<svg style="left:1085.5px;top:793.4px;filter:drop-shadow(0 1px 1px rgba(0,0,0,.6));" width="19" height="33.5" viewBox="0 0 19 33.5"><rect x="0" y="0" width="19" height="33.5" rx="1.5" fill="url(#fh)"/><rect x="0" y="0" width="1.2" height="33.5" fill="#8b9096" opacity="0.7"/><rect x="17.8" y="0" width="1.2" height="33.5" fill="#8b9096" opacity="0.7"/></svg>
<div style="left:1130px;top:842px;width:4.5px;height:36.5px;background:#a3e01a;"></div>
<div style="left:1136px;top:845px;width:4.5px;height:33.5px;background:#a3e01a;"></div>
<div class="t" style="left:1108px;top:885.5px;font-size:11px;color:#eef0f2;width:29.5px;text-align:right;letter-spacing:-0.4px;">-18.5</div>
<div style="left:1111.2px;top:917.8px;width:19px;height:13px;background:#4b5056;box-shadow:inset 0 0 0 1px #2c3034;"></div>
<div class="t" style="left:1111.2px;top:919px;font-size:11.5px;color:#e8eaec;width:19px;text-align:center;letter-spacing:-0.4px;">FX</div>
<div style="left:1131.2px;top:917.8px;width:12px;height:13px;background:#4b5056;box-shadow:inset 0 0 0 1px #2c3034;"></div>
<svg style="left:1134.2px;top:923px;" width="6" height="3.5" viewBox="0 0 6 3.5"><path d="M0 0h6l-3.0 3.5z" fill="#e8eaec"/></svg>
<div style="left:1078px;top:951px;width:68px;height:20px;background:#444b54;"></div>
<div style="left:1080.2px;top:953.5px;width:63.8px;height:13px;background:#44494f;box-shadow:inset 0 0 0 1px #1e2124;"></div>
<div style="left:1147px;top:610px;width:69px;height:323px;background:#25292e;"></div>
<div style="left:1215px;top:610px;width:1.2px;height:361px;background:#181b1e;"></div>
<div style="left:1147px;top:610px;width:68px;height:40px;background:#22262a;"></div>
<div style="left:1182px;top:619px;width:29.5px;height:26.5px;background:#15171a;"></div>
<svg style="left:1152.3px;top:614.5px;" width="33" height="33" viewBox="0 0 33 33"><circle cx="16.5" cy="17.0" r="15.4" fill="#17191c"/><circle cx="16.5" cy="16.5" r="14.5" fill="url(#kb)"/><circle cx="16.5" cy="16.5" r="12.1" fill="url(#kg)"/><path d="M16.5 15.0L16.5 3.1999999999999993" stroke="#2c3035" stroke-width="2.2"/></svg>
<div class="t" style="left:1184px;top:621px;font-size:11px;color:#c9ccd0;width:28px;text-align:center;letter-spacing:-0.2px;">0.0*</div>
<div style="left:1196px;top:634.3px;width:15px;height:10.8px;background:#4a4f55;"></div>
<div class="t" style="left:1196px;top:634.5px;font-size:10px;color:#e6e8ea;width:15.5px;text-align:center;">φ</div>
<div style="left:1147px;top:651px;width:51.8px;height:14px;background:#5c6670;"></div>
<div class="t" style="left:1147px;top:653px;font-size:10.5px;color:#dfe6ee;width:52px;text-align:center;">12</div>
<div style="left:1199.8px;top:651px;width:15.2px;height:14px;background:#494e54;"></div>
<svg style="left:1202.8px;top:653.5px;" width="9" height="9" viewBox="0 0 9 9"><circle cx="4.5" cy="4.5" r="3.3" fill="none" stroke="#e4e6e8" stroke-width="1.1"/><circle cx="4.500" cy="4.500" r="1.2" fill="#e4e6e8"/></svg>
<div style="left:1151.8px;top:672px;width:25.2px;height:18.2px;background:#86c5f5;"></div>
<div class="t" style="left:1151.8px;top:676px;font-size:12px;color:#10202e;width:25.2px;text-align:center;letter-spacing:-0.3px;">Rd</div>
<div style="left:1184.7px;top:672px;width:25.5px;height:18.2px;background:#464b50;box-shadow:inset 0 0 0 1px #34383c;"></div>
<div class="t" style="left:1184.7px;top:673.6px;font-size:15.5px;color:#e4e6e8;width:25.5px;text-align:center;">S</div>
<div style="left:1151.8px;top:696.8px;width:25.2px;height:18.4px;background:#464b50;box-shadow:inset 0 0 0 1px #34383c;"></div>
<div style="left:1160px;top:701.6px;width:8.8px;height:8.8px;background:#d03540;border-radius:50%;filter:blur(0.3px);"></div>
<div style="left:1184.7px;top:696.8px;width:25.5px;height:18.4px;background:#464b50;box-shadow:inset 0 0 0 1px #34383c;"></div>
<div class="t" style="left:1184.7px;top:698.4px;font-size:15.5px;color:#e4e6e8;width:25.5px;text-align:center;">M</div>
<div style="left:1184px;top:722px;width:27.3px;height:158px;background:linear-gradient(#111316,#15171a 90%,#1d2024);"></div>
<div style="left:1184px;top:742.5px;width:27.3px;height:1px;background:#2b2f33;"></div>
<svg style="left:1193.5px;top:726px;" width="9" height="11.7" viewBox="0 0 9 11.7"><path d="M0 3.15h2.9699999999999998L7.74 0v11.700000000000001L2.9699999999999998 8.55H0z" fill="#cfd1d3"/><path d="M7.74 0v11.700000000000001" stroke="#cfd1d3" stroke-width="1.08"/></svg>
<div class="t" style="left:1183px;top:747.5px;font-size:9.5px;color:#e6e8ea;width:14px;text-align:right;letter-spacing:-0.5px;">12</div>
<div class="t" style="left:1183px;top:760.5px;font-size:9.5px;color:#e6e8ea;width:14px;text-align:right;letter-spacing:-0.5px;">0</div>
<div class="t" style="left:1183px;top:783.5px;font-size:9.5px;color:#e6e8ea;width:14px;text-align:right;letter-spacing:-0.5px;">10</div>
<div class="t" style="left:1183px;top:804.5px;font-size:9.5px;color:#e6e8ea;width:14px;text-align:right;letter-spacing:-0.5px;">20</div>
<div class="t" style="left:1183px;top:835.5px;font-size:9.5px;color:#e6e8ea;width:14px;text-align:right;letter-spacing:-0.5px;">40</div>
<div class="t" style="left:1183px;top:866.5px;font-size:9.5px;color:#e6e8ea;width:14px;text-align:right;letter-spacing:-0.5px;">80</div>
<div style="left:1186px;top:746px;width:9.8px;height:1px;background:#4c5156;"></div>
<div style="left:1186px;top:771.5px;width:9.8px;height:1px;background:#4c5156;"></div>
<div style="left:1186px;top:794.8px;width:9.8px;height:1px;background:#4c5156;"></div>
<div style="left:1186px;top:815.5px;width:9.8px;height:1px;background:#4c5156;"></div>
<div style="left:1186px;top:847.5px;width:9.8px;height:1px;background:#4c5156;"></div>
<div style="left:1186px;top:877.8px;width:9.8px;height:1px;background:#4c5156;"></div>
<div style="left:1149px;top:747.5px;width:31.5px;height:1px;background:#3b3f44;"></div>
<div style="left:1149px;top:772px;width:31.5px;height:1px;background:#3b3f44;"></div>
<div style="left:1149px;top:795.5px;width:31.5px;height:1px;background:#3b3f44;"></div>
<div style="left:1149px;top:816px;width:31.5px;height:1px;background:#3b3f44;"></div>
<div style="left:1149px;top:848px;width:31.5px;height:1px;background:#3b3f44;"></div>
<div style="left:1149px;top:878px;width:31.5px;height:1px;background:#3b3f44;"></div>
<div style="left:1149px;top:772px;width:31.5px;height:1.2px;background:#c9ccd0;"></div>
<div style="left:1154px;top:755px;width:21px;height:1px;background:rgba(150,155,160,0.16);"></div>
<div style="left:1154px;top:758px;width:21px;height:1px;background:rgba(150,155,160,0.16);"></div>
<div style="left:1154px;top:761px;width:21px;height:1px;background:rgba(150,155,160,0.16);"></div>
<div style="left:1154px;top:764px;width:21px;height:1px;background:rgba(150,155,160,0.16);"></div>
<div style="left:1154px;top:767px;width:21px;height:1px;background:rgba(150,155,160,0.16);"></div>
<div style="left:1154px;top:770px;width:21px;height:1px;background:rgba(150,155,160,0.16);"></div>
<div style="left:1154px;top:773px;width:21px;height:1px;background:rgba(150,155,160,0.16);"></div>
<div style="left:1154px;top:776px;width:21px;height:1px;background:rgba(150,155,160,0.16);"></div>
<div style="left:1154px;top:779px;width:21px;height:1px;background:rgba(150,155,160,0.16);"></div>
<div style="left:1154px;top:782px;width:21px;height:1px;background:rgba(150,155,160,0.16);"></div>
<div style="left:1154px;top:785px;width:21px;height:1px;background:rgba(150,155,160,0.16);"></div>
<div style="left:1154px;top:788px;width:21px;height:1px;background:rgba(150,155,160,0.16);"></div>
<svg style="left:1152px;top:751px;" width="25" height="40" viewBox="0 0 25 40"><path d="M0.5 5V0.5h6M24.500 5V0.5h-6M0.5 34.5v4.500h6M24.5 34.5v4.500h-6" fill="none" stroke="#6c7176" stroke-width="1"/></svg>
<div style="left:1162px;top:736px;width:5px;height:144px;background:linear-gradient(90deg,#0e0f11,#17191c);border-radius:2.5px;"></div>
<svg style="left:1154.5px;top:763.3px;filter:drop-shadow(0 1px 1px rgba(0,0,0,.6));" width="19" height="33.5" viewBox="0 0 19 33.5"><rect x="0" y="0" width="19" height="33.5" rx="1.5" fill="url(#fh)"/><rect x="0" y="0" width="1.2" height="33.5" fill="#8b9096" opacity="0.7"/><rect x="17.8" y="0" width="1.2" height="33.5" fill="#8b9096" opacity="0.7"/></svg>
<div style="left:1199px;top:816px;width:4.5px;height:62.5px;background:#a3e01a;"></div>
<div style="left:1205px;top:816px;width:4.5px;height:62.5px;background:#a3e01a;"></div>
<div style="left:1199px;top:813px;width:4.5px;height:1.6px;background:#b6ea2a;"></div>
<div style="left:1205px;top:813px;width:4.5px;height:1.6px;background:#b6ea2a;"></div>
<div class="t" style="left:1177px;top:885.5px;font-size:11px;color:#eef0f2;width:29.5px;text-align:right;letter-spacing:-0.4px;">-4.0</div>
<div style="left:1180.2px;top:917.8px;width:19px;height:13px;background:#4b5056;box-shadow:inset 0 0 0 1px #2c3034;"></div>
<div class="t" style="left:1180.2px;top:919px;font-size:11.5px;color:#e8eaec;width:19px;text-align:center;letter-spacing:-0.4px;">FX</div>
<div style="left:1200.2px;top:917.8px;width:12px;height:13px;background:#4b5056;box-shadow:inset 0 0 0 1px #2c3034;"></div>
<svg style="left:1203.2px;top:923px;" width="6" height="3.5" viewBox="0 0 6 3.5"><path d="M0 0h6l-3.0 3.5z" fill="#e8eaec"/></svg>
<div style="left:1147px;top:951px;width:68px;height:20px;background:#25292e;"></div>
<div style="left:1149.2px;top:953.5px;width:63.8px;height:13px;background:#44494f;box-shadow:inset 0 0 0 1px #1e2124;"></div>
<div style="left:1216px;top:610px;width:69px;height:323px;background:#25292e;"></div>
<div style="left:1284px;top:610px;width:1.2px;height:361px;background:#181b1e;"></div>
<div style="left:1216px;top:610px;width:68px;height:40px;background:#22262a;"></div>
<div style="left:1251px;top:619px;width:29.5px;height:26.5px;background:#15171a;"></div>
<svg style="left:1221.3px;top:614.5px;" width="33" height="33" viewBox="0 0 33 33"><circle cx="16.5" cy="17.0" r="15.4" fill="#17191c"/><circle cx="16.5" cy="16.5" r="14.5" fill="url(#kb)"/><circle cx="16.5" cy="16.5" r="12.1" fill="url(#kg)"/><path d="M16.5 15.0L16.5 3.1999999999999993" stroke="#2c3035" stroke-width="2.2"/></svg>
<div class="t" style="left:1253px;top:621px;font-size:11px;color:#c9ccd0;width:28px;text-align:center;letter-spacing:-0.2px;">0.0*</div>
<div style="left:1265px;top:634.3px;width:15px;height:10.8px;background:#4a4f55;"></div>
<div class="t" style="left:1265px;top:634.5px;font-size:10px;color:#e6e8ea;width:15.5px;text-align:center;">φ</div>
<div style="left:1216px;top:651px;width:51.8px;height:14px;background:#5c6670;"></div>
<div class="t" style="left:1216px;top:653px;font-size:10.5px;color:#dfe6ee;width:52px;text-align:center;">13</div>
<div style="left:1268.8px;top:651px;width:15.2px;height:14px;background:#494e54;"></div>
<svg style="left:1271.8px;top:653.5px;" width="9" height="9" viewBox="0 0 9 9"><circle cx="4.5" cy="4.5" r="3.3" fill="none" stroke="#e4e6e8" stroke-width="1.1"/><circle cx="4.500" cy="4.500" r="1.2" fill="#e4e6e8"/></svg>
<div style="left:1220.8px;top:672px;width:25.2px;height:18.2px;background:#86c5f5;"></div>
<div class="t" style="left:1220.8px;top:676px;font-size:12px;color:#10202e;width:25.2px;text-align:center;letter-spacing:-0.3px;">Rd</div>
<div style="left:1253.7px;top:672px;width:25.5px;height:18.2px;background:#464b50;box-shadow:inset 0 0 0 1px #34383c;"></div>
<div class="t" style="left:1253.7px;top:673.6px;font-size:15.5px;color:#e4e6e8;width:25.5px;text-align:center;">S</div>
<div style="left:1220.8px;top:696.8px;width:25.2px;height:18.4px;background:#464b50;box-shadow:inset 0 0 0 1px #34383c;"></div>
<div style="left:1229px;top:701.6px;width:8.8px;height:8.8px;background:#d03540;border-radius:50%;filter:blur(0.3px);"></div>
<div style="left:1253.7px;top:696.8px;width:25.5px;height:18.4px;background:#464b50;box-shadow:inset 0 0 0 1px #34383c;"></div>
<div class="t" style="left:1253.7px;top:698.4px;font-size:15.5px;color:#e4e6e8;width:25.5px;text-align:center;">M</div>
<div style="left:1253px;top:722px;width:27.3px;height:158px;background:linear-gradient(#111316,#15171a 90%,#1d2024);"></div>
<div style="left:1253px;top:742.5px;width:27.3px;height:1px;background:#2b2f33;"></div>
<svg style="left:1262.5px;top:726px;" width="9" height="11.7" viewBox="0 0 9 11.7"><path d="M0 3.15h2.9699999999999998L7.74 0v11.700000000000001L2.9699999999999998 8.55H0z" fill="#cfd1d3"/><path d="M7.74 0v11.700000000000001" stroke="#cfd1d3" stroke-width="1.08"/></svg>
<div class="t" style="left:1252px;top:747.5px;font-size:9.5px;color:#e6e8ea;width:14px;text-align:right;letter-spacing:-0.5px;">12</div>
<div class="t" style="left:1252px;top:760.5px;font-size:9.5px;color:#e6e8ea;width:14px;text-align:right;letter-spacing:-0.5px;">0</div>
<div class="t" style="left:1252px;top:783.5px;font-size:9.5px;color:#e6e8ea;width:14px;text-align:right;letter-spacing:-0.5px;">10</div>
<div class="t" style="left:1252px;top:804.5px;font-size:9.5px;color:#e6e8ea;width:14px;text-align:right;letter-spacing:-0.5px;">20</div>
<div class="t" style="left:1252px;top:835.5px;font-size:9.5px;color:#e6e8ea;width:14px;text-align:right;letter-spacing:-0.5px;">40</div>
<div class="t" style="left:1252px;top:866.5px;font-size:9.5px;color:#e6e8ea;width:14px;text-align:right;letter-spacing:-0.5px;">80</div>
<div style="left:1255px;top:746px;width:9.8px;height:1px;background:#4c5156;"></div>
<div style="left:1255px;top:771.5px;width:9.8px;height:1px;background:#4c5156;"></div>
<div style="left:1255px;top:794.8px;width:9.8px;height:1px;background:#4c5156;"></div>
<div style="left:1255px;top:815.5px;width:9.8px;height:1px;background:#4c5156;"></div>
<div style="left:1255px;top:847.5px;width:9.8px;height:1px;background:#4c5156;"></div>
<div style="left:1255px;top:877.8px;width:9.8px;height:1px;background:#4c5156;"></div>
<div style="left:1218px;top:747.5px;width:31.5px;height:1px;background:#3b3f44;"></div>
<div style="left:1218px;top:772px;width:31.5px;height:1px;background:#3b3f44;"></div>
<div style="left:1218px;top:795.5px;width:31.5px;height:1px;background:#3b3f44;"></div>
<div style="left:1218px;top:816px;width:31.5px;height:1px;background:#3b3f44;"></div>
<div style="left:1218px;top:848px;width:31.5px;height:1px;background:#3b3f44;"></div>
<div style="left:1218px;top:878px;width:31.5px;height:1px;background:#3b3f44;"></div>
<div style="left:1218px;top:772px;width:31.5px;height:1.2px;background:#c9ccd0;"></div>
<div style="left:1223px;top:755px;width:21px;height:1px;background:rgba(150,155,160,0.16);"></div>
<div style="left:1223px;top:758px;width:21px;height:1px;background:rgba(150,155,160,0.16);"></div>
<div style="left:1223px;top:761px;width:21px;height:1px;background:rgba(150,155,160,0.16);"></div>
<div style="left:1223px;top:764px;width:21px;height:1px;background:rgba(150,155,160,0.16);"></div>
<div style="left:1223px;top:767px;width:21px;height:1px;background:rgba(150,155,160,0.16);"></div>
<div style="left:1223px;top:770px;width:21px;height:1px;background:rgba(150,155,160,0.16);"></div>
<div style="left:1223px;top:773px;width:21px;height:1px;background:rgba(150,155,160,0.16);"></div>
<div style="left:1223px;top:776px;width:21px;height:1px;background:rgba(150,155,160,0.16);"></div>
<div style="left:1223px;top:779px;width:21px;height:1px;background:rgba(150,155,160,0.16);"></div>
<div style="left:1223px;top:782px;width:21px;height:1px;background:rgba(150,155,160,0.16);"></div>
<div style="left:1223px;top:785px;width:21px;height:1px;background:rgba(150,155,160,0.16);"></div>
<div style="left:1223px;top:788px;width:21px;height:1px;background:rgba(150,155,160,0.16);"></div>
<svg style="left:1221px;top:751px;" width="25" height="40" viewBox="0 0 25 40"><path d="M0.5 5V0.5h6M24.500 5V0.5h-6M0.5 34.5v4.500h6M24.5 34.5v4.500h-6" fill="none" stroke="#6c7176" stroke-width="1"/></svg>
<div style="left:1231px;top:736px;width:5px;height:144px;background:linear-gradient(90deg,#0e0f11,#17191c);border-radius:2.5px;"></div>
<svg style="left:1223.5px;top:755.7px;filter:drop-shadow(0 1px 1px rgba(0,0,0,.6));" width="19" height="33.5" viewBox="0 0 19 33.5"><rect x="0" y="0" width="19" height="33.5" rx="1.5" fill="url(#fh)"/><rect x="0" y="0" width="1.2" height="33.5" fill="#8b9096" opacity="0.7"/><rect x="17.8" y="0" width="1.2" height="33.5" fill="#8b9096" opacity="0.7"/></svg>
<div style="left:1268px;top:827px;width:4.5px;height:51.5px;background:#a3e01a;"></div>
<div style="left:1274px;top:825.4px;width:4.5px;height:53.1px;background:#a3e01a;"></div>
<div style="left:1268px;top:811px;width:4.5px;height:1.6px;background:#b6ea2a;"></div>
<div style="left:1274px;top:807.5px;width:4.5px;height:1.6px;background:#b6ea2a;"></div>
<div class="t" style="left:1246px;top:885.5px;font-size:11px;color:#eef0f2;width:29.5px;text-align:right;letter-spacing:-0.4px;">0.0</div>
<div style="left:1249.2px;top:917.8px;width:19px;height:13px;background:#4b5056;box-shadow:inset 0 0 0 1px #2c3034;"></div>
<div class="t" style="left:1249.2px;top:919px;font-size:11.5px;color:#e8eaec;width:19px;text-align:center;letter-spacing:-0.4px;">FX</div>
<div style="left:1269.2px;top:917.8px;width:12px;height:13px;background:#4b5056;box-shadow:inset 0 0 0 1px #2c3034;"></div>
<svg style="left:1272.2px;top:923px;" width="6" height="3.5" viewBox="0 0 6 3.5"><path d="M0 0h6l-3.0 3.5z" fill="#e8eaec"/></svg>
<div style="left:1216px;top:951px;width:68px;height:20px;background:#25292e;"></div>
<div style="left:1218.2px;top:953.5px;width:63.8px;height:13px;background:#44494f;box-shadow:inset 0 0 0 1px #1e2124;"></div>
<div style="left:1285px;top:610px;width:69px;height:323px;background:#43363e;"></div>
<div style="left:1353px;top:610px;width:1.2px;height:361px;background:#181b1e;"></div>
<div style="left:1285px;top:610px;width:68px;height:40px;"></div>
<div style="left:1320px;top:619px;width:29.5px;height:26.5px;background:#15171a;"></div>
<svg style="left:1290.3px;top:614.5px;" width="33" height="33" viewBox="0 0 33 33"><circle cx="16.5" cy="17.0" r="15.4" fill="#17191c"/><circle cx="16.5" cy="16.5" r="14.5" fill="url(#kb)"/><circle cx="16.5" cy="16.5" r="12.1" fill="url(#kg)"/><path d="M16.5 15.0L16.5 3.1999999999999993" stroke="#2c3035" stroke-width="2.2"/></svg>
<div class="t" style="left:1322px;top:621px;font-size:11px;color:#c9ccd0;width:28px;text-align:center;letter-spacing:-0.2px;">0.0*</div>
<div style="left:1334px;top:634.3px;width:15px;height:10.8px;background:#4a4f55;"></div>
<div class="t" style="left:1334px;top:634.5px;font-size:10px;color:#e6e8ea;width:15.5px;text-align:center;">φ</div>
<div style="left:1285px;top:651px;width:51.8px;height:14px;background:#5c6670;"></div>
<div class="t" style="left:1285px;top:653px;font-size:10.5px;color:#dfe6ee;width:52px;text-align:center;">14</div>
<div style="left:1337.8px;top:651px;width:15.2px;height:14px;background:#494e54;"></div>
<svg style="left:1340.8px;top:653.5px;" width="9" height="9" viewBox="0 0 9 9"><circle cx="4.5" cy="4.5" r="3.3" fill="none" stroke="#e4e6e8" stroke-width="1.1"/><circle cx="4.500" cy="4.500" r="1.2" fill="#e4e6e8"/></svg>
<div style="left:1289.8px;top:672px;width:25.2px;height:18.2px;background:#86c5f5;"></div>
<div class="t" style="left:1289.8px;top:676px;font-size:12px;color:#10202e;width:25.2px;text-align:center;letter-spacing:-0.3px;">Rd</div>
<div style="left:1322.7px;top:672px;width:25.5px;height:18.2px;background:#464b50;box-shadow:inset 0 0 0 1px #34383c;"></div>
<div class="t" style="left:1322.7px;top:673.6px;font-size:15.5px;color:#e4e6e8;width:25.5px;text-align:center;">S</div>
<div style="left:1289.8px;top:696.8px;width:25.2px;height:18.4px;background:#d93aa5;"></div>
<div style="left:1297.8px;top:701.2px;width:9.5px;height:9.5px;background:radial-gradient(circle at 50% 35%,#ff8a7a,#f0362e 60%);border-radius:50%;"></div>
<div style="left:1322.7px;top:696.8px;width:25.5px;height:18.4px;background:#464b50;box-shadow:inset 0 0 0 1px #34383c;"></div>
<div class="t" style="left:1322.7px;top:698.4px;font-size:15.5px;color:#e4e6e8;width:25.5px;text-align:center;">M</div>
<div style="left:1322px;top:722px;width:27.3px;height:158px;background:linear-gradient(#111316,#15171a 90%,#1d2024);"></div>
<div style="left:1322px;top:742.5px;width:27.3px;height:1px;background:#2b2f33;"></div>
<div style="left:1322px;top:722px;width:24.5px;height:20.5px;background:#86c5f5;"></div>
<svg style="left:1330px;top:726px;" width="9" height="11.7" viewBox="0 0 9 11.7"><path d="M0 3.15h2.9699999999999998L7.74 0v11.700000000000001L2.9699999999999998 8.55H0z" fill="#14283c"/><path d="M7.74 0v11.700000000000001" stroke="#14283c" stroke-width="1.08"/></svg>
<div class="t" style="left:1321px;top:747.5px;font-size:9.5px;color:#e6e8ea;width:14px;text-align:right;letter-spacing:-0.5px;">12</div>
<div class="t" style="left:1321px;top:760.5px;font-size:9.5px;color:#e6e8ea;width:14px;text-align:right;letter-spacing:-0.5px;">0</div>
<div class="t" style="left:1321px;top:783.5px;font-size:9.5px;color:#e6e8ea;width:14px;text-align:right;letter-spacing:-0.5px;">10</div>
<div class="t" style="left:1321px;top:804.5px;font-size:9.5px;color:#e6e8ea;width:14px;text-align:right;letter-spacing:-0.5px;">20</div>
<div class="t" style="left:1321px;top:835.5px;font-size:9.5px;color:#e6e8ea;width:14px;text-align:right;letter-spacing:-0.5px;">40</div>
<div class="t" style="left:1321px;top:866.5px;font-size:9.5px;color:#e6e8ea;width:14px;text-align:right;letter-spacing:-0.5px;">80</div>
<div style="left:1324px;top:746px;width:9.8px;height:1px;background:#4c5156;"></div>
<div style="left:1324px;top:771.5px;width:9.8px;height:1px;background:#4c5156;"></div>
<div style="left:1324px;top:794.8px;width:9.8px;height:1px;background:#4c5156;"></div>
<div style="left:1324px;top:815.5px;width:9.8px;height:1px;background:#4c5156;"></div>
<div style="left:1324px;top:847.5px;width:9.8px;height:1px;background:#4c5156;"></div>
<div style="left:1324px;top:877.8px;width:9.8px;height:1px;background:#4c5156;"></div>
<div style="left:1287px;top:747.5px;width:31.5px;height:1px;background:#55464e;"></div>
<div style="left:1287px;top:772px;width:31.5px;height:1px;background:#55464e;"></div>
<div style="left:1287px;top:795.5px;width:31.5px;height:1px;background:#55464e;"></div>
<div style="left:1287px;top:816px;width:31.5px;height:1px;background:#55464e;"></div>
<div style="left:1287px;top:848px;width:31.5px;height:1px;background:#55464e;"></div>
<div style="left:1287px;top:878px;width:31.5px;height:1px;background:#55464e;"></div>
<div style="left:1287px;top:772px;width:31.5px;height:1.2px;background:#c9ccd0;"></div>
<div style="left:1292px;top:755px;width:21px;height:1px;background:rgba(150,155,160,0.16);"></div>
<div style="left:1292px;top:758px;width:21px;height:1px;background:rgba(150,155,160,0.16);"></div>
<div style="left:1292px;top:761px;width:21px;height:1px;background:rgba(150,155,160,0.16);"></div>
<div style="left:1292px;top:764px;width:21px;height:1px;background:rgba(150,155,160,0.16);"></div>
<div style="left:1292px;top:767px;width:21px;height:1px;background:rgba(150,155,160,0.16);"></div>
<div style="left:1292px;top:770px;width:21px;height:1px;background:rgba(150,155,160,0.16);"></div>
<div style="left:1292px;top:773px;width:21px;height:1px;background:rgba(150,155,160,0.16);"></div>
<div style="left:1292px;top:776px;width:21px;height:1px;background:rgba(150,155,160,0.16);"></div>
<div style="left:1292px;top:779px;width:21px;height:1px;background:rgba(150,155,160,0.16);"></div>
<div style="left:1292px;top:782px;width:21px;height:1px;background:rgba(150,155,160,0.16);"></div>
<div style="left:1292px;top:785px;width:21px;height:1px;background:rgba(150,155,160,0.16);"></div>
<div style="left:1292px;top:788px;width:21px;height:1px;background:rgba(150,155,160,0.16);"></div>
<svg style="left:1290px;top:751px;" width="25" height="40" viewBox="0 0 25 40"><path d="M0.5 5V0.5h6M24.500 5V0.5h-6M0.5 34.5v4.500h6M24.5 34.5v4.500h-6" fill="none" stroke="#6c7176" stroke-width="1"/></svg>
<div style="left:1300px;top:736px;width:5px;height:144px;background:linear-gradient(90deg,#0e0f11,#17191c);border-radius:2.5px;"></div>
<svg style="left:1292.5px;top:760px;filter:drop-shadow(0 1px 1px rgba(0,0,0,.6));" width="19" height="33.5" viewBox="0 0 19 33.5"><rect x="0" y="0" width="19" height="33.5" rx="1.5" fill="url(#fh)"/><rect x="0" y="0" width="1.2" height="33.5" fill="#8b9096" opacity="0.7"/><rect x="17.8" y="0" width="1.2" height="33.5" fill="#8b9096" opacity="0.7"/></svg>
<div class="t" style="left:1315px;top:885.5px;font-size:11px;color:#eef0f2;width:29.5px;text-align:right;letter-spacing:-0.4px;">-2.3</div>
<div style="left:1318.2px;top:917.8px;width:19px;height:13px;background:#4b5056;box-shadow:inset 0 0 0 1px #2c3034;"></div>
<div class="t" style="left:1318.2px;top:919px;font-size:11.5px;color:#e8eaec;width:19px;text-align:center;letter-spacing:-0.4px;">FX</div>
<div style="left:1338.2px;top:917.8px;width:12px;height:13px;background:#4b5056;box-shadow:inset 0 0 0 1px #2c3034;"></div>
<svg style="left:1341.2px;top:923px;" width="6" height="3.5" viewBox="0 0 6 3.5"><path d="M0 0h6l-3.0 3.5z" fill="#e8eaec"/></svg>
<div style="left:1285px;top:951px;width:68px;height:20px;background:#43363e;"></div>
<div style="left:1287.2px;top:953.5px;width:63.8px;height:13px;background:#44494f;box-shadow:inset 0 0 0 1px #1e2124;"></div>
<div style="left:1354px;top:610px;width:69px;height:323px;background:#43363e;"></div>
<div style="left:1422px;top:610px;width:1.2px;height:361px;background:#181b1e;"></div>
<div style="left:1354px;top:610px;width:68px;height:40px;"></div>
<div style="left:1389px;top:619px;width:29.5px;height:26.5px;background:#15171a;"></div>
<svg style="left:1359.3px;top:614.5px;" width="33" height="33" viewBox="0 0 33 33"><circle cx="16.5" cy="17.0" r="15.4" fill="#17191c"/><circle cx="16.5" cy="16.5" r="14.5" fill="url(#kb)"/><circle cx="16.5" cy="16.5" r="12.1" fill="url(#kg)"/><path d="M16.5 15.0L16.5 3.1999999999999993" stroke="#2c3035" stroke-width="2.2"/></svg>
<div class="t" style="left:1391px;top:621px;font-size:11px;color:#c9ccd0;width:28px;text-align:center;letter-spacing:-0.2px;">0.0*</div>
<div style="left:1403px;top:634.3px;width:15px;height:10.8px;background:#4a4f55;"></div>
<div class="t" style="left:1403px;top:634.5px;font-size:10px;color:#e6e8ea;width:15.5px;text-align:center;">φ</div>
<div style="left:1354px;top:651px;width:51.8px;height:14px;background:#5c6670;"></div>
<div class="t" style="left:1354px;top:653px;font-size:10.5px;color:#dfe6ee;width:52px;text-align:center;">15</div>
<div style="left:1406.8px;top:651px;width:15.2px;height:14px;background:#494e54;"></div>
<svg style="left:1409.8px;top:653.5px;" width="9" height="9" viewBox="0 0 9 9"><circle cx="4.5" cy="4.5" r="3.3" fill="none" stroke="#e4e6e8" stroke-width="1.1"/><circle cx="4.500" cy="4.500" r="1.2" fill="#e4e6e8"/></svg>
<div style="left:1358.8px;top:672px;width:25.2px;height:18.2px;background:#86c5f5;"></div>
<div class="t" style="left:1358.8px;top:676px;font-size:12px;color:#10202e;width:25.2px;text-align:center;letter-spacing:-0.3px;">Rd</div>
<div style="left:1391.7px;top:672px;width:25.5px;height:18.2px;background:#464b50;box-shadow:inset 0 0 0 1px #34383c;"></div>
<div class="t" style="left:1391.7px;top:673.6px;font-size:15.5px;color:#e4e6e8;width:25.5px;text-align:center;">S</div>
<div style="left:1358.8px;top:696.8px;width:25.2px;height:18.4px;background:#464b50;box-shadow:inset 0 0 0 1px #34383c;"></div>
<div style="left:1367px;top:701.6px;width:8.8px;height:8.8px;background:#d03540;border-radius:50%;filter:blur(0.3px);"></div>
<div style="left:1391.7px;top:696.8px;width:25.5px;height:18.4px;background:#464b50;box-shadow:inset 0 0 0 1px #34383c;"></div>
<div class="t" style="left:1391.7px;top:698.4px;font-size:15.5px;color:#e4e6e8;width:25.5px;text-align:center;">M</div>
<div style="left:1391px;top:722px;width:27.3px;height:158px;background:linear-gradient(#111316,#15171a 90%,#1d2024);"></div>
<div style="left:1391px;top:742.5px;width:27.3px;height:1px;background:#2b2f33;"></div>
<svg style="left:1400.5px;top:726px;" width="9" height="11.7" viewBox="0 0 9 11.7"><path d="M0 3.15h2.9699999999999998L7.74 0v11.700000000000001L2.9699999999999998 8.55H0z" fill="#cfd1d3"/><path d="M7.74 0v11.700000000000001" stroke="#cfd1d3" stroke-width="1.08"/></svg>
<div class="t" style="left:1390px;top:747.5px;font-size:9.5px;color:#e6e8ea;width:14px;text-align:right;letter-spacing:-0.5px;">12</div>
<div class="t" style="left:1390px;top:760.5px;font-size:9.5px;color:#e6e8ea;width:14px;text-align:right;letter-spacing:-0.5px;">0</div>
<div class="t" style="left:1390px;top:783.5px;font-size:9.5px;color:#e6e8ea;width:14px;text-align:right;letter-spacing:-0.5px;">10</div>
<div class="t" style="left:1390px;top:804.5px;font-size:9.5px;color:#e6e8ea;width:14px;text-align:right;letter-spacing:-0.5px;">20</div>
<div class="t" style="left:1390px;top:835.5px;font-size:9.5px;color:#e6e8ea;width:14px;text-align:right;letter-spacing:-0.5px;">40</div>
<div class="t" style="left:1390px;top:866.5px;font-size:9.5px;color:#e6e8ea;width:14px;text-align:right;letter-spacing:-0.5px;">80</div>
<div style="left:1393px;top:746px;width:9.8px;height:1px;background:#4c5156;"></div>
<div style="left:1393px;top:771.5px;width:9.8px;height:1px;background:#4c5156;"></div>
<div style="left:1393px;top:794.8px;width:9.8px;height:1px;background:#4c5156;"></div>
<div style="left:1393px;top:815.5px;width:9.8px;height:1px;background:#4c5156;"></div>
<div style="left:1393px;top:847.5px;width:9.8px;height:1px;background:#4c5156;"></div>
<div style="left:1393px;top:877.8px;width:9.8px;height:1px;background:#4c5156;"></div>
<div style="left:1356px;top:747.5px;width:31.5px;height:1px;background:#55464e;"></div>
<div style="left:1356px;top:772px;width:31.5px;height:1px;background:#55464e;"></div>
<div style="left:1356px;top:795.5px;width:31.5px;height:1px;background:#55464e;"></div>
<div style="left:1356px;top:816px;width:31.5px;height:1px;background:#55464e;"></div>
<div style="left:1356px;top:848px;width:31.5px;height:1px;background:#55464e;"></div>
<div style="left:1356px;top:878px;width:31.5px;height:1px;background:#55464e;"></div>
<div style="left:1356px;top:772px;width:31.5px;height:1.2px;background:#c9ccd0;"></div>
<div style="left:1361px;top:755px;width:21px;height:1px;background:rgba(150,155,160,0.16);"></div>
<div style="left:1361px;top:758px;width:21px;height:1px;background:rgba(150,155,160,0.16);"></div>
<div style="left:1361px;top:761px;width:21px;height:1px;background:rgba(150,155,160,0.16);"></div>
<div style="left:1361px;top:764px;width:21px;height:1px;background:rgba(150,155,160,0.16);"></div>
<div style="left:1361px;top:767px;width:21px;height:1px;background:rgba(150,155,160,0.16);"></div>
<div style="left:1361px;top:770px;width:21px;height:1px;background:rgba(150,155,160,0.16);"></div>
<div style="left:1361px;top:773px;width:21px;height:1px;background:rgba(150,155,160,0.16);"></div>
<div style="left:1361px;top:776px;width:21px;height:1px;background:rgba(150,155,160,0.16);"></div>
<div style="left:1361px;top:779px;width:21px;height:1px;background:rgba(150,155,160,0.16);"></div>
<div style="left:1361px;top:782px;width:21px;height:1px;background:rgba(150,155,160,0.16);"></div>
<div style="left:1361px;top:785px;width:21px;height:1px;background:rgba(150,155,160,0.16);"></div>
<div style="left:1361px;top:788px;width:21px;height:1px;background:rgba(150,155,160,0.16);"></div>
<svg style="left:1359px;top:751px;" width="25" height="40" viewBox="0 0 25 40"><path d="M0.5 5V0.5h6M24.500 5V0.5h-6M0.5 34.5v4.500h6M24.5 34.5v4.500h-6" fill="none" stroke="#6c7176" stroke-width="1"/></svg>
<div style="left:1369px;top:736px;width:5px;height:144px;background:linear-gradient(90deg,#0e0f11,#17191c);border-radius:2.5px;"></div>
<svg style="left:1361.5px;top:788px;filter:drop-shadow(0 1px 1px rgba(0,0,0,.6));" width="19" height="33.5" viewBox="0 0 19 33.5"><rect x="0" y="0" width="19" height="33.5" rx="1.5" fill="url(#fh)"/><rect x="0" y="0" width="1.2" height="33.5" fill="#8b9096" opacity="0.7"/><rect x="17.8" y="0" width="1.2" height="33.5" fill="#8b9096" opacity="0.7"/></svg>
<div class="t" style="left:1384px;top:885.5px;font-size:11px;color:#eef0f2;width:29.5px;text-align:right;letter-spacing:-0.4px;">-16.0</div>
<div style="left:1387.2px;top:917.8px;width:19px;height:13px;background:#4b5056;box-shadow:inset 0 0 0 1px #2c3034;"></div>
<div class="t" style="left:1387.2px;top:919px;font-size:11.5px;color:#e8eaec;width:19px;text-align:center;letter-spacing:-0.4px;">FX</div>
<div style="left:1407.2px;top:917.8px;width:12px;height:13px;background:#4b5056;box-shadow:inset 0 0 0 1px #2c3034;"></div>
<svg style="left:1410.2px;top:923px;" width="6" height="3.5" viewBox="0 0 6 3.5"><path d="M0 0h6l-3.0 3.5z" fill="#e8eaec"/></svg>
<div style="left:1354px;top:951px;width:68px;height:20px;background:#43363e;"></div>
<div style="left:1356.2px;top:953.5px;width:63.8px;height:13px;background:#44494f;box-shadow:inset 0 0 0 1px #1e2124;"></div>
<div style="left:1423px;top:610px;width:69px;height:323px;background:#43363e;"></div>
<div style="left:1491px;top:610px;width:1.2px;height:361px;background:#181b1e;"></div>
<div style="left:1423px;top:610px;width:68px;height:40px;"></div>
<div style="left:1458px;top:619px;width:29.5px;height:26.5px;background:#15171a;"></div>
<svg style="left:1428.3px;top:614.5px;" width="33" height="33" viewBox="0 0 33 33"><circle cx="16.5" cy="17.0" r="15.4" fill="#17191c"/><circle cx="16.5" cy="16.5" r="14.5" fill="url(#kb)"/><circle cx="16.5" cy="16.5" r="12.1" fill="url(#kg)"/><path d="M16.5 3.7A12.8 12.8 0 0 0 7.4 25.6" fill="none" stroke="#2a9cf0" stroke-width="1.7"/><path d="M15.8 17.2L7.4 25.6" stroke="#2a9cf0" stroke-width="1.6"/></svg>
<div class="t" style="left:1460px;top:621px;font-size:11px;color:#c9ccd0;width:28px;text-align:center;letter-spacing:-0.2px;">L</div>
<div style="left:1472px;top:634.3px;width:15px;height:10.8px;background:#4a4f55;"></div>
<div class="t" style="left:1472px;top:634.5px;font-size:10px;color:#e6e8ea;width:15.5px;text-align:center;">φ</div>
<div style="left:1423px;top:651px;width:51.8px;height:14px;background:#5c6670;"></div>
<div class="t" style="left:1423px;top:653px;font-size:10.5px;color:#dfe6ee;width:52px;text-align:center;">16</div>
<div style="left:1475.8px;top:651px;width:15.2px;height:14px;background:#494e54;"></div>
<svg style="left:1478.8px;top:653.5px;" width="9" height="9" viewBox="0 0 9 9"><circle cx="4.5" cy="4.5" r="3.3" fill="none" stroke="#e4e6e8" stroke-width="1.1"/><circle cx="4.500" cy="4.500" r="1.2" fill="#e4e6e8"/></svg>
<div style="left:1427.8px;top:672px;width:25.2px;height:18.2px;background:#86c5f5;"></div>
<div class="t" style="left:1427.8px;top:676px;font-size:12px;color:#10202e;width:25.2px;text-align:center;letter-spacing:-0.3px;">Rd</div>
<div style="left:1460.7px;top:672px;width:25.5px;height:18.2px;background:#464b50;box-shadow:inset 0 0 0 1px #34383c;"></div>
<div class="t" style="left:1460.7px;top:673.6px;font-size:15.5px;color:#e4e6e8;width:25.5px;text-align:center;">S</div>
<div style="left:1427.8px;top:696.8px;width:25.2px;height:18.4px;background:#464b50;box-shadow:inset 0 0 0 1px #34383c;"></div>
<div style="left:1436px;top:701.6px;width:8.8px;height:8.8px;background:#d03540;border-radius:50%;filter:blur(0.3px);"></div>
<div style="left:1460.7px;top:696.8px;width:25.5px;height:18.4px;background:#464b50;box-shadow:inset 0 0 0 1px #34383c;"></div>
<div class="t" style="left:1460.7px;top:698.4px;font-size:15.5px;color:#e4e6e8;width:25.5px;text-align:center;">M</div>
<div style="left:1460px;top:722px;width:27.3px;height:158px;background:linear-gradient(#111316,#15171a 90%,#1d2024);"></div>
<div style="left:1460px;top:742.5px;width:27.3px;height:1px;background:#2b2f33;"></div>
<svg style="left:1469.5px;top:726px;" width="9" height="11.7" viewBox="0 0 9 11.7"><path d="M0 3.15h2.9699999999999998L7.74 0v11.700000000000001L2.9699999999999998 8.55H0z" fill="#cfd1d3"/><path d="M7.74 0v11.700000000000001" stroke="#cfd1d3" stroke-width="1.08"/></svg>
<div class="t" style="left:1459px;top:747.5px;font-size:9.5px;color:#e6e8ea;width:14px;text-align:right;letter-spacing:-0.5px;">12</div>
<div class="t" style="left:1459px;top:760.5px;font-size:9.5px;color:#e6e8ea;width:14px;text-align:right;letter-spacing:-0.5px;">0</div>
<div class="t" style="left:1459px;top:783.5px;font-size:9.5px;color:#e6e8ea;width:14px;text-align:right;letter-spacing:-0.5px;">10</div>
<div class="t" style="left:1459px;top:804.5px;font-size:9.5px;color:#e6e8ea;width:14px;text-align:right;letter-spacing:-0.5px;">20</div>
<div class="t" style="left:1459px;top:835.5px;font-size:9.5px;color:#e6e8ea;width:14px;text-align:right;letter-spacing:-0.5px;">40</div>
<div class="t" style="left:1459px;top:866.5px;font-size:9.5px;color:#e6e8ea;width:14px;text-align:right;letter-spacing:-0.5px;">80</div>
<div style="left:1462px;top:746px;width:9.8px;height:1px;background:#4c5156;"></div>
<div style="left:1462px;top:771.5px;width:9.8px;height:1px;background:#4c5156;"></div>
<div style="left:1462px;top:794.8px;width:9.8px;height:1px;background:#4c5156;"></div>
<div style="left:1462px;top:815.5px;width:9.8px;height:1px;background:#4c5156;"></div>
<div style="left:1462px;top:847.5px;width:9.8px;height:1px;background:#4c5156;"></div>
<div style="left:1462px;top:877.8px;width:9.8px;height:1px;background:#4c5156;"></div>
<div style="left:1425px;top:747.5px;width:31.5px;height:1px;background:#55464e;"></div>
<div style="left:1425px;top:772px;width:31.5px;height:1px;background:#55464e;"></div>
<div style="left:1425px;top:795.5px;width:31.5px;height:1px;background:#55464e;"></div>
<div style="left:1425px;top:816px;width:31.5px;height:1px;background:#55464e;"></div>
<div style="left:1425px;top:848px;width:31.5px;height:1px;background:#55464e;"></div>
<div style="left:1425px;top:878px;width:31.5px;height:1px;background:#55464e;"></div>
<div style="left:1425px;top:772px;width:31.5px;height:1.2px;background:#c9ccd0;"></div>
<div style="left:1430px;top:755px;width:21px;height:1px;background:rgba(150,155,160,0.16);"></div>
<div style="left:1430px;top:758px;width:21px;height:1px;background:rgba(150,155,160,0.16);"></div>
<div style="left:1430px;top:761px;width:21px;height:1px;background:rgba(150,155,160,0.16);"></div>
<div style="left:1430px;top:764px;width:21px;height:1px;background:rgba(150,155,160,0.16);"></div>
<div style="left:1430px;top:767px;width:21px;height:1px;background:rgba(150,155,160,0.16);"></div>
<div style="left:1430px;top:770px;width:21px;height:1px;background:rgba(150,155,160,0.16);"></div>
<div style="left:1430px;top:773px;width:21px;height:1px;background:rgba(150,155,160,0.16);"></div>
<div style="left:1430px;top:776px;width:21px;height:1px;background:rgba(150,155,160,0.16);"></div>
<div style="left:1430px;top:779px;width:21px;height:1px;background:rgba(150,155,160,0.16);"></div>
<div style="left:1430px;top:782px;width:21px;height:1px;background:rgba(150,155,160,0.16);"></div>
<div style="left:1430px;top:785px;width:21px;height:1px;background:rgba(150,155,160,0.16);"></div>
<div style="left:1430px;top:788px;width:21px;height:1px;background:rgba(150,155,160,0.16);"></div>
<svg style="left:1428px;top:751px;" width="25" height="40" viewBox="0 0 25 40"><path d="M0.5 5V0.5h6M24.500 5V0.5h-6M0.5 34.5v4.500h6M24.5 34.5v4.500h-6" fill="none" stroke="#6c7176" stroke-width="1"/></svg>
<div style="left:1438px;top:736px;width:5px;height:144px;background:linear-gradient(90deg,#0e0f11,#17191c);border-radius:2.5px;"></div>
<svg style="left:1430.5px;top:795.4px;filter:drop-shadow(0 1px 1px rgba(0,0,0,.6));" width="19" height="33.5" viewBox="0 0 19 33.5"><rect x="0" y="0" width="19" height="33.5" rx="1.5" fill="url(#fh)"/><rect x="0" y="0" width="1.2" height="33.5" fill="#8b9096" opacity="0.7"/><rect x="17.8" y="0" width="1.2" height="33.5" fill="#8b9096" opacity="0.7"/></svg>
<div class="t" style="left:1453px;top:885.5px;font-size:11px;color:#eef0f2;width:29.5px;text-align:right;letter-spacing:-0.4px;">-19.7</div>
<div style="left:1456.2px;top:917.8px;width:19px;height:13px;background:#4b5056;box-shadow:inset 0 0 0 1px #2c3034;"></div>
<div class="t" style="left:1456.2px;top:919px;font-size:11.5px;color:#e8eaec;width:19px;text-align:center;letter-spacing:-0.4px;">FX</div>
<div style="left:1476.2px;top:917.8px;width:12px;height:13px;background:#4b5056;box-shadow:inset 0 0 0 1px #2c3034;"></div>
<svg style="left:1479.2px;top:923px;" width="6" height="3.5" viewBox="0 0 6 3.5"><path d="M0 0h6l-3.0 3.5z" fill="#e8eaec"/></svg>
<div style="left:1423px;top:951px;width:68px;height:20px;background:#43363e;"></div>
<div style="left:1425.2px;top:953.5px;width:63.8px;height:13px;background:#44494f;box-shadow:inset 0 0 0 1px #1e2124;"></div>
<div style="left:1492px;top:610px;width:69px;height:323px;background:#25292e;"></div>
<div style="left:1560px;top:610px;width:1.2px;height:361px;background:#181b1e;"></div>
<div style="left:1492px;top:610px;width:68px;height:40px;background:#22262a;"></div>
<div style="left:1527px;top:619px;width:29.5px;height:26.5px;background:#15171a;"></div>
<svg style="left:1497.3px;top:614.5px;" width="33" height="33" viewBox="0 0 33 33"><circle cx="16.5" cy="17.0" r="15.4" fill="#17191c"/><circle cx="16.5" cy="16.5" r="14.5" fill="url(#kb)"/><circle cx="16.5" cy="16.5" r="12.1" fill="url(#kg)"/><path d="M16.5 3.7A12.8 12.8 0 0 1 25.6 25.6" fill="none" stroke="#f2462e" stroke-width="1.7"/><path d="M17.2 17.2L25.6 25.6" stroke="#f2462e" stroke-width="1.6"/></svg>
<div class="t" style="left:1529px;top:621px;font-size:11px;color:#c9ccd0;width:28px;text-align:center;letter-spacing:-0.2px;">R</div>
<div style="left:1541px;top:634.3px;width:15px;height:10.8px;background:#4a4f55;"></div>
<div class="t" style="left:1541px;top:634.5px;font-size:10px;color:#e6e8ea;width:15.5px;text-align:center;">φ</div>
<div style="left:1492px;top:651px;width:51.8px;height:14px;background:#5c6670;"></div>
<div class="t" style="left:1492px;top:653px;font-size:10.5px;color:#dfe6ee;width:52px;text-align:center;">17</div>
<div style="left:1544.8px;top:651px;width:15.2px;height:14px;background:#494e54;"></div>
<svg style="left:1547.8px;top:653.5px;" width="9" height="9" viewBox="0 0 9 9"><circle cx="4.5" cy="4.5" r="3.3" fill="none" stroke="#e4e6e8" stroke-width="1.1"/><circle cx="4.500" cy="4.500" r="1.2" fill="#e4e6e8"/></svg>
<div style="left:1496.8px;top:672px;width:25.2px;height:18.2px;background:#86c5f5;"></div>
<div class="t" style="left:1496.8px;top:676px;font-size:12px;color:#10202e;width:25.2px;text-align:center;letter-spacing:-0.3px;">Rd</div>
<div style="left:1529.7px;top:672px;width:25.5px;height:18.2px;background:#464b50;box-shadow:inset 0 0 0 1px #34383c;"></div>
<div class="t" style="left:1529.7px;top:673.6px;font-size:15.5px;color:#e4e6e8;width:25.5px;text-align:center;">S</div>
<div style="left:1496.8px;top:696.8px;width:25.2px;height:18.4px;background:#464b50;box-shadow:inset 0 0 0 1px #34383c;"></div>
<div style="left:1505px;top:701.6px;width:8.8px;height:8.8px;background:#d03540;border-radius:50%;filter:blur(0.3px);"></div>
<div style="left:1529.7px;top:696.8px;width:25.5px;height:18.4px;background:#464b50;box-shadow:inset 0 0 0 1px #34383c;"></div>
<div class="t" style="left:1529.7px;top:698.4px;font-size:15.5px;color:#e4e6e8;width:25.5px;text-align:center;">M</div>
<div style="left:1529px;top:722px;width:27.3px;height:158px;background:linear-gradient(#111316,#15171a 90%,#1d2024);"></div>
<div style="left:1529px;top:742.5px;width:27.3px;height:1px;background:#2b2f33;"></div>
<svg style="left:1538.5px;top:726px;" width="9" height="11.7" viewBox="0 0 9 11.7"><path d="M0 3.15h2.9699999999999998L7.74 0v11.700000000000001L2.9699999999999998 8.55H0z" fill="#cfd1d3"/><path d="M7.74 0v11.700000000000001" stroke="#cfd1d3" stroke-width="1.08"/></svg>
<div class="t" style="left:1528px;top:747.5px;font-size:9.5px;color:#e6e8ea;width:14px;text-align:right;letter-spacing:-0.5px;">12</div>
<div class="t" style="left:1528px;top:760.5px;font-size:9.5px;color:#e6e8ea;width:14px;text-align:right;letter-spacing:-0.5px;">0</div>
<div class="t" style="left:1528px;top:783.5px;font-size:9.5px;color:#e6e8ea;width:14px;text-align:right;letter-spacing:-0.5px;">10</div>
<div class="t" style="left:1528px;top:804.5px;font-size:9.5px;color:#e6e8ea;width:14px;text-align:right;letter-spacing:-0.5px;">20</div>
<div class="t" style="left:1528px;top:835.5px;font-size:9.5px;color:#e6e8ea;width:14px;text-align:right;letter-spacing:-0.5px;">40</div>
<div class="t" style="left:1528px;top:866.5px;font-size:9.5px;color:#e6e8ea;width:14px;text-align:right;letter-spacing:-0.5px;">80</div>
<div style="left:1531px;top:746px;width:9.8px;height:1px;background:#4c5156;"></div>
<div style="left:1531px;top:771.5px;width:9.8px;height:1px;background:#4c5156;"></div>
<div style="left:1531px;top:794.8px;width:9.8px;height:1px;background:#4c5156;"></div>
<div style="left:1531px;top:815.5px;width:9.8px;height:1px;background:#4c5156;"></div>
<div style="left:1531px;top:847.5px;width:9.8px;height:1px;background:#4c5156;"></div>
<div style="left:1531px;top:877.8px;width:9.8px;height:1px;background:#4c5156;"></div>
<div style="left:1494px;top:747.5px;width:31.5px;height:1px;background:#3b3f44;"></div>
<div style="left:1494px;top:772px;width:31.5px;height:1px;background:#3b3f44;"></div>
<div style="left:1494px;top:795.5px;width:31.5px;height:1px;background:#3b3f44;"></div>
<div style="left:1494px;top:816px;width:31.5px;height:1px;background:#3b3f44;"></div>
<div style="left:1494px;top:848px;width:31.5px;height:1px;background:#3b3f44;"></div>
<div style="left:1494px;top:878px;width:31.5px;height:1px;background:#3b3f44;"></div>
<div style="left:1494px;top:772px;width:31.5px;height:1.2px;background:#c9ccd0;"></div>
<div style="left:1499px;top:755px;width:21px;height:1px;background:rgba(150,155,160,0.16);"></div>
<div style="left:1499px;top:758px;width:21px;height:1px;background:rgba(150,155,160,0.16);"></div>
<div style="left:1499px;top:761px;width:21px;height:1px;background:rgba(150,155,160,0.16);"></div>
<div style="left:1499px;top:764px;width:21px;height:1px;background:rgba(150,155,160,0.16);"></div>
<div style="left:1499px;top:767px;width:21px;height:1px;background:rgba(150,155,160,0.16);"></div>
<div style="left:1499px;top:770px;width:21px;height:1px;background:rgba(150,155,160,0.16);"></div>
<div style="left:1499px;top:773px;width:21px;height:1px;background:rgba(150,155,160,0.16);"></div>
<div style="left:1499px;top:776px;width:21px;height:1px;background:rgba(150,155,160,0.16);"></div>
<div style="left:1499px;top:779px;width:21px;height:1px;background:rgba(150,155,160,0.16);"></div>
<div style="left:1499px;top:782px;width:21px;height:1px;background:rgba(150,155,160,0.16);"></div>
<div style="left:1499px;top:785px;width:21px;height:1px;background:rgba(150,155,160,0.16);"></div>
<div style="left:1499px;top:788px;width:21px;height:1px;background:rgba(150,155,160,0.16);"></div>
<svg style="left:1497px;top:751px;" width="25" height="40" viewBox="0 0 25 40"><path d="M0.5 5V0.5h6M24.500 5V0.5h-6M0.5 34.5v4.500h6M24.5 34.5v4.500h-6" fill="none" stroke="#6c7176" stroke-width="1"/></svg>
<div style="left:1507px;top:736px;width:5px;height:144px;background:linear-gradient(90deg,#0e0f11,#17191c);border-radius:2.5px;"></div>
<svg style="left:1499.5px;top:762px;filter:drop-shadow(0 1px 1px rgba(0,0,0,.6));" width="19" height="33.5" viewBox="0 0 19 33.5"><rect x="0" y="0" width="19" height="33.5" rx="1.5" fill="url(#fh)"/><rect x="0" y="0" width="1.2" height="33.5" fill="#8b9096" opacity="0.7"/><rect x="17.8" y="0" width="1.2" height="33.5" fill="#8b9096" opacity="0.7"/></svg>
<div class="t" style="left:1522px;top:885.5px;font-size:11px;color:#eef0f2;width:29.5px;text-align:right;letter-spacing:-0.4px;">-3.4</div>
<div style="left:1525.2px;top:917.8px;width:19px;height:13px;background:#4b5056;box-shadow:inset 0 0 0 1px #2c3034;"></div>
<div class="t" style="left:1525.2px;top:919px;font-size:11.5px;color:#e8eaec;width:19px;text-align:center;letter-spacing:-0.4px;">FX</div>
<div style="left:1545.2px;top:917.8px;width:12px;height:13px;background:#4b5056;box-shadow:inset 0 0 0 1px #2c3034;"></div>
<svg style="left:1548.2px;top:923px;" width="6" height="3.5" viewBox="0 0 6 3.5"><path d="M0 0h6l-3.0 3.5z" fill="#e8eaec"/></svg>
<div style="left:1492px;top:951px;width:68px;height:20px;background:#25292e;"></div>
<div style="left:1494.2px;top:953.5px;width:63.8px;height:13px;background:#44494f;box-shadow:inset 0 0 0 1px #1e2124;"></div>
<div style="left:1561px;top:610px;width:69px;height:323px;background:#43363e;"></div>
<div style="left:1629px;top:610px;width:1.2px;height:361px;background:#181b1e;"></div>
<div style="left:1561px;top:610px;width:68px;height:40px;"></div>
<div style="left:1596px;top:619px;width:29.5px;height:26.5px;background:#15171a;"></div>
<svg style="left:1566.3px;top:614.5px;" width="33" height="33" viewBox="0 0 33 33"><circle cx="16.5" cy="17.0" r="15.4" fill="#17191c"/><circle cx="16.5" cy="16.5" r="14.5" fill="url(#kb)"/><circle cx="16.5" cy="16.5" r="12.1" fill="url(#kg)"/><path d="M16.5 15.0L16.5 3.1999999999999993" stroke="#2c3035" stroke-width="2.2"/></svg>
<div class="t" style="left:1598px;top:621px;font-size:11px;color:#c9ccd0;width:28px;text-align:center;letter-spacing:-0.2px;">0.0*</div>
<div style="left:1610px;top:634.3px;width:15px;height:10.8px;background:#4a4f55;"></div>
<div class="t" style="left:1610px;top:634.5px;font-size:10px;color:#e6e8ea;width:15.5px;text-align:center;">φ</div>
<div style="left:1561px;top:651px;width:51.8px;height:14px;background:#5c6670;"></div>
<div class="t" style="left:1561px;top:653px;font-size:10.5px;color:#dfe6ee;width:52px;text-align:center;">18</div>
<div style="left:1613.8px;top:651px;width:15.2px;height:14px;background:#494e54;"></div>
<svg style="left:1616.8px;top:653.5px;" width="9" height="9" viewBox="0 0 9 9"><circle cx="4.5" cy="4.5" r="3.3" fill="none" stroke="#e4e6e8" stroke-width="1.1"/><circle cx="4.500" cy="4.500" r="1.2" fill="#e4e6e8"/></svg>
<div style="left:1565.8px;top:672px;width:25.2px;height:18.2px;background:#86c5f5;"></div>
<div class="t" style="left:1565.8px;top:676px;font-size:12px;color:#10202e;width:25.2px;text-align:center;letter-spacing:-0.3px;">Rd</div>
<div style="left:1598.7px;top:672px;width:25.5px;height:18.2px;background:#464b50;box-shadow:inset 0 0 0 1px #34383c;"></div>
<div class="t" style="left:1598.7px;top:673.6px;font-size:15.5px;color:#e4e6e8;width:25.5px;text-align:center;">S</div>
<div style="left:1565.8px;top:696.8px;width:25.2px;height:18.4px;background:#464b50;box-shadow:inset 0 0 0 1px #34383c;"></div>
<div style="left:1574px;top:701.6px;width:8.8px;height:8.8px;background:#d03540;border-radius:50%;filter:blur(0.3px);"></div>
<div style="left:1598.7px;top:696.8px;width:25.5px;height:18.4px;background:#464b50;box-shadow:inset 0 0 0 1px #34383c;"></div>
<div class="t" style="left:1598.7px;top:698.4px;font-size:15.5px;color:#e4e6e8;width:25.5px;text-align:center;">M</div>
<div style="left:1598px;top:722px;width:27.3px;height:158px;background:linear-gradient(#111316,#15171a 90%,#1d2024);"></div>
<div style="left:1598px;top:742.5px;width:27.3px;height:1px;background:#2b2f33;"></div>
<svg style="left:1607.5px;top:726px;" width="9" height="11.7" viewBox="0 0 9 11.7"><path d="M0 3.15h2.9699999999999998L7.74 0v11.700000000000001L2.9699999999999998 8.55H0z" fill="#cfd1d3"/><path d="M7.74 0v11.700000000000001" stroke="#cfd1d3" stroke-width="1.08"/></svg>
<div class="t" style="left:1597px;top:747.5px;font-size:9.5px;color:#e6e8ea;width:14px;text-align:right;letter-spacing:-0.5px;">12</div>
<div class="t" style="left:1597px;top:760.5px;font-size:9.5px;color:#e6e8ea;width:14px;text-align:right;letter-spacing:-0.5px;">0</div>
<div class="t" style="left:1597px;top:783.5px;font-size:9.5px;color:#e6e8ea;width:14px;text-align:right;letter-spacing:-0.5px;">10</div>
<div class="t" style="left:1597px;top:804.5px;font-size:9.5px;color:#e6e8ea;width:14px;text-align:right;letter-spacing:-0.5px;">20</div>
<div class="t" style="left:1597px;top:835.5px;font-size:9.5px;color:#e6e8ea;width:14px;text-align:right;letter-spacing:-0.5px;">40</div>
<div class="t" style="left:1597px;top:866.5px;font-size:9.5px;color:#e6e8ea;width:14px;text-align:right;letter-spacing:-0.5px;">80</div>
<div style="left:1600px;top:746px;width:9.8px;height:1px;background:#4c5156;"></div>
<div style="left:1600px;top:771.5px;width:9.8px;height:1px;background:#4c5156;"></div>
<div style="left:1600px;top:794.8px;width:9.8px;height:1px;background:#4c5156;"></div>
<div style="left:1600px;top:815.5px;width:9.8px;height:1px;background:#4c5156;"></div>
<div style="left:1600px;top:847.5px;width:9.8px;height:1px;background:#4c5156;"></div>
<div style="left:1600px;top:877.8px;width:9.8px;height:1px;background:#4c5156;"></div>
<div style="left:1563px;top:747.5px;width:31.5px;height:1px;background:#55464e;"></div>
<div style="left:1563px;top:772px;width:31.5px;height:1px;background:#55464e;"></div>
<div style="left:1563px;top:795.5px;width:31.5px;height:1px;background:#55464e;"></div>
<div style="left:1563px;top:816px;width:31.5px;height:1px;background:#55464e;"></div>
<div style="left:1563px;top:848px;width:31.5px;height:1px;background:#55464e;"></div>
<div style="left:1563px;top:878px;width:31.5px;height:1px;background:#55464e;"></div>
<div style="left:1563px;top:772px;width:31.5px;height:1.2px;background:#c9ccd0;"></div>
<div style="left:1568px;top:755px;width:21px;height:1px;background:rgba(150,155,160,0.16);"></div>
<div style="left:1568px;top:758px;width:21px;height:1px;background:rgba(150,155,160,0.16);"></div>
<div style="left:1568px;top:761px;width:21px;height:1px;background:rgba(150,155,160,0.16);"></div>
<div style="left:1568px;top:764px;width:21px;height:1px;background:rgba(150,155,160,0.16);"></div>
<div style="left:1568px;top:767px;width:21px;height:1px;background:rgba(150,155,160,0.16);"></div>
<div style="left:1568px;top:770px;width:21px;height:1px;background:rgba(150,155,160,0.16);"></div>
<div style="left:1568px;top:773px;width:21px;height:1px;background:rgba(150,155,160,0.16);"></div>
<div style="left:1568px;top:776px;width:21px;height:1px;background:rgba(150,155,160,0.16);"></div>
<div style="left:1568px;top:779px;width:21px;height:1px;background:rgba(150,155,160,0.16);"></div>
<div style="left:1568px;top:782px;width:21px;height:1px;background:rgba(150,155,160,0.16);"></div>
<div style="left:1568px;top:785px;width:21px;height:1px;background:rgba(150,155,160,0.16);"></div>
<div style="left:1568px;top:788px;width:21px;height:1px;background:rgba(150,155,160,0.16);"></div>
<svg style="left:1566px;top:751px;" width="25" height="40" viewBox="0 0 25 40"><path d="M0.5 5V0.5h6M24.500 5V0.5h-6M0.5 34.5v4.500h6M24.5 34.5v4.500h-6" fill="none" stroke="#6c7176" stroke-width="1"/></svg>
<div style="left:1576px;top:736px;width:5px;height:144px;background:linear-gradient(90deg,#0e0f11,#17191c);border-radius:2.5px;"></div>
<svg style="left:1568.5px;top:780.6px;filter:drop-shadow(0 1px 1px rgba(0,0,0,.6));" width="19" height="33.5" viewBox="0 0 19 33.5"><rect x="0" y="0" width="19" height="33.5" rx="1.5" fill="url(#fh)"/><rect x="0" y="0" width="1.2" height="33.5" fill="#8b9096" opacity="0.7"/><rect x="17.8" y="0" width="1.2" height="33.5" fill="#8b9096" opacity="0.7"/></svg>
<div class="t" style="left:1591px;top:885.5px;font-size:11px;color:#eef0f2;width:29.5px;text-align:right;letter-spacing:-0.4px;">-12.1</div>
<div style="left:1594.2px;top:917.8px;width:19px;height:13px;background:#4b5056;box-shadow:inset 0 0 0 1px #2c3034;"></div>
<div class="t" style="left:1594.2px;top:919px;font-size:11.5px;color:#e8eaec;width:19px;text-align:center;letter-spacing:-0.4px;">FX</div>
<div style="left:1614.2px;top:917.8px;width:12px;height:13px;background:#4b5056;box-shadow:inset 0 0 0 1px #2c3034;"></div>
<svg style="left:1617.2px;top:923px;" width="6" height="3.5" viewBox="0 0 6 3.5"><path d="M0 0h6l-3.0 3.5z" fill="#e8eaec"/></svg>
<div style="left:1561px;top:951px;width:68px;height:20px;background:#43363e;"></div>
<div style="left:1563.2px;top:953.5px;width:63.8px;height:13px;background:#44494f;box-shadow:inset 0 0 0 1px #1e2124;"></div>
<div style="left:1630px;top:610px;width:69px;height:323px;background:#25292e;"></div>
<div style="left:1698px;top:610px;width:1.2px;height:361px;background:#181b1e;"></div>
<div style="left:1630px;top:610px;width:68px;height:40px;background:#22262a;"></div>
<div style="left:1665px;top:619px;width:29.5px;height:26.5px;background:#15171a;"></div>
<svg style="left:1635.3px;top:614.5px;" width="33" height="33" viewBox="0 0 33 33"><circle cx="16.5" cy="17.0" r="15.4" fill="#17191c"/><circle cx="16.5" cy="16.5" r="14.5" fill="url(#kb)"/><circle cx="16.5" cy="16.5" r="12.1" fill="url(#kg)"/><path d="M16.5 15.0L16.5 3.1999999999999993" stroke="#2c3035" stroke-width="2.2"/></svg>
<div class="t" style="left:1667px;top:621px;font-size:11px;color:#c9ccd0;width:28px;text-align:center;letter-spacing:-0.2px;">0.0*</div>
<div style="left:1679px;top:634.3px;width:15px;height:10.8px;background:#4a4f55;"></div>
<div class="t" style="left:1679px;top:634.5px;font-size:10px;color:#e6e8ea;width:15.5px;text-align:center;">φ</div>
<div style="left:1630px;top:651px;width:51.8px;height:14px;background:#5c6670;"></div>
<div class="t" style="left:1630px;top:653px;font-size:10.5px;color:#dfe6ee;width:52px;text-align:center;">19</div>
<div style="left:1682.8px;top:651px;width:15.2px;height:14px;background:#494e54;"></div>
<svg style="left:1685.8px;top:653.5px;" width="9" height="9" viewBox="0 0 9 9"><circle cx="4.5" cy="4.5" r="3.3" fill="none" stroke="#e4e6e8" stroke-width="1.1"/><circle cx="4.500" cy="4.500" r="1.2" fill="#e4e6e8"/></svg>
<div style="left:1634.8px;top:672px;width:25.2px;height:18.2px;background:#86c5f5;"></div>
<div class="t" style="left:1634.8px;top:676px;font-size:12px;color:#10202e;width:25.2px;text-align:center;letter-spacing:-0.3px;">Rd</div>
<div style="left:1667.7px;top:672px;width:25.5px;height:18.2px;background:#464b50;box-shadow:inset 0 0 0 1px #34383c;"></div>
<div class="t" style="left:1667.7px;top:673.6px;font-size:15.5px;color:#e4e6e8;width:25.5px;text-align:center;">S</div>
<div style="left:1634.8px;top:696.8px;width:25.2px;height:18.4px;background:#464b50;box-shadow:inset 0 0 0 1px #34383c;"></div>
<div style="left:1643px;top:701.6px;width:8.8px;height:8.8px;background:#d03540;border-radius:50%;filter:blur(0.3px);"></div>
<div style="left:1667.7px;top:696.8px;width:25.5px;height:18.4px;background:#464b50;box-shadow:inset 0 0 0 1px #34383c;"></div>
<div class="t" style="left:1667.7px;top:698.4px;font-size:15.5px;color:#e4e6e8;width:25.5px;text-align:center;">M</div>
<div style="left:1667px;top:722px;width:27.3px;height:158px;background:linear-gradient(#111316,#15171a 90%,#1d2024);"></div>
<div style="left:1667px;top:742.5px;width:27.3px;height:1px;background:#2b2f33;"></div>
<svg style="left:1676.5px;top:726px;" width="9" height="11.7" viewBox="0 0 9 11.7"><path d="M0 3.15h2.9699999999999998L7.74 0v11.700000000000001L2.9699999999999998 8.55H0z" fill="#cfd1d3"/><path d="M7.74 0v11.700000000000001" stroke="#cfd1d3" stroke-width="1.08"/></svg>
<div class="t" style="left:1666px;top:747.5px;font-size:9.5px;color:#e6e8ea;width:14px;text-align:right;letter-spacing:-0.5px;">12</div>
<div class="t" style="left:1666px;top:760.5px;font-size:9.5px;color:#e6e8ea;width:14px;text-align:right;letter-spacing:-0.5px;">0</div>
<div class="t" style="left:1666px;top:783.5px;font-size:9.5px;color:#e6e8ea;width:14px;text-align:right;letter-spacing:-0.5px;">10</div>
<div class="t" style="left:1666px;top:804.5px;font-size:9.5px;color:#e6e8ea;width:14px;text-align:right;letter-spacing:-0.5px;">20</div>
<div class="t" style="left:1666px;top:835.5px;font-size:9.5px;color:#e6e8ea;width:14px;text-align:right;letter-spacing:-0.5px;">40</div>
<div class="t" style="left:1666px;top:866.5px;font-size:9.5px;color:#e6e8ea;width:14px;text-align:right;letter-spacing:-0.5px;">80</div>
<div style="left:1669px;top:746px;width:9.8px;height:1px;background:#4c5156;"></div>
<div style="left:1669px;top:771.5px;width:9.8px;height:1px;background:#4c5156;"></div>
<div style="left:1669px;top:794.8px;width:9.8px;height:1px;background:#4c5156;"></div>
<div style="left:1669px;top:815.5px;width:9.8px;height:1px;background:#4c5156;"></div>
<div style="left:1669px;top:847.5px;width:9.8px;height:1px;background:#4c5156;"></div>
<div style="left:1669px;top:877.8px;width:9.8px;height:1px;background:#4c5156;"></div>
<div style="left:1632px;top:747.5px;width:31.5px;height:1px;background:#3b3f44;"></div>
<div style="left:1632px;top:772px;width:31.5px;height:1px;background:#3b3f44;"></div>
<div style="left:1632px;top:795.5px;width:31.5px;height:1px;background:#3b3f44;"></div>
<div style="left:1632px;top:816px;width:31.5px;height:1px;background:#3b3f44;"></div>
<div style="left:1632px;top:848px;width:31.5px;height:1px;background:#3b3f44;"></div>
<div style="left:1632px;top:878px;width:31.5px;height:1px;background:#3b3f44;"></div>
<div style="left:1632px;top:772px;width:31.5px;height:1.2px;background:#c9ccd0;"></div>
<div style="left:1637px;top:755px;width:21px;height:1px;background:rgba(150,155,160,0.16);"></div>
<div style="left:1637px;top:758px;width:21px;height:1px;background:rgba(150,155,160,0.16);"></div>
<div style="left:1637px;top:761px;width:21px;height:1px;background:rgba(150,155,160,0.16);"></div>
<div style="left:1637px;top:764px;width:21px;height:1px;background:rgba(150,155,160,0.16);"></div>
<div style="left:1637px;top:767px;width:21px;height:1px;background:rgba(150,155,160,0.16);"></div>
<div style="left:1637px;top:770px;width:21px;height:1px;background:rgba(150,155,160,0.16);"></div>
<div style="left:1637px;top:773px;width:21px;height:1px;background:rgba(150,155,160,0.16);"></div>
<div style="left:1637px;top:776px;width:21px;height:1px;background:rgba(150,155,160,0.16);"></div>
<div style="left:1637px;top:779px;width:21px;height:1px;background:rgba(150,155,160,0.16);"></div>
<div style="left:1637px;top:782px;width:21px;height:1px;background:rgba(150,155,160,0.16);"></div>
<div style="left:1637px;top:785px;width:21px;height:1px;background:rgba(150,155,160,0.16);"></div>
<div style="left:1637px;top:788px;width:21px;height:1px;background:rgba(150,155,160,0.16);"></div>
<svg style="left:1635px;top:751px;" width="25" height="40" viewBox="0 0 25 40"><path d="M0.5 5V0.5h6M24.500 5V0.5h-6M0.5 34.5v4.500h6M24.5 34.5v4.500h-6" fill="none" stroke="#6c7176" stroke-width="1"/></svg>
<div style="left:1645px;top:736px;width:5px;height:144px;background:linear-gradient(90deg,#0e0f11,#17191c);border-radius:2.5px;"></div>
<svg style="left:1637.5px;top:759.3px;filter:drop-shadow(0 1px 1px rgba(0,0,0,.6));" width="19" height="33.5" viewBox="0 0 19 33.5"><rect x="0" y="0" width="19" height="33.5" rx="1.5" fill="url(#fh)"/><rect x="0" y="0" width="1.2" height="33.5" fill="#8b9096" opacity="0.7"/><rect x="17.8" y="0" width="1.2" height="33.5" fill="#8b9096" opacity="0.7"/></svg>
<div class="t" style="left:1660px;top:885.5px;font-size:11px;color:#eef0f2;width:29.5px;text-align:right;letter-spacing:-0.4px;">-2.0</div>
<div style="left:1663.2px;top:917.8px;width:19px;height:13px;background:#4b5056;box-shadow:inset 0 0 0 1px #2c3034;"></div>
<div class="t" style="left:1663.2px;top:919px;font-size:11.5px;color:#e8eaec;width:19px;text-align:center;letter-spacing:-0.4px;">FX</div>
<div style="left:1683.2px;top:917.8px;width:12px;height:13px;background:#4b5056;box-shadow:inset 0 0 0 1px #2c3034;"></div>
<svg style="left:1686.2px;top:923px;" width="6" height="3.5" viewBox="0 0 6 3.5"><path d="M0 0h6l-3.0 3.5z" fill="#e8eaec"/></svg>
<div style="left:1630px;top:951px;width:68px;height:20px;background:#25292e;"></div>
<div style="left:1632.2px;top:953.5px;width:63.8px;height:13px;background:#44494f;box-shadow:inset 0 0 0 1px #1e2124;"></div>
<div style="left:388px;top:934px;width:1311px;height:16.5px;background:#0f1215;"></div>
<div style="left:1079px;top:934px;width:66px;height:16.5px;background:#161b21;"></div>
<div style="left:1700px;top:610px;width:118px;height:361px;background:#24282c;"></div>
<div style="left:1818px;top:610px;width:2px;height:361px;background:#181b1e;"></div>
<svg style="left:1700.8px;top:614.8px;" width="33" height="33" viewBox="0 0 33 33"><circle cx="16.5" cy="17.0" r="15.4" fill="#17191c"/><circle cx="16.5" cy="16.5" r="14.5" fill="url(#kb)"/><circle cx="16.5" cy="16.5" r="12.1" fill="url(#kg)"/><path d="M16.5 3.7A12.8 12.8 0 0 0 10.7 5.1" fill="none" stroke="#2a9cf0" stroke-width="1.7"/><path d="M16.0 15.6L10.7 5.1" stroke="#2a9cf0" stroke-width="1.6"/></svg>
<div style="left:1731px;top:619px;width:31px;height:26.5px;background:#15171a;"></div>
<div class="t" style="left:1736px;top:621px;font-size:10.5px;color:#c9ccd0;width:27px;text-align:center;">73</div>
<div style="left:1738px;top:634px;width:23.6px;height:11.3px;background:#86c5f5;"></div>
<div class="t" style="left:1738px;top:634.8px;font-size:10.5px;color:#10202e;width:23.6px;text-align:center;letter-spacing:-0.4px;">StEn</div>
<div style="left:1699px;top:651px;width:2.8px;height:14px;background:#5a5e64;"></div>
<div style="left:1702.8px;top:651px;width:30px;height:14px;background:#494e54;"></div>
<div class="t" style="left:1702.8px;top:653.2px;font-size:10px;color:#d8dbde;width:30px;text-align:center;letter-spacing:-0.3px;">Mono</div>
<div style="left:1734px;top:651px;width:15px;height:14px;background:#494e54;"></div>
<div class="t" style="left:1734px;top:653.2px;font-size:10px;color:#d8dbde;width:15px;text-align:center;">N</div>
<div style="left:1750.7px;top:651px;width:15.8px;height:14px;background:#86c5f5;"></div>
<svg style="left:1754.2px;top:653.5px;" width="9" height="9" viewBox="0 0 9 9"><circle cx="4.5" cy="4.5" r="3.3" fill="none" stroke="#14283c" stroke-width="1.100"/><circle cx="4.5" cy="4.5" r="1.2" fill="#14283c"/></svg>
<div style="left:1702px;top:672px;width:25.2px;height:18.2px;background:#86c5f5;"></div>
<div class="t" style="left:1702px;top:676px;font-size:12px;color:#10202e;width:25.2px;text-align:center;letter-spacing:-0.3px;">Rd</div>
<div style="left:1735px;top:672px;width:25.5px;height:18.5px;background:#464b50;box-shadow:inset 0 0 0 1px #34383c;"></div>
<div class="t" style="left:1735px;top:673.5px;font-size:16px;color:#e4e6e8;width:25.5px;text-align:center;">S</div>
<div class="t b" style="left:1794px;top:715.5px;font-size:25px;color:#484c51;transform:rotate(-90deg);transform-origin:0 0;letter-spacing:-1.1px;">MASTER</div>
<div class="t" style="left:1780.5px;top:715px;font-size:14px;color:#3e4247;transform:rotate(-90deg);transform-origin:0 0;">carbon</div>
<div style="left:1714.8px;top:736px;width:4.6px;height:144px;background:linear-gradient(90deg,#0e0f11,#17191c);border-radius:2.5px;"></div>
<div style="left:1740.8px;top:736px;width:4.6px;height:144px;background:linear-gradient(90deg,#0e0f11,#17191c);border-radius:2.5px;"></div>
<div class="t" style="left:1723.5px;top:736.5px;font-size:9.5px;color:#c9ccd0;width:15px;text-align:center;letter-spacing:-0.4px;">12</div>
<div class="t" style="left:1720px;top:804.5px;font-size:9.5px;color:#c9ccd0;width:18px;text-align:center;">-20</div>
<div style="left:1722px;top:814.5px;width:14px;height:1px;background:#3b3f44;"></div>
<div class="t" style="left:1720px;top:836px;font-size:9.5px;color:#c9ccd0;width:18px;text-align:center;">-40</div>
<div style="left:1722px;top:846px;width:14px;height:1px;background:#3b3f44;"></div>
<div class="t" style="left:1720px;top:866.5px;font-size:9.5px;color:#c9ccd0;width:18px;text-align:center;">-80</div>
<div style="left:1722px;top:876.5px;width:14px;height:1px;background:#3b3f44;"></div>
<div style="left:1722px;top:746.5px;width:14px;height:1px;background:#3b3f44;"></div>
<svg style="left:1706px;top:751px;" width="49" height="40" viewBox="0 0 49 40"><path d="M0.5 5V0.5h5M48.5 5V0.5h-5M0.5 33v4.5h5M48.5 33v4.5h-5" fill="none" stroke="#8b9096" stroke-width="1"/></svg>
<div style="left:1727.5px;top:755px;width:6.2px;height:33px;background:repeating-linear-gradient(#22252a 0,#22252a 1.5px,#3a3e44 1.5px,#3a3e44 2.5px);"></div>
<div style="left:1728px;top:771.2px;width:5.5px;height:1.4px;background:#dfe2e5;"></div>
<svg style="left:1708.3px;top:754.5px;filter:drop-shadow(0 1px 1px rgba(0,0,0,.6));" width="19" height="33.5" viewBox="0 0 19 33.5"><rect x="0" y="0" width="19" height="33.5" rx="1.2" fill="url(#fr)"/><rect x="0" y="16.3" width="19" height="1.3" fill="#6e2224"/></svg>
<svg style="left:1733.9px;top:754.5px;filter:drop-shadow(0 1px 1px rgba(0,0,0,.6));" width="19" height="33.5" viewBox="0 0 19 33.5"><rect x="0" y="0" width="19" height="33.5" rx="1.2" fill="url(#fr)"/><rect x="0" y="16.3" width="19" height="1.3" fill="#6e2224"/></svg>
<div style="left:1769px;top:722px;width:45px;height:157px;background:#111316;"></div>
<div class="t" style="left:1771px;top:727px;font-size:12px;color:#eef0f2;letter-spacing:-1.04px;">-0.4</div>
<div class="t" style="left:1794.3px;top:727px;font-size:12px;color:#eef0f2;letter-spacing:-1.19px;">-0.1</div>
<div class="t" style="left:1769px;top:747.5px;font-size:9.5px;color:#e8eaec;width:12.5px;text-align:right;">12</div>
<div class="t" style="left:1769px;top:760.5px;font-size:9.5px;color:#e8eaec;width:12.5px;text-align:right;">0</div>
<div class="t" style="left:1769px;top:783.5px;font-size:9.5px;color:#e8eaec;width:12.5px;text-align:right;">10</div>
<div class="t" style="left:1769px;top:804.5px;font-size:9.5px;color:#e8eaec;width:12.5px;text-align:right;">20</div>
<div class="t" style="left:1769px;top:835.5px;font-size:9.5px;color:#e8eaec;width:12.5px;text-align:right;">40</div>
<div class="t" style="left:1769px;top:866.5px;font-size:9.5px;color:#e8eaec;width:12.5px;text-align:right;">80</div>
<div style="left:1770px;top:746px;width:10px;height:1px;background:#4c5156;"></div>
<div style="left:1770px;top:771.5px;width:10px;height:1px;background:#4c5156;"></div>
<div style="left:1770px;top:794.8px;width:10px;height:1px;background:#4c5156;"></div>
<div style="left:1770px;top:815.5px;width:10px;height:1px;background:#4c5156;"></div>
<div style="left:1770px;top:847.5px;width:10px;height:1px;background:#4c5156;"></div>
<div style="left:1770px;top:877.8px;width:10px;height:1px;background:#4c5156;"></div>
<div style="left:1783.5px;top:772px;width:12.5px;height:1.6px;background:#f2d022;"></div>
<div style="left:1783.5px;top:775px;width:12.5px;height:20.5px;background:#f0d020;"></div>
<div style="left:1783.5px;top:795.5px;width:12.5px;height:83px;background:#9fe01b;"></div>
<div style="left:1798px;top:772px;width:14px;height:1.6px;background:#f2d022;"></div>
<div style="left:1798px;top:775px;width:14px;height:20.5px;background:#f0d020;"></div>
<div style="left:1798px;top:795.5px;width:14px;height:83px;background:#9fe01b;"></div>
<div class="t" style="left:1773.6px;top:885px;font-size:11.5px;color:#f02020;letter-spacing:-1.06px;">0.0</div>
<div class="t" style="left:1796.3px;top:885px;font-size:11.5px;color:#f02020;letter-spacing:-1.06px;">0.0</div>
<div style="left:1703px;top:918px;width:19px;height:12.5px;background:#494e54;"></div>
<div class="t" style="left:1703px;top:919px;font-size:11.5px;color:#e8eaec;width:19px;text-align:center;letter-spacing:-0.4px;">FX</div>
<div style="left:1723px;top:918px;width:11.5px;height:12.5px;background:#494e54;"></div>
<svg style="left:1726px;top:923px;" width="6" height="3.5" viewBox="0 0 6 3.5"><path d="M0 0h6l-3.0 3.5z" fill="#e8eaec"/></svg>
<div style="left:1739px;top:918px;width:56.5px;height:12.5px;background:#494e54;"></div>
<div class="t" style="left:1739px;top:919.2px;font-size:11px;color:#e8eaec;width:56.5px;text-align:center;letter-spacing:-0.2px;word-spacing:-2.2px;">Mix to File</div>
<div style="left:1797.4px;top:918px;width:17.2px;height:12.5px;background:#494e54;"></div>
<div class="t" style="left:1797.4px;top:919.2px;font-size:11px;color:#e8eaec;width:17.2px;text-align:center;letter-spacing:-0.3px;">On</div>
<div style="left:1702px;top:934.5px;width:113px;height:15.5px;background:#14161a;"></div>
<div class="t" style="left:1702px;top:937px;font-size:11px;color:#eef0f2;width:113px;text-align:center;">Master</div>
<div style="left:1702px;top:954px;width:112px;height:12.5px;background:#3f444a;box-shadow:inset 0 0 0 1px #2a2e32;"></div>
<div class="t" style="left:1702px;top:955.5px;font-size:10.5px;color:#c9ccd0;width:112px;text-align:center;">1 +&nbsp;&nbsp;2</div>
<div style="left:1820px;top:610px;width:84.8px;height:361px;background:#272b30;"></div>
<div style="left:1904.8px;top:610px;width:1.2px;height:361px;background:#1c1f22;"></div>
<div style="left:1826px;top:614px;width:32.5px;height:14px;background:#464b50;box-shadow:inset 0 0 0 1px #34383c;"></div>
<div style="left:1867px;top:614px;width:32.5px;height:14px;background:#464b50;box-shadow:inset 0 0 0 1px #34383c;"></div>
<svg style="left:1835.5px;top:616px;" width="14" height="10" viewBox="0 0 14 10"><rect x="0" y="0" width="6" height="2.5" fill="#e4e6e8"/><rect x="0" y="3" width="14" height="7" fill="#e4e6e8"/></svg>
<svg style="left:1878.5px;top:616px;" width="10" height="10" viewBox="0 0 10 10"><path d="M0.500 0.500h9v9h-9z" fill="none" stroke="#e4e6e8" stroke-width="1"/><rect x="2.5" y="0.5" width="5" height="3.5" fill="none" stroke="#e4e6e8" stroke-width="0.9"/><rect x="2.5" y="6" width="5" height="3.5" fill="#e4e6e8"/></svg>
<div style="left:1825.5px;top:672px;width:26px;height:18.5px;background:#464b50;box-shadow:inset 0 0 0 1px #34383c;"></div>
<div class="t" style="left:1825.5px;top:673.5px;font-size:16px;color:#e4e6e8;width:26px;text-align:center;">S</div>
<div style="left:1857.5px;top:672px;width:42px;height:18.5px;background:#464b50;box-shadow:inset 0 0 0 1px #34383c;"></div>
<div class="t" style="left:1857.5px;top:676px;font-size:11px;color:#e4e6e8;width:42px;text-align:center;letter-spacing:-0.2px;">Bypass</div>
<div style="left:1825.5px;top:697px;width:26px;height:18.5px;background:#464b50;box-shadow:inset 0 0 0 1px #34383c;"></div>
<div class="t" style="left:1825.5px;top:698.5px;font-size:16px;color:#e4e6e8;width:26px;text-align:center;">M</div>
<div style="left:1858px;top:699px;width:13.5px;height:14px;background:#3d4247;"></div>
<div class="t" style="left:1875px;top:697.5px;font-size:9.5px;color:#b9bcc0;">Auto</div>
<div class="t" style="left:1875px;top:706px;font-size:9.5px;color:#b9bcc0;">Rec</div>
<div style="left:1825.5px;top:728px;width:33px;height:32.5px;background:#464b50;box-shadow:inset 0 0 0 1px #34383c;"></div>
<svg style="left:1832px;top:733px;" width="22" height="22" viewBox="0 0 22 22"><path d="M1 1l19 10-19 10z" fill="#c4c7ca"/></svg>
<div style="left:1825.5px;top:786px;width:33px;height:14px;background:#464b50;box-shadow:inset 0 0 0 1px #34383c;"></div>
<div style="left:1867px;top:786px;width:32.5px;height:14px;background:#464b50;box-shadow:inset 0 0 0 1px #34383c;"></div>
<svg style="left:1834px;top:789px;" width="16" height="8" viewBox="0 0 16 8"><rect x="0.700" y="1.700" width="8" height="4.600" rx="2.300" fill="none" stroke="#e4e6e8" stroke-width="1.200"/><rect x="7" y="1.700" width="8" height="4.600" rx="2.300" fill="none" stroke="#e4e6e8" stroke-width="1.200"/></svg>
<svg style="left:1874px;top:789px;" width="19" height="8" viewBox="0 0 19 8"><path d="M0 4h6M2 1.700h3a2.300 2.300 0 0 1 0 4.600H2M19 4h-6M17 1.700h-3a2.300 2.300 0 0 0 0 4.600h3" fill="none" stroke="#e4e6e8" stroke-width="1.200"/></svg>
<div style="left:1826px;top:816px;width:14px;height:14px;background:#3d4247;"></div>
<div class="t" style="left:1843.5px;top:817.5px;font-size:11px;color:#eef0f2;letter-spacing:-0.30px;text-shadow:0.25px 0 0 #eef0f2;">hide Tracks</div>
<div style="left:1826px;top:836px;width:14px;height:14px;background:#3d4247;"></div>
<div class="t" style="left:1843.7px;top:837.5px;font-size:11px;color:#eef0f2;letter-spacing:-0.11px;text-shadow:0.25px 0 0 #eef0f2;">hide Master</div>
<div class="t" style="left:1831.7px;top:858.3px;font-size:11.5px;color:#eef0f2;letter-spacing:-0.50px;text-shadow:0.25px 0 0 #eef0f2;">Solo</div>
<div class="t" style="left:1862px;top:858.3px;font-size:11.5px;color:#eef0f2;letter-spacing:0.02px;text-shadow:0.25px 0 0 #eef0f2;">Monitor</div>
<svg style="left:1827px;top:872.1px;" width="31" height="31" viewBox="0 0 31 31"><circle cx="15.5" cy="16.0" r="14.4" fill="#17191c"/><circle cx="15.5" cy="15.5" r="13.5" fill="url(#kb)"/><circle cx="15.5" cy="15.5" r="11.1" fill="url(#kg)"/><path d="M15.5 14.0L15.5 3.1999999999999993" stroke="#2c3035" stroke-width="2.2"/></svg>
<svg style="left:1866.3px;top:872.1px;" width="31" height="31" viewBox="0 0 31 31"><circle cx="15.5" cy="16.0" r="14.4" fill="#17191c"/><circle cx="15.5" cy="15.5" r="13.5" fill="url(#kb)"/><circle cx="15.5" cy="15.5" r="11.1" fill="url(#kg)"/><path d="M15.5 3.7A11.8 11.8 0 0 0 4.0 18.1" fill="none" stroke="#f2462e" stroke-width="1.7"/><path d="M14.5 15.7L4.0 18.1" stroke="#f2462e" stroke-width="1.6"/></svg>
<div style="left:1829px;top:905.3px;width:26.6px;height:26px;background:#15171a;"></div>
<div class="t" style="left:1829px;top:913.5px;font-size:10.5px;color:#dfe2e5;width:27px;text-align:center;letter-spacing:-0.4px;">0.0</div>
<div style="left:1869px;top:905.3px;width:26.8px;height:26px;background:#15171a;"></div>
<div class="t" style="left:1869px;top:913.5px;font-size:10.5px;color:#dfe2e5;width:27px;text-align:center;letter-spacing:-0.4px;">-17.0</div>
<div style="left:1829.6px;top:935px;width:65.3px;height:14px;background:#4a4f55;box-shadow:inset 0 0 0 1px #2c3034;"></div>
<div class="t" style="left:1829.6px;top:937.3px;font-size:10.5px;color:#a9b6c4;width:65.3px;text-align:center;">AFL</div>
<div style="left:1829.6px;top:953.6px;width:65.3px;height:12.8px;background:#4a4f55;box-shadow:inset 0 0 0 1px #2c3034;"></div>
<svg style="left:1831.5px;top:956px;" width="8" height="9" viewBox="0 0 8 9"><path d="M2.5 0h3v4H8L4 8.500 0 4h2.500z" fill="#f0a020"/></svg>
<div class="t" style="left:1841px;top:955px;font-size:10px;color:#c9ccd0;letter-spacing:0.3px;">-------</div>
<div style="left:352px;top:971px;width:1468px;height:13px;background:#22262a;"></div>
<div style="left:419px;top:973px;width:871.5px;height:8.5px;background:#a6aab9;"></div>
<svg style="left:398px;top:973px;" width="9" height="9" viewBox="0 0 9 9"><path d="M9 0v9L0 4.5z" fill="#4a4f55"/></svg>
<svg style="left:1670px;top:973px;" width="10" height="9" viewBox="0 0 10 9"><path d="M0 0v9l10-4.500z" fill="#4a4f55"/></svg>
</div>
</body></html>
